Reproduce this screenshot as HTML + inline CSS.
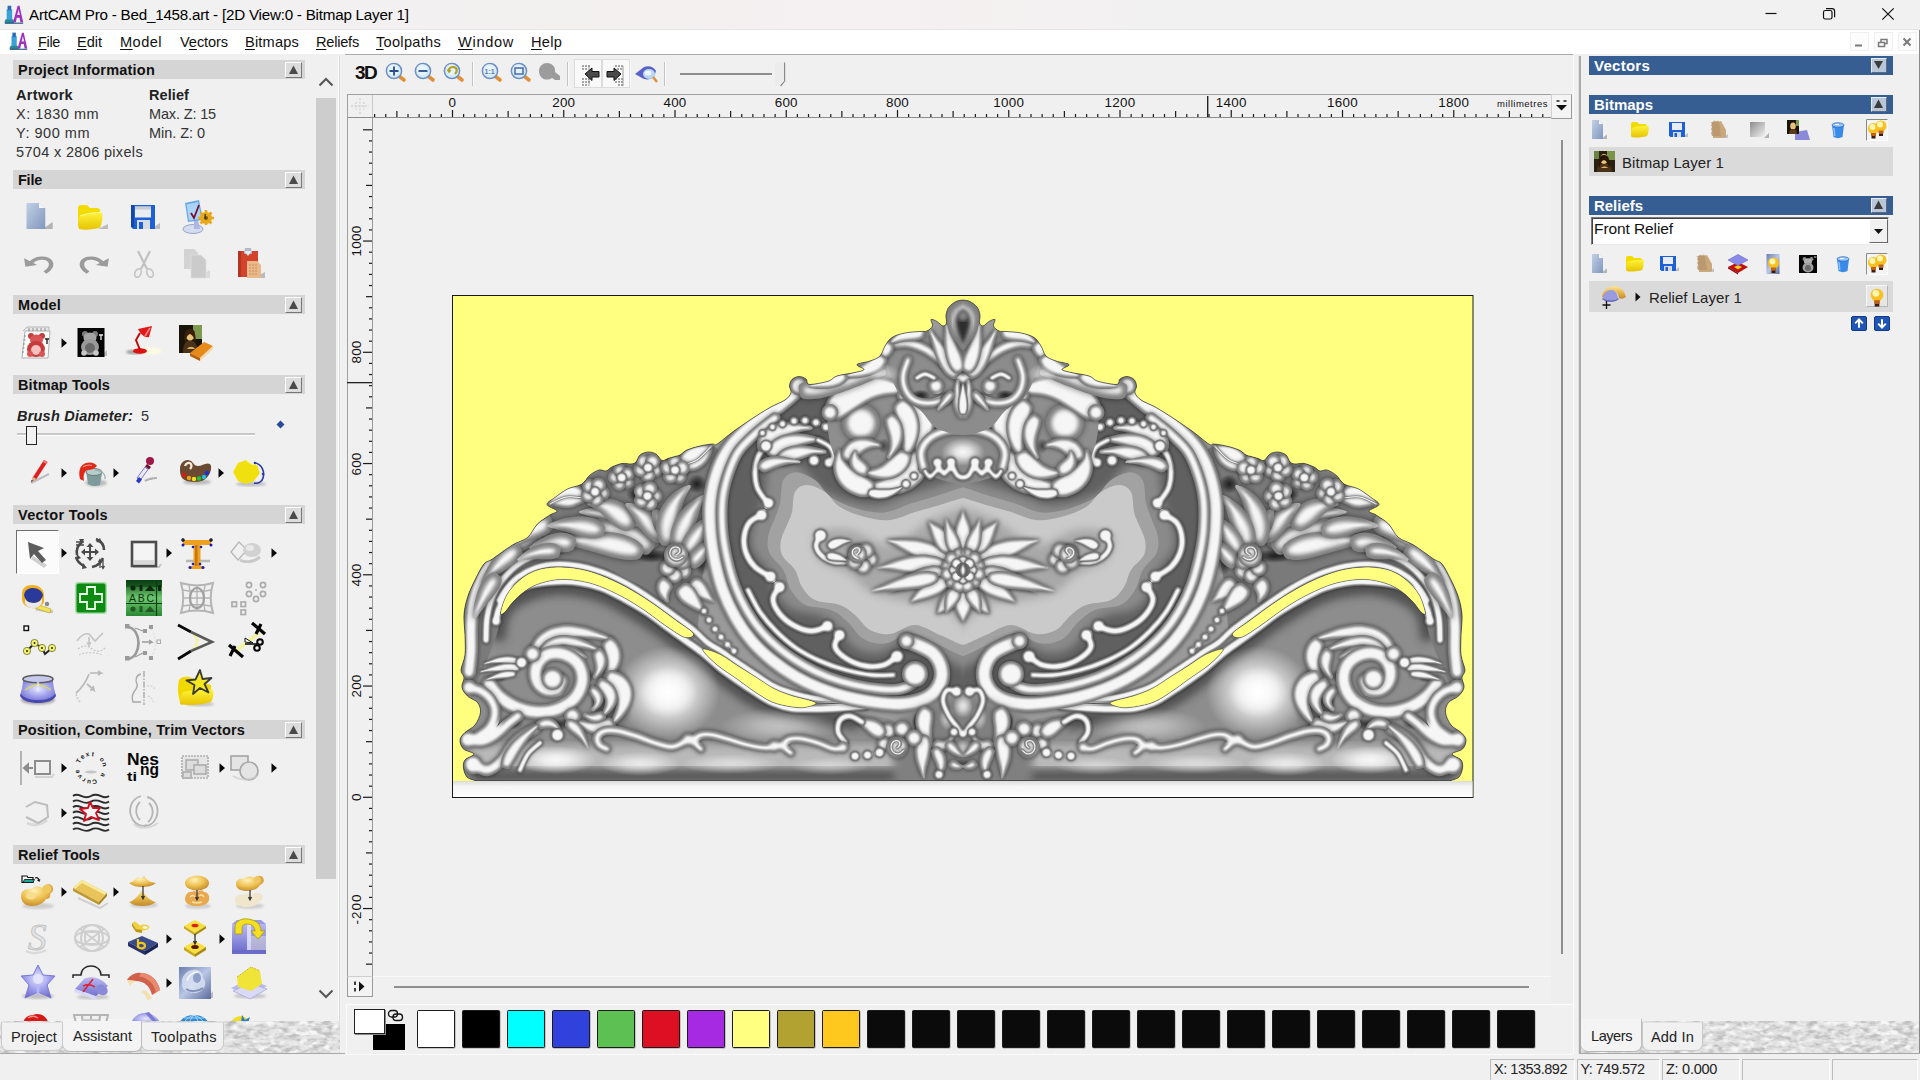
<!DOCTYPE html>
<html lang="en"><head><meta charset="utf-8"><title>ArtCAM Pro - Bed_1458.art</title>
<style>
html,body{margin:0;padding:0;}
body{width:1920px;height:1080px;overflow:hidden;background:#f0f0f0;position:relative;font-family:"Liberation Sans",sans-serif;}
div{position:absolute;box-sizing:border-box;}
svg{position:absolute;overflow:visible;}
.t{white-space:nowrap;line-height:1;}
u{text-decoration-thickness:1px;text-underline-offset:2px;}
</style></head>
<body>
<div style="left:0px;top:0px;width:1920px;height:30px;background:linear-gradient(90deg,#f1f1f1 0%,#f3f0f0 30%,#f5f0f1 45%,#f2f1f1 60%,#f1f1f1 100%);"></div>
<div style="left:0px;top:29px;width:1920px;height:1px;background:#e6e6e6;"></div>
<div class="t" style="left:29px;top:7.32px;font-size:15.2px;color:#000;letter-spacing:-0.224px;">ArtCAM Pro - Bed_1458.art - [2D View:0 - Bitmap Layer 1]</div>
<svg style="left:1760px;top:4px" width="140" height="22" viewBox="0 0 140 22"><path d="M5.5 9.5h11" stroke="#111" stroke-width="1.2" fill="none"/><rect x="63.5" y="6.5" width="8.5" height="8.5" rx="1.8" fill="none" stroke="#111" stroke-width="1.2"/><path d="M66 4.6h6a2.6 2.6 0 0 1 2.6 2.6v6" fill="none" stroke="#111" stroke-width="1.2"/><path d="M122.3 4.3l11.4 11.4M133.7 4.3l-11.4 11.4" stroke="#111" stroke-width="1.2" fill="none"/></svg>
<div style="left:0px;top:30px;width:1920px;height:24px;background:#ffffff;"></div>
<div style="left:345px;top:54px;width:1228px;height:1px;background:#a9a9a9;"></div>
<div class="t" style="left:38px;top:34.85px;font-size:14.6px;color:#111;letter-spacing:-0.382px;"><u>F</u>ile</div>
<div class="t" style="left:77px;top:34.85px;font-size:14.6px;color:#111;letter-spacing:-0.039px;"><u>E</u>dit</div>
<div class="t" style="left:120px;top:34.85px;font-size:14.6px;color:#111;letter-spacing:0.447px;"><u>M</u>odel</div>
<div class="t" style="left:180px;top:34.85px;font-size:14.6px;color:#111;letter-spacing:-0.099px;">V<u>e</u>ctors</div>
<div class="t" style="left:245px;top:34.85px;font-size:14.6px;color:#111;letter-spacing:0.180px;"><u>B</u>itmaps</div>
<div class="t" style="left:316px;top:34.85px;font-size:14.6px;color:#111;letter-spacing:-0.233px;"><u>R</u>eliefs</div>
<div class="t" style="left:376px;top:34.85px;font-size:14.6px;color:#111;letter-spacing:0.278px;"><u>T</u>oolpaths</div>
<div class="t" style="left:458px;top:34.85px;font-size:14.6px;color:#111;letter-spacing:0.679px;"><u>W</u>indow</div>
<div class="t" style="left:531px;top:34.85px;font-size:14.6px;color:#111;letter-spacing:0.243px;"><u>H</u>elp</div>
<div style="left:1850px;top:32px;width:19px;height:19px;background:#fcfcfc;border:1px solid #f0f0f0;"></div>
<div style="left:1874px;top:32px;width:19px;height:19px;background:#fcfcfc;border:1px solid #f0f0f0;"></div>
<div style="left:1898px;top:32px;width:19px;height:19px;background:#fcfcfc;border:1px solid #f0f0f0;"></div>
<svg style="left:1850px;top:32px" width="70" height="20" viewBox="0 0 70 20"><path d="M5 13.5h7" stroke="#7a7a7a" stroke-width="2"/><path d="M28.5 10.5h6v4h-6zM31 10V7.5h6v4h-2" fill="none" stroke="#7a7a7a" stroke-width="1.5"/><path d="M53.5 6.5l7 7M60.5 6.5l-7 7" stroke="#7a7a7a" stroke-width="2"/></svg>
<div style="left:1919px;top:30px;width:1px;height:1050px;background:#8a8a8a;"></div>
<div style="left:338px;top:56px;width:1px;height:998px;background:#fbfbfb;"></div>
<div style="left:339px;top:56px;width:1px;height:998px;background:#d9d9d9;"></div>
<div style="left:13px;top:60px;width:292px;height:19px;background:#d5d5d5;"></div>
<div class="t" style="left:18px;top:63.24px;font-size:14.5px;color:#111;letter-spacing:0.214px;font-weight:bold;">Project Information</div>
<div style="left:285px;top:62px;width:17px;height:16px;background:#dcdcdc;border-top:1px solid #fff;border-left:1px solid #fff;border-right:1px solid #777;border-bottom:1px solid #777;"></div>
<svg style="left:288px;top:65px" width="11" height="10" viewBox="0 0 11 10"><path d="M5.5 0.5L10 9H1z" fill="#4a4a4a"/></svg>
<div style="left:13px;top:170px;width:292px;height:19px;background:#d5d5d5;"></div>
<div class="t" style="left:18px;top:173.24px;font-size:14.5px;color:#111;letter-spacing:-0.245px;font-weight:bold;">File</div>
<div style="left:285px;top:172px;width:17px;height:16px;background:#dcdcdc;border-top:1px solid #fff;border-left:1px solid #fff;border-right:1px solid #777;border-bottom:1px solid #777;"></div>
<svg style="left:288px;top:175px" width="11" height="10" viewBox="0 0 11 10"><path d="M5.5 0.5L10 9H1z" fill="#4a4a4a"/></svg>
<div style="left:13px;top:295px;width:292px;height:19px;background:#d5d5d5;"></div>
<div class="t" style="left:18px;top:298.24px;font-size:14.5px;color:#111;letter-spacing:0.223px;font-weight:bold;">Model</div>
<div style="left:285px;top:297px;width:17px;height:16px;background:#dcdcdc;border-top:1px solid #fff;border-left:1px solid #fff;border-right:1px solid #777;border-bottom:1px solid #777;"></div>
<svg style="left:288px;top:300px" width="11" height="10" viewBox="0 0 11 10"><path d="M5.5 0.5L10 9H1z" fill="#4a4a4a"/></svg>
<div style="left:13px;top:375px;width:292px;height:19px;background:#d5d5d5;"></div>
<div class="t" style="left:18px;top:378.24px;font-size:14.5px;color:#111;letter-spacing:0.103px;font-weight:bold;">Bitmap Tools</div>
<div style="left:285px;top:377px;width:17px;height:16px;background:#dcdcdc;border-top:1px solid #fff;border-left:1px solid #fff;border-right:1px solid #777;border-bottom:1px solid #777;"></div>
<svg style="left:288px;top:380px" width="11" height="10" viewBox="0 0 11 10"><path d="M5.5 0.5L10 9H1z" fill="#4a4a4a"/></svg>
<div style="left:13px;top:505px;width:292px;height:19px;background:#d5d5d5;"></div>
<div class="t" style="left:18px;top:508.24px;font-size:14.5px;color:#111;letter-spacing:0.338px;font-weight:bold;">Vector Tools</div>
<div style="left:285px;top:507px;width:17px;height:16px;background:#dcdcdc;border-top:1px solid #fff;border-left:1px solid #fff;border-right:1px solid #777;border-bottom:1px solid #777;"></div>
<svg style="left:288px;top:510px" width="11" height="10" viewBox="0 0 11 10"><path d="M5.5 0.5L10 9H1z" fill="#4a4a4a"/></svg>
<div style="left:13px;top:720px;width:292px;height:19px;background:#d5d5d5;"></div>
<div class="t" style="left:18px;top:723.24px;font-size:14.5px;color:#111;letter-spacing:0.149px;font-weight:bold;">Position, Combine, Trim Vectors</div>
<div style="left:285px;top:722px;width:17px;height:16px;background:#dcdcdc;border-top:1px solid #fff;border-left:1px solid #fff;border-right:1px solid #777;border-bottom:1px solid #777;"></div>
<svg style="left:288px;top:725px" width="11" height="10" viewBox="0 0 11 10"><path d="M5.5 0.5L10 9H1z" fill="#4a4a4a"/></svg>
<div style="left:13px;top:845px;width:292px;height:19px;background:#d5d5d5;"></div>
<div class="t" style="left:18px;top:848.24px;font-size:14.5px;color:#111;letter-spacing:0.075px;font-weight:bold;">Relief Tools</div>
<div style="left:285px;top:847px;width:17px;height:16px;background:#dcdcdc;border-top:1px solid #fff;border-left:1px solid #fff;border-right:1px solid #777;border-bottom:1px solid #777;"></div>
<svg style="left:288px;top:850px" width="11" height="10" viewBox="0 0 11 10"><path d="M5.5 0.5L10 9H1z" fill="#4a4a4a"/></svg>
<div class="t" style="left:16px;top:88.14px;font-size:14.5px;color:#222;letter-spacing:0.317px;font-weight:bold;">Artwork</div>
<div class="t" style="left:149px;top:88.14px;font-size:14.5px;color:#222;letter-spacing:0.086px;font-weight:bold;">Relief</div>
<div class="t" style="left:16px;top:107.14px;font-size:14.5px;color:#333;letter-spacing:0.483px;">X: 1830 mm</div>
<div class="t" style="left:149px;top:107.14px;font-size:14.5px;color:#333;letter-spacing:-0.149px;">Max. Z: 15</div>
<div class="t" style="left:16px;top:126.14px;font-size:14.5px;color:#333;letter-spacing:0.522px;">Y: 900 mm</div>
<div class="t" style="left:149px;top:126.14px;font-size:14.5px;color:#333;letter-spacing:-0.044px;">Min. Z: 0</div>
<div class="t" style="left:16px;top:145.14px;font-size:14.5px;color:#333;letter-spacing:0.338px;">5704 x 2806 pixels</div>
<div class="t" style="left:17px;top:409.24px;font-size:14.5px;color:#222;letter-spacing:0.213px;font-weight:bold;font-style:italic;">Brush Diameter:</div>
<div class="t" style="left:141px;top:409.24px;font-size:14.5px;color:#333;">5</div>
<div style="left:17px;top:433px;width:238px;height:2px;background:#c8c8c8;"></div>
<div style="left:17px;top:435px;width:238px;height:1px;background:#fdfdfd;"></div>
<div style="left:26px;top:426px;width:11px;height:19px;background:#f2f2f2;border:1.5px solid #222;"></div>
<svg style="left:276px;top:420px" width="9" height="9" viewBox="0 0 9 9"><path d="M4.5 0.5L8.5 4.5L4.5 8.5L0.5 4.5z" fill="#2a4a9a"/></svg>
<div style="left:316px;top:98px;width:20px;height:781px;background:#cdcdcd;"></div>
<svg style="left:316px;top:74px" width="20" height="16" viewBox="0 0 20 16"><path d="M3.5 11.5L10 5l6.5 6.5" fill="none" stroke="#555" stroke-width="2"/></svg>
<svg style="left:316px;top:986px" width="20" height="16" viewBox="0 0 20 16"><path d="M3.5 4.5L10 11l6.5-6.5" fill="none" stroke="#555" stroke-width="2"/></svg>
<div style="left:0px;top:1021px;width:340px;height:33px;background:#dedede;"></div>
<svg style="left:0;top:1021px" width="340" height="33" viewBox="0 0 340 33"><defs><filter id="nz" x="0" y="0" width="100%" height="100%" color-interpolation-filters="sRGB"><feTurbulence type="fractalNoise" baseFrequency="0.09 0.22" numOctaves="3" seed="7"/><feColorMatrix type="matrix" values="0 0 0 0 0.74  0 0 0 0 0.74  0 0 0 0 0.74  0 3.2 0 0 -1.25"/></filter><filter id="nz2" x="0" y="0" width="100%" height="100%" color-interpolation-filters="sRGB"><feTurbulence type="fractalNoise" baseFrequency="0.12 0.2" numOctaves="2" seed="21"/><feColorMatrix type="matrix" values="0 0 0 0 0.97  0 0 0 0 0.97  0 0 0 0 0.97  3 0 0 0 -1.3"/></filter></defs><rect x="0" y="0" width="340" height="33" fill="#e2e2e2"/><rect x="0" y="0" width="340" height="33" filter="url(#nz)"/><rect x="0" y="0" width="340" height="33" filter="url(#nz2)"/></svg>
<div style="left:1px;top:1022px;width:62px;height:29px;background:#f1f1f1;border-radius:0 0 7px 7px;border:1px solid #c9c9c9;border-top-color:#e2e2e2;"></div>
<div class="t" style="left:11px;top:1030.35px;font-size:14.6px;color:#222;letter-spacing:0.080px;">Project</div>
<div style="left:141px;top:1022px;width:83px;height:29px;background:#f1f1f1;border-radius:0 0 7px 7px;border:1px solid #c9c9c9;border-top-color:#e2e2e2;"></div>
<div class="t" style="left:151px;top:1030.35px;font-size:14.6px;color:#222;letter-spacing:0.389px;">Toolpaths</div>
<div style="left:63px;top:1019px;width:79px;height:33px;background:#f4f4f4;border-radius:0 0 7px 7px;border-right:1px solid #bdbdbd;border-bottom:1px solid #b5b5b5;"></div>
<div class="t" style="left:73px;top:1029.35px;font-size:14.6px;color:#222;letter-spacing:-0.026px;">Assistant</div>
<div style="left:0px;top:1053px;width:345px;height:1px;background:#a8a8a8;"></div>
<div style="left:0px;top:1054px;width:1920px;height:26px;background:#f0f0f0;"></div>
<div class="t" style="left:355px;top:63.42px;font-size:19px;color:#111;letter-spacing:-1.645px;font-weight:bold;">3D</div>
<div style="left:472px;top:62px;width:1px;height:24px;background:#c4c4c4;"></div>
<div style="left:473px;top:62px;width:1px;height:24px;background:#fafafa;"></div>
<div style="left:567px;top:62px;width:1px;height:24px;background:#c4c4c4;"></div>
<div style="left:568px;top:62px;width:1px;height:24px;background:#fafafa;"></div>
<div style="left:574px;top:62px;width:1px;height:24px;background:#c4c4c4;"></div>
<div style="left:575px;top:62px;width:1px;height:24px;background:#fafafa;"></div>
<div style="left:664px;top:62px;width:1px;height:24px;background:#c4c4c4;"></div>
<div style="left:665px;top:62px;width:1px;height:24px;background:#fafafa;"></div>
<div style="left:575px;top:60px;width:27px;height:27px;background:#f8f8f8;"></div>
<div style="left:604px;top:60px;width:27px;height:27px;background:#f8f8f8;"></div>
<div style="left:680px;top:73px;width:92px;height:2px;background:#8d8d8d;"></div>
<svg style="left:773px;top:61px" width="14" height="28" viewBox="0 0 14 28"><path d="M11.5 1.5V20l-4 5" fill="none" stroke="#8a8a8a" stroke-width="1.4"/><path d="M2 1.5h9V20l-4 4.5H2z" fill="#ececec"/></svg>
<div style="left:347px;top:94px;width:1225px;height:1px;background:#a0a0a0;"></div>
<div style="left:347px;top:117px;width:1204px;height:1px;background:#8c8c8c;"></div>
<div style="left:347px;top:94px;width:1px;height:903px;background:#a0a0a0;"></div>
<div style="left:372px;top:118px;width:1px;height:858px;background:#9a9a9a;"></div>
<div style="left:372px;top:95px;width:1px;height:22px;background:#c8c8c8;"></div>
<div style="left:373px;top:118px;width:1178px;height:858px;background:#f0f0f0;"></div>
<div style="left:1551px;top:118px;width:22px;height:886px;background:#eeeeee;"></div>
<svg style="left:0;top:0" width="1920" height="120" viewBox="0 0 1920 120"><rect x="374.02" y="114" width="1.2" height="3" fill="#1a1a1a"/><rect x="385.15" y="114" width="1.2" height="3" fill="#1a1a1a"/><rect x="396.27" y="111" width="1.2" height="6" fill="#1a1a1a"/><rect x="407.40" y="114" width="1.2" height="3" fill="#1a1a1a"/><rect x="418.52" y="114" width="1.2" height="3" fill="#1a1a1a"/><rect x="429.65" y="114" width="1.2" height="3" fill="#1a1a1a"/><rect x="440.77" y="114" width="1.2" height="3" fill="#1a1a1a"/><rect x="451.90" y="110" width="1.2" height="7" fill="#1a1a1a"/><rect x="463.02" y="114" width="1.2" height="3" fill="#1a1a1a"/><rect x="474.15" y="114" width="1.2" height="3" fill="#1a1a1a"/><rect x="485.27" y="114" width="1.2" height="3" fill="#1a1a1a"/><rect x="496.40" y="114" width="1.2" height="3" fill="#1a1a1a"/><rect x="507.52" y="111" width="1.2" height="6" fill="#1a1a1a"/><rect x="518.65" y="114" width="1.2" height="3" fill="#1a1a1a"/><rect x="529.77" y="114" width="1.2" height="3" fill="#1a1a1a"/><rect x="540.90" y="114" width="1.2" height="3" fill="#1a1a1a"/><rect x="552.02" y="114" width="1.2" height="3" fill="#1a1a1a"/><rect x="563.15" y="110" width="1.2" height="7" fill="#1a1a1a"/><rect x="574.27" y="114" width="1.2" height="3" fill="#1a1a1a"/><rect x="585.40" y="114" width="1.2" height="3" fill="#1a1a1a"/><rect x="596.52" y="114" width="1.2" height="3" fill="#1a1a1a"/><rect x="607.65" y="114" width="1.2" height="3" fill="#1a1a1a"/><rect x="618.77" y="111" width="1.2" height="6" fill="#1a1a1a"/><rect x="629.90" y="114" width="1.2" height="3" fill="#1a1a1a"/><rect x="641.02" y="114" width="1.2" height="3" fill="#1a1a1a"/><rect x="652.15" y="114" width="1.2" height="3" fill="#1a1a1a"/><rect x="663.27" y="114" width="1.2" height="3" fill="#1a1a1a"/><rect x="674.40" y="110" width="1.2" height="7" fill="#1a1a1a"/><rect x="685.52" y="114" width="1.2" height="3" fill="#1a1a1a"/><rect x="696.65" y="114" width="1.2" height="3" fill="#1a1a1a"/><rect x="707.77" y="114" width="1.2" height="3" fill="#1a1a1a"/><rect x="718.90" y="114" width="1.2" height="3" fill="#1a1a1a"/><rect x="730.02" y="111" width="1.2" height="6" fill="#1a1a1a"/><rect x="741.15" y="114" width="1.2" height="3" fill="#1a1a1a"/><rect x="752.27" y="114" width="1.2" height="3" fill="#1a1a1a"/><rect x="763.40" y="114" width="1.2" height="3" fill="#1a1a1a"/><rect x="774.52" y="114" width="1.2" height="3" fill="#1a1a1a"/><rect x="785.65" y="110" width="1.2" height="7" fill="#1a1a1a"/><rect x="796.77" y="114" width="1.2" height="3" fill="#1a1a1a"/><rect x="807.90" y="114" width="1.2" height="3" fill="#1a1a1a"/><rect x="819.02" y="114" width="1.2" height="3" fill="#1a1a1a"/><rect x="830.15" y="114" width="1.2" height="3" fill="#1a1a1a"/><rect x="841.27" y="111" width="1.2" height="6" fill="#1a1a1a"/><rect x="852.40" y="114" width="1.2" height="3" fill="#1a1a1a"/><rect x="863.52" y="114" width="1.2" height="3" fill="#1a1a1a"/><rect x="874.65" y="114" width="1.2" height="3" fill="#1a1a1a"/><rect x="885.77" y="114" width="1.2" height="3" fill="#1a1a1a"/><rect x="896.90" y="110" width="1.2" height="7" fill="#1a1a1a"/><rect x="908.02" y="114" width="1.2" height="3" fill="#1a1a1a"/><rect x="919.15" y="114" width="1.2" height="3" fill="#1a1a1a"/><rect x="930.27" y="114" width="1.2" height="3" fill="#1a1a1a"/><rect x="941.40" y="114" width="1.2" height="3" fill="#1a1a1a"/><rect x="952.52" y="111" width="1.2" height="6" fill="#1a1a1a"/><rect x="963.65" y="114" width="1.2" height="3" fill="#1a1a1a"/><rect x="974.77" y="114" width="1.2" height="3" fill="#1a1a1a"/><rect x="985.90" y="114" width="1.2" height="3" fill="#1a1a1a"/><rect x="997.02" y="114" width="1.2" height="3" fill="#1a1a1a"/><rect x="1008.15" y="110" width="1.2" height="7" fill="#1a1a1a"/><rect x="1019.27" y="114" width="1.2" height="3" fill="#1a1a1a"/><rect x="1030.40" y="114" width="1.2" height="3" fill="#1a1a1a"/><rect x="1041.53" y="114" width="1.2" height="3" fill="#1a1a1a"/><rect x="1052.65" y="114" width="1.2" height="3" fill="#1a1a1a"/><rect x="1063.78" y="111" width="1.2" height="6" fill="#1a1a1a"/><rect x="1074.90" y="114" width="1.2" height="3" fill="#1a1a1a"/><rect x="1086.03" y="114" width="1.2" height="3" fill="#1a1a1a"/><rect x="1097.15" y="114" width="1.2" height="3" fill="#1a1a1a"/><rect x="1108.28" y="114" width="1.2" height="3" fill="#1a1a1a"/><rect x="1119.40" y="110" width="1.2" height="7" fill="#1a1a1a"/><rect x="1130.53" y="114" width="1.2" height="3" fill="#1a1a1a"/><rect x="1141.65" y="114" width="1.2" height="3" fill="#1a1a1a"/><rect x="1152.78" y="114" width="1.2" height="3" fill="#1a1a1a"/><rect x="1163.90" y="114" width="1.2" height="3" fill="#1a1a1a"/><rect x="1175.03" y="111" width="1.2" height="6" fill="#1a1a1a"/><rect x="1186.15" y="114" width="1.2" height="3" fill="#1a1a1a"/><rect x="1197.28" y="114" width="1.2" height="3" fill="#1a1a1a"/><rect x="1208.40" y="114" width="1.2" height="3" fill="#1a1a1a"/><rect x="1219.53" y="114" width="1.2" height="3" fill="#1a1a1a"/><rect x="1230.65" y="110" width="1.2" height="7" fill="#1a1a1a"/><rect x="1241.78" y="114" width="1.2" height="3" fill="#1a1a1a"/><rect x="1252.90" y="114" width="1.2" height="3" fill="#1a1a1a"/><rect x="1264.03" y="114" width="1.2" height="3" fill="#1a1a1a"/><rect x="1275.15" y="114" width="1.2" height="3" fill="#1a1a1a"/><rect x="1286.28" y="111" width="1.2" height="6" fill="#1a1a1a"/><rect x="1297.40" y="114" width="1.2" height="3" fill="#1a1a1a"/><rect x="1308.53" y="114" width="1.2" height="3" fill="#1a1a1a"/><rect x="1319.65" y="114" width="1.2" height="3" fill="#1a1a1a"/><rect x="1330.78" y="114" width="1.2" height="3" fill="#1a1a1a"/><rect x="1341.90" y="110" width="1.2" height="7" fill="#1a1a1a"/><rect x="1353.03" y="114" width="1.2" height="3" fill="#1a1a1a"/><rect x="1364.15" y="114" width="1.2" height="3" fill="#1a1a1a"/><rect x="1375.28" y="114" width="1.2" height="3" fill="#1a1a1a"/><rect x="1386.40" y="114" width="1.2" height="3" fill="#1a1a1a"/><rect x="1397.53" y="111" width="1.2" height="6" fill="#1a1a1a"/><rect x="1408.65" y="114" width="1.2" height="3" fill="#1a1a1a"/><rect x="1419.78" y="114" width="1.2" height="3" fill="#1a1a1a"/><rect x="1430.90" y="114" width="1.2" height="3" fill="#1a1a1a"/><rect x="1442.03" y="114" width="1.2" height="3" fill="#1a1a1a"/><rect x="1453.15" y="110" width="1.2" height="7" fill="#1a1a1a"/><rect x="1464.28" y="114" width="1.2" height="3" fill="#1a1a1a"/><rect x="1475.40" y="114" width="1.2" height="3" fill="#1a1a1a"/><rect x="1486.53" y="114" width="1.2" height="3" fill="#1a1a1a"/><rect x="1497.65" y="114" width="1.2" height="3" fill="#1a1a1a"/><rect x="1508.78" y="111" width="1.2" height="6" fill="#1a1a1a"/><rect x="1519.90" y="114" width="1.2" height="3" fill="#1a1a1a"/><rect x="1531.03" y="114" width="1.2" height="3" fill="#1a1a1a"/><rect x="1542.15" y="114" width="1.2" height="3" fill="#1a1a1a"/><rect x="1207" y="96" width="1.4" height="21" fill="#222"/></svg>
<div class="t" style="left:448.5px;top:96.43px;font-size:13.4px;color:#111;letter-spacing:0.547px;">0</div>
<div class="t" style="left:552.25px;top:96.43px;font-size:13.4px;color:#111;letter-spacing:0.214px;">200</div>
<div class="t" style="left:663.5px;top:96.43px;font-size:13.4px;color:#111;letter-spacing:0.214px;">400</div>
<div class="t" style="left:774.75px;top:96.43px;font-size:13.4px;color:#111;letter-spacing:0.214px;">600</div>
<div class="t" style="left:886.0px;top:96.43px;font-size:13.4px;color:#111;letter-spacing:0.214px;">800</div>
<div class="t" style="left:993.25px;top:96.43px;font-size:13.4px;color:#111;letter-spacing:0.297px;">1000</div>
<div class="t" style="left:1104.5px;top:96.43px;font-size:13.4px;color:#111;letter-spacing:0.297px;">1200</div>
<div class="t" style="left:1215.75px;top:96.43px;font-size:13.4px;color:#111;letter-spacing:0.297px;">1400</div>
<div class="t" style="left:1327.0px;top:96.43px;font-size:13.4px;color:#111;letter-spacing:0.297px;">1600</div>
<div class="t" style="left:1438.25px;top:96.43px;font-size:13.4px;color:#111;letter-spacing:0.297px;">1800</div>
<div class="t" style="left:1497px;top:99.41px;font-size:9.5px;color:#111;letter-spacing:0.510px;font-family:"DejaVu Sans",sans-serif;">millimetres</div>
<div style="left:1551px;top:94px;width:21px;height:25px;background:#f4f4f4;border:1px solid #9a9a9a;border-top-color:#d0d0d0;border-left-color:#d0d0d0;"></div>
<svg style="left:1554px;top:98px" width="15" height="16" viewBox="0 0 15 16"><path d="M2.5 3h3M9.5 3h3" stroke="#222" stroke-width="1.6"/><path d="M2 7h11L7.5 12.5z" fill="#111"/></svg>
<svg style="left:0;top:0" width="380" height="1000" viewBox="0 0 380 1000"><rect x="363" y="129.20" width="9" height="1.2" fill="#1a1a1a"/><rect x="369" y="140.32" width="3" height="1.2" fill="#1a1a1a"/><rect x="369" y="151.45" width="3" height="1.2" fill="#1a1a1a"/><rect x="369" y="162.57" width="3" height="1.2" fill="#1a1a1a"/><rect x="369" y="173.70" width="3" height="1.2" fill="#1a1a1a"/><rect x="366" y="184.82" width="6" height="1.2" fill="#1a1a1a"/><rect x="369" y="195.95" width="3" height="1.2" fill="#1a1a1a"/><rect x="369" y="207.07" width="3" height="1.2" fill="#1a1a1a"/><rect x="369" y="218.20" width="3" height="1.2" fill="#1a1a1a"/><rect x="369" y="229.32" width="3" height="1.2" fill="#1a1a1a"/><rect x="363" y="240.45" width="9" height="1.2" fill="#1a1a1a"/><rect x="369" y="251.57" width="3" height="1.2" fill="#1a1a1a"/><rect x="369" y="262.70" width="3" height="1.2" fill="#1a1a1a"/><rect x="369" y="273.82" width="3" height="1.2" fill="#1a1a1a"/><rect x="369" y="284.95" width="3" height="1.2" fill="#1a1a1a"/><rect x="366" y="296.07" width="6" height="1.2" fill="#1a1a1a"/><rect x="369" y="307.20" width="3" height="1.2" fill="#1a1a1a"/><rect x="369" y="318.32" width="3" height="1.2" fill="#1a1a1a"/><rect x="369" y="329.45" width="3" height="1.2" fill="#1a1a1a"/><rect x="369" y="340.57" width="3" height="1.2" fill="#1a1a1a"/><rect x="363" y="351.70" width="9" height="1.2" fill="#1a1a1a"/><rect x="369" y="362.82" width="3" height="1.2" fill="#1a1a1a"/><rect x="369" y="373.95" width="3" height="1.2" fill="#1a1a1a"/><rect x="369" y="385.07" width="3" height="1.2" fill="#1a1a1a"/><rect x="369" y="396.20" width="3" height="1.2" fill="#1a1a1a"/><rect x="366" y="407.32" width="6" height="1.2" fill="#1a1a1a"/><rect x="369" y="418.45" width="3" height="1.2" fill="#1a1a1a"/><rect x="369" y="429.57" width="3" height="1.2" fill="#1a1a1a"/><rect x="369" y="440.70" width="3" height="1.2" fill="#1a1a1a"/><rect x="369" y="451.82" width="3" height="1.2" fill="#1a1a1a"/><rect x="363" y="462.95" width="9" height="1.2" fill="#1a1a1a"/><rect x="369" y="474.07" width="3" height="1.2" fill="#1a1a1a"/><rect x="369" y="485.20" width="3" height="1.2" fill="#1a1a1a"/><rect x="369" y="496.32" width="3" height="1.2" fill="#1a1a1a"/><rect x="369" y="507.45" width="3" height="1.2" fill="#1a1a1a"/><rect x="366" y="518.57" width="6" height="1.2" fill="#1a1a1a"/><rect x="369" y="529.70" width="3" height="1.2" fill="#1a1a1a"/><rect x="369" y="540.82" width="3" height="1.2" fill="#1a1a1a"/><rect x="369" y="551.95" width="3" height="1.2" fill="#1a1a1a"/><rect x="369" y="563.07" width="3" height="1.2" fill="#1a1a1a"/><rect x="363" y="574.20" width="9" height="1.2" fill="#1a1a1a"/><rect x="369" y="585.32" width="3" height="1.2" fill="#1a1a1a"/><rect x="369" y="596.45" width="3" height="1.2" fill="#1a1a1a"/><rect x="369" y="607.57" width="3" height="1.2" fill="#1a1a1a"/><rect x="369" y="618.70" width="3" height="1.2" fill="#1a1a1a"/><rect x="366" y="629.82" width="6" height="1.2" fill="#1a1a1a"/><rect x="369" y="640.95" width="3" height="1.2" fill="#1a1a1a"/><rect x="369" y="652.07" width="3" height="1.2" fill="#1a1a1a"/><rect x="369" y="663.20" width="3" height="1.2" fill="#1a1a1a"/><rect x="369" y="674.32" width="3" height="1.2" fill="#1a1a1a"/><rect x="363" y="685.45" width="9" height="1.2" fill="#1a1a1a"/><rect x="369" y="696.57" width="3" height="1.2" fill="#1a1a1a"/><rect x="369" y="707.70" width="3" height="1.2" fill="#1a1a1a"/><rect x="369" y="718.82" width="3" height="1.2" fill="#1a1a1a"/><rect x="369" y="729.95" width="3" height="1.2" fill="#1a1a1a"/><rect x="366" y="741.07" width="6" height="1.2" fill="#1a1a1a"/><rect x="369" y="752.20" width="3" height="1.2" fill="#1a1a1a"/><rect x="369" y="763.32" width="3" height="1.2" fill="#1a1a1a"/><rect x="369" y="774.45" width="3" height="1.2" fill="#1a1a1a"/><rect x="369" y="785.57" width="3" height="1.2" fill="#1a1a1a"/><rect x="363" y="796.70" width="9" height="1.2" fill="#1a1a1a"/><rect x="369" y="807.82" width="3" height="1.2" fill="#1a1a1a"/><rect x="369" y="818.95" width="3" height="1.2" fill="#1a1a1a"/><rect x="369" y="830.07" width="3" height="1.2" fill="#1a1a1a"/><rect x="369" y="841.20" width="3" height="1.2" fill="#1a1a1a"/><rect x="366" y="852.32" width="6" height="1.2" fill="#1a1a1a"/><rect x="369" y="863.45" width="3" height="1.2" fill="#1a1a1a"/><rect x="369" y="874.57" width="3" height="1.2" fill="#1a1a1a"/><rect x="369" y="885.70" width="3" height="1.2" fill="#1a1a1a"/><rect x="369" y="896.82" width="3" height="1.2" fill="#1a1a1a"/><rect x="363" y="907.95" width="9" height="1.2" fill="#1a1a1a"/><rect x="369" y="919.07" width="3" height="1.2" fill="#1a1a1a"/><rect x="369" y="930.20" width="3" height="1.2" fill="#1a1a1a"/><rect x="369" y="941.32" width="3" height="1.2" fill="#1a1a1a"/><rect x="369" y="952.45" width="3" height="1.2" fill="#1a1a1a"/><rect x="366" y="963.57" width="6" height="1.2" fill="#1a1a1a"/><rect x="347" y="382" width="25" height="1.3" fill="#222"/></svg>
<div class="t" style="left:307px;top:231.05px;width:100px;height:20px;line-height:20px;text-align:center;font-size:13.4px;color:#111;transform:rotate(-90deg);letter-spacing:0.297px;">1000</div>
<div class="t" style="left:307px;top:342.30px;width:100px;height:20px;line-height:20px;text-align:center;font-size:13.4px;color:#111;transform:rotate(-90deg);letter-spacing:0.214px;">800</div>
<div class="t" style="left:307px;top:453.55px;width:100px;height:20px;line-height:20px;text-align:center;font-size:13.4px;color:#111;transform:rotate(-90deg);letter-spacing:0.214px;">600</div>
<div class="t" style="left:307px;top:564.80px;width:100px;height:20px;line-height:20px;text-align:center;font-size:13.4px;color:#111;transform:rotate(-90deg);letter-spacing:0.214px;">400</div>
<div class="t" style="left:307px;top:676.05px;width:100px;height:20px;line-height:20px;text-align:center;font-size:13.4px;color:#111;transform:rotate(-90deg);letter-spacing:0.214px;">200</div>
<div class="t" style="left:307px;top:787.30px;width:100px;height:20px;line-height:20px;text-align:center;font-size:13.4px;color:#111;transform:rotate(-90deg);letter-spacing:0.547px;">0</div>
<div class="t" style="left:307px;top:898.55px;width:100px;height:20px;line-height:20px;text-align:center;font-size:13.4px;color:#111;transform:rotate(-90deg);letter-spacing:1.045px;">-200</div>
<svg style="left:350px;top:97px" width="20" height="18" viewBox="0 0 20 18"><path d="M1 9h18M10 1v16M6 5v8M14 5v8" stroke="#c9c9c9" stroke-width="1" stroke-dasharray="2 1.5" fill="none"/></svg>
<div style="left:347px;top:976px;width:26px;height:21px;background:#f3f3f3;border:1px solid #9c9c9c;border-top-color:#cfcfcf;"></div>
<svg style="left:352px;top:980px" width="16" height="13" viewBox="0 0 16 13"><path d="M3 1.5v3.5M3 8v3.5" stroke="#111" stroke-width="1.6"/><path d="M7 1.5L12.5 6.5L7 11.5z" fill="#111"/></svg>
<div style="left:394px;top:986px;width:1135px;height:2px;background:#8f8f8f;"></div>
<div style="left:1561px;top:140px;width:2px;height:814px;background:#8f8f8f;"></div>
<div style="left:373px;top:976px;width:1178px;height:1px;background:#fafafa;"></div>
<div style="left:1573px;top:56px;width:1px;height:998px;background:#fbfbfb;"></div>
<div style="left:346px;top:1004px;width:1227px;height:1px;background:#fbfbfb;"></div>
<div style="left:346px;top:1004px;width:1px;height:50px;background:#fbfbfb;"></div>
<div style="left:346px;top:1054px;width:1227px;height:1px;background:#fbfbfb;"></div>
<div style="left:373px;top:1024px;width:32px;height:26px;background:#000;"></div>
<div style="left:354px;top:1009px;width:31px;height:25px;background:#fff;border:1px solid #222;box-shadow:1px 1px 0 #888;"></div>
<svg style="left:387px;top:1009px" width="18" height="14" viewBox="0 0 18 14"><rect x="1.5" y="1.5" width="9" height="6.5" rx="3" fill="none" stroke="#111" stroke-width="1.3"/><rect x="6" y="5" width="9.5" height="6.5" rx="3" fill="none" stroke="#111" stroke-width="1.3"/></svg>
<div style="left:417px;top:1010px;width:38px;height:38px;background:#ffffff;border:1px solid #1c1c1c;border-radius:1.5px;box-shadow:0.5px 0.5px 0 #999;"></div>
<div style="left:462px;top:1010px;width:38px;height:38px;background:#000000;border:1px solid #1c1c1c;border-radius:1.5px;box-shadow:0.5px 0.5px 0 #999;"></div>
<div style="left:507px;top:1010px;width:38px;height:38px;background:#00ffff;border:1px solid #1c1c1c;border-radius:1.5px;box-shadow:0.5px 0.5px 0 #999;"></div>
<div style="left:552px;top:1010px;width:38px;height:38px;background:#3142dc;border:1px solid #1c1c1c;border-radius:1.5px;box-shadow:0.5px 0.5px 0 #999;"></div>
<div style="left:597px;top:1010px;width:38px;height:38px;background:#5cc052;border:1px solid #1c1c1c;border-radius:1.5px;box-shadow:0.5px 0.5px 0 #999;"></div>
<div style="left:642px;top:1010px;width:38px;height:38px;background:#dc1022;border:1px solid #1c1c1c;border-radius:1.5px;box-shadow:0.5px 0.5px 0 #999;"></div>
<div style="left:687px;top:1010px;width:38px;height:38px;background:#a52ae2;border:1px solid #1c1c1c;border-radius:1.5px;box-shadow:0.5px 0.5px 0 #999;"></div>
<div style="left:732px;top:1010px;width:38px;height:38px;background:#ffff80;border:1px solid #1c1c1c;border-radius:1.5px;box-shadow:0.5px 0.5px 0 #999;"></div>
<div style="left:777px;top:1010px;width:38px;height:38px;background:#b2a232;border:1px solid #1c1c1c;border-radius:1.5px;box-shadow:0.5px 0.5px 0 #999;"></div>
<div style="left:822px;top:1010px;width:38px;height:38px;background:#ffc81e;border:1px solid #1c1c1c;border-radius:1.5px;box-shadow:0.5px 0.5px 0 #999;"></div>
<div style="left:867px;top:1010px;width:38px;height:38px;background:#0b0b0b;border:1px solid #1c1c1c;border-radius:1.5px;box-shadow:0.5px 0.5px 0 #999;"></div>
<div style="left:912px;top:1010px;width:38px;height:38px;background:#0b0b0b;border:1px solid #1c1c1c;border-radius:1.5px;box-shadow:0.5px 0.5px 0 #999;"></div>
<div style="left:957px;top:1010px;width:38px;height:38px;background:#0b0b0b;border:1px solid #1c1c1c;border-radius:1.5px;box-shadow:0.5px 0.5px 0 #999;"></div>
<div style="left:1002px;top:1010px;width:38px;height:38px;background:#0b0b0b;border:1px solid #1c1c1c;border-radius:1.5px;box-shadow:0.5px 0.5px 0 #999;"></div>
<div style="left:1047px;top:1010px;width:38px;height:38px;background:#0b0b0b;border:1px solid #1c1c1c;border-radius:1.5px;box-shadow:0.5px 0.5px 0 #999;"></div>
<div style="left:1092px;top:1010px;width:38px;height:38px;background:#0b0b0b;border:1px solid #1c1c1c;border-radius:1.5px;box-shadow:0.5px 0.5px 0 #999;"></div>
<div style="left:1137px;top:1010px;width:38px;height:38px;background:#0b0b0b;border:1px solid #1c1c1c;border-radius:1.5px;box-shadow:0.5px 0.5px 0 #999;"></div>
<div style="left:1182px;top:1010px;width:38px;height:38px;background:#0b0b0b;border:1px solid #1c1c1c;border-radius:1.5px;box-shadow:0.5px 0.5px 0 #999;"></div>
<div style="left:1227px;top:1010px;width:38px;height:38px;background:#0b0b0b;border:1px solid #1c1c1c;border-radius:1.5px;box-shadow:0.5px 0.5px 0 #999;"></div>
<div style="left:1272px;top:1010px;width:38px;height:38px;background:#0b0b0b;border:1px solid #1c1c1c;border-radius:1.5px;box-shadow:0.5px 0.5px 0 #999;"></div>
<div style="left:1317px;top:1010px;width:38px;height:38px;background:#0b0b0b;border:1px solid #1c1c1c;border-radius:1.5px;box-shadow:0.5px 0.5px 0 #999;"></div>
<div style="left:1362px;top:1010px;width:38px;height:38px;background:#0b0b0b;border:1px solid #1c1c1c;border-radius:1.5px;box-shadow:0.5px 0.5px 0 #999;"></div>
<div style="left:1407px;top:1010px;width:38px;height:38px;background:#0b0b0b;border:1px solid #1c1c1c;border-radius:1.5px;box-shadow:0.5px 0.5px 0 #999;"></div>
<div style="left:1452px;top:1010px;width:38px;height:38px;background:#0b0b0b;border:1px solid #1c1c1c;border-radius:1.5px;box-shadow:0.5px 0.5px 0 #999;"></div>
<div style="left:1497px;top:1010px;width:38px;height:38px;background:#0b0b0b;border:1px solid #1c1c1c;border-radius:1.5px;box-shadow:0.5px 0.5px 0 #999;"></div>
<div style="left:1490px;top:1059px;width:85px;height:22px;border-left:1px solid #bdbdbd;border-top:1px solid #bdbdbd;border-right:1px solid #fdfdfd;"></div>
<div style="left:1577px;top:1059px;width:83px;height:22px;border-left:1px solid #bdbdbd;border-top:1px solid #bdbdbd;border-right:1px solid #fdfdfd;"></div>
<div style="left:1662px;top:1059px;width:78px;height:22px;border-left:1px solid #bdbdbd;border-top:1px solid #bdbdbd;border-right:1px solid #fdfdfd;"></div>
<div style="left:1742px;top:1059px;width:88px;height:22px;border-left:1px solid #bdbdbd;border-top:1px solid #bdbdbd;border-right:1px solid #fdfdfd;"></div>
<div style="left:1832px;top:1059px;width:86px;height:22px;border-left:1px solid #bdbdbd;border-top:1px solid #bdbdbd;border-right:1px solid #fdfdfd;"></div>
<div class="t" style="left:1494px;top:1062.24px;font-size:14.5px;color:#222;letter-spacing:-0.473px;">X: 1353.892</div>
<div class="t" style="left:1580.5px;top:1062.24px;font-size:14.5px;color:#222;letter-spacing:-0.534px;">Y: 749.572</div>
<div class="t" style="left:1666px;top:1062.24px;font-size:14.5px;color:#222;letter-spacing:-0.275px;">Z: 0.000</div>
<div style="left:1578px;top:56px;width:1px;height:998px;background:#e2e2e2;"></div>
<div style="left:1579px;top:56px;width:1.6px;height:998px;background:#ababab;"></div>
<div style="left:1589px;top:56px;width:304px;height:19px;background:#365e92;"></div>
<div class="t" style="left:1594px;top:57.80px;font-size:15px;color:#fff;letter-spacing:0.257px;font-weight:bold;">Vectors</div>
<div style="left:1871px;top:58px;width:16px;height:15px;background:#b9c6d8;border-top:1px solid #e6ecf4;border-left:1px solid #e6ecf4;border-right:1px solid #5a6a80;border-bottom:1px solid #5a6a80;"></div>
<svg style="left:1873px;top:60px" width="11" height="10" viewBox="0 0 11 10"><path d="M1 1h9L5.5 9z" fill="#3c3c3c"/></svg>
<div style="left:1589px;top:95px;width:304px;height:19px;background:#365e92;"></div>
<div class="t" style="left:1594px;top:96.80px;font-size:15px;color:#fff;letter-spacing:-0.026px;font-weight:bold;">Bitmaps</div>
<div style="left:1871px;top:97px;width:16px;height:15px;background:#b9c6d8;border-top:1px solid #e6ecf4;border-left:1px solid #e6ecf4;border-right:1px solid #5a6a80;border-bottom:1px solid #5a6a80;"></div>
<svg style="left:1873px;top:99px" width="11" height="10" viewBox="0 0 11 10"><path d="M5.5 0.5L10 9H1z" fill="#3c3c3c"/></svg>
<div style="left:1589px;top:196px;width:304px;height:19px;background:#365e92;"></div>
<div class="t" style="left:1594px;top:197.80px;font-size:15px;color:#fff;letter-spacing:-0.027px;font-weight:bold;">Reliefs</div>
<div style="left:1871px;top:198px;width:16px;height:15px;background:#b9c6d8;border-top:1px solid #e6ecf4;border-left:1px solid #e6ecf4;border-right:1px solid #5a6a80;border-bottom:1px solid #5a6a80;"></div>
<svg style="left:1873px;top:200px" width="11" height="10" viewBox="0 0 11 10"><path d="M5.5 0.5L10 9H1z" fill="#3c3c3c"/></svg>
<div style="left:1589px;top:147px;width:304px;height:29px;background:#dadada;"></div>
<div class="t" style="left:1622px;top:155.00px;font-size:15px;color:#222;letter-spacing:0.080px;">Bitmap Layer 1</div>
<div style="left:1591px;top:217px;width:298px;height:28px;background:#fff;border:1px solid #7a7a7a;border-right-color:#e8e8e8;border-bottom-color:#e8e8e8;box-shadow:inset 1px 1px 0 #444;"></div>
<div class="t" style="left:1594px;top:220.55px;font-size:15.5px;color:#111;letter-spacing:-0.093px;">Front Relief</div>
<div style="left:1869px;top:219px;width:19px;height:24px;background:#f1f1f1;border:1px solid #fff;border-right-color:#666;border-bottom-color:#666;"></div>
<svg style="left:1873px;top:228px" width="11" height="7" viewBox="0 0 11 7"><path d="M1 1h9L5.5 6z" fill="#111"/></svg>
<div style="left:1589px;top:281px;width:304px;height:31px;background:#dadada;"></div>
<div class="t" style="left:1649px;top:290.00px;font-size:15px;color:#222;letter-spacing:0.032px;">Relief Layer 1</div>
<svg style="left:1634px;top:291px" width="8" height="12" viewBox="0 0 8 12"><path d="M1.5 1.5L6.5 6L1.5 10.5z" fill="#111"/></svg>
<div style="left:1866px;top:285px;width:22px;height:22px;background:#e6e6e6;border:1px solid #b5b5b5;border-top-color:#f6f6f6;border-left-color:#f6f6f6;"></div>
<div style="left:1851px;top:316px;width:16px;height:15px;background:#1f55b5;border-radius:2px;border:1px solid #0d3a8a;"></div>
<svg style="left:1851px;top:316px" width="16" height="15" viewBox="0 0 16 15"><path d="M8 11.8v-8M4.2 7.4L8 3.4l3.8 4" fill="none" stroke="#fff" stroke-width="2"/></svg>
<div style="left:1874px;top:316px;width:16px;height:15px;background:#1f55b5;border-radius:2px;border:1px solid #0d3a8a;"></div>
<svg style="left:1874px;top:316px" width="16" height="15" viewBox="0 0 16 15"><path d="M8 3.2v8M4.2 7.6L8 11.6l3.8-4" fill="none" stroke="#fff" stroke-width="2"/></svg>
<svg style="left:1581px;top:1021px" width="338" height="33" viewBox="0 0 338 33"><rect x="0" y="0" width="338" height="33" fill="#e2e2e2"/><rect x="0" y="0" width="338" height="33" filter="url(#nz)"/><rect x="0" y="0" width="338" height="33" filter="url(#nz2)"/></svg>
<div style="left:1642px;top:1022px;width:61px;height:29px;background:#f1f1f1;border-radius:0 0 7px 7px;border:1px solid #c9c9c9;border-top-color:#e2e2e2;"></div>
<div class="t" style="left:1651px;top:1030.35px;font-size:14.6px;color:#222;letter-spacing:0.132px;">Add In</div>
<div style="left:1581px;top:1019px;width:61px;height:33px;background:#f4f4f4;border-radius:0 0 7px 7px;border-right:1px solid #bdbdbd;border-bottom:1px solid #b5b5b5;"></div>
<div class="t" style="left:1591px;top:1029.35px;font-size:14.6px;color:#222;letter-spacing:-0.471px;">Layers</div>
<div style="left:1580px;top:1053px;width:340px;height:1px;background:#a8a8a8;"></div>
<svg width="0" height="0" style="left:0;top:0"><defs>
<linearGradient id="gDoc" x1="0" y1="0" x2="1" y2="1"><stop offset="0" stop-color="#c3d0e6"/><stop offset="1" stop-color="#7f97bd"/></linearGradient>
<linearGradient id="gGold" x1="0" y1="0" x2="0" y2="1"><stop offset="0" stop-color="#fbe7a0"/><stop offset="0.5" stop-color="#e8b84a"/><stop offset="1" stop-color="#c08a2a"/></linearGradient>
<radialGradient id="gGoldR" cx=".4" cy=".3" r=".8"><stop offset="0" stop-color="#fff2b8"/><stop offset="0.5" stop-color="#eec050"/><stop offset="1" stop-color="#b87e24"/></radialGradient>
<linearGradient id="gLil" x1="0" y1="0" x2="0" y2="1"><stop offset="0" stop-color="#b9b9f2"/><stop offset="1" stop-color="#7272cf"/></linearGradient>
<radialGradient id="gLilR" cx=".5" cy=".4" r=".7"><stop offset="0" stop-color="#e8e8ff"/><stop offset="0.5" stop-color="#a0a0ec"/><stop offset="1" stop-color="#6262c4"/></radialGradient>
<linearGradient id="gYel" x1="0" y1="0" x2="0" y2="1"><stop offset="0" stop-color="#fff23a"/><stop offset="1" stop-color="#e6c400"/></linearGradient>
<linearGradient id="gGrn" x1="0" y1="0" x2="0" y2="1"><stop offset="0" stop-color="#0b4a12"/><stop offset="0.5" stop-color="#6fc86f"/><stop offset="1" stop-color="#2a8a33"/></linearGradient>
<linearGradient id="gBlueSq" x1="0" y1="0" x2="1" y2="1"><stop offset="0" stop-color="#6c7fb0"/><stop offset="0.5" stop-color="#b9c6e4"/><stop offset="1" stop-color="#5a6a9c"/></linearGradient>
<filter id="ib"><feGaussianBlur stdDeviation="0.6"/></filter>
<filter id="ib1"><feGaussianBlur stdDeviation="1.1"/></filter>
</defs></svg>
<svg style="left:18.5px;top:196.0px" width="40" height="40" viewBox="-20.0 -20.0 40 40"><g transform="scale(1.25,1)"><path d="M3 13l8-7v7z" fill="#9a9a9a" opacity=".7" filter="url(#ib)"/><path d="M-10 -13h10l5 5v21h-15z" fill="url(#gDoc)"/><path d="M0 -13l5 5h-5z" fill="#f4f7fc"/></g></svg>
<svg style="left:72.0px;top:197.0px" width="40" height="40" viewBox="-20.0 -20.0 40 40"><path d="M6 12l10-5v5z" fill="#999" opacity=".6" filter="url(#ib)"/><path d="M-14 -9c0-2 1-3 3-3h6l3 3h7c2 0 3 1 3 3v6l-22 10z" fill="#f2dc00"/><path d="M-13 12c-1.5-6-1-10 1-13c6-2.5 16-4 22-3.5c1 5 0 11-2 15c-6 2-15 3-21 1.500z" fill="url(#gYel)"/><path d="M-12 -1c6-2.500 16-4 22-3.500" stroke="#fff9a0" stroke-width="1" fill="none"/></svg>
<svg style="left:123.0px;top:197.0px" width="40" height="40" viewBox="-20.0 -20.0 40 40"><path d="M8 12l9-6v6z" fill="#999" opacity=".6" filter="url(#ib)"/><path d="M-12 -12h24v24h-22l-2-2z" fill="#1d5fd6"/><path d="M-12 -12h3v22l-3 0z" fill="#1148a8"/><rect x="-8" y="-10.500" width="16" height="11" fill="#e9edf2"/><rect x="-8" y="-10.500" width="16" height="3" fill="#c5ccd6"/><rect x="-6" y="3" width="13" height="9" fill="#d7dbe2"/><rect x="-4" y="5" width="4" height="7" fill="#1d5fd6"/></svg>
<svg style="left:177.0px;top:197.0px" width="40" height="40" viewBox="-20.0 -20.0 40 40"><ellipse cx="-4" cy="12" rx="10" ry="4.500" fill="#d6dcf0" stroke="#8a94c0" stroke-width=".8"/><path d="M-3 3l4 0l2 9h-6z" fill="#aeb7e0"/><path d="M-12 -14l14-3l4 20l-15 2z" fill="#6aa7e8"/><path d="M-10.500 -12.500l11.500-2.500l3.500 17l-12.500 1.600z" fill="#a9d4f7"/><path d="M-6 -4l3 5l5-13" stroke="#7a1030" stroke-width="1.800" fill="none"/><circle cx="9" cy="1" r="6" fill="#e8a818"/><circle cx="9" cy="1" r="2" fill="#7a5a10"/><path d="M9 -7v3M9 5v3M1 1h3M14 1h3M3.500 -4.500l2 2M12.500 4.500l2 2M3.500 6.500l2-2M12.500 -2.500l2-2" stroke="#e8a818" stroke-width="2.600"/><path d="M8.200 -3v5" stroke="#333" stroke-width="1.300"/></svg>
<svg style="left:21.0px;top:244.0px" width="40" height="40" viewBox="-20.0 -20.0 40 40"><g transform="scale(1.3,0.95)"><path d="M-12 9h22" stroke="#bbb" stroke-width="3" opacity=".5" filter="url(#ib)"/><path d="M-13 -6l1 9l9-2z" fill="#9b9b9b"/><path d="M-8 -1c4-6 12-7 15-2c2 4 0 9-4 12" fill="none" stroke="#9b9b9b" stroke-width="3.400"/></g></svg>
<svg style="left:72.0px;top:244.0px" width="40" height="40" viewBox="-20.0 -20.0 40 40"><g transform="scale(-1.3,0.95)"><path d="M-12 9h22" stroke="#bbb" stroke-width="3" opacity=".5" filter="url(#ib)"/><path d="M-13 -6l1 9l9-2z" fill="#9b9b9b"/><path d="M-8 -1c4-6 12-7 15-2c2 4 0 9-4 12" fill="none" stroke="#9b9b9b" stroke-width="3.400"/></g></svg>
<svg style="left:124.0px;top:244.0px" width="40" height="40" viewBox="-20.0 -20.0 40 40"><path d="M-6 -13l9 18M6 -13l-9 18" stroke="#c2c2c2" stroke-width="2.200" fill="none"/><ellipse cx="-6" cy="9" rx="3" ry="4.500" transform="rotate(25 -6 9)" fill="none" stroke="#c2c2c2" stroke-width="1.600"/><ellipse cx="6" cy="9" rx="3" ry="4.500" transform="rotate(-25 6 9)" fill="none" stroke="#c2c2c2" stroke-width="1.600"/></svg>
<svg style="left:177.0px;top:243.0px" width="40" height="40" viewBox="-20.0 -20.0 40 40"><path d="M-1 15l14-8v8z" fill="#ccc" opacity=".6" filter="url(#ib)"/><path d="M-13 -14h10l4 4v16h-14z" fill="#d3d3d3"/><path d="M-6 -8h10l5 5v18h-15z" fill="#cbcbcb" stroke="#dedede" stroke-width=".8"/></svg>
<svg style="left:230.0px;top:242.0px" width="40" height="40" viewBox="-20.0 -20.0 40 40"><path d="M4 16l11-6v6z" fill="#999" opacity=".6" filter="url(#ib)"/><path d="M-12 -11h20v26h-20z" fill="#d2432a"/><path d="M-12 -11h3v26h-3z" fill="#b13520"/><path d="M-5 -14h6l1 6h-8z" fill="#aeb8c8"/><path d="M-6 -11l4 5l4-5" fill="#e9e9ee"/><path d="M-3 -1h10l4 4v13h-14z" fill="#e9b98a"/><path d="M-1 3h9M-1 6h9M-1 9h9M-1 12h9" stroke="#c89060" stroke-width="1" stroke-dasharray="2 1"/></svg>
<svg style="left:18.0px;top:322.0px" width="40" height="40" viewBox="-20.0 -20.0 40 40"><path d="M-15 -11l4-4h22l0 5" fill="#e8e8e8" stroke="#aaa" stroke-width=".8"/><path d="M-16 16l3-27h25l-2 27z" fill="#fdfdfd" stroke="#b0b0b0" stroke-width="1"/><path d="M-9 -14v3M-5 -14v3M-1 -14v3M3 -14v3M7 -14v3" stroke="#777" stroke-width=".8"/><path d="M-14 -6h2M-14.500 -2h2M-15 2h2M-15.500 6h2M-16 10h2" stroke="#777" stroke-width=".8"/><circle cx="-7" cy="-6" r="3" fill="#c43c3c"/><circle cx="4" cy="-6" r="3" fill="#c43c3c"/><ellipse cx="-1.500" cy="-2" rx="6.500" ry="5.500" fill="#d95555"/><ellipse cx="-2" cy="7" rx="9" ry="8" fill="#c43c3c"/><ellipse cx="-2" cy="8" rx="5" ry="5" fill="#f6c0c0"/><circle cx="-8" cy="12" r="3" fill="#d95555"/><circle cx="4" cy="12" r="3" fill="#d95555"/><path d="M7 -3h4M9 -3v5" stroke="#222" stroke-width="1.400"/></svg>
<svg style="left:61px;top:338px" width="7" height="10" viewBox="0 0 7 10"><path d="M0.5 0.3L6 5L0.5 9.7z" fill="#0a0a0a"/></svg>
<svg style="left:71.0px;top:322.0px" width="40" height="40" viewBox="-20.0 -20.0 40 40"><path d="M10 14l6-6v6z" fill="#999" opacity=".6"/><rect x="-13.500" y="-14" width="27" height="29" fill="#050505"/><circle cx="-6" cy="-8" r="3" fill="#7a7a7a"/><circle cx="4" cy="-8" r="3" fill="#7a7a7a"/><ellipse cx="-1" cy="-4" rx="6.500" ry="5.500" fill="#a5a5a5"/><ellipse cx="-1" cy="5" rx="9" ry="8" fill="#9a9a9a"/><ellipse cx="-1" cy="6" rx="5" ry="5" fill="#6a6a6a"/><circle cx="-7" cy="11" r="2.800" fill="#c8c8c8"/><circle cx="5" cy="11" r="2.800" fill="#c8c8c8"/><path d="M8 -7h4M10 -7v5" stroke="#eee" stroke-width="1.300"/></svg>
<svg style="left:123.0px;top:322.0px" width="40" height="40" viewBox="-20.0 -20.0 40 40"><ellipse cx="7" cy="9" rx="12" ry="3.500" fill="#fffbe0" filter="url(#ib1)"/><ellipse cx="-8" cy="10" rx="9" ry="2.500" fill="#555" opacity=".5" filter="url(#ib1)"/><ellipse cx="-3" cy="9" rx="7" ry="2.800" fill="#e01010"/><path d="M-3 8l-4-10l4-7" stroke="#c00d0d" stroke-width="2" fill="none"/><path d="M-5 -13l14-3l-3 11c-4 1-8-2-11-8z" fill="#e01818"/><path d="M2 -6l5-8" stroke="#ff8a8a" stroke-width="1.500"/></svg>
<svg style="left:176.0px;top:323.0px" width="40" height="40" viewBox="-20.0 -20.0 40 40"><rect x="-17" y="-18" width="23" height="28" fill="#1a1408"/><rect x="-3" y="-18" width="9" height="14" fill="#7d9a50"/><path d="M-13 10c0-8 2-12 7-13c5 1 8 5 8 13z" fill="#4a3216"/><ellipse cx="-6" cy="-8" rx="4.500" ry="5.500" fill="#e9c27a"/><path d="M-11 -9c0-6 10-7 10 0c1 4 1 7 0 9c-1-5-2-8-5-9c-3 1-4 4-4 9c-2-2-2-6-1-9z" fill="#3a2008"/><path d="M-9 6c2-3 6-3 8 0" fill="#d8b070"/><path d="M-6 10l14-11l9 4l-13 12z" fill="#e88a1a"/><path d="M-6 10l10 5l0 3l-10-5z" fill="#b45f0a"/><path d="M4 15l13-12v3l-13 12z" fill="#f0d8b0"/></svg>
<svg style="left:20.0px;top:452.0px" width="40" height="40" viewBox="-20.0 -20.0 40 40"><path d="M-9 11l18-9" stroke="#aaa" stroke-width="2.500" opacity=".7" filter="url(#ib)"/><path d="M-9 10l2-5l11-17l3.500 2l-11 17z" fill="#e02020"/><path d="M4 -12l3.500 2l-1.200 2l-3.500-2z" fill="#ff7070"/><path d="M-9 10l2-5l3.500 2z" fill="#d8b888"/><path d="M-9 10l.8-2l1.400.8z" fill="#333"/></svg>
<svg style="left:61px;top:468px" width="7" height="10" viewBox="0 0 7 10"><path d="M0.5 0.3L6 5L0.5 9.7z" fill="#0a0a0a"/></svg>
<svg style="left:72.0px;top:453.0px" width="40" height="40" viewBox="-20.0 -20.0 40 40"><ellipse cx="4" cy="10" rx="11" ry="3.500" fill="#888" opacity=".5" filter="url(#ib1)"/><path d="M-6 -2l16 2l-2 12c-4 2-9 1-12-1z" fill="#7f9a9a"/><ellipse cx="2" cy="-1" rx="8" ry="3.500" fill="#b8cccc" stroke="#5a7070" stroke-width=".8"/><path d="M3 -3c6 0 11 4 10 9" stroke="#9ab0b0" stroke-width="1.300" fill="none"/><path d="M-12 6c-2-8 0-14 6-16c5-1.500 9 0 11 3c-3 3-6 4-10 4c-3 2-4 6-3 11z" fill="#e02818"/><path d="M-9 -6c3-2 6-2.500 9-1.500" stroke="#ff9a8a" stroke-width="1.200" fill="none"/></svg>
<svg style="left:113px;top:468px" width="7" height="10" viewBox="0 0 7 10"><path d="M0.5 0.3L6 5L0.5 9.7z" fill="#0a0a0a"/></svg>
<svg style="left:125.0px;top:452.0px" width="40" height="40" viewBox="-20.0 -20.0 40 40"><path d="M0 9c3-2 8-3 12-3" stroke="#999" stroke-width="2.200" opacity=".7" filter="url(#ib)"/><circle cx="5" cy="-11" r="4" fill="#a01848"/><path d="M2 -8l4 3l-2 2.500l-4-3z" fill="#701030"/><path d="M0 -5l3 2.500l-8 11l-3-2.500z" fill="#e8eaf8" stroke="#5a5ab0" stroke-width=".8"/><path d="M-6 5l3 2.500l-3 4l-3-2.500z" fill="#2a38c0"/></svg>
<svg style="left:175.0px;top:452.0px" width="40" height="40" viewBox="-20.0 -20.0 40 40"><ellipse cx="2" cy="10" rx="14" ry="2.800" fill="#888" opacity=".5" filter="url(#ib1)"/><path d="M-15 -3c0-7 6-11 11-8c3 2 3 5 7 5c4 0 8-4 12-2c3 3 0 14-8 17c-8 2-19 1-21-5c-1-3-1-5-1-7z" fill="#6b4a32"/><path d="M-10 -6c1-3 4-4 6-2c1 2 0 4-1 5" stroke="#f4ead8" stroke-width="2.200" fill="none"/><circle cx="-11" cy="3" r="2.200" fill="#e01818"/><circle cx="-6" cy="6" r="2.200" fill="#f0a010"/><circle cx="-1" cy="7" r="2.200" fill="#f0e020"/><circle cx="4" cy="6.500" r="2.200" fill="#20c030"/><circle cx="9" cy="5" r="2.200" fill="#20c0e0"/><circle cx="12" cy="1" r="2.300" fill="#2030d0"/></svg>
<svg style="left:218px;top:468px" width="7" height="10" viewBox="0 0 7 10"><path d="M0.5 0.3L6 5L0.5 9.7z" fill="#0a0a0a"/></svg>
<svg style="left:229.0px;top:453.0px" width="40" height="40" viewBox="-20.0 -20.0 40 40"><ellipse cx="2" cy="11" rx="15" ry="2.500" fill="#888" opacity=".45" filter="url(#ib1)"/><path d="M6 -10c7 1 10 9 8 15c-1 4-5 6-9 5" fill="none" stroke="#2a3aa8" stroke-width="1.600"/><path d="M-16 -1l5-9l8-3l5 4l6 1l3 8l-6 8l-8 3l-8-3z" fill="#f0e010"/><path d="M-3 -13l5 4l6 1" stroke="#fff680" stroke-width="1" fill="none"/><circle cx="6" cy="-10" r="1.300" fill="#2a3aa8"/><circle cx="14" cy="1" r="1.300" fill="#2a3aa8"/></svg>
<div style="left:16px;top:530px;width:43px;height:44px;background:#fbfbfb;border-top:1px solid #6e6e6e;border-left:1px solid #6e6e6e;border-right:1px solid #fff;border-bottom:1px solid #fff;"></div>
<svg style="left:18.0px;top:533.0px" width="40" height="40" viewBox="-20.0 -20.0 40 40"><path d="M-5 3l14 9l-3 3l-13-9z" fill="#bbb" opacity=".7" filter="url(#ib)"/><path d="M-10 -11l16 6l-6 3l8 9l-4 3l-8-9l-4 5z" fill="#5c5c5c"/></svg>
<svg style="left:61px;top:548px" width="7" height="10" viewBox="0 0 7 10"><path d="M0.5 0.3L6 5L0.5 9.7z" fill="#0a0a0a"/></svg>
<svg style="left:70.0px;top:532.0px" width="40" height="40" viewBox="-20.0 -20.0 40 40"><g fill="none" stroke="#4a4a4a" stroke-width="2.600"><path d="M-13 3c-1-5 1-10 5-13"/><path d="M6 -13c5 2 8 6 8 11"/><path d="M13 6c-2 5-6 8-11 9"/><path d="M-6 14c-4-2-7-5-8-9"/></g><path d="M-11 -13l5 0l-2 5zM10 -14l2 5l-6-1zM-14 8l1-6l4 4zM-8 17l1-6l4 5z" fill="#4a4a4a"/><path d="M0 -9l3.500 4h-2.500v4h4v-2.500l4 3.500l-4 3.500v-2.500h-4v4h2.500l-3.500 4l-3.500-4h2.500v-4h-4v2.500l-4-3.500l4-3.500v2.500h4v-4h-2.500z" fill="#4a4a4a"/><path d="M-14 -10h8M-14 -7h8" stroke="#4a4a4a" stroke-width="1.300"/><path d="M10 8v8M13 8v8M8.500 10l1.500-2.500l1.500 2.500M11.500 14l1.500 2.500l1.500-2.500" stroke="#4a4a4a" stroke-width="1.300" fill="none"/></svg>
<svg style="left:124.0px;top:534.0px" width="40" height="40" viewBox="-20.0 -20.0 40 40"><path d="M-11 13h26l2-3" stroke="#bbb" stroke-width="2" fill="none" opacity=".8" filter="url(#ib)"/><rect x="-12" y="-12" width="24" height="24" fill="#f4f4f4" stroke="#4c4c4c" stroke-width="2.600"/><rect x="-10" y="6" width="20" height="4" fill="#d9d9d9"/></svg>
<svg style="left:166px;top:548px" width="7" height="10" viewBox="0 0 7 10"><path d="M0.5 0.3L6 5L0.5 9.7z" fill="#0a0a0a"/></svg>
<svg style="left:177.0px;top:534.0px" width="40" height="40" viewBox="-20.0 -20.0 40 40"><path d="M-11 7h24" stroke="#aaa" stroke-width="2.500" opacity=".8"/><path d="M-14 -14h28v5h-10.500v21h3v3h-13v-3h3v-21h-10.500z" fill="#f0a020"/><path d="M-2 -9h2.500v21h-2.500z" fill="#c87808"/><g fill="#1a1ab8"><circle cx="-14" cy="-14" r="1.500"/><circle cx="14" cy="-14" r="1.500"/><circle cx="-14" cy="-9" r="1.500"/><circle cx="14" cy="-9" r="1.500"/><circle cx="-4" cy="-7" r="1.300"/><circle cx="4" cy="-7" r="1.300"/><circle cx="-7" cy="13.500" r="1.500"/><circle cx="6" cy="13.500" r="1.500"/><circle cx="-4" cy="10" r="1.300"/><circle cx="3" cy="10" r="1.300"/></g><circle cx="-14" cy="-14" r="1.700" fill="#222"/><circle cx="14" cy="-14" r="1.700" fill="#222"/></svg>
<svg style="left:226.0px;top:532.0px" width="40" height="40" viewBox="-20.0 -20.0 40 40"><g opacity=".55"><path d="M-15 0l8-10l8 8l-9 10z" fill="none" stroke="#8a8a8a" stroke-width="1.300"/><ellipse cx="6" cy="-2" rx="9" ry="7" fill="#b8b8b8"/><ellipse cx="4" cy="-4" rx="4" ry="3" fill="#e6e6e6"/><path d="M-6 8c6 3 14 2 20-3" stroke="#aaa" stroke-width="3" fill="none" filter="url(#ib)"/></g></svg>
<svg style="left:271px;top:548px" width="7" height="10" viewBox="0 0 7 10"><path d="M0.5 0.3L6 5L0.5 9.7z" fill="#0a0a0a"/></svg>
<svg style="left:18.0px;top:578.0px" width="40" height="40" viewBox="-20.0 -20.0 40 40"><path d="M-2 11l17 3" stroke="#999" stroke-width="3" opacity=".5" filter="url(#ib)"/><path d="M-2 6l15 5l-1 4l-15-5z" fill="#f4e45a" stroke="#b8a020" stroke-width=".6"/><path d="M-16 -4c0-6 4-9 10-9c6 0 11 3 12 9l0 8c-2 5-8 7-13 6c-6-1-9-5-9-9z" fill="#f0b020"/><path d="M-14 -3c1-5 4-7 9-7c5 0 9 3 10 7c-1 5-5 8-10 8c-5 0-8-3-9-8z" fill="#2a3a9a"/><path d="M-13 1c2 3 5 4 9 4c4 0 7-2 8-5l0 5c-2 4-6 5-9 5c-4 0-7-2-8-5z" fill="#e8e8f0"/><circle cx="9" cy="6" r="2.200" fill="#888"/></svg>
<svg style="left:71.0px;top:578.0px" width="40" height="40" viewBox="-20.0 -20.0 40 40"><rect x="-16" y="-16" width="32" height="32" rx="3" fill="#7ad07a" opacity=".6"/><rect x="-14.500" y="-14.500" width="29" height="29" rx="2" fill="#0d8a12"/><path d="M-4 -11h8v7h7v8h-7v7h-8v-7h-7v-8h7z" fill="#0d8a12" stroke="#e8ffe8" stroke-width="1.800"/></svg>
<svg style="left:124.0px;top:578.0px" width="40" height="40" viewBox="-20.0 -20.0 40 40"><rect x="-18" y="-18" width="36" height="36" fill="url(#gGrn)"/><rect x="-18" y="-18" width="36" height="7" fill="#0a3a10" opacity=".55"/><g fill="#0c2a10"><circle cx="-11" cy="-10" r="2.600"/><rect x="-4.500" y="-13" width="3" height="6"/><path d="M1 -7l5-6l5 6z"/><rect x="14" y="-13" width="3" height="6"/><circle cx="-11" cy="11" r="2.600" opacity=".6"/><rect x="-4.500" y="8" width="3" height="6" opacity=".6"/><path d="M1 14l5-6l5 6z" opacity=".6"/></g><path d="M-18 5.500h36M12.500 -18v36" stroke="#0c3a12" stroke-width="1.200"/><text x="-15" y="3.500" font-family="Liberation Sans,sans-serif" font-size="10.500" fill="#0c3512" textLength="25">ABC</text></svg>
<svg style="left:177.0px;top:578.0px" width="40" height="40" viewBox="-20.0 -20.0 40 40"><g fill="none" stroke="#b4b4b4" stroke-width="1.400"><path d="M-16 -15c10 3 22 3 32 0c-3 10-3 20 0 30c-10-3-22-3-32 0c3-10 3-20 0-30z" stroke-width="2"/><path d="M-14 -8c9 2 19 2 28 0M-13 0h26M-14 8c9-2 19-2 28 0M-8 -13c2 9 2 17 0 26M0 -13v26M8 -13c-2 9-2 17 0 26"/><ellipse cx="0" cy="0" rx="7" ry="10" stroke="#a0a0a0" stroke-width="2.200"/></g></svg>
<svg style="left:229.0px;top:577.0px" width="40" height="40" viewBox="-20.0 -20.0 40 40"><g fill="none" stroke="#acacac" stroke-width="1.700"><rect x="-17" y="5" width="4.500" height="4.500"/><rect x="-8" y="5" width="4.500" height="4.500"/><rect x="-8" y="13" width="4.500" height="4.500"/><circle cx="0" cy="-12" r="2.600"/><circle cx="14" cy="-12" r="2.600"/><circle cx="0" cy="-3" r="2.600"/><circle cx="14" cy="-3" r="2.600"/><circle cx="7" cy="2" r="2.600"/></g><circle cx="7" cy="-7" r="1" fill="#acacac"/></svg>
<svg style="left:18.0px;top:622.0px" width="40" height="40" viewBox="-20.0 -20.0 40 40"><rect x="-14" y="-16" width="4.500" height="4.500" fill="#fff" stroke="#111" stroke-width="1.400"/><path d="M-11 9l7.500-8l7.500 5l3 6l7-6" fill="none" stroke="#222" stroke-width="2"/><g fill="#f4f470" stroke="#6a6a20" stroke-width=".8"><circle cx="-11" cy="9" r="3.600"/><circle cx="-3.500" cy="1" r="3.600"/><circle cx="4" cy="6" r="3.600"/><circle cx="14" cy="6" r="3.600"/></g><g fill="#222"><circle cx="-11" cy="9" r="1"/><circle cx="-3.500" cy="1" r="1"/><circle cx="4" cy="6" r="1"/><circle cx="14" cy="6" r="1"/></g></svg>
<svg style="left:71.0px;top:623.0px" width="40" height="40" viewBox="-20.0 -20.0 40 40"><g fill="none" stroke="#c4c4c4" stroke-width="1.600"><path d="M-14 -2c4-6 8-8 12-7l6 7l8-8"/><path d="M-13 6c5-4 10-4 14 0c4 3 9 3 13-1" stroke-dasharray="2 1.500" stroke-width="1.200"/><path d="M-12 12c6-3 16-3 24 0" stroke-dasharray="2 1.500" stroke-width="1"/><path d="M-2 -6v8l-2-2.500M-2 2l2-2.500"/></g></svg>
<svg style="left:122.0px;top:622.0px" width="40" height="40" viewBox="-20.0 -20.0 40 40"><g fill="none" stroke="#9a9a9a"><path d="M-14 -15c14 2 14 30 0 32" stroke-width="2.600"/><path d="M-7 -14l8 3M-7 15l8-4" stroke-width="1.200"/><path d="M0 0h10l-3-2M10 0l-3 2" stroke-width="1.300"/><path d="M6 -15c10 5 10 27 0 32" stroke="#dadada" stroke-width="1" stroke-dasharray="2 2"/></g><g fill="#9a9a9a"><rect x="-17" y="-18" width="4.500" height="4.500"/><rect x="-17" y="14" width="4.500" height="4.500"/><rect x="1" y="-13" width="4" height="4"/><rect x="1" y="9" width="4" height="4"/><rect x="7" y="-17" width="4" height="4"/><rect x="7" y="14" width="4" height="4"/></g><rect x="15" y="-2" width="3.500" height="3.500" fill="none" stroke="#aaa" stroke-width="1"/></svg>
<svg style="left:176.0px;top:622.0px" width="40" height="40" viewBox="-20.0 -20.0 40 40"><path d="M-5 -10c8 4 8 14 0 19" fill="none" stroke="#f4f480" stroke-width="3" stroke-dasharray="3 1.500"/><path d="M-18 -17l13 7M-18 17l13-8" stroke="#0a0a0a" stroke-width="2.800"/><path d="M-5 -10l21 10l-21 9" fill="none" stroke="#5a5a5a" stroke-width="2.600"/></svg>
<svg style="left:228.0px;top:622.0px" width="40" height="40" viewBox="-20.0 -20.0 40 40"><path d="M-11 8l22-17" stroke="#f2f2a0" stroke-width="4"/><path d="M4 -19l13 11M13 -18l-5 10" stroke="#050505" stroke-width="3.200"/><path d="M-19 3l14 12M-18 14l5-10" stroke="#050505" stroke-width="3.200"/><path d="M-3 -4l8 5l-8-1z" fill="#fff" stroke="#111" stroke-width="1"/><path d="M-3 2h12" stroke="#111" stroke-width="1.600"/><circle cx="12" cy="0" r="2.800" fill="none" stroke="#050505" stroke-width="2"/><circle cx="9" cy="6" r="2.800" fill="none" stroke="#050505" stroke-width="2"/></svg>
<svg style="left:18.0px;top:668.0px" width="40" height="40" viewBox="-20.0 -20.0 40 40"><ellipse cx="0" cy="12" rx="17" ry="4.500" fill="#8a8a8a" opacity=".7" filter="url(#ib1)"/><path d="M-15 -8c0 6-2 12-3 15c3 5 10 7 18 7c8 0 15-2 18-7c-1-3-3-9-3-15z" fill="url(#gLilR)"/><path d="M-17 6c3 4 9 6 17 6c8 0 14-2 17-6l1 2c-3 5-10 7-18 7c-8 0-15-2-18-7z" fill="#4848b0"/><ellipse cx="0" cy="-9" rx="15" ry="3.800" fill="#c8c8ee" stroke="#5a5a5a" stroke-width="1.600"/><path d="M-13 2c4-3 8-5 13-5c5 0 9 2 13 5" fill="none" stroke="#d8d860" stroke-width="1.400"/><path d="M0 -6v10" stroke="#e8e8ff" stroke-width="2.500" opacity=".7"/></svg>
<svg style="left:71.0px;top:668.0px" width="40" height="40" viewBox="-20.0 -20.0 40 40"><g fill="none" stroke="#b8b8b8" stroke-width="1.700"><path d="M-2 -14c-3 8-7 14-13 19"/><path d="M-1 -15h11l-3-2M10 -15l-3 2"/><path d="M-4 -4l7 6l-1-4M3 2l-4 0"/><path d="M-15 6c1 4 3 7 5 9" stroke-dasharray="2 1.500" stroke="#ccc"/></g></svg>
<svg style="left:123.0px;top:668.0px" width="40" height="40" viewBox="-20.0 -20.0 40 40"><g fill="none" stroke="#a8a8a8" stroke-width="1.400"><path d="M-2 -14c-5 1-6 6-4 10c1 3-1 5-3 8c-2 3-2 7-1 10h8"/><path d="M1 -17v34" stroke-dasharray="6 1.500 1.500 1.500"/><path d="M4 -2c4-1 7 0 8 4M5 8c3 1 5 3 5 6" stroke="#d6d6d6" stroke-dasharray="2 1.500"/></g></svg>
<svg style="left:176.0px;top:668.0px" width="40" height="40" viewBox="-20.0 -20.0 40 40"><ellipse cx="4" cy="16" rx="14" ry="2.500" fill="#888" opacity=".4" filter="url(#ib1)"/><path d="M-17 -8c2-3 6-4 10-3l22 8v8l-30 12c-3-8-4-17-2-25z" fill="#f0d800"/><path d="M-16 16c0-5 1-9 3-12c8-2 20-3 30-2c1 4 0 9-2 12c-9 3-22 4-31 2z" fill="url(#gYel)"/><path d="M4 -18l2.500 9l9-1l-7 6l4 8.500l-8.500-4.500l-7 6l1.500-9l-8-4.500l9-1z" fill="#f4e820" stroke="#3a3a3a" stroke-width="1.800" stroke-linejoin="round"/></svg>
<svg style="left:18.0px;top:748.0px" width="40" height="40" viewBox="-20.0 -20.0 40 40"><path d="M-17 -17v34" stroke="#9a9a9a" stroke-width="1.400"/><path d="M-3 9h17l2-3" stroke="#ccc" stroke-width="2" fill="none" opacity=".8"/><rect x="-3" y="-7" width="15" height="13" fill="#f0f0f0" stroke="#8c8c8c" stroke-width="2"/><path d="M-14 0h9M-14 0l4-3.500v7z" stroke="#8c8c8c" stroke-width="2" fill="#8c8c8c"/></svg>
<svg style="left:61px;top:763px" width="7" height="10" viewBox="0 0 7 10"><path d="M0.5 0.3L6 5L0.5 9.7z" fill="#0a0a0a"/></svg>
<svg style="left:71.0px;top:748.0px" width="40" height="40" viewBox="-20.0 -20.0 40 40"><ellipse cx="0" cy="4" rx="6" ry="1.500" fill="#999" opacity=".5"/><text x="0" y="0" transform="translate(-10.4,-6.0) rotate(-60)" font-family="Liberation Sans,sans-serif" font-size="6.500" font-weight="bold" fill="#1a1a1a" text-anchor="middle">T</text><text x="0" y="0" transform="translate(-7.3,-9.5) rotate(-38)" font-family="Liberation Sans,sans-serif" font-size="6.500" font-weight="bold" fill="#1a1a1a" text-anchor="middle">e</text><text x="0" y="0" transform="translate(-3.1,-11.6) rotate(-15)" font-family="Liberation Sans,sans-serif" font-size="6.500" font-weight="bold" fill="#1a1a1a" text-anchor="middle">x</text><text x="0" y="0" transform="translate(1.6,-11.9) rotate(8)" font-family="Liberation Sans,sans-serif" font-size="6.500" font-weight="bold" fill="#1a1a1a" text-anchor="middle">t</text><text x="0" y="0" transform="translate(6.0,-10.4) rotate(30)" font-family="Liberation Sans,sans-serif" font-size="6.500" font-weight="bold" fill="#1a1a1a" text-anchor="middle"> </text><text x="0" y="0" transform="translate(9.5,-7.3) rotate(52)" font-family="Liberation Sans,sans-serif" font-size="6.500" font-weight="bold" fill="#1a1a1a" text-anchor="middle">o</text><text x="0" y="0" transform="translate(11.6,-3.1) rotate(75)" font-family="Liberation Sans,sans-serif" font-size="6.500" font-weight="bold" fill="#1a1a1a" text-anchor="middle">n</text><text x="0" y="0" transform="translate(11.9,1.6) rotate(98)" font-family="Liberation Sans,sans-serif" font-size="6.500" font-weight="bold" fill="#1a1a1a" text-anchor="middle"> </text><text x="0" y="0" transform="translate(10.4,6.0) rotate(120)" font-family="Liberation Sans,sans-serif" font-size="6.500" font-weight="bold" fill="#1a1a1a" text-anchor="middle">a</text><text x="0" y="0" transform="translate(7.3,9.5) rotate(142)" font-family="Liberation Sans,sans-serif" font-size="6.500" font-weight="bold" fill="#1a1a1a" text-anchor="middle"> </text><text x="0" y="0" transform="translate(3.1,11.6) rotate(165)" font-family="Liberation Sans,sans-serif" font-size="6.500" font-weight="bold" fill="#1a1a1a" text-anchor="middle">C</text><text x="0" y="0" transform="translate(-1.6,11.9) rotate(188)" font-family="Liberation Sans,sans-serif" font-size="6.500" font-weight="bold" fill="#1a1a1a" text-anchor="middle">u</text><text x="0" y="0" transform="translate(-6.0,10.4) rotate(210)" font-family="Liberation Sans,sans-serif" font-size="6.500" font-weight="bold" fill="#1a1a1a" text-anchor="middle">r</text><text x="0" y="0" transform="translate(-9.5,7.3) rotate(232)" font-family="Liberation Sans,sans-serif" font-size="6.500" font-weight="bold" fill="#1a1a1a" text-anchor="middle">v</text><text x="0" y="0" transform="translate(-11.6,3.1) rotate(255)" font-family="Liberation Sans,sans-serif" font-size="6.500" font-weight="bold" fill="#1a1a1a" text-anchor="middle">e</text><text x="0" y="0" transform="translate(-11.9,-1.6) rotate(278)" font-family="Liberation Sans,sans-serif" font-size="6.500" font-weight="bold" fill="#1a1a1a" text-anchor="middle"> </text></svg>
<svg style="left:124.0px;top:748.0px" width="40" height="40" viewBox="-20.0 -20.0 40 40"><g font-family="Liberation Sans,sans-serif" font-weight="bold" fill="#050505"><text x="-17" y="-3.500" font-size="16" textLength="32" lengthAdjust="spacingAndGlyphs">Nes</text><text x="-4" y="7" font-size="16" textLength="19" lengthAdjust="spacingAndGlyphs">ng</text><text x="-17" y="13" font-size="13" textLength="10" lengthAdjust="spacingAndGlyphs">ti</text></g></svg>
<svg style="left:176.0px;top:748.0px" width="40" height="40" viewBox="-20.0 -20.0 40 40"><g fill="#dcdcdc" stroke="#b0b0b0" stroke-width="1.700"><rect x="-14" y="-12" width="26" height="22" fill="#e6e6e6" stroke-dasharray="2 1"/><rect x="-10" y="-8" width="12" height="10"/><rect x="-2" y="-3" width="12" height="9"/><rect x="-13" y="4" width="8" height="6"/></g></svg>
<svg style="left:219px;top:763px" width="7" height="10" viewBox="0 0 7 10"><path d="M0.5 0.3L6 5L0.5 9.7z" fill="#0a0a0a"/></svg>
<svg style="left:225.0px;top:748.0px" width="40" height="40" viewBox="-20.0 -20.0 40 40"><g fill="#e4e4e4" stroke="#a8a8a8" stroke-width="1.700"><rect x="-14" y="-12" width="17" height="14"/><circle cx="4" cy="3" r="9"/></g><path d="M-12 8c6 4 16 5 24 0" stroke="#ccc" stroke-width="2" fill="none" opacity=".7"/></svg>
<svg style="left:271px;top:763px" width="7" height="10" viewBox="0 0 7 10"><path d="M0.5 0.3L6 5L0.5 9.7z" fill="#0a0a0a"/></svg>
<svg style="left:17.0px;top:792.0px" width="40" height="40" viewBox="-20.0 -20.0 40 40"><path d="M-10 11c6 3 14 2 20-3" stroke="#d8d8d8" stroke-width="3" fill="none"/><path d="M-11 -5l9-5l12 3l1 12l-10 6l-12-6" fill="none" stroke="#bdbdbd" stroke-width="2"/></svg>
<svg style="left:61px;top:808px" width="7" height="10" viewBox="0 0 7 10"><path d="M0.5 0.3L6 5L0.5 9.7z" fill="#0a0a0a"/></svg>
<svg style="left:72.0px;top:793.0px" width="38" height="38" viewBox="-19.0 -19.0 38 38"><g fill="none" stroke="#2c2c2c" stroke-width="1.900"><path d="M-18 -16.0c6-5 10 5 18 0s12 5 18 0" /><path d="M-18 -10.4c6-5 10 5 18 0s12 5 18 0" /><path d="M-18 -4.8c6-5 10 5 18 0s12 5 18 0" /><path d="M-18 0.8c6-5 10 5 18 0s12 5 18 0" /><path d="M-18 6.4c6-5 10 5 18 0s12 5 18 0" /><path d="M-18 12.0c6-5 10 5 18 0s12 5 18 0" /><path d="M-18 17.6c6-5 10 5 18 0s12 5 18 0" /></g><path d="M-1 -10l3 6l7 0l-4 5l3 7l-8-3l-7 4l2-7l-6-5l8-1z" fill="#f4f4f4" stroke="#d01020" stroke-width="1.900" stroke-linejoin="round"/></svg>
<svg style="left:124.0px;top:792.0px" width="40" height="40" viewBox="-20.0 -20.0 40 40"><g fill="none" stroke="#b4b4b4" stroke-width="1.800"><path d="M-3 -16c-10 3-14 14-8 24c3 5 9 7 14 5"/><path d="M3 -15c9 2 13 12 9 21c-2 5-7 8-12 8"/><path d="M-4 -10c-5 5-5 13 0 18M5 -9c5 5 5 14-1 19"/><path d="M-10 12c5 5 16 5 24-1" stroke="#d6d6d6"/></g></svg>
<svg style="left:18.0px;top:873.0px" width="40" height="40" viewBox="-20.0 -20.0 40 40"><ellipse cx="0" cy="13" rx="16" ry="3" fill="#999" opacity=".4" filter="url(#ib1)"/><path d="M-17 3c0-5 5-8 10-7c4-3 8-3 11-1c3-4 8-5 10-2c2 3 1 6-2 8c1 3-1 5-4 5c-2 4-8 7-14 7c-7 0-11-4-11-10z" fill="url(#gGoldR)"/><circle cx="9" cy="-4" r="4.500" fill="#f0c860"/><ellipse cx="-7" cy="3" rx="5" ry="3.500" fill="#f8dc90"/><path d="M-16 -17h5l1 1.500h5v5h-11z" fill="none" stroke="#111" stroke-width="1.200"/><path d="M-15 -10.500l1.500-3h10l-1.500 3z" fill="#18a8a0" stroke="#111" stroke-width=".8"/><path d="M-3 -15c2-1 4 0 4 3l-1.500-1M1 -12l1-1.500" stroke="#111" stroke-width="1.200" fill="none"/></svg>
<svg style="left:61px;top:887px" width="7" height="10" viewBox="0 0 7 10"><path d="M0.5 0.3L6 5L0.5 9.7z" fill="#0a0a0a"/></svg>
<svg style="left:70.0px;top:872.0px" width="40" height="40" viewBox="-20.0 -20.0 40 40"><path d="M-12 6l22 10l8-5" stroke="#bbb" stroke-width="2" fill="none" opacity=".6" filter="url(#ib)"/><path d="M-17 -4l9-8l25 13l-8 9z" fill="#e8c45a"/><path d="M-17 -4l9-8l25 13l-2 2l-23-12l-7 6z" fill="#f8e89a"/><path d="M-17 -4l0 3l26 14l0-3z" fill="#c09830"/><path d="M9 10l8-9v3l-8 9z" fill="#a88020"/></svg>
<svg style="left:113px;top:887px" width="7" height="10" viewBox="0 0 7 10"><path d="M0.5 0.3L6 5L0.5 9.7z" fill="#0a0a0a"/></svg>
<svg style="left:123.0px;top:872.0px" width="40" height="40" viewBox="-20.0 -20.0 40 40"><ellipse cx="1" cy="13" rx="14" ry="2.800" fill="#999" opacity=".4" filter="url(#ib1)"/><path d="M-14 -9c4-1 6-4 9-6c2 2 4 2 6-1c2 3 5 6 12 7c-4 3-9 4-14 4c-5 0-9-1-13-4z" fill="url(#gGoldR)"/><path d="M-14 10c5-1 9-6 13-12c4 6 8 11 14 12c-4 3-9 4-14 4c-5 0-9-1-13-4z" fill="url(#gGold)"/><path d="M0 -6v12M-1.500 4l1.500 3l1.500-3" stroke="#333" stroke-width="1.200" fill="none"/></svg>
<svg style="left:177.0px;top:872.0px" width="40" height="40" viewBox="-20.0 -20.0 40 40"><ellipse cx="1" cy="14" rx="13" ry="2.800" fill="#999" opacity=".4" filter="url(#ib1)"/><ellipse cx="0" cy="-9" rx="12" ry="7.500" fill="url(#gGoldR)"/><path d="M-12 8c0-6 4-9 7-8c2-2 4-1 5 1c2-3 5-3 7-1c4 0 6 4 5 8c-1 4-6 6-12 6c-6 0-11-2-12-6z" fill="#e8a850"/><path d="M-7 5c2-2 4-2 5 0M2 4c2-2 4-1 5 1M-5 10c3 1 7 1 10 0" stroke="#fbe0a0" stroke-width="1.500" fill="none"/><path d="M0 -2v9M-1.500 5l1.500 3l1.500-3" stroke="#333" stroke-width="1.200" fill="none"/></svg>
<svg style="left:229.0px;top:872.0px" width="40" height="40" viewBox="-20.0 -20.0 40 40"><ellipse cx="1" cy="14" rx="14" ry="2.800" fill="#999" opacity=".4" filter="url(#ib1)"/><path d="M-14 8c0-4 4-6 8-5c3-2 6-2 9 0c3-3 8-3 10 0c2 3 0 6-3 7c-2 4-8 5-13 5c-6 0-11-2-11-7z" fill="#efe6cc"/><path d="M-13 -8c0-4 4-6 8-5c3-3 7-3 10-1c3-3 8-3 9 0c2 3 0 6-3 7c-2 4-8 6-13 6c-6 0-11-2-11-7z" fill="url(#gGoldR)"/><circle cx="8" cy="-12" r="3.500" fill="#f0c860"/><path d="M1 -2v9M-.500 5l1.500 3l1.500-3" stroke="#333" stroke-width="1.200" fill="none"/></svg>
<svg style="left:18.0px;top:918.0px" width="40" height="40" viewBox="-20.0 -20.0 40 40"><text x="-10" y="12" font-family="Liberation Serif,serif" font-style="italic" font-size="37" fill="#e4e4e4" stroke="#c4c4c4" stroke-width="1">S</text><path d="M-12 13c5 3 14 3 20-1" stroke="#d0d0d0" stroke-width="2.500" fill="none" opacity=".7"/></svg>
<svg style="left:72.0px;top:918.0px" width="40" height="40" viewBox="-20.0 -20.0 40 40"><g fill="none" stroke="#cfcfcf" stroke-width="2"><ellipse cx="0" cy="0" rx="17" ry="13"/><ellipse cx="0" cy="0" rx="11" ry="13"/><ellipse cx="0" cy="0" rx="17" ry="7"/><path d="M-12 -9l24 18M12 -9l-24 18"/><rect x="-7" y="-6" width="14" height="12" rx="3"/></g></svg>
<svg style="left:123.0px;top:918.0px" width="40" height="40" viewBox="-20.0 -20.0 40 40"><path d="M-15 4l14-6l16 7l-13 8z" fill="#3a4a8a"/><path d="M-15 4v4l17 9v-4z" fill="#27336a"/><path d="M2 13l13-8v4l-13 8z" fill="#1c2550"/><path d="M-5 1v8l2 1M-5 6c3-2 7-1 7 2c0 2-3 3-6 2" stroke="#f0c818" stroke-width="2.200" fill="none"/><path d="M-11 -15l3-1.500l5 4c3-2 8-1 9 1c1 2-2 4-7 4l-6-1z" fill="#f0d040"/><path d="M-11 -15l4 6l6 1v3l-6-1l-4-6z" fill="#c09818"/><ellipse cx="2" cy="-10.500" rx="2.500" ry="1.300" fill="#fdfdf0"/></svg>
<svg style="left:166px;top:934px" width="7" height="10" viewBox="0 0 7 10"><path d="M0.5 0.3L6 5L0.5 9.7z" fill="#0a0a0a"/></svg>
<svg style="left:175.0px;top:918.0px" width="40" height="40" viewBox="-20.0 -20.0 40 40"><path d="M-11 -12l11-6l11 6l-11 7z" fill="#f8e040"/><path d="M-11 -12l11 7v2.500l-11-7z" fill="#c8a818"/><path d="M0 -5l11-7v2.500l-11 7z" fill="#a88810"/><ellipse cx="0" cy="-12.500" rx="3.500" ry="1.800" fill="#e02010"/><path d="M-11 9l11-6l11 6l-11 7z" fill="#f8e040"/><path d="M-11 9l11 7v3l-11-7z" fill="#c8a818"/><path d="M0 16l11-7v3l-11 7z" fill="#a88810"/><ellipse cx="0" cy="9" rx="3.800" ry="2" fill="#5a1808"/><path d="M0 -4v9M-1.500 3l1.500 3l1.500-3" stroke="#333" stroke-width="1.300" fill="none"/></svg>
<svg style="left:219px;top:934px" width="7" height="10" viewBox="0 0 7 10"><path d="M0.5 0.3L6 5L0.5 9.7z" fill="#0a0a0a"/></svg>
<svg style="left:229.0px;top:918.0px" width="40" height="40" viewBox="-20.0 -20.0 40 40"><path d="M-17 -14l5-4h24l5 4v30h-34z" fill="#9a9ae8"/><path d="M-17 -14h34v26h-34z" fill="url(#gLil)"/><path d="M-2 -14h4v26h-4z" fill="#e8e8ff" opacity=".8"/><path d="M2 -2h15v14h-15z" fill="#c9c9d8" opacity=".7"/><path d="M-17 12h34v4h-34z" fill="#6a6ac8"/><path d="M-14 -4v-7c0-6 7-9 13-8c8 1 13 5 13 12h4l-7 8l-7-8h4c0-4-3-7-8-7c-3 0-5 1-5 4v6z" fill="#f4e020" stroke="#a89810" stroke-width=".8"/></svg>
<svg style="left:18.0px;top:963.0px" width="40" height="40" viewBox="-20.0 -20.0 40 40"><ellipse cx="0" cy="13" rx="16" ry="3" fill="#888" opacity=".45" filter="url(#ib1)"/><path d="M0 -18l5 10l12 1l-8 9l4 13l-13-6l-13 6l4-13l-8-9l12-1z" fill="url(#gLilR)" stroke="#7a7ad8" stroke-width="1" stroke-linejoin="round"/><circle cx="0" cy="-4" r="5" fill="#e4e4fc"/><path d="M0 1v12" stroke="#b8b8f4" stroke-width="2.500"/></svg>
<svg style="left:71.0px;top:963.0px" width="40" height="40" viewBox="-20.0 -20.0 40 40"><ellipse cx="2" cy="14" rx="16" ry="2.500" fill="#888" opacity=".4" filter="url(#ib1)"/><path d="M-18 -5v-3h8c0-12 20-12 20 0h8v3" fill="none" stroke="#2a2a2a" stroke-width="1.500"/><path d="M-16 6l9-10c6-3 14-2 20 3l4 4l-12 10z" fill="url(#gLil)"/><path d="M-16 6l22 8l-1 3l-22-8z" fill="#d8d8f8"/><ellipse cx="11" cy="7" rx="6" ry="5" transform="rotate(35 11 7)" fill="#8a8ad8"/><path d="M-8 9l10-13M-8 3c4-2 9-1 12 1" stroke="#e02030" stroke-width="1.500" fill="none"/></svg>
<svg style="left:123.0px;top:964.0px" width="40" height="40" viewBox="-20.0 -20.0 40 40"><path d="M-16 -4c3-5 9-8 14-7c9 0 17 7 19 17l-8 5c-2-9-8-14-16-14z" fill="#d0604a"/><path d="M-2 -11c9 0 17 7 19 17l-4 2.500c-2-9-8-15-17-16z" fill="#e88a70"/><path d="M-16 -4l9 1c-3 1-5 3-6 5z" fill="#f4e0b0"/><path d="M1 6c3 1 6 4 8 9l-5 1c-1-4-3-7-6-8z" fill="#f4e0b0"/></svg>
<svg style="left:166px;top:978px" width="7" height="10" viewBox="0 0 7 10"><path d="M0.5 0.3L6 5L0.5 9.7z" fill="#0a0a0a"/></svg>
<svg style="left:175.0px;top:963.0px" width="40" height="40" viewBox="-20.0 -20.0 40 40"><path d="M12 15l6-7v7z" fill="#999" opacity=".6"/><rect x="-16" y="-16" width="32" height="32" fill="url(#gBlueSq)"/><path d="M-3 -13c6-2 11 2 11 8c3 3 3 8 0 11c-3 4-9 5-14 3c-5-1-8-5-7-9c-1-6 4-12 10-13z" fill="#dfe6f6" opacity=".75"/><ellipse cx="2" cy="-5" rx="4" ry="5" fill="#8fa0c8"/><path d="M-9 6c4 3 12 3 17-1" stroke="#7f90b8" stroke-width="2" fill="none"/><path d="M-8 -2c2-6 6-9 11-9" stroke="#f6f8ff" stroke-width="1.500" fill="none"/></svg>
<svg style="left:229.0px;top:963.0px" width="40" height="40" viewBox="-20.0 -20.0 40 40"><ellipse cx="1" cy="13" rx="16" ry="2.500" fill="#888" opacity=".4" filter="url(#ib1)"/><path d="M-18 5l18-9l18 7l-17 11z" fill="#b9b9ee"/><path d="M-16 8l17-8l17 6l-17 10z" fill="#d9d9f8" stroke="#9a9ad8" stroke-width=".6"/><path d="M-12 -6l14-10l9 4l2 13l-11 7l-13-4z" fill="#f0e438"/><path d="M-12 -6l14-10l9 4" stroke="#c8b820" stroke-width="1" stroke-dasharray="2 1" fill="none"/></svg>
<div style="left:0;top:1005px;width:300px;height:16px;overflow:hidden;">
<svg style="left:16px;top:0px" width="40" height="40" viewBox="-20 -4 40 40"><path d="M-13 14c1-5 5-8 10-8c4-2 9-1 12 2c2 2 3 4 3 6z" fill="#d81818"/><path d="M-8 9c3-2 7-2 10 0" stroke="#ff8a80" stroke-width="1.500" fill="none"/></svg>
<svg style="left:71px;top:0px" width="40" height="40" viewBox="-20 -4 40 40"><g fill="none" stroke="#b4b4b4" stroke-width="2"><path d="M-17 6h34l-3 12h-28z"/><path d="M-9 6l1 12M0 6v12M9 6l-1 12"/></g><rect x="-10" y="10" width="18" height="6" fill="#c8c8c8"/></svg>
<svg style="left:126px;top:0px" width="40" height="40" viewBox="-20 -4 40 40"><path d="M-16 18c1-8 7-14 15-14c8 0 15 6 17 14z" fill="url(#gLilR)"/><path d="M-1 4l4-1l13 15h-4z" fill="#7a7ad8"/></svg>
<svg style="left:174px;top:0px" width="40" height="40" viewBox="-20 -4 40 40"><path d="M-16 18c1-7 7-12 16-12c9 0 15 5 16 12z" fill="#2a8ad8"/><g stroke="#bfe4ff" stroke-width=".8" fill="none"><path d="M-12 18c2-6 6-10 12-12M12 18c-2-6-6-10-12-12M-6 18c1-5 3-9 6-12M6 18c-1-5-3-9-6-12M-14 13h28M-10 9h20"/></g></svg>
<svg style="left:222px;top:0px" width="40" height="40" viewBox="-20 -4 40 40"><path d="M-13 18c1-6 5-10 11-11c6 0 10 4 12 11z" fill="#f0dc20"/><path d="M0 6l3 5l5-3l-2 6l-4 2l-3-3z" fill="#2a7ad0"/></svg>
</div>
<svg style="left:381.5px;top:59px" width="26" height="26" viewBox="-12 -12 26 26"><path d="M5 5l5 4" stroke="#e0903a" stroke-width="3.600" stroke-linecap="round"/><circle cx="0" cy="0" r="7.600" fill="#d4ecfa" stroke="#6f8fc0" stroke-width="1.500"/><circle cx="-1" cy="-1.500" r="5.500" fill="#eef8ff" opacity=".6"/><path d="M-4.500 0h9M0 -4.500v9" stroke="#2a4a8a" stroke-width="1.800"/></svg>
<svg style="left:410.5px;top:59px" width="26" height="26" viewBox="-12 -12 26 26"><path d="M5 5l5 4" stroke="#e0903a" stroke-width="3.600" stroke-linecap="round"/><circle cx="0" cy="0" r="7.600" fill="#d4ecfa" stroke="#6f8fc0" stroke-width="1.500"/><circle cx="-1" cy="-1.500" r="5.500" fill="#eef8ff" opacity=".6"/><path d="M-4.500 0h9" stroke="#2a4a8a" stroke-width="1.800"/></svg>
<svg style="left:440px;top:59px" width="26" height="26" viewBox="-12 -12 26 26"><path d="M5 5l5 4" stroke="#e0903a" stroke-width="3.600" stroke-linecap="round"/><circle cx="0" cy="0" r="7.600" fill="#d4ecfa" stroke="#6f8fc0" stroke-width="1.500"/><circle cx="-1" cy="-1.500" r="5.500" fill="#eef8ff" opacity=".6"/><path d="M3 3c3-3 2-7-2-7c-3 0-5 2-4 5" fill="none" stroke="#b0a020" stroke-width="2.200"/><path d="M-5.500 -1.500l2.500 4l2.500-3.500z" fill="#b0a020"/></svg>
<svg style="left:478px;top:59px" width="26" height="26" viewBox="-12 -12 26 26"><path d="M5 5l5 4" stroke="#e0903a" stroke-width="3.600" stroke-linecap="round"/><circle cx="0" cy="0" r="7.600" fill="#d4ecfa" stroke="#6f8fc0" stroke-width="1.500"/><circle cx="-1" cy="-1.500" r="5.500" fill="#eef8ff" opacity=".6"/><text x="-5.500" y="2.500" font-family="Liberation Sans,sans-serif" font-size="7" font-weight="bold" fill="#5a7ab0">1:1</text></svg>
<svg style="left:506.5px;top:59px" width="26" height="26" viewBox="-12 -12 26 26"><path d="M5 5l5 4" stroke="#e0903a" stroke-width="3.600" stroke-linecap="round"/><circle cx="0" cy="0" r="7.600" fill="#d4ecfa" stroke="#6f8fc0" stroke-width="1.500"/><circle cx="-1" cy="-1.500" r="5.500" fill="#eef8ff" opacity=".6"/><rect x="-4" y="-3" width="8" height="6" fill="none" stroke="#4a6aa0" stroke-width="1.500"/></svg>
<svg style="left:535px;top:60px" width="26" height="26" viewBox="-12 -12 26 26"><path d="M-8 -1c0-5 4-8 8-8c5 0 9 4 8 9l5 4v4h-5l-3-2c-3 2-7 2-10 0c-2-2-3-4-3-7z" fill="#9c9c9c"/></svg>
<svg style="left:574px;top:59px" width="58" height="30" viewBox="0 0 58 30"><rect x="0.500" y="0.500" width="27" height="28" fill="#f9f9f9" stroke="#dcdcdc"/><rect x="28.500" y="0.500" width="27" height="28" fill="#f9f9f9" stroke="#dcdcdc"/><g stroke="#555" stroke-width="1" stroke-dasharray="2 1"><path d="M8 7h8M8 10h6M8 20h8M8 23h8M8 26h5"/><path d="M41 7h8M43 10h6M41 20h8M41 23h8M44 26h5"/></g><path d="M15 7v20" stroke="#888" stroke-width=".8"/><path d="M49 7v20" stroke="#888" stroke-width=".8"/><path d="M11 15l7-6v3.500h7v5.500h-7v3.500z" fill="#4a4a4a" stroke="#111" stroke-width="1"/><path d="M47 15l-7-6v3.500h-7v5.500h7v3.500z" fill="#4a4a4a" stroke="#111" stroke-width="1"/></svg>
<svg style="left:633px;top:62px" width="26" height="24" viewBox="-13 -12 26 24"><path d="M-11 0l9-7c5-2 10 0 12 4l-2 6c-4 3-9 3-12 1z" fill="#5a62c8"/><ellipse cx="3" cy="0" rx="6" ry="5" fill="#b8d8f4"/><ellipse cx="2" cy="-1" rx="3.500" ry="2.500" fill="#eef6ff"/><path d="M7 3l4 5" stroke="#e0903a" stroke-width="2.500"/></svg>
<svg style="left:3px;top:3px" width="22" height="22" viewBox="0 0 24 24"><path d="M2 20c0-2 2-3 5-3s5 1 5 3v2h-10z" fill="#2a8a9a"/><rect x="4" y="7" width="6" height="11" fill="#3aa0d8"/><rect x="5" y="3" width="4" height="5" fill="#2a6ab8"/><path d="M11 21l5-18h2l4 18h-3l-1-5h-3l-1 5z" fill="#a030c0"/><path d="M15.500 13h3l-1.500-6z" fill="#f4e8ff"/><path d="M2 22h20" stroke="#1a4a7a" stroke-width="1.200"/></svg>
<svg style="left:8px;top:30px" width="21" height="21" viewBox="0 0 24 24"><path d="M2 20c0-2 2-3 5-3s5 1 5 3v2h-10z" fill="#2a8a9a"/><rect x="4" y="7" width="6" height="11" fill="#3aa0d8"/><rect x="5" y="3" width="4" height="5" fill="#2a6ab8"/><path d="M11 21l5-18h2l4 18h-3l-1-5h-3l-1 5z" fill="#a030c0"/><path d="M15.500 13h3l-1.500-6z" fill="#f4e8ff"/><path d="M2 22h20" stroke="#1a4a7a" stroke-width="1.200"/></svg>
<svg width="0" height="0" style="left:0;top:0"><defs><linearGradient id="gGreySq" x1="0" y1="0" x2="1" y2="1"><stop offset="0" stop-color="#8c8c8c"/><stop offset="1" stop-color="#f2f2f2"/></linearGradient></defs></svg>
<svg style="left:1587.0px;top:118.0px" width="24" height="24" viewBox="-12.0 -12.0 24 24"><path d="M2 9l6-4.500v4.500z" fill="#9a9a9a" opacity=".7"/><path d="M-7 -10h7l4 4v15h-11z" fill="url(#gDoc)"/><path d="M0 -10l4 4h-4z" fill="#f4f7fc"/></svg>
<svg style="left:1628.0px;top:118.0px" width="24" height="24" viewBox="-12.0 -12.0 24 24"><path d="M-9 -6c0-1.500 1-2 2-2h4l2 2h6c1 0 2 1 2 2v4l-16 6z" fill="#f2dc00"/><path d="M-8.500 7c-1-4-.500-7 1-9c4-1.500 11-2.500 16-2c.500 3.500 0 7-1.500 10c-5 1.500-11 2-15.500 1z" fill="url(#gYel)"/></svg>
<svg style="left:1665.0px;top:118.0px" width="24" height="24" viewBox="-12.0 -12.0 24 24"><path d="M6 7l5-4v4z" fill="#999" opacity=".6"/><path d="M-8 -8h16v15h-14.500l-1.500-1.500z" fill="#1d5fd6"/><rect x="-5" y="-7" width="10" height="7" fill="#e9edf2"/><rect x="-4" y="2" width="8" height="5" fill="#d7dbe2"/><rect x="-2.500" y="3" width="2.500" height="4" fill="#1d5fd6"/></svg>
<svg style="left:1706.0px;top:118.0px" width="24" height="24" viewBox="-12.0 -12.0 24 24"><path d="M-6 -8l3-1.500l1 1l2-1l1 1l2-.500l5 9v7l-3 1l-10 0z" fill="#c9a87c"/><path d="M-8 -8l2 1l-1 2l1 2l-1 2l1 2l-1 2l1 3h9l-2-14z" fill="#b8956a" opacity=".8"/><path d="M5 8l5-4v4z" fill="#999" opacity=".5"/></svg>
<svg style="left:1745.5px;top:118.0px" width="24" height="24" viewBox="-12.0 -12.0 24 24"><path d="M6 8l5-5v5z" fill="#888" opacity=".6"/><rect x="-8" y="-8" width="15" height="15" fill="url(#gGreySq)"/></svg>
<svg style="left:1786.0px;top:118.0px" width="24" height="24" viewBox="-12.0 -12.0 24 24"><path d="M-3 2l12-2l3 10h-15z" fill="#8a8ad8"/><rect x="-11" y="-10" width="12" height="14" fill="#1a1408"/><ellipse cx="-5" cy="-4" rx="2.800" ry="3.500" fill="#e9c27a"/><path d="M-9 4c0-4 2-5 4-5c2 0 4 1 4 5z" fill="#5a3a18"/><rect x="-2" y="-10" width="3" height="6" fill="#7d9a50"/></svg>
<svg style="left:1825.5px;top:118.0px" width="24" height="24" viewBox="-12.0 -12.0 24 24"><path d="M-6 -5h12l-1.500 12c-3 1.500-6 1.500-9 0z" fill="#3a8ae8"/><ellipse cx="0" cy="-5" rx="6" ry="2.200" fill="#9cc8f8" stroke="#2a6ac8" stroke-width=".8"/><path d="M-3 -5.500h4" stroke="#fff" stroke-width="1"/><path d="M-4 -2l.800 8" stroke="#8ac0ff" stroke-width="1.500"/></svg>
<svg style="left:1864.5px;top:118.0px" width="24" height="24" viewBox="-12.0 -12.0 24 24"><rect x="-10.500" y="-10.500" width="21" height="21" fill="#f4f4f4" stroke="#fdfdfd"/><path d="M-10.500 10.500v-21h21" stroke="#8a8a8a" fill="none"/><g transform="translate(-3.5,1.5) scale(1)"><circle cx="0" cy="-3" r="5.500" fill="#f8c020"/><circle cx="-1" cy="-4.500" r="3" fill="#fff6b0"/><path d="M-2.500 1.500h5v3h-5z" fill="#c06010"/><path d="M-2 4.500h4v2.500h-4z" fill="#3a1a08"/></g><g transform="translate(4,-1) scale(1)"><circle cx="0" cy="-3" r="5.500" fill="#f8c020"/><circle cx="-1" cy="-4.500" r="3" fill="#fff6b0"/><path d="M-2.500 1.500h5v3h-5z" fill="#c06010"/><path d="M-2 4.500h4v2.500h-4z" fill="#3a1a08"/></g></svg>
<svg style="left:1587.0px;top:251.5px" width="24" height="24" viewBox="-12.0 -12.0 24 24"><path d="M2 9l6-4.500v4.500z" fill="#9a9a9a" opacity=".7"/><path d="M-7 -10h7l4 4v15h-11z" fill="url(#gDoc)"/><path d="M0 -10l4 4h-4z" fill="#f4f7fc"/></svg>
<svg style="left:1622.5px;top:251.5px" width="24" height="24" viewBox="-12.0 -12.0 24 24"><path d="M-9 -6c0-1.500 1-2 2-2h4l2 2h6c1 0 2 1 2 2v4l-16 6z" fill="#f2dc00"/><path d="M-8.500 7c-1-4-.500-7 1-9c4-1.500 11-2.500 16-2c.500 3.500 0 7-1.500 10c-5 1.500-11 2-15.500 1z" fill="url(#gYel)"/></svg>
<svg style="left:1655.5px;top:251.5px" width="24" height="24" viewBox="-12.0 -12.0 24 24"><path d="M6 7l5-4v4z" fill="#999" opacity=".6"/><path d="M-8 -8h16v15h-14.500l-1.500-1.500z" fill="#1d5fd6"/><rect x="-5" y="-7" width="10" height="7" fill="#e9edf2"/><rect x="-4" y="2" width="8" height="5" fill="#d7dbe2"/><rect x="-2.500" y="3" width="2.500" height="4" fill="#1d5fd6"/></svg>
<svg style="left:1691.5px;top:251.5px" width="24" height="24" viewBox="-12.0 -12.0 24 24"><path d="M-6 -8l3-1.500l1 1l2-1l1 1l2-.500l5 9v7l-3 1l-10 0z" fill="#c9a87c"/><path d="M-8 -8l2 1l-1 2l1 2l-1 2l1 2l-1 2l1 3h9l-2-14z" fill="#b8956a" opacity=".8"/><path d="M5 8l5-4v4z" fill="#999" opacity=".5"/></svg>
<svg style="left:1726.0px;top:251.5px" width="24" height="24" viewBox="-12.0 -12.0 24 24"><path d="M-10 3l10-5l10 5l-10 6z" fill="#c01010"/><path d="M-10 3l10 6v1.500l-10-6z" fill="#800808"/><path d="M-4 3l4-2l4 2l-4 2.500z" fill="#f8d020"/><path d="M-10 -4l10-5.500l10 5.500l-10 5.500z" fill="#8a8ae8" stroke="#6a6ac8" stroke-width=".6"/></svg>
<svg style="left:1760.5px;top:251.5px" width="24" height="24" viewBox="-12.0 -12.0 24 24"><rect x="-6.500" y="-10" width="13" height="20" fill="url(#gBlueSq)"/><g transform="translate(0.5,2) scale(1)"><circle cx="0" cy="-3" r="5.500" fill="#f8c020"/><circle cx="-1" cy="-4.500" r="3" fill="#fff6b0"/><path d="M-2.500 1.500h5v3h-5z" fill="#c06010"/><path d="M-2 4.500h4v2.500h-4z" fill="#3a1a08"/></g></svg>
<svg style="left:1796.0px;top:251.5px" width="24" height="24" viewBox="-12.0 -12.0 24 24"><rect x="-9" y="-9" width="18" height="18" fill="#050505"/><circle cx="-3.500" cy="-5" r="2" fill="#8a8a8a"/><circle cx="3.500" cy="-5" r="2" fill="#8a8a8a"/><ellipse cx="0" cy="-2.500" rx="4" ry="3.300" fill="#b0b0b0"/><ellipse cx="0" cy="3.500" rx="5.500" ry="5" fill="#a0a0a0"/><ellipse cx="0" cy="4" rx="3" ry="3" fill="#6a6a6a"/><path d="M6 -7h2.500" stroke="#ddd" stroke-width="1"/></svg>
<svg style="left:1830.5px;top:251.5px" width="24" height="24" viewBox="-12.0 -12.0 24 24"><path d="M-6 -5h12l-1.500 12c-3 1.500-6 1.500-9 0z" fill="#3a8ae8"/><ellipse cx="0" cy="-5" rx="6" ry="2.200" fill="#9cc8f8" stroke="#2a6ac8" stroke-width=".8"/><path d="M-3 -5.500h4" stroke="#fff" stroke-width="1"/><path d="M-4 -2l.800 8" stroke="#8ac0ff" stroke-width="1.500"/></svg>
<svg style="left:1864.5px;top:251.5px" width="24" height="24" viewBox="-12.0 -12.0 24 24"><rect x="-10.500" y="-10.500" width="21" height="21" fill="#f4f4f4" stroke="#fdfdfd"/><path d="M-10.500 10.500v-21h21" stroke="#8a8a8a" fill="none"/><g transform="translate(-3.5,1.5) scale(1)"><circle cx="0" cy="-3" r="5.500" fill="#f8c020"/><circle cx="-1" cy="-4.500" r="3" fill="#fff6b0"/><path d="M-2.500 1.500h5v3h-5z" fill="#c06010"/><path d="M-2 4.500h4v2.500h-4z" fill="#3a1a08"/></g><g transform="translate(4,-1) scale(1)"><circle cx="0" cy="-3" r="5.500" fill="#f8c020"/><circle cx="-1" cy="-4.500" r="3" fill="#fff6b0"/><path d="M-2.500 1.500h5v3h-5z" fill="#c06010"/><path d="M-2 4.500h4v2.500h-4z" fill="#3a1a08"/></g></svg>
<svg style="left:1594px;top:151px" width="21" height="21" viewBox="0 0 21 21"><rect width="21" height="21" fill="#2a2010"/><rect x="13" y="0" width="8" height="9" fill="#7a9448"/><rect x="0" y="0" width="5" height="8" fill="#6a8440"/><path d="M3 21c0-7 3-9 7-9c5 0 8 3 8 9z" fill="#4a3216"/><ellipse cx="10" cy="8" rx="4" ry="5" fill="#e9c27a"/><path d="M5 9c-.500-6 10-7 10 0c1 3 1 6 0 8c-1-4-2-7-5-8c-3 1-4 4-4 8c-1.500-2-1.500-5-1-8z" fill="#2a1606"/><path d="M7 17c2-2 5-2 7 0" fill="#d8b070"/></svg>
<svg style="left:1599px;top:283px" width="30" height="28" viewBox="0 0 30 28"><path d="M3 14c1-7 6-11 12-11c6 0 10 4 12 11c-3 2-5 2-7 1c-1-5-3-7-6-7c-4 0-6 3-7 7z" fill="url(#gGold)"/><path d="M4 15c1-5 4-8 8-8c4 0 6 3 7 8c-3 3-11 3-15 0z" fill="#9a9ae0"/><path d="M4 15c4 3 12 3 15 0l1 1c-4 4-13 4-17 0z" fill="#6a6ac0"/><path d="M3.500 22h8M7.500 18v8" stroke="#111" stroke-width="1.300"/></svg>
<svg style="left:1866.0px;top:285.0px" width="22" height="22" viewBox="-11.0 -11.0 22 22"><g transform="translate(0,2.5) scale(1.15)"><circle cx="0" cy="-3" r="5.500" fill="#f8c020"/><circle cx="-1" cy="-4.500" r="3" fill="#fff6b0"/><path d="M-2.500 1.500h5v3h-5z" fill="#c06010"/><path d="M-2 4.500h4v2.500h-4z" fill="#3a1a08"/></g></svg>
<svg style="left:440px;top:290px" width="1046" height="520" viewBox="440 290 1046 520">
<defs>
<clipPath id="sil"><path clip-rule="evenodd" d="M963.0 300.0C961.8 300.2 958.3 300.3 956.0 301.5C953.7 302.7 950.7 304.8 949.0 307.0C947.3 309.2 946.4 312.3 946.0 315.0C945.6 317.7 947.0 321.2 946.5 323.0C946.0 324.8 944.6 326.2 943.0 326.0C941.4 325.8 939.0 322.6 937.0 321.5C935.0 320.4 931.8 318.8 931.0 319.5C930.2 320.2 933.2 324.1 932.5 326.0C931.8 327.9 929.1 330.1 927.0 331.0C924.9 331.9 923.7 331.2 920.0 331.5C916.3 331.8 909.7 332.0 905.0 333.0C900.3 334.0 895.3 335.3 892.0 337.5C888.7 339.7 887.0 342.9 885.0 346.0C883.0 349.1 882.5 353.5 880.0 356.0C877.5 358.5 873.8 359.6 870.0 361.0C866.2 362.4 858.0 363.1 857.0 364.5C856.0 365.9 864.3 368.2 864.0 369.5C863.7 370.8 859.5 371.4 855.0 372.5C850.5 373.6 841.3 374.6 837.0 376.0C832.7 377.4 832.7 379.7 829.0 381.0C825.3 382.3 818.5 383.5 815.0 384.0C811.5 384.5 809.5 384.8 808.0 384.0C806.5 383.2 807.5 380.2 806.0 379.0C804.5 377.8 801.3 376.4 799.0 376.5C796.7 376.6 793.6 377.9 792.0 379.5C790.4 381.1 789.7 383.8 789.5 386.0C789.3 388.2 791.8 390.7 791.0 393.0C790.2 395.3 788.5 397.6 785.0 400.0C781.5 402.4 775.8 404.2 770.0 407.5C764.2 410.8 756.3 415.8 750.0 420.0C743.7 424.2 737.0 428.8 732.0 432.5C727.0 436.2 722.8 439.9 720.0 442.0C717.2 444.1 716.2 444.7 715.0 445.0C713.8 445.3 715.0 443.8 712.5 444.0C710.0 444.2 704.2 445.0 700.0 446.0C695.8 447.0 690.3 448.5 687.0 450.0C683.7 451.5 682.0 453.9 680.0 455.0C678.0 456.1 677.0 455.9 675.0 456.5C673.0 457.1 670.2 457.8 668.0 458.5C665.8 459.2 664.0 461.2 662.0 460.5C660.0 459.8 658.3 455.4 656.0 454.0C653.7 452.6 650.7 451.8 648.0 452.0C645.3 452.2 642.0 453.3 640.0 455.0C638.0 456.7 637.5 460.5 636.0 462.0C634.5 463.5 633.3 463.8 631.0 464.0C628.7 464.2 625.2 463.0 622.0 463.5C618.8 464.0 614.7 465.8 612.0 467.0C609.3 468.2 608.2 470.5 606.0 471.0C603.8 471.5 601.7 469.3 599.0 470.0C596.3 470.7 592.3 473.2 590.0 475.0C587.7 476.8 586.7 479.3 585.0 481.0C583.3 482.7 582.9 483.7 580.0 485.0C577.1 486.3 571.7 486.9 567.5 489.0C563.3 491.1 558.4 494.9 555.0 497.5C551.6 500.1 546.7 502.2 547.0 504.5C547.3 506.8 556.5 509.2 557.0 511.0C557.5 512.8 553.2 512.8 550.0 515.0C546.8 517.2 541.2 520.2 537.5 524.0C533.8 527.8 531.7 534.0 527.5 537.5C523.3 541.0 518.3 541.4 512.5 545.0C506.7 548.6 497.2 555.8 492.5 559.0C487.8 562.2 486.9 560.5 484.0 564.0C481.1 567.5 477.8 574.4 475.0 580.0C472.2 585.6 469.3 591.7 467.5 597.5C465.7 603.3 464.4 608.8 464.0 615.0C463.6 621.2 464.8 628.3 465.0 635.0C465.2 641.7 465.7 649.2 465.0 655.0C464.3 660.8 461.2 666.2 461.0 670.0C460.8 673.8 463.8 674.6 464.0 677.5C464.2 680.4 461.4 684.4 462.0 687.5C462.6 690.6 464.9 693.5 467.5 696.0C470.1 698.5 475.3 699.8 477.5 702.5C479.7 705.2 480.9 708.8 480.5 712.5C480.1 716.2 477.6 721.7 475.0 725.0C472.4 728.3 467.5 730.0 465.0 732.5C462.5 735.0 460.2 737.2 460.0 740.0C459.8 742.8 461.2 746.7 463.5 749.0C465.8 751.3 473.8 752.2 474.0 754.0C474.2 755.8 466.8 757.7 465.0 760.0C463.2 762.3 463.2 765.2 463.5 768.0C463.8 770.8 465.1 774.9 467.0 777.0C468.9 779.1 473.7 779.9 475.0 780.5L1451.0 780.5C1452.3 779.9 1457.1 779.1 1459.0 777.0C1460.9 774.9 1462.2 770.8 1462.5 768.0C1462.8 765.2 1462.8 762.3 1461.0 760.0C1459.2 757.7 1451.8 755.8 1452.0 754.0C1452.2 752.2 1460.2 751.3 1462.5 749.0C1464.8 746.7 1466.2 742.8 1466.0 740.0C1465.8 737.2 1463.5 735.0 1461.0 732.5C1458.5 730.0 1453.6 728.3 1451.0 725.0C1448.4 721.7 1445.9 716.2 1445.5 712.5C1445.1 708.8 1446.3 705.2 1448.5 702.5C1450.7 699.8 1455.9 698.5 1458.5 696.0C1461.1 693.5 1463.4 690.6 1464.0 687.5C1464.6 684.4 1461.8 680.4 1462.0 677.5C1462.2 674.6 1465.2 673.8 1465.0 670.0C1464.8 666.2 1461.7 660.8 1461.0 655.0C1460.3 649.2 1460.8 641.7 1461.0 635.0C1461.2 628.3 1462.4 621.2 1462.0 615.0C1461.6 608.8 1460.3 603.3 1458.5 597.5C1456.7 591.7 1453.8 585.6 1451.0 580.0C1448.2 574.4 1444.9 567.5 1442.0 564.0C1439.1 560.5 1438.2 562.2 1433.5 559.0C1428.8 555.8 1419.3 548.6 1413.5 545.0C1407.7 541.4 1402.7 541.0 1398.5 537.5C1394.3 534.0 1392.2 527.8 1388.5 524.0C1384.8 520.2 1379.2 517.2 1376.0 515.0C1372.8 512.8 1368.5 512.8 1369.0 511.0C1369.5 509.2 1378.7 506.8 1379.0 504.5C1379.3 502.2 1374.4 500.1 1371.0 497.5C1367.6 494.9 1362.7 491.1 1358.5 489.0C1354.3 486.9 1348.9 486.3 1346.0 485.0C1343.1 483.7 1342.7 482.7 1341.0 481.0C1339.3 479.3 1338.3 476.8 1336.0 475.0C1333.7 473.2 1329.7 470.7 1327.0 470.0C1324.3 469.3 1322.2 471.5 1320.0 471.0C1317.8 470.5 1316.7 468.2 1314.0 467.0C1311.3 465.8 1307.2 464.0 1304.0 463.5C1300.8 463.0 1297.3 464.2 1295.0 464.0C1292.7 463.8 1291.5 463.5 1290.0 462.0C1288.5 460.5 1288.0 456.7 1286.0 455.0C1284.0 453.3 1280.7 452.2 1278.0 452.0C1275.3 451.8 1272.3 452.6 1270.0 454.0C1267.7 455.4 1266.0 459.8 1264.0 460.5C1262.0 461.2 1260.2 459.2 1258.0 458.5C1255.8 457.8 1253.0 457.1 1251.0 456.5C1249.0 455.9 1248.0 456.1 1246.0 455.0C1244.0 453.9 1242.3 451.5 1239.0 450.0C1235.7 448.5 1230.2 447.0 1226.0 446.0C1221.8 445.0 1216.0 444.2 1213.5 444.0C1211.0 443.8 1212.2 445.3 1211.0 445.0C1209.8 444.7 1208.8 444.1 1206.0 442.0C1203.2 439.9 1199.0 436.2 1194.0 432.5C1189.0 428.8 1182.3 424.2 1176.0 420.0C1169.7 415.8 1161.8 410.8 1156.0 407.5C1150.2 404.2 1144.5 402.4 1141.0 400.0C1137.5 397.6 1135.8 395.3 1135.0 393.0C1134.2 390.7 1136.7 388.2 1136.5 386.0C1136.3 383.8 1135.6 381.1 1134.0 379.5C1132.4 377.9 1129.3 376.6 1127.0 376.5C1124.7 376.4 1121.5 377.8 1120.0 379.0C1118.5 380.2 1119.5 383.2 1118.0 384.0C1116.5 384.8 1114.5 384.5 1111.0 384.0C1107.5 383.5 1100.7 382.3 1097.0 381.0C1093.3 379.7 1093.3 377.4 1089.0 376.0C1084.7 374.6 1075.5 373.6 1071.0 372.5C1066.5 371.4 1062.3 370.8 1062.0 369.5C1061.7 368.2 1070.0 365.9 1069.0 364.5C1068.0 363.1 1059.8 362.4 1056.0 361.0C1052.2 359.6 1048.5 358.5 1046.0 356.0C1043.5 353.5 1043.0 349.1 1041.0 346.0C1039.0 342.9 1037.3 339.7 1034.0 337.5C1030.7 335.3 1025.7 334.0 1021.0 333.0C1016.3 332.0 1009.7 331.8 1006.0 331.5C1002.3 331.2 1001.1 331.9 999.0 331.0C996.9 330.1 994.2 327.9 993.5 326.0C992.8 324.1 995.8 320.2 995.0 319.5C994.2 318.8 991.0 320.4 989.0 321.5C987.0 322.6 984.6 325.8 983.0 326.0C981.4 326.2 980.0 324.8 979.5 323.0C979.0 321.2 980.4 317.7 980.0 315.0C979.6 312.3 978.7 309.2 977.0 307.0C975.3 304.8 972.3 302.7 970.0 301.5C967.7 300.3 964.2 300.2 963.0 300.0Z M500.5 613.0C500.8 610.2 503.6 600.4 506.7 595.0C509.8 589.6 514.2 584.6 519.0 580.5C523.8 576.4 529.2 572.8 535.5 570.5C541.8 568.2 549.8 567.3 557.0 567.0C564.2 566.7 571.2 567.5 578.5 568.8C585.8 570.1 592.7 572.0 600.5 575.0C608.3 578.0 617.1 582.1 625.4 586.5C633.6 590.9 641.4 595.8 650.0 601.5C658.6 607.2 669.8 615.7 677.0 621.0C684.2 626.3 692.2 630.8 693.5 633.5C694.8 636.2 689.6 638.8 685.0 637.5C680.4 636.2 672.7 630.5 666.0 626.0C659.3 621.5 652.0 615.4 645.0 610.7C638.0 606.0 631.6 601.8 624.0 597.7C616.4 593.6 607.1 589.0 599.5 586.2C591.9 583.4 585.6 581.8 578.5 580.7C571.4 579.6 564.0 579.0 557.0 579.7C550.0 580.4 542.2 582.5 536.5 584.7C530.8 586.9 527.0 589.7 523.0 592.7C519.0 595.7 515.5 599.3 512.5 602.5C509.5 605.7 507.0 610.2 505.0 612.0C503.0 613.8 500.2 615.8 500.5 613.0ZM703.5 649.0C705.8 648.8 714.6 651.6 720.5 654.5C726.4 657.4 733.0 662.7 739.0 666.5C745.0 670.3 750.8 673.8 756.6 677.5C762.4 681.2 768.2 685.5 774.0 688.5C779.8 691.5 784.6 693.2 791.5 695.5C798.4 697.8 813.2 700.5 815.5 702.5C817.8 704.5 809.2 706.8 805.0 707.5C800.8 708.2 796.0 707.6 790.5 706.7C785.0 705.8 778.0 704.5 772.0 702.0C766.0 699.5 760.4 695.5 754.6 691.7C748.8 687.9 742.9 683.2 737.0 679.0C731.1 674.8 724.0 670.4 719.0 666.5C714.0 662.6 709.6 658.4 707.0 655.5C704.4 652.6 701.2 649.2 703.5 649.0ZM1425.5 613.0C1425.2 610.2 1422.4 600.4 1419.3 595.0C1416.2 589.6 1411.8 584.6 1407.0 580.5C1402.2 576.4 1396.8 572.8 1390.5 570.5C1384.2 568.2 1376.2 567.3 1369.0 567.0C1361.8 566.7 1354.8 567.5 1347.5 568.8C1340.2 570.1 1333.3 572.0 1325.5 575.0C1317.7 578.0 1308.8 582.1 1300.6 586.5C1292.3 590.9 1284.6 595.8 1276.0 601.5C1267.4 607.2 1256.2 615.7 1249.0 621.0C1241.8 626.3 1233.8 630.8 1232.5 633.5C1231.2 636.2 1236.4 638.8 1241.0 637.5C1245.6 636.2 1253.3 630.5 1260.0 626.0C1266.7 621.5 1274.0 615.4 1281.0 610.7C1288.0 606.0 1294.4 601.8 1302.0 597.7C1309.6 593.6 1318.9 589.0 1326.5 586.2C1334.1 583.4 1340.4 581.8 1347.5 580.7C1354.6 579.6 1362.0 579.0 1369.0 579.7C1376.0 580.4 1383.8 582.5 1389.5 584.7C1395.2 586.9 1399.0 589.7 1403.0 592.7C1407.0 595.7 1410.5 599.3 1413.5 602.5C1416.5 605.7 1419.0 610.2 1421.0 612.0C1423.0 613.8 1425.8 615.8 1425.5 613.0ZM1222.5 649.0C1220.2 648.8 1211.4 651.6 1205.5 654.5C1199.6 657.4 1193.0 662.7 1187.0 666.5C1181.0 670.3 1175.2 673.8 1169.4 677.5C1163.6 681.2 1157.8 685.5 1152.0 688.5C1146.2 691.5 1141.4 693.2 1134.5 695.5C1127.6 697.8 1112.8 700.5 1110.5 702.5C1108.2 704.5 1116.8 706.8 1121.0 707.5C1125.2 708.2 1130.0 707.6 1135.5 706.7C1141.0 705.8 1148.0 704.5 1154.0 702.0C1160.0 699.5 1165.6 695.5 1171.4 691.7C1177.2 687.9 1183.1 683.2 1189.0 679.0C1194.9 674.8 1202.0 670.4 1207.0 666.5C1212.0 662.6 1216.4 658.4 1219.0 655.5C1221.6 652.6 1224.8 649.2 1222.5 649.0Z"/></clipPath>
<clipPath id="lhalf"><rect x="440" y="290" width="523" height="520"/></clipPath>
<clipPath id="rhalf"><rect x="962.5" y="290" width="523.5" height="520"/></clipPath>
<filter id="e1" filterUnits="userSpaceOnUse" x="430" y="285" width="1066" height="530" color-interpolation-filters="sRGB">
  <feGaussianBlur in="SourceAlpha" stdDeviation="1.2" result="h"/>
  <feDiffuseLighting in="h" surfaceScale="3.2" diffuseConstant="1" lighting-color="#f6f6f6" result="lit"><feDistantLight azimuth="0" elevation="90"/></feDiffuseLighting>
  <feComposite in="lit" in2="SourceAlpha" operator="in" result="c"/>
  <feGaussianBlur in="SourceAlpha" stdDeviation="1.6" result="sh"/>
  <feComponentTransfer in="sh" result="sh2"><feFuncA type="linear" slope="0.55"/></feComponentTransfer>
  <feMerge><feMergeNode in="sh2"/><feMergeNode in="c"/></feMerge>
</filter>
<filter id="e2" filterUnits="userSpaceOnUse" x="430" y="285" width="1066" height="530" color-interpolation-filters="sRGB">
  <feGaussianBlur in="SourceAlpha" stdDeviation="2.2" result="h"/>
  <feDiffuseLighting in="h" surfaceScale="5" diffuseConstant="1" lighting-color="#f6f6f6" result="lit"><feDistantLight azimuth="0" elevation="90"/></feDiffuseLighting>
  <feComposite in="lit" in2="SourceAlpha" operator="in" result="c"/>
  <feGaussianBlur in="SourceAlpha" stdDeviation="2.2" result="sh"/>
  <feComponentTransfer in="sh" result="sh2"><feFuncA type="linear" slope="0.55"/></feComponentTransfer>
  <feMerge><feMergeNode in="sh2"/><feMergeNode in="c"/></feMerge>
</filter>
<filter id="e3" filterUnits="userSpaceOnUse" x="430" y="285" width="1066" height="530" color-interpolation-filters="sRGB">
  <feGaussianBlur in="SourceAlpha" stdDeviation="4.2" result="h"/>
  <feDiffuseLighting in="h" surfaceScale="9" diffuseConstant="1" lighting-color="#f6f6f6" result="lit"><feDistantLight azimuth="0" elevation="90"/></feDiffuseLighting>
  <feComposite in="lit" in2="SourceAlpha" operator="in" result="c"/>
  <feGaussianBlur in="SourceAlpha" stdDeviation="3" result="sh"/>
  <feComponentTransfer in="sh" result="sh2"><feFuncA type="linear" slope="0.5"/></feComponentTransfer>
  <feMerge><feMergeNode in="sh2"/><feMergeNode in="c"/></feMerge>
</filter>
<filter id="b2"><feGaussianBlur stdDeviation="2"/></filter>
<filter id="b4"><feGaussianBlur stdDeviation="4"/></filter>
<filter id="b8"><feGaussianBlur stdDeviation="8"/></filter>
<filter id="b14"><feGaussianBlur stdDeviation="14"/></filter>
<radialGradient id="hl"><stop offset="0" stop-color="#fff" stop-opacity="1"/><stop offset="0.35" stop-color="#fff" stop-opacity=".8"/><stop offset="1" stop-color="#fff" stop-opacity="0"/></radialGradient>
<radialGradient id="dk"><stop offset="0" stop-color="#000" stop-opacity=".75"/><stop offset="0.5" stop-color="#000" stop-opacity=".45"/><stop offset="1" stop-color="#000" stop-opacity="0"/></radialGradient>
<linearGradient id="strip" x1="0" y1="0" x2="0" y2="1"><stop offset="0" stop-color="#dcdcdc"/><stop offset="0.35" stop-color="#f6f6f6"/><stop offset="1" stop-color="#fdfdfd"/></linearGradient>
</defs>
<rect x="452.5" y="295.5" width="1020.5" height="502" fill="#ffff80" stroke="#1a1a1a" stroke-width="1"/>
<rect x="453" y="781" width="1019.5" height="16" fill="url(#strip)"/>
<g clip-path="url(#sil)">
<rect x="453" y="296" width="1020" height="490" fill="#9a9a9a"/>
<g clip-path="url(#rhalf)"><path d="M963.0 408.0C975.5 408.3 1007.2 411.3 1026.0 410.0C1044.8 408.7 1059.3 403.0 1076.0 400.0C1092.7 397.0 1111.0 389.5 1126.0 392.0C1141.0 394.5 1154.3 406.2 1166.0 415.0C1177.7 423.8 1188.3 432.5 1196.0 445.0C1203.7 457.5 1209.0 475.8 1212.0 490.0C1215.0 504.2 1215.0 515.8 1214.0 530.0C1213.0 544.2 1211.5 559.7 1206.0 575.0C1200.5 590.3 1191.8 607.8 1181.0 622.0C1170.2 636.2 1155.2 649.7 1141.0 660.0C1126.8 670.3 1111.8 677.3 1096.0 684.0C1080.2 690.7 1062.7 699.0 1046.0 700.0C1029.3 701.0 1009.8 691.7 996.0 690.0C982.2 688.3 970.5 690.0 963.0 690.0C955.5 690.0 953.0 737.0 951.0 690.0C949.0 643.0 949.0 455.0 951.0 408.0C953.0 361.0 950.5 407.7 963.0 408.0Z" fill="#606060" opacity="1"/><path d="M963.0 476.4C969.4 479.0 980.4 482.5 989.7 485.5C999.0 488.5 1009.0 491.4 1018.7 494.6C1028.3 497.9 1038.0 503.9 1047.7 505.0C1057.3 506.1 1067.0 503.9 1076.7 501.1C1086.3 498.3 1097.9 493.5 1105.7 488.1C1113.4 482.7 1116.7 473.4 1123.1 468.6C1129.5 463.8 1138.2 459.5 1144.0 459.5C1149.8 459.5 1155.0 462.8 1157.9 468.6C1160.8 474.5 1159.8 487.5 1161.4 494.6C1162.9 501.8 1165.0 505.4 1167.2 511.5C1169.3 517.6 1173.2 524.5 1174.1 531.0C1175.1 537.5 1175.7 544.0 1173.0 550.5C1170.3 557.0 1161.7 563.1 1157.9 570.0C1154.0 576.9 1153.6 585.6 1149.8 592.1C1145.9 598.6 1142.0 605.1 1134.7 609.0C1127.3 612.9 1113.4 612.2 1105.7 615.5C1097.9 618.8 1094.1 623.1 1088.3 628.5C1082.5 633.9 1077.6 643.9 1070.9 648.0C1064.1 652.1 1056.4 654.3 1047.7 653.2C1039.0 652.1 1028.3 641.3 1018.7 641.5C1009.0 641.7 999.0 650.2 989.7 654.5C980.4 658.8 969.4 665.2 963.0 667.5C956.6 669.8 953.0 700.9 951.0 668.0C949.0 635.1 949.0 501.9 951.0 470.0C953.0 438.1 956.6 473.8 963.0 476.4Z" fill="#8a8a8a" opacity="1" filter="url(#b4)"/><path d="M963.0 487.2C969.1 488.9 979.0 492.6 987.6 495.2C996.2 497.9 1005.4 500.4 1014.4 503.3C1023.3 506.2 1032.2 511.5 1041.1 512.5C1050.0 513.5 1058.9 511.5 1067.9 509.1C1076.8 506.6 1087.5 502.3 1094.6 497.6C1101.7 492.8 1104.8 484.5 1110.7 480.3C1116.5 476.1 1124.6 472.2 1129.9 472.2C1135.3 472.2 1140.1 475.1 1142.8 480.3C1145.4 485.5 1144.5 497.0 1146.0 503.3C1147.4 509.6 1149.4 512.9 1151.3 518.2C1153.3 523.6 1156.8 529.8 1157.7 535.5C1158.6 541.2 1159.2 547.0 1156.7 552.8C1154.2 558.5 1146.3 563.9 1142.8 570.0C1139.2 576.1 1138.8 583.8 1135.3 589.5C1131.7 595.3 1128.1 601.0 1121.4 604.5C1114.6 608.0 1101.7 607.4 1094.6 610.2C1087.5 613.1 1083.9 617.0 1078.6 621.8C1073.2 626.5 1068.8 635.4 1062.5 639.0C1056.3 642.6 1049.1 644.6 1041.1 643.6C1033.1 642.6 1023.3 633.1 1014.4 633.2C1005.4 633.4 996.2 640.9 987.6 644.8C979.0 648.6 969.1 654.2 963.0 656.2C956.9 658.3 953.0 685.5 951.0 657.0C949.0 628.5 949.0 513.3 951.0 485.0C953.0 456.7 956.9 485.5 963.0 487.2Z" fill="#a2a2a2" opacity="1"/><path d="M963.0 498.0C968.8 499.2 978.0 502.7 986.0 505.0C994.0 507.3 1002.7 509.5 1011.0 512.0C1019.3 514.5 1027.7 519.2 1036.0 520.0C1044.3 520.8 1052.7 519.2 1061.0 517.0C1069.3 514.8 1079.3 511.2 1086.0 507.0C1092.7 502.8 1095.5 495.7 1101.0 492.0C1106.5 488.3 1114.0 485.0 1119.0 485.0C1124.0 485.0 1128.5 487.5 1131.0 492.0C1133.5 496.5 1132.7 506.5 1134.0 512.0C1135.3 517.5 1137.2 520.3 1139.0 525.0C1140.8 529.7 1144.2 535.0 1145.0 540.0C1145.8 545.0 1146.3 550.0 1144.0 555.0C1141.7 560.0 1134.3 564.7 1131.0 570.0C1127.7 575.3 1127.3 582.0 1124.0 587.0C1120.7 592.0 1117.3 597.0 1111.0 600.0C1104.7 603.0 1092.7 602.5 1086.0 605.0C1079.3 607.5 1076.0 610.8 1071.0 615.0C1066.0 619.2 1061.8 626.8 1056.0 630.0C1050.2 633.2 1043.5 634.8 1036.0 634.0C1028.5 633.2 1019.3 624.8 1011.0 625.0C1002.7 625.2 994.0 631.7 986.0 635.0C978.0 638.3 968.8 643.3 963.0 645.0C957.2 646.7 953.0 669.5 951.0 645.0C949.0 620.5 949.0 522.5 951.0 498.0C953.0 473.5 957.2 496.8 963.0 498.0Z" fill="#cacaca" opacity="1"/><path d="M1434.0 640.0C1429.0 625.0 1430.7 618.0 1426.0 610.0C1421.3 602.0 1415.5 596.7 1406.0 592.0C1396.5 587.3 1382.3 582.7 1369.0 582.0C1355.7 581.3 1341.2 582.8 1326.0 588.0C1310.8 593.2 1294.7 602.7 1278.0 613.0C1261.3 623.3 1244.0 636.7 1226.0 650.0C1208.0 663.3 1189.2 683.0 1170.0 693.0C1150.8 703.0 1130.0 706.3 1111.0 710.0C1092.0 713.7 1071.0 711.7 1056.0 715.0C1041.0 718.3 1026.8 718.8 1021.0 730.0C1015.2 741.2 948.5 773.3 1021.0 782.0C1093.5 790.7 1383.5 795.7 1456.0 782.0C1528.5 768.3 1459.7 723.7 1456.0 700.0C1452.3 676.3 1439.0 655.0 1434.0 640.0Z" fill="#8d8d8d" opacity="1"/><path d="M1429.0 640.0C1428.0 635.3 1427.2 619.3 1423.0 612.0C1418.8 604.7 1413.0 600.2 1404.0 596.0C1395.0 591.8 1382.0 587.3 1369.0 587.0C1356.0 586.7 1340.8 588.7 1326.0 594.0C1311.2 599.3 1296.3 608.5 1280.0 619.0C1263.7 629.5 1246.0 643.7 1228.0 657.0C1210.0 670.3 1191.0 689.2 1172.0 699.0C1153.0 708.8 1131.7 712.2 1114.0 716.0C1096.3 719.8 1074.0 721.0 1066.0 722.0" fill="none" stroke="#3c3c3c" stroke-width="16" filter="url(#b4)" opacity=".75"/><ellipse cx="1258" cy="692" rx="52" ry="46" fill="url(#hl)" opacity="1"/><ellipse cx="1258" cy="692" rx="30" ry="26" fill="url(#hl)" opacity="0.8"/><ellipse cx="1146" cy="726" rx="60" ry="18" fill="url(#hl)" opacity="0.45"/><ellipse cx="1314" cy="700" rx="22" ry="40" fill="url(#dk)" opacity="0.5"/><rect x="956" y="745" width="500" height="40" fill="#b9b9b9" filter="url(#b4)"/><rect x="956" y="768" width="500" height="16" fill="#4a4a4a" filter="url(#b4)" opacity=".85"/><ellipse cx="1370" cy="760" rx="40" ry="14" fill="url(#hl)" opacity="0.9"/><ellipse cx="1286" cy="764" rx="40" ry="12" fill="url(#hl)" opacity="0.7"/><ellipse cx="1196" cy="764" rx="50" ry="10" fill="url(#hl)" opacity="0.5"/><ellipse cx="1096" cy="766" rx="40" ry="9" fill="url(#hl)" opacity="0.4"/><path d="M1439.0 560.0C1430.3 551.3 1418.2 544.7 1406.0 538.0C1393.8 531.3 1379.3 526.3 1366.0 520.0C1352.7 513.7 1349.3 511.7 1326.0 500.0C1302.7 488.3 1246.0 455.0 1226.0 450.0C1206.0 445.0 1206.8 458.3 1206.0 470.0C1205.2 481.7 1217.7 498.3 1221.0 520.0C1224.3 541.7 1223.5 580.0 1226.0 600.0C1228.5 620.0 1226.0 640.0 1236.0 640.0C1246.0 640.0 1267.7 611.3 1286.0 600.0C1304.3 588.7 1327.7 576.0 1346.0 572.0C1364.3 568.0 1383.5 571.3 1396.0 576.0C1408.5 580.7 1415.2 589.3 1421.0 600.0C1426.8 610.7 1425.2 625.0 1431.0 640.0C1436.8 655.0 1450.5 690.0 1456.0 690.0C1461.5 690.0 1463.7 656.7 1464.0 640.0C1464.3 623.3 1462.2 603.3 1458.0 590.0C1453.8 576.7 1447.7 568.7 1439.0 560.0Z" fill="#7b7b7b" opacity="1"/><g filter="url(#e1)"><path d="M1430.0 620.0C1429.3 617.8 1428.7 611.3 1426.0 607.0C1423.3 602.7 1419.0 597.7 1414.0 594.0C1409.0 590.3 1403.5 587.1 1396.0 585.0C1388.5 582.9 1377.3 581.9 1369.0 581.5C1360.7 581.1 1353.5 581.4 1346.0 582.5C1338.5 583.6 1331.7 585.1 1324.0 588.0C1316.3 590.9 1307.7 595.8 1300.0 600.0C1292.3 604.2 1285.0 608.3 1278.0 613.0C1271.0 617.7 1264.3 623.3 1258.0 628.0C1251.7 632.7 1245.7 636.9 1240.0 641.0C1234.3 645.1 1229.7 648.0 1224.0 652.5C1218.3 657.0 1212.0 663.2 1206.0 668.0C1200.0 672.8 1194.0 676.8 1188.0 681.0C1182.0 685.2 1175.8 689.3 1170.0 693.0C1164.2 696.7 1159.0 700.4 1153.0 703.0C1147.0 705.6 1141.0 707.5 1134.0 708.5C1127.0 709.5 1119.0 709.1 1111.0 709.0C1103.0 708.9 1094.3 708.5 1086.0 708.0C1077.7 707.5 1065.2 706.3 1061.0 706.0" fill="none" stroke="#000" stroke-width="8.9" stroke-linecap="round" stroke-linejoin="round"/><path d="M1427.0 600.0C1425.8 598.2 1423.2 592.8 1420.0 589.0C1416.8 585.2 1413.0 580.6 1408.0 577.0C1403.0 573.4 1396.5 569.7 1390.0 567.5C1383.5 565.3 1376.3 564.2 1369.0 564.0C1361.7 563.8 1353.5 564.7 1346.0 566.0C1338.5 567.3 1331.7 569.2 1324.0 572.0C1316.3 574.8 1308.0 578.7 1300.0 583.0C1292.0 587.3 1284.5 592.2 1276.0 598.0C1267.5 603.8 1256.5 612.0 1249.0 617.5C1241.5 623.0 1236.2 626.8 1231.0 631.0C1225.8 635.2 1222.5 639.6 1218.0 643.0C1213.5 646.4 1209.0 648.2 1204.0 651.5C1199.0 654.8 1193.7 658.7 1188.0 662.5C1182.3 666.3 1175.8 670.7 1170.0 674.5C1164.2 678.3 1158.8 682.5 1153.0 685.5C1147.2 688.5 1141.8 690.4 1135.0 692.5C1128.2 694.6 1120.2 696.9 1112.0 698.0C1103.8 699.1 1094.5 699.0 1086.0 699.0C1077.5 699.0 1065.2 698.2 1061.0 698.0" fill="none" stroke="#000" stroke-width="7.9" stroke-linecap="round" stroke-linejoin="round"/><circle cx="1430" cy="621" r="5.5"/></g><g filter="url(#e2)"><path d="M1457.0 672.0C1456.7 668.3 1455.3 657.8 1455.0 650.0C1454.7 642.2 1455.5 633.3 1455.0 625.0C1454.5 616.7 1453.8 607.8 1452.0 600.0C1450.2 592.2 1447.3 584.7 1444.0 578.0C1440.7 571.3 1437.0 565.5 1432.0 560.0C1427.0 554.5 1420.3 549.3 1414.0 545.0C1407.7 540.7 1400.7 537.5 1394.0 534.0C1387.3 530.5 1377.3 525.7 1374.0 524.0" fill="none" stroke="#000" stroke-width="14.4" stroke-linecap="round" stroke-linejoin="round"/></g><g filter="url(#e1)"><path d="M1440.0 640.0C1439.8 636.3 1440.0 625.0 1439.0 618.0C1438.0 611.0 1436.7 604.5 1434.0 598.0C1431.3 591.5 1427.7 584.8 1423.0 579.0C1418.3 573.2 1412.5 567.3 1406.0 563.0C1399.5 558.7 1391.7 555.5 1384.0 553.0C1376.3 550.5 1368.0 548.5 1360.0 548.0C1352.0 547.5 1340.0 549.7 1336.0 550.0" fill="none" stroke="#000" stroke-width="8.4" stroke-linecap="round" stroke-linejoin="round"/></g><path d="M1366.0 500.0C1352.7 488.3 1342.7 477.5 1326.0 470.0C1309.3 462.5 1284.7 459.0 1266.0 455.0C1247.3 451.0 1224.3 443.5 1214.0 446.0C1203.7 448.5 1203.3 457.7 1204.0 470.0C1204.7 482.3 1215.0 503.3 1218.0 520.0C1221.0 536.7 1219.0 556.7 1222.0 570.0C1225.0 583.3 1225.3 597.5 1236.0 600.0C1246.7 602.5 1269.3 591.7 1286.0 585.0C1302.7 578.3 1319.3 566.2 1336.0 560.0C1352.7 553.8 1374.3 551.3 1386.0 548.0C1397.7 544.7 1409.3 548.0 1406.0 540.0C1402.7 532.0 1379.3 511.7 1366.0 500.0Z" fill="#7a7a7a" opacity="1"/><ellipse cx="1288" cy="494" rx="12" ry="8" fill="url(#dk)" opacity="1"/><ellipse cx="1229" cy="484" rx="10" ry="10" fill="url(#dk)" opacity="1"/><ellipse cx="1274" cy="556" rx="20" ry="7" fill="url(#dk)" opacity="1"/><ellipse cx="1314" cy="505" rx="12" ry="5" fill="url(#dk)" opacity="0.7"/><ellipse cx="1224" cy="562" rx="7" ry="14" fill="url(#dk)" opacity="0.8"/><ellipse cx="1236" cy="520" rx="6" ry="10" fill="url(#dk)" opacity="0.6"/><g filter="url(#e2)"><path d="M1338.8 492.1C1338.9 489.9 1340.9 489.9 1342.0 488.9C1343.2 488.0 1344.4 487.2 1345.6 486.5C1346.9 485.8 1348.2 485.2 1349.6 484.8C1350.9 484.3 1352.3 484.0 1353.7 483.9C1355.0 483.7 1356.5 483.6 1357.8 483.8C1359.2 483.9 1360.6 484.1 1361.9 484.5C1363.3 484.9 1364.6 485.4 1365.8 486.0C1367.1 486.7 1368.3 487.4 1369.4 488.3C1370.6 489.2 1371.7 490.2 1372.6 491.3C1373.6 492.3 1374.5 493.5 1375.4 494.8C1376.2 496.1 1377.0 497.4 1377.5 499.0C1378.1 500.5 1378.7 503.1 1378.8 504.1C1378.9 505.1 1379.1 504.6 1378.2 504.9C1377.3 505.3 1374.8 505.8 1373.3 506.1C1371.8 506.4 1370.5 506.6 1369.2 506.8C1368.0 507.0 1366.8 507.2 1365.7 507.4C1364.6 507.6 1363.5 507.8 1362.6 507.9C1361.6 508.1 1360.7 508.2 1359.8 508.2C1358.9 508.3 1358.1 508.3 1357.3 508.3C1356.5 508.2 1355.7 508.1 1355.0 508.0C1354.2 507.8 1353.5 507.6 1352.7 507.4C1351.9 507.1 1351.1 506.8 1350.3 506.4C1349.4 506.0 1348.5 505.6 1347.6 505.2C1346.7 504.7 1345.7 504.2 1344.6 503.7C1343.6 503.1 1342.2 503.9 1341.2 501.9C1340.3 500.0 1338.6 494.2 1338.8 492.1Z"/><path d="M1246.0 470.7C1244.7 472.4 1243.2 471.3 1241.8 471.5C1240.4 471.6 1239.0 471.7 1237.7 471.7C1236.4 471.6 1235.1 471.5 1233.8 471.3C1232.5 471.1 1231.3 470.8 1230.1 470.5C1228.9 470.1 1227.8 469.6 1226.7 469.0C1225.6 468.5 1224.6 467.8 1223.6 467.1C1222.6 466.4 1221.7 465.5 1220.8 464.6C1219.9 463.7 1219.1 462.8 1218.4 461.7C1217.6 460.7 1216.9 459.5 1216.3 458.3C1215.7 457.2 1215.2 455.9 1214.7 454.6C1214.2 453.2 1213.8 451.9 1213.5 450.4C1213.3 448.9 1213.1 446.3 1213.2 445.4C1213.2 444.4 1212.9 444.9 1213.8 444.6C1214.7 444.4 1217.2 444.0 1218.7 443.9C1220.2 443.7 1221.5 443.8 1222.8 443.8C1224.1 443.8 1225.4 443.9 1226.6 444.0C1227.8 444.1 1229.0 444.3 1230.1 444.5C1231.2 444.7 1232.2 445.0 1233.3 445.3C1234.3 445.6 1235.2 446.0 1236.2 446.4C1237.1 446.8 1238.0 447.3 1238.9 447.9C1239.7 448.4 1240.5 449.1 1241.3 449.8C1242.1 450.5 1242.9 451.2 1243.6 452.0C1244.4 452.9 1245.1 453.8 1245.8 454.7C1246.5 455.7 1247.2 456.7 1247.9 457.8C1248.6 458.9 1250.3 459.2 1250.0 461.3C1249.7 463.5 1247.4 469.0 1246.0 470.7Z"/></g><g filter="url(#e1)"><path d="M1342.0 498.0C1345.0 497.8 1354.3 496.0 1360.0 497.0C1365.7 498.0 1373.3 502.8 1376.0 504.0" fill="none" stroke="#000" stroke-width="2.5999999999999996" stroke-linecap="round" stroke-linejoin="round"/><path d="M1246.0 466.0C1243.2 465.0 1234.2 463.2 1229.0 460.0C1223.8 456.8 1217.3 448.8 1215.0 446.5" fill="none" stroke="#000" stroke-width="2.5999999999999996" stroke-linecap="round" stroke-linejoin="round"/></g><g filter="url(#e3)"><path d="M1388.0 525.0C1389.7 523.0 1392.1 523.3 1394.0 523.1C1395.8 522.9 1397.5 523.3 1399.1 523.7C1400.8 524.1 1402.3 524.7 1403.8 525.4C1405.4 526.1 1406.8 527.0 1408.3 527.9C1409.7 528.8 1411.1 529.8 1412.4 530.9C1413.7 532.0 1415.0 533.1 1416.3 534.3C1417.5 535.5 1418.7 536.8 1419.9 538.1C1421.1 539.4 1422.3 540.8 1423.4 542.2C1424.5 543.6 1425.6 545.0 1426.6 546.5C1427.7 548.0 1428.7 549.5 1429.7 551.0C1430.7 552.6 1431.6 554.1 1432.5 555.8C1433.4 557.4 1435.0 559.7 1435.0 560.9C1435.1 562.1 1434.2 563.1 1433.0 563.1C1431.8 563.1 1429.4 561.7 1427.8 561.0C1426.1 560.4 1424.5 559.6 1422.9 559.0C1421.3 558.3 1419.7 557.6 1418.1 557.0C1416.6 556.4 1415.0 555.7 1413.5 555.1C1412.0 554.5 1410.5 554.0 1409.0 553.4C1407.6 552.8 1406.1 552.2 1404.7 551.7C1403.3 551.1 1401.9 550.5 1400.6 549.9C1399.2 549.3 1397.9 548.8 1396.6 548.1C1395.4 547.5 1394.1 546.8 1392.9 546.1C1391.7 545.3 1390.5 544.6 1389.4 543.6C1388.3 542.7 1387.2 541.8 1386.3 540.4C1385.4 538.9 1383.7 537.6 1384.0 535.0C1384.3 532.4 1386.3 527.0 1388.0 525.0Z"/></g><g filter="url(#e3)"><path d="M1375.3 517.3C1376.5 515.4 1378.7 515.5 1380.2 515.1C1381.8 514.8 1383.3 515.0 1384.7 515.2C1386.2 515.4 1387.5 515.9 1388.9 516.4C1390.3 516.9 1391.6 517.5 1392.8 518.2C1394.1 519.0 1395.3 519.8 1396.5 520.6C1397.7 521.5 1398.8 522.4 1399.9 523.4C1401.0 524.4 1402.0 525.5 1403.0 526.6C1404.0 527.7 1405.0 528.8 1405.9 530.0C1406.9 531.2 1407.7 532.4 1408.6 533.7C1409.5 534.9 1410.3 536.2 1411.0 537.5C1411.8 538.8 1412.6 540.2 1413.3 541.6C1413.9 543.0 1415.1 544.9 1415.1 546.0C1415.0 547.0 1414.0 548.0 1412.9 548.0C1411.8 548.1 1410.0 546.8 1408.7 546.3C1407.3 545.7 1406.0 545.1 1404.7 544.5C1403.4 544.0 1402.2 543.5 1400.9 543.0C1399.6 542.5 1398.4 542.0 1397.2 541.5C1396.0 541.1 1394.8 540.7 1393.6 540.3C1392.4 539.8 1391.3 539.5 1390.1 539.1C1389.0 538.7 1387.9 538.3 1386.8 537.9C1385.7 537.5 1384.7 537.1 1383.6 536.6C1382.6 536.2 1381.6 535.8 1380.6 535.2C1379.6 534.7 1378.7 534.2 1377.7 533.5C1376.8 532.8 1375.9 532.2 1375.0 531.0C1374.2 529.9 1372.7 529.0 1372.7 526.7C1372.8 524.4 1374.0 519.2 1375.3 517.3Z"/></g><g filter="url(#e3)"><path d="M1408.4 544.1C1410.0 542.7 1412.0 543.4 1413.6 543.5C1415.2 543.7 1416.5 544.3 1417.9 544.9C1419.3 545.5 1420.5 546.3 1421.7 547.1C1423.0 548.0 1424.1 548.9 1425.2 549.9C1426.4 550.9 1427.4 552.0 1428.4 553.2C1429.5 554.3 1430.5 555.5 1431.4 556.8C1432.4 558.0 1433.3 559.3 1434.2 560.6C1435.1 561.9 1435.9 563.3 1436.7 564.7C1437.6 566.1 1438.4 567.5 1439.1 569.0C1439.9 570.5 1440.7 572.0 1441.4 573.5C1442.1 575.0 1442.8 576.5 1443.4 578.1C1444.1 579.7 1445.3 582.0 1445.2 583.1C1445.1 584.2 1443.9 585.1 1442.8 584.9C1441.7 584.7 1439.9 583.0 1438.5 582.0C1437.1 581.1 1435.8 580.1 1434.5 579.2C1433.2 578.3 1431.9 577.4 1430.6 576.5C1429.3 575.6 1428.1 574.8 1426.8 574.0C1425.6 573.1 1424.3 572.3 1423.1 571.6C1421.9 570.8 1420.7 570.0 1419.6 569.2C1418.4 568.5 1417.3 567.7 1416.2 567.0C1415.1 566.2 1414.0 565.5 1413.0 564.7C1412.0 564.0 1411.0 563.2 1410.0 562.4C1409.1 561.5 1408.2 560.7 1407.3 559.8C1406.5 558.8 1405.6 557.9 1405.0 556.6C1404.4 555.3 1403.1 554.0 1403.6 551.9C1404.2 549.8 1406.7 545.5 1408.4 544.1Z"/></g><g filter="url(#e3)"><path d="M1431.3 572.2C1433.2 571.5 1434.7 572.8 1436.1 573.4C1437.4 574.1 1438.4 575.0 1439.4 576.0C1440.4 576.9 1441.3 578.0 1442.1 579.1C1443.0 580.2 1443.7 581.3 1444.4 582.6C1445.1 583.8 1445.8 585.0 1446.3 586.3C1446.9 587.6 1447.5 589.0 1448.0 590.3C1448.5 591.7 1449.0 593.1 1449.4 594.5C1449.8 596.0 1450.2 597.4 1450.6 598.9C1450.9 600.3 1451.3 601.8 1451.6 603.3C1451.9 604.8 1452.2 606.4 1452.4 607.9C1452.7 609.4 1452.9 611.0 1453.1 612.6C1453.2 614.2 1453.8 616.5 1453.4 617.5C1453.0 618.5 1451.6 619.0 1450.6 618.5C1449.6 618.1 1448.5 616.1 1447.5 614.9C1446.5 613.7 1445.6 612.4 1444.7 611.3C1443.8 610.1 1442.8 608.9 1441.9 607.8C1441.0 606.7 1440.1 605.6 1439.2 604.5C1438.3 603.4 1437.4 602.3 1436.6 601.3C1435.7 600.2 1434.8 599.2 1434.0 598.2C1433.2 597.1 1432.4 596.1 1431.6 595.1C1430.8 594.1 1430.1 593.1 1429.4 592.1C1428.6 591.1 1428.0 590.1 1427.4 589.1C1426.7 588.0 1426.2 587.0 1425.7 585.9C1425.2 584.8 1424.7 583.7 1424.5 582.3C1424.4 581.0 1423.5 579.4 1424.7 577.8C1425.8 576.1 1429.4 573.0 1431.3 572.2Z"/></g><g filter="url(#e3)"><path d="M1265.7 542.1C1264.6 539.2 1266.6 535.4 1267.7 532.7C1268.8 530.0 1270.6 527.8 1272.3 525.7C1274.1 523.6 1276.1 521.8 1278.2 520.1C1280.3 518.4 1282.6 516.9 1284.9 515.5C1287.2 514.2 1289.6 513.0 1292.0 512.0C1294.5 511.0 1297.0 510.1 1299.5 509.4C1302.1 508.7 1304.7 508.1 1307.2 507.7C1309.8 507.3 1312.4 507.0 1315.0 506.8C1317.6 506.7 1320.3 506.6 1322.9 506.7C1325.5 506.8 1328.1 507.0 1330.6 507.3C1333.2 507.7 1335.8 508.1 1338.4 508.7C1340.9 509.3 1344.7 510.3 1346.0 511.0C1347.3 511.7 1347.2 512.2 1346.0 513.0C1344.8 513.8 1341.1 514.9 1338.8 515.8C1336.5 516.7 1334.3 517.6 1332.1 518.5C1330.0 519.5 1327.9 520.5 1325.9 521.5C1323.9 522.6 1321.9 523.6 1320.1 524.7C1318.2 525.8 1316.4 527.0 1314.6 528.1C1312.9 529.2 1311.1 530.4 1309.5 531.6C1307.8 532.8 1306.1 534.0 1304.5 535.1C1302.8 536.3 1301.2 537.5 1299.6 538.7C1297.9 539.9 1296.3 541.0 1294.5 542.2C1292.8 543.3 1291.1 544.4 1289.1 545.5C1287.2 546.5 1285.3 547.7 1282.9 548.4C1280.4 549.2 1277.2 551.0 1274.3 549.9C1271.5 548.9 1266.8 544.9 1265.7 542.1Z"/></g><g filter="url(#e3)"><path d="M1271.0 544.3C1270.8 541.3 1273.8 538.3 1275.6 536.0C1277.5 533.7 1279.8 532.0 1282.0 530.4C1284.3 528.8 1286.7 527.4 1289.2 526.2C1291.7 525.0 1294.3 524.0 1296.8 523.1C1299.4 522.3 1302.1 521.6 1304.7 521.0C1307.4 520.4 1310.1 519.9 1312.8 519.6C1315.5 519.2 1318.2 519.0 1320.9 518.9C1323.6 518.8 1326.4 518.8 1329.1 518.9C1331.8 519.0 1334.5 519.2 1337.2 519.5C1339.9 519.8 1342.6 520.2 1345.2 520.7C1347.9 521.2 1350.6 521.7 1353.2 522.4C1355.8 523.1 1359.7 524.2 1361.0 525.0C1362.3 525.8 1362.3 526.3 1361.0 527.0C1359.7 527.7 1355.8 528.5 1353.2 529.3C1350.7 530.0 1348.2 530.7 1345.8 531.5C1343.4 532.2 1341.0 533.0 1338.7 533.9C1336.4 534.7 1334.1 535.5 1331.8 536.4C1329.6 537.3 1327.4 538.2 1325.2 539.1C1323.0 540.0 1320.8 541.0 1318.7 541.9C1316.6 542.9 1314.5 543.8 1312.4 544.7C1310.2 545.7 1308.2 546.6 1306.0 547.5C1303.9 548.4 1301.8 549.3 1299.7 550.1C1297.5 551.0 1295.3 551.8 1293.0 552.4C1290.7 553.1 1288.5 553.9 1285.8 554.1C1283.1 554.3 1279.4 555.4 1277.0 553.7C1274.5 552.1 1271.3 547.2 1271.0 544.3Z"/></g><g filter="url(#e3)"><path d="M1282.2 548.0C1282.6 545.2 1285.9 543.0 1288.0 541.2C1290.2 539.4 1292.6 538.4 1295.0 537.2C1297.4 536.1 1299.9 535.3 1302.4 534.6C1304.9 533.8 1307.5 533.3 1310.1 532.8C1312.7 532.4 1315.3 532.0 1318.0 531.8C1320.6 531.6 1323.3 531.5 1325.9 531.4C1328.6 531.4 1331.3 531.4 1334.0 531.6C1336.6 531.7 1339.3 531.9 1342.0 532.2C1344.7 532.5 1347.4 532.8 1350.0 533.2C1352.7 533.6 1355.4 534.1 1358.1 534.7C1360.7 535.2 1363.4 535.8 1366.1 536.5C1368.7 537.2 1372.7 538.3 1374.0 539.0C1375.4 539.8 1375.3 540.3 1374.0 541.0C1372.6 541.7 1368.6 542.4 1366.0 543.1C1363.4 543.7 1360.8 544.3 1358.3 545.0C1355.7 545.6 1353.2 546.2 1350.7 546.9C1348.2 547.6 1345.8 548.2 1343.3 548.9C1340.9 549.6 1338.5 550.3 1336.1 551.0C1333.7 551.7 1331.4 552.4 1329.1 553.1C1326.7 553.8 1324.4 554.4 1322.1 555.1C1319.8 555.7 1317.5 556.4 1315.2 557.0C1312.9 557.5 1310.7 558.1 1308.3 558.6C1306.0 559.0 1303.7 559.5 1301.3 559.7C1299.0 559.9 1296.6 560.3 1294.0 560.0C1291.4 559.7 1287.8 560.0 1285.8 558.0C1283.8 556.0 1281.8 550.8 1282.2 548.0Z"/></g><g filter="url(#e3)"><path d="M1320.5 527.7C1320.7 525.4 1323.0 523.9 1324.4 522.5C1325.8 521.2 1327.5 520.4 1329.1 519.7C1330.7 518.9 1332.4 518.3 1334.1 517.8C1335.8 517.4 1337.5 517.0 1339.2 516.8C1340.9 516.5 1342.7 516.4 1344.4 516.3C1346.1 516.3 1347.8 516.3 1349.5 516.4C1351.2 516.5 1352.9 516.7 1354.6 516.9C1356.3 517.2 1358.0 517.5 1359.6 517.8C1361.3 518.2 1362.9 518.6 1364.5 519.1C1366.1 519.6 1367.7 520.1 1369.2 520.7C1370.8 521.2 1372.3 521.8 1373.8 522.6C1375.3 523.3 1377.5 524.3 1378.1 525.0C1378.8 525.7 1378.7 526.4 1377.9 527.0C1377.0 527.5 1374.7 527.9 1373.2 528.3C1371.7 528.7 1370.2 529.0 1368.7 529.4C1367.2 529.8 1365.7 530.2 1364.3 530.7C1362.8 531.1 1361.4 531.5 1359.9 531.9C1358.5 532.4 1357.1 532.8 1355.7 533.3C1354.3 533.7 1352.9 534.2 1351.5 534.6C1350.1 535.0 1348.7 535.5 1347.3 535.9C1345.9 536.3 1344.4 536.7 1343.0 537.0C1341.6 537.3 1340.1 537.7 1338.7 537.9C1337.2 538.2 1335.7 538.4 1334.1 538.5C1332.6 538.5 1331.0 538.7 1329.2 538.3C1327.5 538.0 1324.9 538.1 1323.5 536.3C1322.0 534.5 1320.4 530.0 1320.5 527.7Z"/></g><g filter="url(#e3)"><path d="M1290.0 524.9C1288.7 522.7 1289.8 519.9 1290.3 517.8C1290.8 515.7 1291.8 514.1 1292.9 512.4C1293.9 510.8 1295.1 509.4 1296.4 508.1C1297.7 506.8 1299.1 505.6 1300.6 504.6C1302.1 503.6 1303.6 502.7 1305.2 501.9C1306.8 501.1 1308.4 500.4 1310.0 499.9C1311.7 499.4 1313.4 499.0 1315.0 498.7C1316.7 498.4 1318.4 498.3 1320.0 498.2C1321.6 498.2 1323.3 498.2 1324.9 498.4C1326.5 498.6 1328.0 498.9 1329.6 499.2C1331.1 499.6 1332.6 500.1 1334.0 500.7C1335.4 501.3 1337.4 502.3 1338.1 503.0C1338.7 503.7 1338.6 504.3 1337.9 505.0C1337.2 505.7 1335.3 506.3 1334.1 507.0C1332.9 507.7 1331.7 508.3 1330.7 509.0C1329.6 509.7 1328.6 510.4 1327.6 511.1C1326.7 511.8 1325.8 512.6 1324.9 513.3C1324.0 514.1 1323.2 514.9 1322.4 515.7C1321.5 516.5 1320.8 517.3 1320.0 518.1C1319.1 518.9 1318.4 519.7 1317.5 520.5C1316.7 521.3 1315.9 522.1 1315.0 523.0C1314.0 523.8 1313.1 524.6 1312.1 525.4C1311.0 526.2 1310.0 527.0 1308.7 527.8C1307.4 528.5 1306.2 529.4 1304.4 529.9C1302.6 530.5 1300.4 531.9 1298.0 531.1C1295.6 530.3 1291.3 527.1 1290.0 524.9Z"/></g><g filter="url(#e3)"><path d="M1349.6 541.0C1349.6 538.9 1351.3 537.6 1352.3 536.5C1353.4 535.4 1354.7 534.8 1356.0 534.2C1357.3 533.6 1358.7 533.3 1360.1 533.0C1361.5 532.8 1362.9 532.7 1364.3 532.6C1365.7 532.6 1367.1 532.7 1368.6 532.9C1370.0 533.1 1371.4 533.4 1372.8 533.7C1374.2 534.1 1375.6 534.5 1377.0 535.0C1378.4 535.5 1379.7 536.1 1381.1 536.7C1382.4 537.3 1383.8 538.0 1385.1 538.8C1386.4 539.5 1387.7 540.3 1389.0 541.2C1390.3 542.0 1391.5 542.9 1392.8 543.9C1394.0 544.9 1395.9 546.2 1396.4 547.1C1396.8 547.9 1396.5 548.6 1395.6 548.9C1394.7 549.3 1392.5 549.0 1391.0 549.0C1389.5 549.1 1388.0 549.1 1386.6 549.1C1385.2 549.2 1383.9 549.2 1382.5 549.3C1381.2 549.4 1379.9 549.6 1378.7 549.7C1377.4 549.9 1376.2 550.0 1375.1 550.2C1373.9 550.4 1372.8 550.6 1371.7 550.8C1370.6 551.0 1369.5 551.2 1368.5 551.3C1367.5 551.5 1366.5 551.7 1365.5 551.8C1364.5 551.9 1363.5 552.1 1362.5 552.1C1361.6 552.1 1360.6 552.2 1359.6 552.0C1358.6 551.9 1357.6 551.9 1356.4 551.4C1355.2 550.9 1353.6 550.8 1352.4 549.0C1351.3 547.3 1349.6 543.0 1349.6 541.0Z"/></g><g filter="url(#e3)"><path d="M1365.3 548.3C1365.6 546.5 1367.3 545.7 1368.5 544.9C1369.6 544.0 1370.9 543.7 1372.2 543.3C1373.5 543.0 1374.8 542.8 1376.1 542.8C1377.4 542.7 1378.8 542.8 1380.1 542.9C1381.4 543.0 1382.7 543.3 1384.0 543.6C1385.3 543.9 1386.6 544.3 1387.9 544.8C1389.1 545.3 1390.4 545.8 1391.6 546.4C1392.9 547.0 1394.1 547.6 1395.3 548.3C1396.5 549.0 1397.6 549.8 1398.8 550.6C1399.9 551.4 1401.1 552.2 1402.2 553.1C1403.3 554.0 1404.4 554.9 1405.4 555.9C1406.5 556.9 1408.1 558.3 1408.5 559.1C1408.8 560.0 1408.4 560.7 1407.5 560.9C1406.7 561.1 1404.6 560.5 1403.3 560.3C1401.9 560.1 1400.6 559.9 1399.3 559.8C1398.0 559.6 1396.7 559.5 1395.5 559.4C1394.2 559.3 1393.0 559.3 1391.8 559.2C1390.7 559.2 1389.5 559.2 1388.4 559.2C1387.3 559.2 1386.2 559.2 1385.1 559.2C1384.1 559.2 1383.0 559.3 1382.0 559.3C1381.0 559.3 1380.0 559.3 1379.0 559.3C1378.0 559.3 1377.1 559.3 1376.1 559.2C1375.2 559.2 1374.2 559.1 1373.2 558.9C1372.2 558.7 1371.3 558.6 1370.2 558.0C1369.1 557.5 1367.6 557.3 1366.7 555.7C1365.9 554.1 1365.0 550.1 1365.3 548.3Z"/></g><g filter="url(#e3)"><path d="M1260.3 537.4C1259.1 535.3 1260.3 532.6 1260.7 530.5C1261.1 528.5 1262.0 526.9 1262.9 525.2C1263.7 523.6 1264.8 522.1 1265.8 520.7C1266.9 519.3 1268.0 518.0 1269.1 516.8C1270.3 515.6 1271.5 514.5 1272.8 513.4C1274.0 512.4 1275.3 511.4 1276.5 510.5C1277.8 509.7 1279.1 508.9 1280.4 508.1C1281.7 507.4 1283.0 506.7 1284.3 506.2C1285.6 505.6 1286.9 505.1 1288.2 504.7C1289.5 504.2 1290.8 503.9 1292.1 503.6C1293.4 503.3 1294.6 503.1 1295.8 503.0C1297.1 502.9 1298.8 502.8 1299.6 503.1C1300.3 503.4 1300.6 504.1 1300.4 504.9C1300.3 505.7 1299.3 507.0 1298.8 507.9C1298.2 508.9 1297.6 509.9 1297.0 510.9C1296.4 511.8 1295.9 512.8 1295.3 513.8C1294.7 514.9 1294.1 515.9 1293.4 516.9C1292.8 518.0 1292.2 519.1 1291.5 520.2C1290.9 521.2 1290.2 522.3 1289.5 523.5C1288.7 524.6 1288.0 525.7 1287.2 526.9C1286.4 528.0 1285.5 529.2 1284.6 530.3C1283.7 531.5 1282.8 532.7 1281.7 533.8C1280.6 535.0 1279.5 536.1 1278.2 537.2C1276.9 538.3 1275.7 539.5 1273.9 540.4C1272.2 541.3 1270.0 543.1 1267.7 542.6C1265.4 542.1 1261.5 539.4 1260.3 537.4Z"/></g><g filter="url(#e3)"><path d="M1256.4 534.8C1255.0 533.6 1255.2 531.4 1255.1 529.9C1254.9 528.4 1255.1 527.1 1255.3 525.9C1255.5 524.6 1255.9 523.4 1256.3 522.3C1256.7 521.2 1257.1 520.2 1257.6 519.2C1258.1 518.3 1258.7 517.4 1259.3 516.6C1259.9 515.7 1260.5 515.0 1261.2 514.3C1261.8 513.6 1262.5 513.0 1263.2 512.4C1263.9 511.9 1264.6 511.4 1265.4 511.0C1266.1 510.6 1266.9 510.3 1267.7 510.0C1268.4 509.8 1269.2 509.6 1270.0 509.6C1270.8 509.6 1271.6 509.6 1272.2 509.8C1272.9 510.1 1273.7 510.5 1274.0 511.0C1274.3 511.5 1274.0 512.4 1274.0 513.0C1274.0 513.6 1273.8 514.0 1273.7 514.5C1273.7 515.0 1273.8 515.3 1273.9 515.7C1273.9 516.2 1274.0 516.5 1274.1 517.0C1274.1 517.4 1274.2 517.8 1274.2 518.3C1274.2 518.8 1274.2 519.3 1274.1 519.9C1274.0 520.5 1274.0 521.1 1273.8 521.7C1273.7 522.3 1273.6 523.0 1273.4 523.8C1273.1 524.5 1272.9 525.3 1272.6 526.1C1272.3 526.9 1271.9 527.8 1271.5 528.7C1271.0 529.6 1270.5 530.5 1269.9 531.5C1269.2 532.4 1268.6 533.4 1267.6 534.4C1266.5 535.3 1265.4 537.1 1263.6 537.2C1261.7 537.3 1257.9 536.0 1256.4 534.8Z"/></g><g filter="url(#e3)"><path d="M1252.8 544.5C1250.5 543.2 1250.0 540.1 1249.1 538.1C1248.2 536.1 1247.9 534.3 1247.5 532.6C1247.0 530.8 1246.8 529.1 1246.5 527.5C1246.2 525.8 1246.1 524.3 1245.9 522.8C1245.7 521.2 1245.5 519.7 1245.3 518.2C1245.1 516.8 1245.0 515.3 1244.8 513.9C1244.6 512.4 1244.4 511.0 1244.1 509.6C1243.8 508.1 1243.5 506.7 1243.2 505.2C1242.8 503.8 1242.4 502.3 1241.9 500.8C1241.4 499.4 1240.8 497.9 1240.1 496.4C1239.5 494.9 1238.7 493.4 1237.9 491.8C1237.1 490.3 1235.5 488.1 1235.3 487.0C1235.1 485.9 1235.6 485.0 1236.7 485.0C1237.9 485.0 1240.5 486.1 1242.3 486.8C1244.1 487.5 1245.9 488.5 1247.5 489.5C1249.2 490.5 1250.8 491.6 1252.4 492.8C1253.9 494.0 1255.4 495.4 1256.8 496.8C1258.3 498.2 1259.6 499.8 1260.8 501.4C1262.1 503.0 1263.2 504.8 1264.2 506.6C1265.2 508.5 1266.2 510.4 1266.9 512.4C1267.7 514.4 1268.3 516.5 1268.8 518.6C1269.3 520.7 1269.6 522.9 1269.7 525.1C1269.9 527.4 1269.9 529.7 1269.5 531.9C1269.2 534.2 1268.9 536.6 1267.8 538.8C1266.8 541.1 1265.7 544.6 1263.2 545.5C1260.7 546.5 1255.2 545.7 1252.8 544.5Z"/></g><g filter="url(#e3)"><path d="M1243.1 548.9C1240.7 548.5 1239.5 546.0 1238.3 544.5C1237.0 543.1 1236.4 541.6 1235.6 540.1C1234.8 538.6 1234.2 537.2 1233.7 535.7C1233.1 534.3 1232.6 532.9 1232.2 531.4C1231.7 530.0 1231.3 528.6 1230.9 527.1C1230.5 525.7 1230.1 524.3 1229.8 522.9C1229.4 521.5 1229.0 520.0 1228.6 518.6C1228.2 517.2 1227.8 515.8 1227.4 514.4C1227.0 512.9 1226.5 511.5 1226.1 510.1C1225.6 508.7 1225.1 507.2 1224.6 505.8C1224.0 504.4 1223.5 502.9 1222.9 501.5C1222.3 500.0 1221.1 498.0 1221.1 496.9C1221.1 495.8 1221.8 495.1 1222.9 495.1C1223.9 495.1 1226.1 496.3 1227.6 497.1C1229.1 497.8 1230.5 498.7 1232.0 499.7C1233.4 500.6 1234.8 501.6 1236.2 502.7C1237.5 503.7 1238.9 504.9 1240.2 506.1C1241.4 507.3 1242.7 508.6 1243.9 509.9C1245.0 511.3 1246.2 512.7 1247.2 514.1C1248.3 515.6 1249.3 517.1 1250.2 518.7C1251.1 520.3 1252.0 522.0 1252.7 523.7C1253.4 525.4 1254.1 527.2 1254.6 529.0C1255.1 530.8 1255.5 532.7 1255.6 534.7C1255.8 536.6 1256.0 538.6 1255.5 540.7C1255.1 542.7 1254.9 545.7 1252.9 547.1C1250.8 548.5 1245.6 549.3 1243.1 548.9Z"/></g><g filter="url(#e3)"><path d="M1235.9 556.8C1233.8 557.0 1232.4 555.2 1231.1 554.2C1229.8 553.3 1229.0 552.2 1228.1 551.1C1227.2 550.0 1226.5 548.9 1225.8 547.8C1225.1 546.7 1224.5 545.6 1223.9 544.5C1223.3 543.3 1222.7 542.2 1222.2 541.1C1221.7 539.9 1221.2 538.8 1220.7 537.6C1220.2 536.5 1219.8 535.3 1219.3 534.2C1218.8 533.1 1218.4 531.9 1217.9 530.8C1217.4 529.6 1217.0 528.5 1216.5 527.4C1216.0 526.2 1215.6 525.1 1215.1 524.0C1214.6 522.8 1214.1 521.7 1213.6 520.5C1213.1 519.4 1212.1 517.9 1212.2 516.9C1212.2 516.0 1212.9 515.2 1213.8 515.1C1214.7 515.0 1216.4 515.8 1217.7 516.3C1218.9 516.8 1220.1 517.4 1221.3 518.0C1222.5 518.6 1223.7 519.3 1224.9 520.0C1226.0 520.7 1227.2 521.5 1228.3 522.3C1229.4 523.2 1230.6 524.0 1231.6 525.0C1232.7 525.9 1233.8 526.8 1234.8 527.9C1235.8 528.9 1236.8 530.0 1237.7 531.1C1238.7 532.2 1239.6 533.4 1240.4 534.7C1241.2 535.9 1242.0 537.2 1242.6 538.6C1243.3 539.9 1243.9 541.3 1244.3 542.8C1244.7 544.3 1245.2 545.9 1245.2 547.6C1245.1 549.3 1245.6 551.7 1244.1 553.2C1242.5 554.7 1238.1 556.6 1235.9 556.8Z"/></g><g filter="url(#e3)"><path d="M1232.9 568.3C1231.1 569.0 1229.9 567.9 1228.7 567.5C1227.5 567.1 1226.7 566.4 1225.9 565.8C1225.1 565.1 1224.3 564.4 1223.6 563.7C1222.9 563.0 1222.3 562.2 1221.7 561.4C1221.1 560.7 1220.5 559.9 1220.0 559.1C1219.5 558.3 1218.9 557.4 1218.4 556.6C1217.9 555.8 1217.4 554.9 1217.0 554.1C1216.5 553.3 1216.0 552.4 1215.6 551.5C1215.1 550.7 1214.6 549.8 1214.2 549.0C1213.7 548.1 1213.3 547.3 1212.8 546.4C1212.4 545.5 1211.9 544.7 1211.5 543.8C1211.1 542.9 1210.2 541.8 1210.2 541.0C1210.3 540.2 1211.0 539.2 1211.8 539.0C1212.5 538.8 1213.8 539.4 1214.8 539.6C1215.8 539.9 1216.8 540.3 1217.8 540.6C1218.8 541.0 1219.7 541.4 1220.7 541.8C1221.6 542.2 1222.6 542.6 1223.5 543.1C1224.5 543.6 1225.4 544.1 1226.4 544.7C1227.3 545.2 1228.2 545.8 1229.1 546.4C1229.9 547.0 1230.8 547.7 1231.7 548.4C1232.5 549.0 1233.3 549.8 1234.1 550.6C1234.8 551.3 1235.6 552.2 1236.2 553.1C1236.9 553.9 1237.5 554.9 1238.0 555.9C1238.5 556.9 1239.1 558.0 1239.3 559.3C1239.5 560.5 1240.2 562.1 1239.1 563.7C1238.1 565.2 1234.6 567.7 1232.9 568.3Z"/></g><g filter="url(#e2)"><circle cx="1323.7" cy="493.0" r="7.6"/></g><g filter="url(#e2)"><circle cx="1330.0" cy="499.1" r="7.6"/></g><g filter="url(#e2)"><circle cx="1337.7" cy="495.0" r="7.6"/></g><g filter="url(#e2)"><circle cx="1336.2" cy="486.4" r="7.6"/></g><g filter="url(#e2)"><circle cx="1327.5" cy="485.1" r="7.6"/></g><g filter="url(#e2)"><circle cx="1299.0" cy="481.9" r="7.0"/></g><g filter="url(#e2)"><circle cx="1306.9" cy="483.9" r="7.0"/></g><g filter="url(#e2)"><circle cx="1311.2" cy="477.0" r="7.0"/></g><g filter="url(#e2)"><circle cx="1306.0" cy="470.8" r="7.0"/></g><g filter="url(#e2)"><circle cx="1298.5" cy="473.9" r="7.0"/></g><g filter="url(#e2)"><circle cx="1271.0" cy="470.0" r="7.6"/></g><g filter="url(#e2)"><circle cx="1278.3" cy="474.9" r="7.6"/></g><g filter="url(#e2)"><circle cx="1285.1" cy="469.5" r="7.6"/></g><g filter="url(#e2)"><circle cx="1282.2" cy="461.3" r="7.6"/></g><g filter="url(#e2)"><circle cx="1273.4" cy="461.6" r="7.6"/></g><g filter="url(#e2)"><circle cx="1246.7" cy="476.1" r="7.6"/></g><g filter="url(#e2)"><circle cx="1255.5" cy="475.9" r="7.6"/></g><g filter="url(#e2)"><circle cx="1258.0" cy="467.6" r="7.6"/></g><g filter="url(#e2)"><circle cx="1250.9" cy="462.6" r="7.6"/></g><g filter="url(#e2)"><circle cx="1243.9" cy="467.8" r="7.6"/></g><g filter="url(#e2)"><circle cx="1271.1" cy="496.0" r="7.6"/></g><g filter="url(#e2)"><circle cx="1276.2" cy="503.1" r="7.6"/></g><g filter="url(#e2)"><circle cx="1284.5" cy="500.4" r="7.6"/></g><g filter="url(#e2)"><circle cx="1284.5" cy="491.6" r="7.6"/></g><g filter="url(#e2)"><circle cx="1276.2" cy="488.9" r="7.6"/></g><g filter="url(#e1)"><circle cx="1331" cy="491.7" r="5.6"/><circle cx="1304.3" cy="477.5" r="5.6"/><circle cx="1278" cy="467.5" r="5.6"/><circle cx="1251" cy="470" r="5.6"/><circle cx="1278.5" cy="496" r="5.6"/></g><g filter="url(#e2)"><circle cx="1242.9" cy="571.1" r="8.4"/></g><g filter="url(#e2)"><circle cx="1251.7" cy="575.1" r="8.4"/></g><g filter="url(#e2)"><circle cx="1258.2" cy="567.9" r="8.4"/></g><g filter="url(#e2)"><circle cx="1253.4" cy="559.5" r="8.4"/></g><g filter="url(#e2)"><circle cx="1243.9" cy="561.5" r="8.4"/></g><g filter="url(#e2)"><path d="M1238.7 585.3C1239.6 587.1 1239.2 588.3 1239.1 589.4C1239.1 590.4 1238.7 591.1 1238.3 591.8C1237.9 592.6 1237.4 593.1 1236.8 593.7C1236.3 594.2 1235.7 594.7 1235.0 595.2C1234.3 595.6 1233.6 596.1 1232.8 596.5C1232.1 596.8 1231.3 597.2 1230.5 597.6C1229.6 597.9 1228.8 598.2 1227.9 598.6C1227.0 598.9 1226.1 599.2 1225.1 599.5C1224.2 599.8 1223.2 600.1 1222.3 600.4C1221.3 600.7 1220.3 601.0 1219.2 601.3C1218.2 601.6 1217.2 601.9 1216.1 602.1C1215.0 602.4 1213.4 602.9 1212.7 602.8C1211.9 602.6 1211.4 602.0 1211.3 601.2C1211.3 600.4 1212.1 599.0 1212.5 597.9C1212.9 596.9 1213.4 595.9 1213.9 595.0C1214.3 594.0 1214.8 593.0 1215.2 592.1C1215.7 591.2 1216.2 590.3 1216.6 589.4C1217.1 588.5 1217.6 587.6 1218.1 586.8C1218.5 586.0 1219.0 585.2 1219.5 584.4C1220.0 583.7 1220.6 582.9 1221.1 582.3C1221.6 581.6 1222.2 580.9 1222.8 580.4C1223.4 579.8 1224.0 579.3 1224.7 578.8C1225.3 578.4 1226.0 578.0 1226.8 577.7C1227.6 577.5 1228.4 577.2 1229.5 577.4C1230.5 577.5 1231.8 577.3 1233.3 578.7C1234.9 580.0 1237.7 583.6 1238.7 585.3Z"/></g><g filter="url(#e2)"><path d="M1249.3 588.7C1250.5 590.4 1250.2 591.8 1250.2 593.0C1250.2 594.2 1249.8 595.1 1249.4 596.1C1249.0 597.0 1248.4 597.8 1247.8 598.6C1247.2 599.4 1246.5 600.2 1245.8 600.9C1245.1 601.6 1244.3 602.3 1243.4 602.9C1242.6 603.6 1241.7 604.2 1240.8 604.8C1239.8 605.4 1238.9 606.0 1237.9 606.6C1236.9 607.2 1235.8 607.8 1234.8 608.3C1233.7 608.9 1232.6 609.5 1231.5 610.0C1230.4 610.6 1229.3 611.1 1228.1 611.7C1227.0 612.2 1225.8 612.8 1224.6 613.3C1223.3 613.8 1221.6 614.7 1220.7 614.7C1219.8 614.7 1219.3 614.2 1219.3 613.3C1219.3 612.4 1220.2 610.7 1220.7 609.4C1221.2 608.2 1221.7 607.0 1222.2 605.9C1222.7 604.7 1223.2 603.6 1223.7 602.5C1224.2 601.4 1224.7 600.3 1225.2 599.2C1225.7 598.2 1226.2 597.1 1226.7 596.1C1227.2 595.1 1227.7 594.1 1228.2 593.2C1228.8 592.2 1229.3 591.3 1229.8 590.5C1230.4 589.6 1230.9 588.8 1231.5 588.0C1232.1 587.3 1232.7 586.5 1233.4 585.9C1234.1 585.2 1234.8 584.6 1235.6 584.2C1236.5 583.7 1237.2 583.2 1238.4 583.0C1239.6 582.9 1240.9 582.3 1242.7 583.3C1244.5 584.2 1248.0 587.1 1249.3 588.7Z"/></g><g filter="url(#e2)"><path d="M1260.9 577.7C1262.6 576.9 1263.7 577.7 1264.8 578.0C1265.8 578.4 1266.5 579.1 1267.2 579.8C1267.8 580.5 1268.3 581.3 1268.7 582.2C1269.1 583.0 1269.4 584.0 1269.5 584.9C1269.7 585.8 1269.8 586.8 1269.7 587.7C1269.7 588.6 1269.6 589.6 1269.3 590.5C1269.1 591.4 1268.8 592.3 1268.4 593.1C1268.1 594.0 1267.6 594.8 1267.1 595.5C1266.6 596.3 1266.1 597.0 1265.5 597.7C1264.9 598.4 1264.2 599.0 1263.5 599.6C1262.9 600.2 1262.1 600.7 1261.4 601.2C1260.6 601.7 1259.5 602.5 1258.8 602.6C1258.1 602.6 1257.5 602.1 1257.2 601.4C1256.9 600.8 1257.1 599.6 1257.1 598.8C1257.0 598.0 1257.0 597.2 1256.9 596.5C1256.8 595.8 1256.7 595.2 1256.5 594.6C1256.4 594.0 1256.2 593.4 1256.0 592.9C1255.8 592.4 1255.6 592.0 1255.3 591.6C1255.1 591.2 1254.9 590.8 1254.7 590.5C1254.4 590.2 1254.2 589.9 1254.0 589.6C1253.9 589.4 1253.7 589.1 1253.6 588.9C1253.4 588.6 1253.3 588.4 1253.3 588.1C1253.3 587.7 1253.2 587.4 1253.3 587.0C1253.4 586.5 1253.4 586.1 1253.7 585.3C1254.0 584.6 1253.9 583.6 1255.1 582.3C1256.3 581.1 1259.3 578.4 1260.9 577.7Z"/></g><g filter="url(#e2)"><circle cx="1250" cy="555" r="12"/></g><g filter="url(#e1)"><path d="M1250.0 555.0C1249.3 554.5 1246.5 553.2 1246.0 552.0C1245.5 550.8 1246.0 548.8 1247.0 548.0C1248.0 547.2 1250.5 546.5 1252.0 547.0C1253.5 547.5 1255.5 549.3 1256.0 551.0C1256.5 552.7 1256.2 555.5 1255.0 557.0C1253.8 558.5 1251.0 560.0 1249.0 560.0C1247.0 560.0 1244.0 557.5 1243.0 557.0" fill="none" stroke="#000" stroke-width="3.6" stroke-linecap="round" stroke-linejoin="round"/></g><g filter="url(#e1)"><circle cx="1222" cy="611" r="4"/><circle cx="1217" cy="620" r="4.2"/><circle cx="1211" cy="629" r="4.3"/><circle cx="1205" cy="637" r="4.3"/><circle cx="1198.5" cy="644.5" r="4.3"/><circle cx="1192" cy="651" r="4.2"/></g><g filter="url(#e2)"><path d="M1131.0 392.0C1134.0 394.5 1141.8 401.5 1149.0 407.0C1156.2 412.5 1166.3 418.5 1174.0 425.0C1181.7 431.5 1189.3 438.5 1195.0 446.0C1200.7 453.5 1204.7 461.0 1208.0 470.0C1211.3 479.0 1213.8 490.0 1215.0 500.0C1216.2 510.0 1215.7 520.0 1215.0 530.0C1214.3 540.0 1213.0 550.0 1211.0 560.0C1209.0 570.0 1206.5 580.3 1203.0 590.0C1199.5 599.7 1194.8 609.5 1190.0 618.0C1185.2 626.5 1180.0 634.0 1174.0 641.0C1168.0 648.0 1161.2 654.2 1154.0 660.0C1146.8 665.8 1139.0 671.3 1131.0 676.0C1123.0 680.7 1114.8 684.5 1106.0 688.0C1097.2 691.5 1087.2 694.7 1078.0 697.0C1068.8 699.3 1059.7 700.8 1051.0 702.0C1042.3 703.2 1033.8 704.3 1026.0 704.0C1018.2 703.7 1010.2 702.5 1004.0 700.0C997.8 697.5 992.3 693.7 989.0 689.0C985.7 684.3 983.5 677.8 984.0 672.0C984.5 666.2 988.0 658.5 992.0 654.0C996.0 649.5 1003.5 647.2 1008.0 645.0C1012.5 642.8 1017.2 641.7 1019.0 641.0" fill="none" stroke="#000" stroke-width="16.4" stroke-linecap="round" stroke-linejoin="round"/></g><g filter="url(#e2)"><path d="M1151.0 418.0C1154.3 420.7 1164.8 428.3 1171.0 434.0C1177.2 439.7 1183.5 445.2 1188.0 452.0C1192.5 458.8 1195.4 467.0 1198.0 475.0C1200.6 483.0 1202.6 490.8 1203.5 500.0C1204.4 509.2 1204.2 520.3 1203.5 530.0C1202.8 539.7 1201.1 548.7 1199.0 558.0C1196.9 567.3 1194.3 577.2 1191.0 586.0C1187.7 594.8 1183.5 603.3 1179.0 611.0C1174.5 618.7 1169.7 625.5 1164.0 632.0C1158.3 638.5 1151.8 644.5 1145.0 650.0C1138.2 655.5 1130.8 660.5 1123.0 665.0C1115.2 669.5 1106.7 673.7 1098.0 677.0C1089.3 680.3 1079.7 683.0 1071.0 685.0C1062.3 687.0 1053.5 688.3 1046.0 689.0C1038.5 689.7 1031.3 689.8 1026.0 689.0C1020.7 688.2 1016.0 684.8 1014.0 684.0" fill="none" stroke="#000" stroke-width="11.4" stroke-linecap="round" stroke-linejoin="round"/></g><g filter="url(#e2)"><circle cx="1127" cy="386" r="9.5"/><circle cx="1011" cy="674" r="13"/><circle cx="1019.5" cy="641" r="8"/></g><g filter="url(#e1)"><path d="M1178.0 590.0C1176.0 593.7 1170.7 605.2 1166.0 612.0C1161.3 618.8 1156.0 625.0 1150.0 631.0C1144.0 637.0 1137.3 643.0 1130.0 648.0C1122.7 653.0 1114.3 657.3 1106.0 661.0C1097.7 664.7 1088.7 667.7 1080.0 670.0C1071.3 672.3 1061.8 674.2 1054.0 675.0C1046.2 675.8 1036.5 675.0 1033.0 675.0" fill="none" stroke="#000" stroke-width="6.9" stroke-linecap="round" stroke-linejoin="round"/></g><g filter="url(#e1)"><path d="M1160.0 445.0C1161.3 447.0 1166.2 452.5 1168.0 457.0C1169.8 461.5 1170.8 467.0 1171.0 472.0C1171.2 477.0 1170.3 482.8 1169.0 487.0C1167.7 491.2 1164.8 494.3 1163.0 497.0C1161.2 499.7 1158.8 502.0 1158.0 503.0" fill="none" stroke="#000" stroke-width="7.4" stroke-linecap="round" stroke-linejoin="round"/><circle cx="1159.5" cy="445" r="6.3"/><circle cx="1157.5" cy="503" r="6.3"/><path d="M1165.0 515.0C1167.0 516.3 1174.2 519.2 1177.0 523.0C1179.8 526.8 1181.5 533.0 1182.0 538.0C1182.5 543.0 1181.8 548.2 1180.0 553.0C1178.2 557.8 1174.8 563.2 1171.0 567.0C1167.2 570.8 1159.3 574.5 1157.0 576.0" fill="none" stroke="#000" stroke-width="7.9" stroke-linecap="round" stroke-linejoin="round"/><circle cx="1164.5" cy="515" r="6.6"/><circle cx="1155.5" cy="576.5" r="6.6"/><path d="M1147.0 587.0C1148.0 589.0 1153.0 594.7 1153.0 599.0C1153.0 603.3 1150.3 608.7 1147.0 613.0C1143.7 617.3 1138.3 622.0 1133.0 625.0C1127.7 628.0 1120.5 630.7 1115.0 631.0C1109.5 631.3 1102.5 627.7 1100.0 627.0" fill="none" stroke="#000" stroke-width="7.9" stroke-linecap="round" stroke-linejoin="round"/><circle cx="1146.5" cy="587" r="6.6"/><circle cx="1098.5" cy="626" r="6.6"/><path d="M1087.0 635.0C1087.7 637.0 1092.3 643.0 1091.0 647.0C1089.7 651.0 1084.2 655.8 1079.0 659.0C1073.8 662.2 1066.2 665.0 1060.0 666.0C1053.8 667.0 1047.0 666.5 1042.0 665.0C1037.0 663.5 1032.0 658.3 1030.0 657.0" fill="none" stroke="#000" stroke-width="7.9" stroke-linecap="round" stroke-linejoin="round"/><circle cx="1086.5" cy="635" r="6.6"/><circle cx="1029" cy="656.5" r="7"/></g><g filter="url(#e2)"><path d="M1157.0 453.1C1154.6 453.1 1153.6 451.5 1152.4 450.8C1151.2 450.1 1150.6 449.4 1149.9 448.8C1149.1 448.2 1148.6 447.7 1148.0 447.1C1147.5 446.5 1147.0 445.9 1146.5 445.3C1145.9 444.7 1145.4 444.1 1144.8 443.4C1144.1 442.7 1143.4 442.0 1142.6 441.3C1141.8 440.5 1140.9 439.8 1139.8 439.0C1138.8 438.3 1137.6 437.5 1136.3 436.8C1134.9 436.1 1133.5 435.4 1131.9 434.7C1130.3 434.0 1128.6 433.4 1126.7 432.8C1124.9 432.2 1122.9 431.7 1120.8 431.1C1118.7 430.6 1115.3 430.3 1114.1 429.5C1113.0 428.7 1112.8 427.4 1113.9 426.5C1115.0 425.6 1118.5 424.9 1120.7 424.3C1122.9 423.7 1125.1 423.3 1127.3 422.9C1129.4 422.5 1131.5 422.2 1133.6 422.0C1135.7 421.9 1137.7 421.8 1139.7 421.9C1141.8 421.9 1143.7 422.1 1145.7 422.4C1147.6 422.7 1149.5 423.1 1151.4 423.7C1153.2 424.3 1155.1 425.1 1156.7 426.0C1158.4 427.0 1160.1 428.1 1161.5 429.4C1163.0 430.6 1164.4 432.1 1165.5 433.7C1166.6 435.3 1167.5 437.0 1168.1 438.8C1168.7 440.7 1169.3 442.6 1169.1 444.6C1168.9 446.6 1169.0 449.5 1167.0 450.9C1165.0 452.3 1159.4 453.1 1157.0 453.1Z"/></g><g filter="url(#e2)"><path d="M1152.3 458.8C1150.3 459.6 1148.9 458.5 1147.6 458.2C1146.3 457.9 1145.4 457.4 1144.5 456.9C1143.5 456.5 1142.6 456.0 1141.7 455.4C1140.8 454.9 1139.9 454.4 1139.0 453.8C1138.1 453.2 1137.2 452.6 1136.1 452.0C1135.1 451.4 1134.1 450.8 1133.0 450.2C1131.8 449.6 1130.7 449.0 1129.4 448.4C1128.1 447.9 1126.8 447.3 1125.3 446.7C1123.9 446.2 1122.4 445.7 1120.8 445.2C1119.2 444.7 1117.5 444.2 1115.7 443.8C1114.0 443.4 1112.1 443.0 1110.2 442.6C1108.3 442.2 1105.2 442.2 1104.2 441.5C1103.1 440.8 1102.9 439.4 1103.8 438.5C1104.8 437.7 1107.9 437.0 1109.8 436.4C1111.8 435.8 1113.8 435.3 1115.7 434.9C1117.7 434.4 1119.6 434.1 1121.5 433.8C1123.4 433.6 1125.3 433.4 1127.1 433.3C1129.0 433.2 1130.8 433.1 1132.7 433.2C1134.5 433.3 1136.3 433.5 1138.0 433.8C1139.8 434.1 1141.5 434.4 1143.2 435.0C1144.9 435.5 1146.5 436.1 1148.1 436.9C1149.7 437.6 1151.2 438.5 1152.5 439.6C1153.9 440.6 1155.2 441.8 1156.3 443.1C1157.4 444.4 1158.5 445.8 1159.1 447.5C1159.6 449.2 1160.8 451.4 1159.7 453.2C1158.6 455.1 1154.3 457.9 1152.3 458.8Z"/></g><g filter="url(#e2)"><path d="M1145.4 465.1C1143.9 466.2 1142.5 465.4 1141.2 465.4C1140.0 465.3 1139.1 464.9 1138.1 464.6C1137.1 464.3 1136.1 464.0 1135.2 463.6C1134.2 463.2 1133.2 462.8 1132.3 462.4C1131.3 462.0 1130.3 461.5 1129.2 461.1C1128.2 460.6 1127.1 460.2 1126.0 459.7C1124.9 459.3 1123.7 458.9 1122.5 458.4C1121.3 458.0 1120.0 457.6 1118.7 457.2C1117.3 456.8 1116.0 456.4 1114.5 456.1C1113.1 455.7 1111.6 455.4 1110.1 455.1C1108.5 454.8 1107.0 454.6 1105.3 454.3C1103.7 454.0 1101.1 454.1 1100.2 453.5C1099.3 452.9 1099.0 451.3 1099.8 450.5C1100.6 449.7 1103.2 449.2 1104.8 448.6C1106.5 448.1 1108.2 447.6 1109.8 447.2C1111.5 446.8 1113.1 446.4 1114.7 446.2C1116.3 445.9 1118.0 445.6 1119.6 445.5C1121.2 445.3 1122.8 445.2 1124.3 445.1C1125.9 445.1 1127.5 445.1 1129.0 445.3C1130.6 445.4 1132.1 445.6 1133.6 445.8C1135.1 446.1 1136.5 446.5 1138.0 446.9C1139.4 447.4 1140.8 448.0 1142.1 448.6C1143.4 449.3 1144.7 450.1 1145.8 451.0C1147.0 452.0 1148.1 452.9 1148.9 454.2C1149.7 455.5 1151.2 457.0 1150.6 458.9C1150.0 460.7 1147.0 464.1 1145.4 465.1Z"/></g><g filter="url(#e2)"><path d="M1163.5 472.1C1162.2 472.8 1161.3 472.3 1160.4 472.2C1159.6 472.2 1159.0 472.0 1158.4 471.8C1157.7 471.6 1157.2 471.3 1156.5 471.1C1155.9 470.8 1155.3 470.5 1154.6 470.1C1153.9 469.8 1153.1 469.5 1152.4 469.1C1151.6 468.8 1150.7 468.4 1149.8 468.0C1148.9 467.7 1147.9 467.3 1146.9 466.9C1145.8 466.6 1144.7 466.2 1143.5 465.9C1142.3 465.6 1141.1 465.3 1139.8 465.0C1138.4 464.7 1137.0 464.5 1135.6 464.3C1134.2 464.0 1132.6 463.8 1131.1 463.6C1129.5 463.4 1127.0 463.4 1126.1 463.0C1125.3 462.6 1125.1 461.6 1125.9 461.0C1126.6 460.4 1129.1 459.8 1130.7 459.3C1132.2 458.8 1133.8 458.4 1135.3 458.0C1136.8 457.6 1138.3 457.3 1139.8 457.0C1141.2 456.7 1142.6 456.5 1144.1 456.3C1145.5 456.1 1146.8 456.0 1148.2 455.9C1149.6 455.9 1150.9 455.9 1152.2 456.0C1153.5 456.1 1154.8 456.2 1156.0 456.4C1157.3 456.7 1158.5 457.0 1159.7 457.4C1160.8 457.8 1162.0 458.3 1163.0 458.9C1164.0 459.6 1165.0 460.3 1165.8 461.1C1166.7 462.0 1167.5 462.9 1168.0 464.0C1168.4 465.1 1169.2 466.6 1168.5 467.9C1167.7 469.3 1164.9 471.4 1163.5 472.1Z"/></g><g filter="url(#e1)"><circle cx="1160" cy="446" r="6.5"/><circle cx="1112" cy="460.5" r="6"/><circle cx="1097" cy="462.5" r="5.5"/><path d="M1108.0 440.0C1106.0 441.2 1098.7 444.0 1096.0 447.0C1093.3 450.0 1091.8 455.3 1092.0 458.0C1092.2 460.7 1096.2 462.2 1097.0 463.0" fill="none" stroke="#000" stroke-width="6.4" stroke-linecap="round" stroke-linejoin="round"/></g><g filter="url(#e1)"><circle cx="1163.5" cy="433" r="4"/><circle cx="1153.5" cy="427" r="4.2"/><circle cx="1143.5" cy="424" r="4.4"/><circle cx="1132" cy="421" r="4.5"/><circle cx="1121" cy="420.5" r="4.6"/><circle cx="1110" cy="422.5" r="4.7"/><circle cx="1100" cy="427" r="4.8"/><circle cx="1091.5" cy="434" r="4.9"/><circle cx="1085" cy="442.5" r="5"/></g><path d="M1094.0 400.0C1088.7 392.7 1077.3 387.7 1066.0 386.0C1054.7 384.3 1036.3 385.2 1026.0 390.0C1015.7 394.8 1008.0 405.0 1004.0 415.0C1000.0 425.0 1000.0 440.0 1002.0 450.0C1004.0 460.0 1008.7 468.7 1016.0 475.0C1023.3 481.3 1036.0 486.8 1046.0 488.0C1056.0 489.2 1068.7 486.7 1076.0 482.0C1083.3 477.3 1086.3 468.7 1090.0 460.0C1093.7 451.3 1097.3 440.0 1098.0 430.0C1098.7 420.0 1099.3 407.3 1094.0 400.0Z" fill="#8e8e8e" opacity="1"/><g filter="url(#e3)"><circle cx="1065" cy="423" r="19"/></g><g filter="url(#e2)"><path d="M1090.3 420.1C1087.0 421.0 1084.1 418.0 1081.6 416.9C1079.2 415.7 1077.3 414.3 1075.4 413.1C1073.5 411.9 1071.9 410.8 1070.2 409.6C1068.5 408.5 1067.0 407.5 1065.4 406.5C1063.9 405.5 1062.4 404.5 1060.9 403.6C1059.3 402.7 1057.8 401.8 1056.1 401.0C1054.5 400.2 1052.8 399.4 1051.0 398.7C1049.2 398.1 1047.4 397.4 1045.3 396.9C1043.3 396.4 1041.2 396.0 1038.9 395.7C1036.6 395.4 1034.2 395.2 1031.7 395.2C1029.2 395.1 1026.6 395.2 1023.8 395.4C1021.0 395.6 1016.8 396.9 1015.0 396.3C1013.2 395.7 1012.1 393.4 1013.0 391.7C1013.9 390.0 1018.0 387.8 1020.6 386.2C1023.2 384.5 1025.9 383.1 1028.6 381.8C1031.3 380.6 1034.0 379.5 1036.8 378.5C1039.6 377.6 1042.5 376.9 1045.3 376.4C1048.2 375.9 1051.1 375.6 1054.0 375.5C1057.0 375.4 1059.9 375.6 1062.9 376.0C1065.8 376.4 1068.7 377.1 1071.6 378.0C1074.4 378.9 1077.2 380.1 1079.9 381.5C1082.6 383.0 1085.2 384.7 1087.6 386.6C1089.9 388.6 1092.2 390.7 1094.2 393.2C1096.2 395.7 1098.2 398.3 1099.4 401.4C1100.7 404.5 1103.2 408.7 1101.7 411.9C1100.2 415.0 1093.6 419.3 1090.3 420.1Z"/></g><g filter="url(#e2)"><path d="M1028.8 393.1C1030.2 396.2 1028.1 398.9 1027.6 401.2C1027.0 403.6 1026.1 405.3 1025.3 407.0C1024.6 408.8 1023.8 410.4 1023.1 412.0C1022.3 413.5 1021.6 415.0 1020.8 416.4C1020.1 417.9 1019.4 419.4 1018.7 420.9C1018.1 422.4 1017.4 423.9 1016.8 425.5C1016.2 427.1 1015.6 428.7 1015.1 430.5C1014.6 432.3 1014.1 434.1 1013.8 436.1C1013.4 438.0 1013.2 440.1 1013.0 442.3C1012.8 444.5 1012.8 446.7 1012.8 449.1C1012.9 451.5 1013.1 454.0 1013.3 456.7C1013.5 459.3 1014.8 463.2 1014.3 464.9C1013.7 466.7 1011.4 467.9 1009.7 467.1C1008.1 466.3 1005.8 462.6 1004.1 460.2C1002.5 457.8 1001.0 455.4 999.6 453.0C998.3 450.5 997.1 448.0 996.0 445.5C995.0 442.9 994.0 440.3 993.3 437.7C992.6 435.1 992.0 432.4 991.7 429.7C991.3 427.0 991.1 424.3 991.2 421.5C991.3 418.8 991.5 416.0 992.0 413.3C992.6 410.6 993.3 407.9 994.3 405.3C995.2 402.7 996.5 400.2 997.9 397.8C999.4 395.4 1001.1 393.1 1003.1 391.1C1005.1 389.0 1007.2 387.0 1009.9 385.6C1012.6 384.3 1016.0 381.6 1019.2 382.9C1022.3 384.1 1027.4 390.1 1028.8 393.1Z"/></g><g filter="url(#e2)"><path d="M1010.1 450.0C1013.3 450.0 1015.0 452.8 1016.8 454.1C1018.5 455.5 1019.6 456.8 1020.9 458.0C1022.1 459.3 1023.1 460.4 1024.0 461.5C1025.0 462.7 1025.9 463.7 1026.8 464.7C1027.7 465.8 1028.6 466.8 1029.5 467.8C1030.4 468.8 1031.3 469.8 1032.4 470.7C1033.5 471.7 1034.6 472.7 1035.8 473.6C1037.1 474.6 1038.5 475.5 1040.0 476.4C1041.5 477.3 1043.2 478.1 1045.0 478.9C1046.9 479.7 1048.9 480.4 1051.0 481.0C1053.1 481.6 1055.4 482.1 1057.9 482.6C1060.3 483.1 1064.3 483.1 1065.7 484.0C1067.1 484.9 1067.5 486.8 1066.3 488.0C1065.2 489.2 1061.2 490.4 1058.6 491.3C1056.0 492.3 1053.5 493.0 1050.9 493.6C1048.3 494.2 1045.8 494.6 1043.2 494.9C1040.7 495.1 1038.1 495.3 1035.6 495.2C1033.0 495.1 1030.5 494.8 1028.0 494.3C1025.5 493.9 1023.0 493.2 1020.6 492.3C1018.2 491.4 1015.8 490.2 1013.6 488.9C1011.4 487.5 1009.3 485.9 1007.4 484.1C1005.5 482.4 1003.7 480.4 1002.2 478.2C1000.7 476.0 999.3 473.7 998.4 471.2C997.4 468.7 996.5 466.0 996.4 463.2C996.3 460.3 995.6 456.3 997.9 454.0C1000.2 451.8 1007.0 449.9 1010.1 450.0Z"/></g><g filter="url(#e2)"><path d="M1050.6 484.5C1051.0 481.8 1053.9 480.6 1055.4 479.1C1057.0 477.7 1058.5 476.8 1059.8 475.9C1061.2 474.9 1062.5 474.2 1063.7 473.4C1064.9 472.7 1066.0 472.1 1067.0 471.4C1068.1 470.8 1069.0 470.3 1069.9 469.8C1070.8 469.2 1071.7 468.7 1072.5 468.2C1073.3 467.7 1074.1 467.2 1074.9 466.6C1075.7 466.0 1076.4 465.4 1077.2 464.7C1077.9 464.0 1078.6 463.2 1079.3 462.2C1080.0 461.3 1080.6 460.3 1081.2 459.1C1081.8 457.9 1082.3 456.6 1082.7 455.2C1083.2 453.7 1083.2 451.3 1084.0 450.4C1084.9 449.5 1086.9 448.9 1088.0 449.6C1089.1 450.3 1089.9 452.9 1090.6 454.6C1091.3 456.3 1091.9 458.0 1092.2 459.8C1092.6 461.6 1092.9 463.4 1092.9 465.3C1093.0 467.1 1092.9 469.0 1092.6 470.9C1092.3 472.7 1091.8 474.6 1091.1 476.5C1090.4 478.3 1089.5 480.1 1088.5 481.8C1087.4 483.5 1086.2 485.1 1084.8 486.6C1083.4 488.1 1081.8 489.5 1080.1 490.8C1078.4 492.0 1076.5 493.1 1074.6 494.1C1072.6 495.0 1070.5 495.8 1068.3 496.4C1066.1 496.9 1063.8 497.4 1061.3 497.3C1058.8 497.1 1055.2 497.6 1053.4 495.5C1051.6 493.4 1050.3 487.2 1050.6 484.5Z"/></g><g filter="url(#e2)"><path d="M1076.1 461.8C1074.1 462.1 1073.0 460.7 1071.9 460.2C1070.8 459.7 1070.2 459.1 1069.4 458.6C1068.7 458.0 1068.1 457.6 1067.6 457.1C1067.0 456.6 1066.5 456.1 1066.1 455.7C1065.6 455.2 1065.1 454.8 1064.6 454.3C1064.1 453.9 1063.7 453.4 1063.1 453.0C1062.5 452.5 1061.9 452.0 1061.2 451.6C1060.6 451.2 1059.8 450.7 1058.9 450.3C1058.1 449.9 1057.2 449.5 1056.1 449.2C1055.1 448.9 1054.0 448.6 1052.8 448.3C1051.6 448.1 1050.3 448.0 1048.9 447.8C1047.5 447.6 1045.3 448.0 1044.4 447.4C1043.6 446.9 1043.0 445.5 1043.6 444.6C1044.1 443.7 1046.2 442.7 1047.6 442.0C1048.9 441.2 1050.3 440.6 1051.7 440.0C1053.1 439.4 1054.5 438.9 1055.9 438.6C1057.3 438.2 1058.7 437.9 1060.2 437.7C1061.6 437.5 1063.1 437.4 1064.5 437.5C1066.0 437.5 1067.5 437.7 1068.9 438.0C1070.3 438.4 1071.8 438.8 1073.1 439.4C1074.5 440.0 1075.8 440.8 1077.1 441.6C1078.3 442.5 1079.4 443.5 1080.4 444.7C1081.4 445.8 1082.3 447.1 1083.0 448.4C1083.7 449.8 1084.4 451.3 1084.5 452.9C1084.7 454.5 1085.4 456.7 1083.9 458.2C1082.5 459.7 1078.1 461.5 1076.1 461.8Z"/></g><g filter="url(#e2)"><path d="M1032.3 405.4C1033.7 407.5 1032.3 409.8 1032.1 411.7C1031.9 413.5 1031.4 414.9 1031.0 416.4C1030.5 417.8 1030.1 419.1 1029.6 420.4C1029.2 421.7 1028.7 422.9 1028.3 424.1C1027.8 425.3 1027.4 426.4 1027.0 427.6C1026.6 428.8 1026.2 430.0 1025.8 431.2C1025.5 432.4 1025.2 433.6 1024.9 434.9C1024.6 436.2 1024.4 437.6 1024.2 439.0C1024.0 440.4 1023.9 441.9 1023.9 443.4C1023.9 444.9 1023.9 446.5 1024.0 448.2C1024.2 449.8 1024.4 451.5 1024.7 453.3C1025.0 455.1 1026.1 457.7 1025.7 459.0C1025.3 460.3 1023.6 461.4 1022.3 461.0C1021.0 460.6 1019.2 458.2 1017.9 456.7C1016.5 455.2 1015.3 453.6 1014.2 451.9C1013.0 450.3 1012.0 448.6 1011.1 446.9C1010.2 445.1 1009.4 443.3 1008.7 441.5C1008.0 439.6 1007.4 437.7 1007.0 435.8C1006.6 433.8 1006.3 431.8 1006.2 429.8C1006.0 427.8 1006.0 425.8 1006.2 423.8C1006.4 421.7 1006.7 419.7 1007.3 417.7C1007.8 415.7 1008.5 413.7 1009.4 411.9C1010.3 410.0 1011.3 408.1 1012.6 406.4C1013.9 404.7 1015.2 403.0 1017.1 401.7C1019.0 400.4 1021.2 398.0 1023.7 398.6C1026.3 399.3 1030.9 403.2 1032.3 405.4Z"/></g><g filter="url(#e2)"><path d="M1024.7 449.8C1027.0 449.5 1028.2 451.2 1029.5 451.9C1030.7 452.6 1031.6 453.3 1032.4 454.0C1033.3 454.7 1034.0 455.4 1034.7 456.0C1035.4 456.7 1036.0 457.3 1036.7 457.9C1037.3 458.6 1037.9 459.2 1038.5 459.8C1039.2 460.4 1039.8 461.0 1040.5 461.6C1041.2 462.2 1041.9 462.8 1042.7 463.4C1043.6 464.0 1044.4 464.6 1045.4 465.2C1046.4 465.7 1047.5 466.3 1048.6 466.7C1049.8 467.2 1051.0 467.7 1052.4 468.1C1053.7 468.5 1055.2 468.8 1056.7 469.1C1058.2 469.5 1060.7 469.2 1061.6 470.0C1062.6 470.8 1063.1 472.9 1062.4 474.0C1061.7 475.0 1059.2 475.7 1057.6 476.4C1055.9 477.1 1054.3 477.7 1052.6 478.1C1051.0 478.6 1049.3 479.0 1047.6 479.3C1046.0 479.5 1044.3 479.7 1042.6 479.7C1040.9 479.8 1039.2 479.7 1037.5 479.5C1035.8 479.2 1034.1 478.9 1032.5 478.4C1030.9 477.9 1029.3 477.2 1027.7 476.4C1026.2 475.6 1024.7 474.7 1023.3 473.6C1022.0 472.5 1020.7 471.3 1019.5 470.0C1018.4 468.6 1017.4 467.1 1016.6 465.5C1015.8 463.9 1015.0 462.2 1014.8 460.4C1014.6 458.5 1013.7 455.9 1015.3 454.2C1017.0 452.4 1022.3 450.2 1024.7 449.8Z"/></g><g filter="url(#e2)"><path d="M1041.2 418.5C1042.2 420.1 1041.3 421.8 1041.2 423.1C1041.1 424.4 1040.7 425.4 1040.5 426.4C1040.2 427.4 1039.9 428.2 1039.7 429.1C1039.4 430.0 1039.1 430.8 1038.9 431.6C1038.6 432.4 1038.3 433.2 1038.1 434.0C1037.8 434.8 1037.6 435.6 1037.4 436.5C1037.2 437.4 1037.0 438.2 1036.9 439.2C1036.8 440.1 1036.6 441.1 1036.6 442.1C1036.6 443.2 1036.6 444.2 1036.7 445.4C1036.7 446.5 1036.9 447.7 1037.1 449.0C1037.3 450.2 1037.6 451.5 1038.0 452.9C1038.3 454.2 1039.4 456.1 1039.2 457.1C1039.0 458.1 1037.8 459.1 1036.8 458.9C1035.8 458.7 1034.2 456.9 1033.1 455.8C1032.0 454.8 1031.0 453.6 1030.0 452.5C1029.0 451.3 1028.1 450.1 1027.3 448.9C1026.5 447.6 1025.8 446.3 1025.2 445.0C1024.5 443.7 1024.0 442.3 1023.6 440.9C1023.1 439.4 1022.8 438.0 1022.6 436.5C1022.4 435.0 1022.3 433.5 1022.4 432.0C1022.4 430.5 1022.6 429.0 1022.9 427.5C1023.2 426.0 1023.7 424.5 1024.3 423.1C1024.9 421.7 1025.7 420.3 1026.6 419.1C1027.6 417.8 1028.6 416.6 1029.9 415.6C1031.3 414.7 1032.9 413.0 1034.8 413.5C1036.7 413.9 1040.1 416.9 1041.2 418.5Z"/></g><g filter="url(#e2)"><path d="M1056.5 468.5C1056.2 466.8 1057.4 466.0 1057.9 465.1C1058.4 464.2 1059.0 463.7 1059.4 463.1C1059.9 462.5 1060.4 462.1 1060.8 461.7C1061.2 461.3 1061.6 461.0 1062.0 460.7C1062.4 460.4 1062.7 460.1 1063.0 459.9C1063.4 459.6 1063.7 459.5 1064.0 459.2C1064.4 459.0 1064.7 458.8 1065.0 458.6C1065.3 458.3 1065.6 458.1 1066.0 457.8C1066.3 457.4 1066.6 457.1 1066.9 456.6C1067.2 456.2 1067.4 455.7 1067.7 455.1C1067.9 454.5 1068.1 453.8 1068.2 453.1C1068.4 452.3 1068.1 451.2 1068.6 450.6C1069.1 450.0 1070.6 449.3 1071.4 449.4C1072.2 449.6 1072.8 450.8 1073.4 451.5C1074.0 452.3 1074.6 453.1 1075.0 453.9C1075.4 454.8 1075.8 455.7 1076.1 456.6C1076.4 457.6 1076.6 458.6 1076.7 459.6C1076.8 460.6 1076.8 461.6 1076.7 462.7C1076.6 463.7 1076.3 464.8 1076.0 465.8C1075.6 466.8 1075.2 467.8 1074.6 468.7C1074.1 469.6 1073.4 470.5 1072.7 471.3C1071.9 472.1 1071.1 472.9 1070.2 473.5C1069.3 474.2 1068.3 474.8 1067.2 475.2C1066.1 475.6 1065.0 476.1 1063.8 476.1C1062.5 476.2 1060.8 476.7 1059.5 475.5C1058.3 474.2 1056.7 470.2 1056.5 468.5Z"/></g><g filter="url(#e2)"><circle cx="1096" cy="412.5" r="8.5"/></g><ellipse cx="1042" cy="446" rx="6" ry="8" fill="url(#dk)" opacity="0.6"/><g filter="url(#e1)"><path d="M1058.9 494.6C1058.7 495.9 1057.1 496.6 1056.1 497.2C1055.1 497.9 1054.0 498.3 1052.9 498.6C1051.8 499.0 1050.6 499.2 1049.5 499.3C1048.3 499.5 1047.1 499.5 1046.0 499.5C1044.9 499.5 1043.7 499.3 1042.6 499.1C1041.4 499.0 1040.3 498.7 1039.2 498.4C1038.1 498.0 1037.0 497.7 1035.9 497.2C1034.8 496.8 1033.8 496.3 1032.8 495.7C1031.7 495.2 1030.7 494.6 1029.7 493.9C1028.7 493.3 1027.8 492.6 1026.8 491.9C1025.9 491.1 1024.9 490.4 1024.0 489.5C1023.1 488.7 1021.7 487.6 1021.4 486.8C1021.2 486.1 1021.8 485.3 1022.6 485.2C1023.3 485.1 1024.9 485.9 1026.0 486.2C1027.1 486.6 1028.1 486.9 1029.2 487.1C1030.2 487.4 1031.3 487.6 1032.3 487.8C1033.3 488.0 1034.3 488.2 1035.2 488.3C1036.2 488.4 1037.2 488.5 1038.1 488.5C1039.0 488.6 1039.9 488.6 1040.8 488.6C1041.7 488.6 1042.6 488.6 1043.4 488.6C1044.3 488.6 1045.1 488.5 1046.0 488.5C1046.9 488.5 1047.7 488.4 1048.5 488.4C1049.4 488.4 1050.2 488.3 1051.1 488.4C1052.0 488.4 1052.9 488.3 1053.9 488.5C1054.9 488.7 1056.3 488.4 1057.1 489.4C1058.0 490.4 1059.0 493.3 1058.9 494.6Z"/></g><g filter="url(#e1)"><circle cx="1020" cy="484" r="5"/><circle cx="1012" cy="476" r="4.6"/><circle cx="1002" cy="468" r="6"/></g><path d="M1002.0 470.0C1006.0 463.8 1002.7 451.3 1000.0 445.0C997.3 438.7 992.2 434.8 986.0 432.0C979.8 429.2 968.8 428.7 963.0 428.0C957.2 427.3 953.0 419.3 951.0 428.0C949.0 436.7 946.8 471.0 951.0 480.0C955.2 489.0 967.5 483.7 976.0 482.0C984.5 480.3 998.0 476.2 1002.0 470.0Z" fill="#8a8a8a" opacity="1"/><ellipse cx="963" cy="452" rx="22" ry="14" fill="url(#hl)" opacity="0.95"/><g filter="url(#e2)"><path d="M1002.0 469.0C1002.5 466.2 1006.0 457.2 1005.0 452.0C1004.0 446.8 1000.2 441.5 996.0 438.0C991.8 434.5 985.5 432.4 980.0 431.0C974.5 429.6 967.8 429.8 963.0 429.5C958.2 429.2 953.0 429.5 951.0 429.5" fill="none" stroke="#000" stroke-width="10.4" stroke-linecap="round" stroke-linejoin="round"/></g><g filter="url(#e1)"><circle cx="988.5" cy="462.5" r="5.6"/><circle cx="975" cy="462" r="5.6"/><path d="M1001.0 471.0C1000.2 472.0 998.0 477.2 996.0 477.0C994.0 476.8 990.2 471.2 989.0 470.0" fill="none" stroke="#000" stroke-width="5.9" stroke-linecap="round" stroke-linejoin="round"/><path d="M988.0 465.0C987.0 466.5 984.2 474.0 982.0 474.0C979.8 474.0 976.2 466.5 975.0 465.0" fill="none" stroke="#000" stroke-width="6.4" stroke-linecap="round" stroke-linejoin="round"/><path d="M974.0 465.0C973.2 466.7 970.8 472.9 969.0 475.0C967.2 477.1 965.2 477.5 963.0 477.5C960.8 477.5 957.2 475.4 956.0 475.0" fill="none" stroke="#000" stroke-width="6.9" stroke-linecap="round" stroke-linejoin="round"/></g><path d="M1036.0 340.0C1029.8 335.0 1011.0 333.3 1001.0 335.0C991.0 336.7 982.3 343.3 976.0 350.0C969.7 356.7 967.2 370.8 963.0 375.0C958.8 379.2 953.0 365.8 951.0 375.0C949.0 384.2 945.2 420.8 951.0 430.0C956.8 439.2 976.8 433.3 986.0 430.0C995.2 426.7 999.3 415.8 1006.0 410.0C1012.7 404.2 1020.7 402.5 1026.0 395.0C1031.3 387.5 1036.3 374.2 1038.0 365.0C1039.7 355.8 1042.2 345.0 1036.0 340.0Z" fill="#8c8c8c" opacity="1"/><ellipse cx="1005" cy="395" rx="10" ry="5.5" fill="url(#dk)" opacity="1.6"/><g filter="url(#e2)"><path d="M1018.0 360.0C1018.8 362.7 1022.7 370.8 1023.0 376.0C1023.3 381.2 1022.2 386.8 1020.0 391.0C1017.8 395.2 1014.3 399.0 1010.0 401.0C1005.7 403.0 998.8 403.3 994.0 403.0C989.2 402.7 983.2 399.7 981.0 399.0" fill="none" stroke="#000" stroke-width="9.4" stroke-linecap="round" stroke-linejoin="round"/><circle cx="990" cy="386" r="8"/></g><g filter="url(#e1)"><path d="M1009.0 378.0C1007.7 377.3 1003.8 374.0 1001.0 374.0C998.2 374.0 993.5 377.3 992.0 378.0" fill="none" stroke="#000" stroke-width="6.4" stroke-linecap="round" stroke-linejoin="round"/><circle cx="979.5" cy="399" r="5.6"/></g><g filter="url(#e2)"><path d="M1033.0 344.0C1030.5 343.8 1023.3 342.2 1018.0 343.0C1012.7 343.8 1006.7 346.0 1001.0 349.0C995.3 352.0 989.0 357.0 984.0 361.0C979.0 365.0 974.5 370.0 971.0 373.0C967.5 376.0 966.3 378.0 963.0 379.0C959.7 380.0 953.0 379.0 951.0 379.0" fill="none" stroke="#000" stroke-width="10.9" stroke-linecap="round" stroke-linejoin="round"/></g><g filter="url(#e2)"><path d="M960.2 417.0C959.1 416.0 959.5 414.0 959.5 412.7C959.4 411.4 959.6 410.1 959.7 409.0C959.9 407.8 960.1 406.6 960.3 405.5C960.5 404.4 960.8 403.3 961.1 402.3C961.3 401.2 961.6 400.2 961.9 399.2C962.2 398.2 962.5 397.2 962.8 396.3C963.0 395.3 963.3 394.4 963.6 393.5C963.9 392.5 964.1 391.6 964.4 390.7C964.7 389.8 964.9 388.9 965.1 388.1C965.4 387.2 965.6 386.3 965.8 385.4C966.0 384.6 966.2 383.7 966.4 382.8C966.6 382.0 966.6 380.7 967.0 380.2C967.4 379.7 968.4 379.5 969.0 379.8C969.6 380.2 970.0 381.4 970.4 382.3C970.9 383.2 971.2 384.1 971.6 385.0C971.9 386.0 972.2 386.9 972.5 387.9C972.7 389.0 973.0 390.0 973.2 391.1C973.3 392.1 973.5 393.2 973.6 394.3C973.7 395.4 973.7 396.6 973.7 397.7C973.7 398.9 973.7 400.1 973.6 401.2C973.5 402.4 973.4 403.6 973.1 404.8C972.9 406.1 972.7 407.3 972.3 408.5C972.0 409.7 971.5 411.0 971.0 412.2C970.5 413.4 969.9 414.6 969.1 415.7C968.2 416.9 967.3 418.8 965.8 419.0C964.3 419.2 961.3 418.1 960.2 417.0Z"/></g><g filter="url(#e2)"><path d="M964.7 373.1C963.6 371.4 964.5 370.0 964.7 368.6C964.9 367.3 965.4 366.3 965.9 365.1C966.4 364.0 967.1 363.0 967.7 361.9C968.4 360.9 969.2 359.8 970.0 358.8C970.7 357.7 971.6 356.7 972.4 355.6C973.3 354.5 974.2 353.4 975.2 352.3C976.1 351.2 977.1 350.1 978.1 348.9C979.1 347.8 980.1 346.6 981.1 345.4C982.2 344.2 983.2 342.9 984.3 341.6C985.4 340.4 986.5 339.0 987.6 337.7C988.7 336.4 989.8 335.0 991.0 333.6C992.1 332.2 993.6 329.9 994.6 329.4C995.7 328.9 997.1 329.5 997.4 330.6C997.6 331.8 996.7 334.4 996.4 336.2C996.0 338.0 995.5 339.8 995.1 341.5C994.7 343.2 994.2 344.9 993.7 346.6C993.2 348.3 992.7 349.9 992.2 351.5C991.7 353.1 991.2 354.7 990.6 356.2C990.0 357.7 989.5 359.2 988.8 360.7C988.2 362.1 987.6 363.5 986.9 364.9C986.2 366.2 985.5 367.5 984.7 368.8C983.9 370.0 983.1 371.2 982.3 372.3C981.4 373.4 980.4 374.5 979.4 375.4C978.4 376.3 977.3 377.3 976.0 377.8C974.6 378.4 973.1 379.6 971.3 378.9C969.4 378.1 965.8 374.9 964.7 373.1Z"/></g><g filter="url(#e2)"><path d="M962.3 370.3C960.9 369.0 961.5 367.1 961.4 365.7C961.3 364.2 961.6 363.0 961.9 361.6C962.1 360.3 962.5 359.1 962.9 357.8C963.3 356.6 963.7 355.3 964.2 354.1C964.7 352.8 965.2 351.6 965.7 350.3C966.2 349.0 966.8 347.8 967.4 346.5C967.9 345.2 968.5 343.9 969.1 342.6C969.7 341.3 970.3 340.0 970.9 338.7C971.5 337.3 972.1 336.0 972.8 334.6C973.4 333.2 974.0 331.9 974.6 330.4C975.2 329.0 975.8 327.6 976.5 326.2C977.1 324.7 977.7 322.4 978.5 321.8C979.4 321.1 980.9 321.3 981.5 322.2C982.1 323.1 982.0 325.5 982.1 327.1C982.3 328.7 982.3 330.3 982.4 331.9C982.5 333.5 982.5 335.1 982.5 336.6C982.5 338.2 982.5 339.8 982.4 341.3C982.3 342.9 982.3 344.4 982.1 346.0C982.0 347.5 981.8 349.0 981.6 350.5C981.4 352.0 981.2 353.5 980.9 354.9C980.6 356.4 980.2 357.9 979.8 359.3C979.4 360.7 978.9 362.1 978.4 363.4C977.8 364.8 977.2 366.1 976.5 367.4C975.7 368.6 975.0 369.9 973.8 370.9C972.7 372.0 971.6 373.8 969.7 373.7C967.8 373.6 963.7 371.7 962.3 370.3Z"/></g><g filter="url(#e2)"><path d="M974.8 390.4C975.9 389.9 976.7 390.7 977.4 391.0C978.2 391.3 978.8 391.8 979.4 392.3C979.9 392.7 980.4 393.2 980.9 393.7C981.4 394.2 981.9 394.8 982.3 395.3C982.7 395.9 983.1 396.4 983.5 397.0C983.9 397.6 984.2 398.1 984.6 398.7C984.9 399.3 985.2 399.9 985.5 400.5C985.8 401.1 986.1 401.7 986.4 402.3C986.6 402.8 986.9 403.4 987.1 404.0C987.4 404.6 987.6 405.2 987.8 405.8C988.0 406.4 988.2 407.0 988.4 407.6C988.5 408.2 989.0 408.9 988.8 409.4C988.6 409.9 987.7 410.5 987.2 410.6C986.7 410.7 986.1 410.0 985.6 409.7C985.0 409.4 984.5 409.1 984.0 408.7C983.5 408.4 983.0 408.1 982.5 407.7C982.0 407.4 981.5 407.0 981.0 406.6C980.4 406.3 979.9 405.9 979.4 405.5C978.9 405.1 978.4 404.7 977.9 404.3C977.4 403.9 976.9 403.4 976.4 403.0C976.0 402.5 975.5 402.1 975.0 401.6C974.6 401.1 974.1 400.6 973.7 400.0C973.3 399.5 972.8 398.9 972.5 398.3C972.1 397.7 971.7 397.1 971.5 396.3C971.3 395.5 970.6 394.6 971.2 393.6C971.7 392.7 973.8 390.8 974.8 390.4Z"/></g><g filter="url(#e1)"><path d="M960.6 414.8C959.5 414.4 959.5 413.1 959.2 412.3C958.9 411.4 958.8 410.6 958.7 409.8C958.6 408.9 958.6 408.1 958.6 407.3C958.6 406.4 958.6 405.6 958.6 404.8C958.7 404.0 958.8 403.1 958.9 402.3C958.9 401.4 959.1 400.6 959.2 399.8C959.3 398.9 959.4 398.1 959.5 397.2C959.7 396.3 959.8 395.5 960.0 394.6C960.1 393.8 960.3 392.9 960.4 392.0C960.6 391.2 960.7 390.3 960.9 389.4C961.1 388.5 961.2 387.6 961.4 386.8C961.6 385.9 961.6 384.5 962.0 384.1C962.4 383.6 963.5 383.5 964.0 383.9C964.5 384.4 964.6 385.7 964.9 386.6C965.2 387.4 965.4 388.3 965.7 389.2C965.9 390.1 966.1 391.0 966.3 391.8C966.5 392.7 966.7 393.6 966.9 394.5C967.1 395.4 967.3 396.2 967.4 397.1C967.6 398.0 967.7 398.9 967.8 399.8C967.9 400.6 968.0 401.5 968.1 402.4C968.2 403.3 968.2 404.1 968.2 405.0C968.3 405.9 968.2 406.7 968.2 407.6C968.1 408.5 968.0 409.3 967.8 410.2C967.7 411.0 967.5 411.9 967.1 412.7C966.7 413.5 966.5 414.8 965.4 415.2C964.4 415.5 961.6 415.3 960.6 414.8Z"/></g><g filter="url(#e3)"><path d="M963.0 300.5C966.8 301.4 971.3 303.1 974.0 306.0C976.7 308.9 978.7 313.7 979.0 318.0C979.3 322.3 977.7 327.8 976.0 332.0C974.3 336.2 971.2 340.0 969.0 343.0C966.8 346.0 966.0 348.8 963.0 350.0C960.0 351.2 953.0 358.2 951.0 350.0C949.0 341.8 949.0 308.8 951.0 300.5C953.0 292.2 959.2 299.6 963.0 300.5Z"/></g><path d="M963.0 309C969.0 311 972.0 318 970.5 326C969.0 334 966.0 340 963.0 344L951.0 344L951.0 309Z" fill="#2e2e2e" filter="url(#b2)"/><ellipse cx="963" cy="316" rx="5" ry="5" fill="#8a8a8a" filter="url(#b2)"/><g filter="url(#e3)"><path d="M1124.6 397.6C1122.9 399.7 1119.5 399.0 1117.1 399.2C1114.7 399.4 1112.4 399.1 1110.0 398.8C1107.7 398.6 1105.4 398.2 1103.1 397.7C1100.8 397.2 1098.5 396.6 1096.2 396.0C1093.9 395.4 1091.6 394.7 1089.3 394.0C1087.1 393.3 1084.8 392.5 1082.5 391.7C1080.2 390.9 1077.9 390.0 1075.6 389.2C1073.3 388.3 1071.0 387.4 1068.6 386.5C1066.3 385.6 1064.0 384.7 1061.7 383.7C1059.3 382.8 1057.0 381.8 1054.6 380.8C1052.3 379.8 1049.9 378.8 1047.5 377.8C1045.2 376.7 1041.5 375.8 1040.5 374.4C1039.5 373.1 1040.1 370.4 1041.5 369.6C1043.0 368.7 1046.8 369.5 1049.4 369.6C1052.0 369.6 1054.5 369.7 1057.1 369.9C1059.7 370.0 1062.2 370.1 1064.7 370.3C1067.2 370.5 1069.8 370.6 1072.3 370.8C1074.7 371.0 1077.2 371.3 1079.7 371.5C1082.2 371.8 1084.6 372.0 1087.0 372.3C1089.5 372.6 1091.9 373.0 1094.2 373.4C1096.6 373.7 1099.0 374.2 1101.3 374.7C1103.7 375.2 1106.0 375.7 1108.3 376.3C1110.6 377.0 1112.8 377.6 1115.0 378.5C1117.2 379.4 1119.4 380.2 1121.5 381.5C1123.6 382.8 1126.9 383.8 1127.4 386.4C1127.9 389.1 1126.3 395.4 1124.6 397.6Z"/></g><g filter="url(#e2)"><path d="M1000.4 329.0C1000.8 327.1 1002.6 326.6 1003.8 325.9C1005.0 325.2 1006.3 324.9 1007.6 324.7C1008.9 324.4 1010.2 324.4 1011.5 324.4C1012.7 324.4 1014.0 324.6 1015.3 324.9C1016.5 325.1 1017.8 325.5 1019.0 325.9C1020.2 326.3 1021.4 326.9 1022.5 327.5C1023.7 328.0 1024.8 328.7 1025.9 329.4C1026.9 330.1 1028.0 330.9 1029.0 331.7C1030.0 332.5 1030.9 333.4 1031.8 334.3C1032.8 335.3 1033.6 336.2 1034.5 337.2C1035.3 338.2 1036.2 339.3 1036.9 340.4C1037.7 341.5 1039.0 342.9 1039.0 343.9C1039.0 344.8 1037.9 346.0 1037.0 346.1C1036.1 346.3 1034.6 345.3 1033.4 344.9C1032.2 344.5 1031.1 344.1 1030.0 343.8C1028.9 343.4 1027.8 343.2 1026.8 342.9C1025.7 342.7 1024.7 342.5 1023.7 342.3C1022.7 342.1 1021.7 342.0 1020.8 341.8C1019.8 341.7 1018.9 341.6 1018.0 341.5C1017.1 341.5 1016.2 341.4 1015.3 341.3C1014.4 341.3 1013.6 341.2 1012.7 341.1C1011.9 341.0 1011.0 341.0 1010.2 340.8C1009.3 340.7 1008.5 340.6 1007.6 340.3C1006.7 340.1 1005.8 339.9 1004.8 339.4C1003.8 338.8 1002.3 338.8 1001.6 337.0C1000.9 335.3 1000.0 330.8 1000.4 329.0Z"/></g><g filter="url(#e2)"><path d="M1039.4 339.9C1041.2 339.2 1042.4 340.1 1043.6 340.4C1044.7 340.7 1045.4 341.2 1046.2 341.7C1046.9 342.1 1047.6 342.7 1048.2 343.2C1048.9 343.8 1049.5 344.4 1050.1 345.1C1050.7 345.7 1051.3 346.4 1051.9 347.1C1052.5 347.8 1053.1 348.5 1053.8 349.2C1054.4 350.0 1055.1 350.7 1055.8 351.5C1056.5 352.3 1057.2 353.1 1058.0 353.9C1058.8 354.7 1059.6 355.5 1060.5 356.3C1061.3 357.2 1062.2 358.0 1063.2 358.8C1064.1 359.6 1065.1 360.5 1066.1 361.3C1067.1 362.2 1068.9 363.3 1069.3 364.0C1069.7 364.8 1069.5 365.6 1068.7 366.0C1067.9 366.3 1065.8 366.2 1064.4 366.2C1063.0 366.2 1061.6 366.1 1060.2 366.0C1058.9 365.9 1057.5 365.7 1056.2 365.5C1054.8 365.3 1053.5 365.1 1052.2 364.8C1050.9 364.5 1049.6 364.1 1048.4 363.7C1047.1 363.3 1045.9 362.8 1044.7 362.3C1043.5 361.7 1042.4 361.1 1041.3 360.5C1040.2 359.8 1039.1 359.1 1038.1 358.3C1037.1 357.5 1036.2 356.6 1035.4 355.6C1034.6 354.7 1033.8 353.6 1033.2 352.5C1032.7 351.4 1032.1 350.2 1032.0 348.8C1031.8 347.4 1031.3 345.6 1032.6 344.1C1033.8 342.6 1037.6 340.5 1039.4 339.9Z"/></g><g filter="url(#e2)"><path d="M1045.0 353.7C1046.7 353.1 1047.9 353.9 1049.1 354.1C1050.2 354.4 1051.0 354.9 1051.8 355.3C1052.7 355.7 1053.5 356.3 1054.3 356.8C1055.1 357.4 1055.9 358.0 1056.8 358.6C1057.6 359.2 1058.4 359.9 1059.3 360.5C1060.2 361.2 1061.2 361.9 1062.2 362.6C1063.2 363.3 1064.2 364.1 1065.3 364.8C1066.4 365.5 1067.5 366.3 1068.7 367.0C1070.0 367.8 1071.2 368.5 1072.6 369.3C1073.9 370.0 1075.3 370.7 1076.7 371.5C1078.2 372.2 1079.7 372.9 1081.3 373.7C1082.8 374.4 1085.4 375.3 1086.2 376.0C1086.9 376.7 1086.8 377.6 1085.8 378.0C1084.9 378.4 1082.1 378.4 1080.3 378.5C1078.5 378.6 1076.8 378.6 1075.0 378.6C1073.3 378.5 1071.6 378.5 1069.9 378.4C1068.3 378.2 1066.6 378.1 1065.0 377.9C1063.4 377.6 1061.9 377.4 1060.3 377.0C1058.8 376.7 1057.3 376.3 1055.8 375.9C1054.4 375.4 1053.0 374.9 1051.6 374.3C1050.2 373.7 1048.9 373.1 1047.7 372.3C1046.4 371.6 1045.3 370.7 1044.2 369.8C1043.1 368.9 1042.1 367.9 1041.3 366.8C1040.4 365.6 1039.6 364.5 1039.2 363.0C1038.8 361.6 1038.0 359.8 1039.0 358.3C1040.0 356.7 1043.3 354.4 1045.0 353.7Z"/></g><g filter="url(#e2)"><path d="M1082.0 370.8C1083.3 369.6 1084.6 370.2 1085.8 370.2C1086.9 370.2 1087.8 370.5 1088.8 370.7C1089.7 370.9 1090.6 371.3 1091.5 371.6C1092.4 372.0 1093.3 372.4 1094.2 372.8C1095.1 373.2 1095.9 373.6 1096.8 374.1C1097.7 374.6 1098.6 375.0 1099.5 375.5C1100.5 376.0 1101.4 376.5 1102.3 377.0C1103.3 377.5 1104.3 378.0 1105.2 378.5C1106.2 379.0 1107.2 379.5 1108.3 380.0C1109.3 380.5 1110.3 381.0 1111.4 381.4C1112.5 381.9 1113.6 382.4 1114.7 382.9C1115.8 383.4 1117.6 383.7 1118.1 384.5C1118.7 385.3 1118.5 386.9 1117.9 387.5C1117.2 388.1 1115.3 388.1 1114.0 388.3C1112.8 388.5 1111.5 388.7 1110.3 388.8C1109.0 388.9 1107.7 389.0 1106.5 389.0C1105.2 389.1 1104.0 389.1 1102.8 389.1C1101.5 389.1 1100.3 389.0 1099.1 388.9C1097.9 388.8 1096.6 388.7 1095.5 388.5C1094.3 388.3 1093.1 388.1 1091.9 387.8C1090.7 387.5 1089.6 387.2 1088.5 386.8C1087.4 386.4 1086.3 385.9 1085.2 385.4C1084.2 384.8 1083.2 384.2 1082.2 383.5C1081.3 382.8 1080.4 382.1 1079.6 381.0C1078.9 380.0 1077.6 378.9 1078.0 377.2C1078.4 375.5 1080.7 371.9 1082.0 370.8Z"/></g><ellipse cx="1042" cy="374" rx="16" ry="10" fill="url(#hl)" opacity="0.5"/><path d="M1111.0 535.0C1106.0 530.0 1088.5 528.3 1076.0 530.0C1063.5 531.7 1049.3 546.7 1036.0 545.0C1022.7 543.3 1008.2 526.2 996.0 520.0C983.8 513.8 970.5 510.0 963.0 508.0C955.5 506.0 953.0 488.5 951.0 508.0C949.0 527.5 949.0 605.5 951.0 625.0C953.0 644.5 957.2 628.3 963.0 625.0C968.8 621.7 975.5 609.2 986.0 605.0C996.5 600.8 1014.3 602.2 1026.0 600.0C1037.7 597.8 1047.7 596.2 1056.0 592.0C1064.3 587.8 1067.7 580.3 1076.0 575.0C1084.3 569.7 1100.2 566.7 1106.0 560.0C1111.8 553.3 1116.0 540.0 1111.0 535.0Z" fill="#6a6a6a" opacity=".35" filter="url(#b4)"/><g filter="url(#e1)"><path d="M1106.0 536.0C1106.7 537.7 1110.3 542.7 1110.0 546.0C1109.7 549.3 1107.0 553.3 1104.0 556.0C1101.0 558.7 1096.0 561.0 1092.0 562.0C1088.0 563.0 1082.0 562.0 1080.0 562.0" fill="none" stroke="#000" stroke-width="7.4" stroke-linecap="round" stroke-linejoin="round"/><circle cx="1105.5" cy="535.5" r="7"/></g><g filter="url(#e1)"><path d="M1096.4 550.0C1095.4 550.7 1094.5 550.4 1093.8 550.4C1093.0 550.4 1092.4 550.2 1091.8 550.0C1091.3 549.9 1090.7 549.7 1090.2 549.4C1089.7 549.2 1089.2 548.9 1088.7 548.7C1088.2 548.4 1087.7 548.1 1087.2 547.8C1086.7 547.6 1086.2 547.3 1085.6 547.0C1085.1 546.7 1084.6 546.3 1084.0 546.0C1083.5 545.7 1082.9 545.4 1082.3 545.1C1081.7 544.8 1081.1 544.5 1080.4 544.2C1079.8 544.0 1079.1 543.7 1078.5 543.4C1077.8 543.1 1077.1 542.9 1076.3 542.6C1075.6 542.3 1074.5 542.1 1074.1 541.7C1073.7 541.4 1073.6 540.7 1073.9 540.3C1074.3 539.8 1075.5 539.5 1076.3 539.2C1077.1 538.9 1077.9 538.7 1078.6 538.4C1079.4 538.2 1080.2 538.0 1081.1 537.9C1081.9 537.7 1082.7 537.6 1083.5 537.5C1084.3 537.5 1085.1 537.4 1085.9 537.4C1086.7 537.4 1087.6 537.5 1088.4 537.5C1089.2 537.6 1090.0 537.8 1090.8 537.9C1091.6 538.1 1092.4 538.4 1093.1 538.6C1093.9 538.9 1094.6 539.3 1095.3 539.7C1096.0 540.1 1096.7 540.6 1097.3 541.1C1097.9 541.7 1098.5 542.3 1098.9 543.1C1099.2 543.9 1100.0 544.9 1099.6 546.0C1099.2 547.2 1097.4 549.3 1096.4 550.0Z"/></g><g filter="url(#e1)"><path d="M1100.0 558.3C1099.7 559.3 1098.8 559.5 1098.2 559.9C1097.6 560.4 1097.0 560.5 1096.4 560.7C1095.8 560.9 1095.2 561.0 1094.6 561.1C1094.0 561.3 1093.4 561.3 1092.8 561.4C1092.2 561.5 1091.6 561.5 1090.9 561.6C1090.3 561.6 1089.7 561.6 1089.0 561.7C1088.4 561.7 1087.8 561.7 1087.1 561.8C1086.4 561.8 1085.8 561.8 1085.1 561.9C1084.4 561.9 1083.7 562.0 1083.0 562.0C1082.3 562.1 1081.6 562.2 1080.9 562.2C1080.1 562.3 1079.4 562.4 1078.7 562.5C1077.9 562.5 1076.8 562.9 1076.3 562.7C1075.8 562.5 1075.5 561.8 1075.7 561.3C1075.8 560.8 1076.8 560.2 1077.3 559.6C1077.9 559.1 1078.5 558.6 1079.1 558.1C1079.8 557.6 1080.4 557.2 1081.0 556.7C1081.6 556.3 1082.3 555.8 1082.9 555.4C1083.6 555.0 1084.2 554.7 1084.9 554.3C1085.6 554.0 1086.3 553.6 1087.0 553.3C1087.6 553.0 1088.3 552.8 1089.1 552.5C1089.8 552.3 1090.5 552.1 1091.2 551.9C1091.9 551.8 1092.7 551.7 1093.4 551.6C1094.1 551.6 1094.9 551.5 1095.6 551.6C1096.4 551.7 1097.1 551.8 1097.8 552.1C1098.6 552.5 1099.6 552.7 1100.0 553.7C1100.4 554.7 1100.3 557.3 1100.0 558.3Z"/></g><g filter="url(#e2)"><circle cx="1055.9" cy="559.4" r="8.4"/></g><g filter="url(#e2)"><circle cx="1062.9" cy="566.2" r="8.4"/></g><g filter="url(#e2)"><circle cx="1071.4" cy="561.6" r="8.4"/></g><g filter="url(#e2)"><circle cx="1069.7" cy="552.1" r="8.4"/></g><g filter="url(#e2)"><circle cx="1060.1" cy="550.7" r="8.4"/></g><g filter="url(#e2)"><circle cx="1068.5" cy="554" r="9.5"/></g><g filter="url(#e1)"><path d="M1069.0 554.0C1068.5 553.5 1066.3 552.0 1066.0 551.0C1065.7 550.0 1066.2 548.5 1067.0 548.0C1067.8 547.5 1069.8 547.3 1071.0 548.0C1072.2 548.7 1073.8 550.5 1074.0 552.0C1074.2 553.5 1073.2 555.8 1072.0 557.0C1070.8 558.2 1067.8 558.7 1067.0 559.0" fill="none" stroke="#000" stroke-width="3.4" stroke-linecap="round" stroke-linejoin="round"/></g><g filter="url(#e2)"><path d="M976.3 556.0C976.4 553.6 978.9 551.7 980.4 550.1C981.9 548.6 983.6 547.6 985.3 546.5C987.1 545.5 988.8 544.6 990.6 543.9C992.4 543.1 994.3 542.5 996.1 541.9C997.9 541.3 999.8 540.8 1001.6 540.4C1003.5 540.0 1005.3 539.6 1007.2 539.3C1009.1 539.0 1010.9 538.8 1012.8 538.6C1014.6 538.4 1016.5 538.3 1018.3 538.2C1020.1 538.1 1022.0 538.0 1023.8 538.0C1025.6 538.0 1027.4 538.0 1029.2 538.1C1031.0 538.2 1032.8 538.3 1034.5 538.4C1036.3 538.6 1038.9 538.9 1039.8 539.3C1040.8 539.6 1040.8 540.0 1040.2 540.7C1039.5 541.5 1037.2 542.7 1035.7 543.7C1034.2 544.6 1032.7 545.5 1031.2 546.3C1029.7 547.2 1028.2 548.1 1026.7 549.0C1025.2 549.9 1023.7 550.7 1022.1 551.6C1020.6 552.5 1019.1 553.3 1017.5 554.2C1015.9 555.0 1014.4 555.9 1012.8 556.7C1011.2 557.5 1009.6 558.3 1008.0 559.0C1006.4 559.8 1004.7 560.6 1003.0 561.2C1001.3 561.9 999.6 562.6 997.9 563.1C996.1 563.7 994.3 564.2 992.4 564.6C990.5 565.0 988.7 565.4 986.6 565.3C984.4 565.2 981.4 565.6 979.7 564.0C978.0 562.5 976.2 558.3 976.3 556.0Z"/></g><g filter="url(#e2)"><path d="M979.4 562.7C980.1 560.4 983.1 559.2 985.0 558.1C987.0 557.0 989.0 556.5 991.0 556.0C993.0 555.4 995.1 555.1 997.1 554.9C999.1 554.7 1001.1 554.6 1003.2 554.6C1005.2 554.6 1007.2 554.7 1009.2 554.9C1011.2 555.1 1013.2 555.3 1015.1 555.6C1017.1 556.0 1019.1 556.3 1021.0 556.8C1022.9 557.2 1024.8 557.7 1026.7 558.3C1028.6 558.8 1030.5 559.4 1032.3 560.0C1034.1 560.7 1036.0 561.4 1037.8 562.1C1039.5 562.8 1041.3 563.6 1043.1 564.4C1044.8 565.3 1047.3 566.5 1048.1 567.3C1048.9 568.0 1048.8 568.3 1047.9 568.7C1046.9 569.1 1044.1 569.4 1042.2 569.7C1040.4 570.0 1038.5 570.2 1036.7 570.5C1034.8 570.8 1033.0 571.0 1031.2 571.3C1029.4 571.6 1027.6 571.9 1025.7 572.2C1023.9 572.5 1022.1 572.8 1020.3 573.0C1018.5 573.3 1016.7 573.6 1014.9 573.9C1013.1 574.1 1011.2 574.4 1009.4 574.6C1007.6 574.8 1005.8 575.0 1004.0 575.2C1002.1 575.3 1000.3 575.4 998.4 575.5C996.5 575.5 994.7 575.5 992.8 575.3C990.8 575.1 988.9 575.0 986.9 574.4C984.9 573.7 981.9 573.3 980.6 571.3C979.4 569.4 978.7 564.9 979.4 562.7Z"/></g><g filter="url(#e2)"><path d="M978.3 569.6C979.4 567.6 982.3 567.0 984.2 566.3C986.2 565.6 988.2 565.5 990.1 565.4C992.0 565.3 993.9 565.5 995.8 565.7C997.7 566.0 999.5 566.4 1001.3 566.8C1003.1 567.3 1004.9 567.9 1006.6 568.6C1008.4 569.2 1010.1 570.0 1011.7 570.8C1013.3 571.6 1015.0 572.5 1016.5 573.4C1018.1 574.4 1019.6 575.4 1021.1 576.4C1022.6 577.5 1024.0 578.6 1025.4 579.7C1026.8 580.9 1028.1 582.1 1029.4 583.3C1030.7 584.5 1031.9 585.8 1033.1 587.1C1034.3 588.5 1036.0 590.4 1036.4 591.4C1036.8 592.3 1036.6 592.6 1035.6 592.6C1034.6 592.7 1032.1 592.0 1030.4 591.7C1028.8 591.4 1027.1 591.1 1025.5 590.8C1023.9 590.5 1022.2 590.3 1020.6 590.0C1019.0 589.8 1017.4 589.6 1015.8 589.3C1014.2 589.1 1012.6 588.9 1011.0 588.8C1009.4 588.6 1007.9 588.4 1006.3 588.2C1004.7 588.0 1003.2 587.8 1001.6 587.6C1000.0 587.4 998.5 587.2 996.9 586.9C995.3 586.7 993.8 586.4 992.2 586.0C990.6 585.6 989.1 585.3 987.5 584.7C985.9 584.1 984.3 583.6 982.6 582.6C981.0 581.5 978.5 580.5 977.7 578.4C977.0 576.2 977.2 571.6 978.3 569.6Z"/></g><g filter="url(#e2)"><path d="M977.5 576.4C979.0 575.1 981.6 575.5 983.5 575.5C985.3 575.5 986.9 575.9 988.5 576.3C990.0 576.7 991.5 577.3 992.9 577.9C994.3 578.5 995.7 579.2 997.0 580.0C998.3 580.7 999.5 581.5 1000.6 582.3C1001.8 583.1 1002.9 584.0 1003.9 584.9C1005.0 585.8 1006.0 586.7 1006.9 587.6C1007.8 588.6 1008.7 589.5 1009.5 590.5C1010.4 591.4 1011.1 592.4 1011.9 593.4C1012.6 594.4 1013.2 595.3 1013.8 596.3C1014.4 597.3 1015.0 598.3 1015.4 599.3C1015.9 600.3 1016.5 601.7 1016.5 602.4C1016.5 603.2 1016.2 603.5 1015.5 603.6C1014.8 603.6 1013.4 603.2 1012.4 603.0C1011.3 602.8 1010.3 602.5 1009.3 602.3C1008.3 602.0 1007.2 601.8 1006.1 601.5C1005.1 601.2 1004.0 600.9 1002.9 600.6C1001.8 600.3 1000.7 600.0 999.5 599.7C998.4 599.4 997.2 599.0 996.1 598.6C994.9 598.2 993.7 597.8 992.5 597.3C991.3 596.9 990.0 596.4 988.8 595.8C987.6 595.2 986.3 594.7 985.1 594.0C983.8 593.2 982.6 592.5 981.3 591.6C980.1 590.7 978.8 589.8 977.7 588.5C976.5 587.2 974.5 585.6 974.5 583.6C974.5 581.5 976.0 577.8 977.5 576.4Z"/></g><g filter="url(#e2)"><path d="M988.5 573.4C989.7 571.9 992.6 571.7 994.6 571.4C996.5 571.0 998.4 571.1 1000.3 571.1C1002.2 571.2 1004.1 571.4 1006.0 571.6C1007.8 571.9 1009.7 572.3 1011.6 572.7C1013.4 573.1 1015.2 573.6 1017.1 574.1C1018.9 574.7 1020.7 575.2 1022.5 575.9C1024.3 576.5 1026.1 577.1 1027.9 577.8C1029.7 578.5 1031.5 579.2 1033.3 580.0C1035.1 580.7 1036.8 581.5 1038.6 582.3C1040.3 583.1 1042.1 583.9 1043.9 584.7C1045.6 585.6 1047.3 586.4 1049.1 587.3C1050.8 588.3 1053.4 589.5 1054.2 590.3C1055.0 591.0 1054.8 591.5 1053.8 591.7C1052.8 592.0 1049.9 591.8 1047.9 591.7C1046.0 591.7 1044.1 591.6 1042.1 591.5C1040.2 591.4 1038.3 591.3 1036.4 591.2C1034.5 591.1 1032.6 591.0 1030.7 590.9C1028.8 590.8 1027.0 590.7 1025.1 590.6C1023.2 590.4 1021.3 590.3 1019.5 590.1C1017.6 590.0 1015.8 589.8 1013.9 589.6C1012.1 589.4 1010.3 589.1 1008.4 588.9C1006.6 588.6 1004.8 588.3 1003.0 587.9C1001.2 587.5 999.4 587.0 997.7 586.4C995.9 585.9 994.2 585.3 992.4 584.4C990.7 583.4 988.1 582.4 987.5 580.6C986.8 578.7 987.4 575.0 988.5 573.4Z"/></g><g filter="url(#e2)"><path d="M970.6 549.6C969.4 548.0 969.8 546.2 969.8 544.7C969.8 543.3 970.2 542.2 970.7 541.1C971.1 540.0 971.7 539.0 972.3 538.0C972.9 537.0 973.6 536.1 974.3 535.2C975.1 534.4 975.9 533.6 976.7 532.8C977.5 532.0 978.4 531.3 979.3 530.5C980.2 529.8 981.1 529.1 982.0 528.5C983.0 527.8 983.9 527.2 984.9 526.6C985.9 526.0 986.9 525.4 987.9 524.8C988.9 524.3 989.9 523.7 990.9 523.2C992.0 522.7 993.0 522.2 994.1 521.7C995.1 521.3 996.7 520.6 997.4 520.5C998.2 520.5 998.5 520.7 998.6 521.5C998.7 522.2 998.2 523.9 997.9 525.0C997.7 526.1 997.4 527.2 997.1 528.3C996.8 529.4 996.5 530.5 996.1 531.5C995.8 532.6 995.5 533.7 995.1 534.7C994.7 535.8 994.4 536.9 994.0 537.9C993.6 538.9 993.2 540.0 992.7 541.0C992.3 542.0 991.8 543.0 991.3 543.9C990.8 544.9 990.3 545.8 989.7 546.8C989.1 547.7 988.5 548.6 987.7 549.4C987.0 550.2 986.3 551.0 985.3 551.8C984.4 552.5 983.5 553.2 982.2 553.6C980.9 554.1 979.3 555.0 977.4 554.4C975.4 553.7 971.9 551.2 970.6 549.6Z"/></g><g filter="url(#e2)"><path d="M972.1 587.7C973.9 587.0 975.4 587.9 976.6 588.3C977.9 588.7 978.7 589.3 979.5 589.9C980.4 590.5 981.1 591.2 981.8 591.9C982.4 592.6 983.0 593.4 983.5 594.1C984.1 594.9 984.5 595.6 985.0 596.4C985.4 597.2 985.8 598.0 986.2 598.8C986.6 599.6 986.9 600.4 987.2 601.2C987.5 602.0 987.8 602.8 988.1 603.6C988.4 604.4 988.6 605.2 988.9 606.0C989.1 606.8 989.3 607.6 989.5 608.4C989.7 609.3 990.0 610.0 990.1 610.9C990.3 611.7 990.6 612.8 990.5 613.4C990.4 614.1 990.1 614.4 989.5 614.6C988.9 614.7 987.7 614.5 986.8 614.4C986.0 614.2 985.1 614.0 984.3 613.8C983.5 613.5 982.6 613.3 981.8 613.0C980.9 612.7 980.1 612.3 979.2 611.9C978.4 611.6 977.6 611.1 976.7 610.7C975.9 610.2 975.1 609.7 974.3 609.2C973.5 608.7 972.7 608.1 972.0 607.5C971.2 606.8 970.5 606.2 969.8 605.4C969.1 604.7 968.4 603.9 967.9 603.1C967.3 602.2 966.7 601.3 966.3 600.3C965.9 599.3 965.4 598.3 965.3 596.9C965.3 595.6 964.8 593.9 965.9 592.3C967.0 590.8 970.3 588.4 972.1 587.7Z"/></g><g filter="url(#e2)"><path d="M958.6 552.0C956.5 551.4 955.7 549.6 954.8 548.3C953.9 547.1 953.6 545.9 953.3 544.7C952.9 543.5 952.8 542.3 952.7 541.1C952.6 539.9 952.6 538.7 952.7 537.6C952.8 536.4 953.0 535.2 953.1 534.0C953.3 532.8 953.6 531.7 953.9 530.5C954.2 529.3 954.5 528.2 954.9 527.0C955.2 525.9 955.6 524.7 956.0 523.6C956.4 522.4 956.9 521.3 957.3 520.1C957.8 519.0 958.3 517.9 958.8 516.7C959.3 515.6 959.7 514.5 960.3 513.3C960.9 512.2 961.7 510.6 962.2 510.0C962.8 509.4 963.2 509.4 963.8 510.0C964.3 510.6 965.1 512.2 965.7 513.3C966.3 514.5 966.7 515.6 967.2 516.7C967.7 517.9 968.2 519.0 968.7 520.1C969.1 521.3 969.6 522.4 970.0 523.6C970.4 524.7 970.8 525.9 971.1 527.0C971.5 528.2 971.8 529.3 972.1 530.5C972.4 531.7 972.7 532.8 972.9 534.0C973.0 535.2 973.2 536.4 973.3 537.6C973.4 538.7 973.4 539.9 973.3 541.1C973.2 542.3 973.1 543.5 972.7 544.7C972.4 545.9 972.1 547.1 971.2 548.3C970.3 549.6 969.5 551.4 967.4 552.0C965.3 552.6 960.7 552.6 958.6 552.0Z"/></g><g filter="url(#e2)"><path d="M965.9 552.8C964.6 551.7 964.7 550.1 964.5 548.9C964.3 547.7 964.4 546.6 964.5 545.6C964.7 544.5 964.9 543.5 965.2 542.6C965.5 541.6 965.8 540.6 966.2 539.7C966.6 538.7 967.0 537.8 967.4 536.9C967.9 536.0 968.4 535.1 968.9 534.2C969.3 533.4 969.9 532.5 970.4 531.6C970.9 530.7 971.5 529.9 972.0 529.0C972.6 528.1 973.1 527.3 973.7 526.4C974.3 525.6 974.9 524.7 975.5 523.9C976.0 523.0 976.6 522.2 977.3 521.3C977.9 520.5 978.7 519.2 979.3 518.8C979.8 518.5 980.4 518.6 980.7 519.2C981.1 519.8 981.2 521.3 981.4 522.4C981.5 523.4 981.6 524.5 981.7 525.5C981.8 526.6 981.9 527.6 981.9 528.7C982.0 529.8 982.0 530.8 982.0 531.9C982.0 532.9 982.0 534.0 981.9 535.1C981.8 536.1 981.8 537.2 981.6 538.3C981.5 539.3 981.4 540.4 981.2 541.4C981.0 542.5 980.8 543.5 980.5 544.5C980.2 545.6 979.9 546.6 979.4 547.6C979.0 548.6 978.6 549.5 978.0 550.5C977.4 551.4 976.8 552.4 975.8 553.1C974.8 553.9 973.8 555.3 972.1 555.2C970.5 555.2 967.2 553.8 965.9 552.8Z"/></g><g filter="url(#e2)"><path d="M967.4 590.0C969.5 590.5 970.3 592.0 971.2 593.0C972.1 594.0 972.4 594.9 972.7 595.9C973.1 596.9 973.2 597.9 973.3 598.8C973.4 599.8 973.4 600.7 973.3 601.7C973.2 602.6 973.0 603.5 972.9 604.5C972.7 605.4 972.4 606.3 972.1 607.2C971.8 608.2 971.5 609.1 971.1 610.0C970.8 610.9 970.4 611.8 970.0 612.7C969.6 613.6 969.1 614.4 968.7 615.3C968.2 616.2 967.7 617.1 967.2 617.9C966.7 618.8 966.3 619.6 965.7 620.5C965.1 621.3 964.3 622.6 963.8 623.0C963.2 623.4 962.8 623.4 962.2 623.0C961.7 622.6 960.9 621.3 960.3 620.5C959.7 619.6 959.3 618.8 958.8 617.9C958.3 617.1 957.8 616.2 957.3 615.3C956.9 614.4 956.4 613.6 956.0 612.7C955.6 611.8 955.2 610.9 954.9 610.0C954.5 609.1 954.2 608.2 953.9 607.2C953.6 606.3 953.3 605.4 953.1 604.5C953.0 603.5 952.8 602.6 952.7 601.7C952.6 600.7 952.6 599.8 952.7 598.8C952.8 597.9 952.9 596.9 953.3 595.9C953.6 594.9 953.9 594.0 954.8 593.0C955.7 592.0 956.5 590.5 958.6 590.0C960.7 589.5 965.3 589.5 967.4 590.0Z"/></g><g filter="url(#e2)"><path d="M972.0 586.5C973.6 586.2 974.6 587.1 975.6 587.6C976.5 588.1 977.1 588.8 977.7 589.5C978.3 590.1 978.7 590.9 979.1 591.6C979.6 592.3 979.9 593.1 980.2 593.8C980.5 594.6 980.7 595.4 980.9 596.2C981.1 597.0 981.3 597.8 981.4 598.5C981.5 599.3 981.6 600.1 981.7 600.9C981.7 601.7 981.8 602.5 981.8 603.3C981.8 604.1 981.8 604.9 981.8 605.7C981.7 606.5 981.7 607.3 981.6 608.1C981.5 608.9 981.4 609.6 981.3 610.4C981.1 611.2 981.0 612.3 980.7 612.7C980.4 613.2 979.9 613.4 979.3 613.3C978.7 613.1 977.9 612.4 977.3 611.9C976.7 611.4 976.1 610.9 975.6 610.4C975.0 609.9 974.4 609.4 973.9 608.9C973.3 608.4 972.8 607.9 972.2 607.3C971.7 606.8 971.1 606.2 970.6 605.7C970.1 605.1 969.6 604.5 969.1 604.0C968.6 603.4 968.2 602.8 967.7 602.1C967.3 601.5 966.9 600.8 966.5 600.2C966.1 599.5 965.8 598.8 965.5 598.0C965.2 597.3 964.9 596.5 964.8 595.7C964.7 594.8 964.5 594.0 964.7 593.0C964.9 591.9 964.8 590.6 966.0 589.5C967.2 588.4 970.4 586.8 972.0 586.5Z"/></g><g filter="url(#e2)"><circle cx="947.5" cy="574.1" r="7"/><circle cx="958.9" cy="585.5" r="7"/><circle cx="974.3" cy="581.3" r="7"/><circle cx="978.5" cy="565.9" r="7"/><circle cx="967.1" cy="554.5" r="7"/><circle cx="951.7" cy="558.7" r="7"/></g><g filter="url(#e2)"><circle cx="951.7" cy="581.3" r="7"/><circle cx="967.1" cy="585.5" r="7"/><circle cx="978.5" cy="574.1" r="7"/><circle cx="974.3" cy="558.7" r="7"/><circle cx="958.9" cy="554.5" r="7"/><circle cx="947.5" cy="565.9" r="7"/></g><g filter="url(#e1)"><circle cx="954.0" cy="570.0" r="5.5"/><circle cx="963.0" cy="579.0" r="5.5"/><circle cx="972.0" cy="570.0" r="5.5"/><circle cx="963.0" cy="561.0" r="5.5"/></g><g filter="url(#e1)"><circle cx="956.6" cy="576.4" r="5.5"/><circle cx="969.4" cy="576.4" r="5.5"/><circle cx="969.4" cy="563.6" r="5.5"/><circle cx="956.6" cy="563.6" r="5.5"/></g><circle cx="963" cy="570" r="7.5" fill="#6f6f6f"/><g filter="url(#e1)"><path d="M963.0 563C967.0 567 968.0 573 963.0 577L951.0 577L951.0 563Z"/></g><path d="M1026.0 725.0C1021.0 710.8 1006.5 710.0 996.0 705.0C985.5 700.0 970.5 696.7 963.0 695.0C955.5 693.3 953.0 679.2 951.0 695.0C949.0 710.8 938.5 774.2 951.0 790.0C963.5 805.8 1013.5 800.8 1026.0 790.0C1038.5 779.2 1031.0 739.2 1026.0 725.0Z" fill="#808080" opacity="1" filter="url(#b4)"/><ellipse cx="963" cy="706" rx="10" ry="12" fill="url(#hl)" opacity="0.8"/><ellipse cx="979" cy="718" rx="8" ry="12" fill="url(#hl)" opacity="0.6"/><ellipse cx="963" cy="748" rx="10" ry="8" fill="url(#hl)" opacity="0.6"/><ellipse cx="1009" cy="722" rx="5" ry="10" fill="url(#dk)" opacity="0.9"/><ellipse cx="963" cy="764" rx="8" ry="6" fill="url(#dk)" opacity="0.5"/><g filter="url(#e1)"><path d="M970.0 691.5C971.5 691.2 976.8 688.4 979.0 690.0C981.2 691.6 983.3 696.7 983.0 701.0C982.7 705.3 979.5 711.5 977.0 716.0C974.5 720.5 970.3 724.8 968.0 728.0C965.7 731.2 965.0 735.0 963.0 735.0C961.0 735.0 957.2 729.2 956.0 728.0" fill="none" stroke="#000" stroke-width="6.9" stroke-linecap="round" stroke-linejoin="round"/><circle cx="969.5" cy="691.5" r="6"/></g><g filter="url(#e2)"><path d="M1001.9 706.1C1003.9 705.9 1005.1 707.6 1006.3 708.7C1007.4 709.7 1008.1 711.1 1008.8 712.4C1009.4 713.7 1009.8 715.1 1010.2 716.5C1010.5 717.9 1010.6 719.3 1010.7 720.7C1010.7 722.2 1010.6 723.6 1010.4 725.0C1010.2 726.4 1009.8 727.8 1009.4 729.2C1009.0 730.5 1008.4 731.9 1007.8 733.1C1007.2 734.4 1006.5 735.7 1005.7 736.8C1005.0 738.0 1004.1 739.2 1003.2 740.3C1002.3 741.4 1001.3 742.4 1000.3 743.5C999.2 744.5 998.1 745.5 997.0 746.4C995.8 747.3 994.2 748.8 993.2 748.9C992.2 749.1 991.0 748.1 990.8 747.1C990.6 746.1 991.7 744.3 992.0 743.0C992.4 741.7 992.7 740.4 993.0 739.2C993.2 738.0 993.4 736.8 993.6 735.7C993.7 734.6 993.8 733.5 993.8 732.5C993.9 731.5 993.8 730.5 993.8 729.5C993.8 728.6 993.7 727.7 993.6 726.8C993.5 725.9 993.4 725.1 993.2 724.3C993.1 723.5 993.0 722.7 992.9 721.9C992.8 721.1 992.7 720.4 992.6 719.5C992.5 718.7 992.4 717.9 992.5 717.0C992.5 716.1 992.4 715.2 992.7 714.0C993.0 712.8 992.6 711.3 994.1 709.9C995.7 708.6 999.8 706.3 1001.9 706.1Z"/></g><g filter="url(#e2)"><path d="M994.3 744.3C995.0 745.6 994.0 746.6 993.5 747.5C993.1 748.4 992.4 749.1 991.6 749.7C990.9 750.3 990.0 750.8 989.2 751.2C988.3 751.6 987.3 751.8 986.3 751.9C985.3 752.0 984.3 751.9 983.3 751.8C982.4 751.6 981.4 751.3 980.6 750.8C979.7 750.4 978.9 749.9 978.2 749.3C977.5 748.7 976.9 748.1 976.3 747.4C975.7 746.7 975.2 745.9 974.8 745.1C974.3 744.3 973.9 743.5 973.5 742.6C973.1 741.7 972.8 740.8 972.5 739.8C972.2 738.9 971.4 737.5 971.7 736.7C972.0 736.0 973.5 735.2 974.3 735.3C975.1 735.3 975.8 736.6 976.5 737.1C977.3 737.7 977.9 738.2 978.6 738.6C979.2 739.0 979.8 739.4 980.4 739.6C980.9 739.9 981.5 740.1 981.9 740.2C982.4 740.3 982.8 740.3 983.1 740.3C983.5 740.3 983.7 740.2 983.9 740.2C984.1 740.1 984.2 740.0 984.4 739.9C984.5 739.8 984.5 739.7 984.6 739.7C984.7 739.6 984.8 739.6 985.0 739.6C985.2 739.5 985.4 739.5 985.7 739.5C986.1 739.5 986.5 739.4 987.1 739.4C987.8 739.5 988.5 738.9 989.7 739.7C990.9 740.5 993.7 743.0 994.3 744.3Z"/></g><g filter="url(#e2)"><path d="M1004.4 734.3C1006.1 734.6 1007.2 736.4 1008.2 737.6C1009.1 738.8 1009.6 740.1 1010.1 741.4C1010.6 742.7 1010.9 744.0 1011.1 745.3C1011.3 746.6 1011.5 747.9 1011.5 749.3C1011.6 750.6 1011.6 751.9 1011.5 753.2C1011.4 754.5 1011.2 755.8 1011.0 757.1C1010.8 758.4 1010.6 759.6 1010.3 760.9C1009.9 762.1 1009.6 763.4 1009.2 764.6C1008.8 765.8 1008.4 767.0 1007.9 768.2C1007.4 769.4 1006.9 770.5 1006.4 771.7C1005.8 772.8 1005.3 773.9 1004.6 775.0C1004.0 776.0 1003.0 777.6 1002.5 778.1C1002.0 778.6 1001.8 778.5 1001.5 777.9C1001.2 777.3 1000.9 775.5 1000.6 774.3C1000.3 773.1 1000.0 772.0 999.8 770.8C999.5 769.7 999.2 768.6 999.0 767.4C998.7 766.3 998.4 765.2 998.1 764.1C997.9 763.0 997.6 761.8 997.3 760.7C997.0 759.6 996.7 758.5 996.5 757.4C996.2 756.3 996.0 755.2 995.7 754.1C995.5 753.0 995.3 751.9 995.1 750.7C995.0 749.6 994.8 748.5 994.8 747.3C994.7 746.2 994.6 745.0 994.7 743.8C994.8 742.6 994.9 741.4 995.4 740.0C995.8 738.7 996.1 736.7 997.6 735.7C999.1 734.8 1002.6 734.0 1004.4 734.3Z"/></g><g filter="url(#e2)"><path d="M994.6 750.0C995.5 751.2 994.6 752.4 994.4 753.5C994.3 754.5 994.0 755.3 993.7 756.1C993.4 756.9 993.1 757.7 992.9 758.4C992.6 759.1 992.3 759.7 992.0 760.3C991.8 761.0 991.5 761.5 991.3 762.1C991.0 762.7 990.8 763.2 990.5 763.8C990.3 764.3 990.1 764.9 989.9 765.4C989.7 766.0 989.6 766.5 989.4 767.1C989.3 767.7 989.1 768.3 989.1 768.9C989.0 769.5 988.9 770.1 988.9 770.8C988.9 771.4 988.9 772.1 989.0 772.9C989.0 773.6 989.6 774.5 989.2 775.2C988.9 775.8 987.5 776.8 986.8 776.8C986.0 776.8 985.3 775.7 984.6 775.1C984.0 774.4 983.4 773.7 982.9 773.0C982.3 772.3 981.9 771.5 981.4 770.6C981.0 769.8 980.7 768.9 980.4 768.0C980.1 767.1 979.8 766.1 979.7 765.2C979.5 764.2 979.5 763.2 979.5 762.2C979.5 761.2 979.5 760.2 979.7 759.2C979.9 758.1 980.1 757.1 980.4 756.1C980.7 755.1 981.1 754.1 981.6 753.1C982.1 752.2 982.7 751.2 983.4 750.3C984.1 749.4 984.8 748.5 985.8 747.8C986.8 747.1 987.9 745.7 989.4 746.0C990.8 746.4 993.8 748.7 994.6 750.0Z"/></g><g filter="url(#e2)"><path d="M981.1 743.7C981.8 744.7 981.3 745.7 981.1 746.5C981.0 747.3 980.6 748.0 980.2 748.6C979.9 749.3 979.4 749.8 979.0 750.4C978.6 750.9 978.1 751.4 977.5 751.9C977.0 752.3 976.5 752.8 975.9 753.1C975.4 753.5 974.8 753.9 974.3 754.2C973.7 754.5 973.1 754.8 972.5 755.1C971.9 755.4 971.3 755.6 970.7 755.8C970.1 756.0 969.5 756.2 968.9 756.4C968.3 756.5 967.7 756.6 967.1 756.7C966.5 756.8 965.9 756.9 965.3 757.0C964.7 757.0 963.9 757.2 963.4 756.9C963.0 756.6 962.6 755.6 962.6 755.1C962.5 754.6 963.1 754.1 963.4 753.6C963.7 753.2 964.0 752.7 964.3 752.3C964.6 751.8 964.8 751.3 965.1 750.9C965.4 750.4 965.7 750.0 966.0 749.5C966.3 749.1 966.5 748.6 966.8 748.2C967.1 747.7 967.4 747.2 967.7 746.8C968.1 746.3 968.4 745.9 968.7 745.4C969.1 745.0 969.4 744.5 969.8 744.1C970.2 743.7 970.6 743.3 971.0 742.9C971.4 742.5 971.9 742.1 972.4 741.7C973.0 741.3 973.5 741.0 974.2 740.7C975.0 740.5 975.7 739.8 976.9 740.3C978.0 740.8 980.4 742.7 981.1 743.7Z"/></g><g filter="url(#e2)"><path d="M977.6 763.9C978.1 764.9 977.5 765.5 977.3 766.1C977.0 766.7 976.7 767.1 976.3 767.6C975.9 768.0 975.5 768.3 975.0 768.6C974.6 768.9 974.1 769.2 973.6 769.4C973.1 769.6 972.6 769.8 972.1 769.9C971.6 770.0 971.0 770.1 970.5 770.1C970.0 770.2 969.5 770.2 969.0 770.1C968.5 770.1 968.0 770.0 967.5 769.9C967.0 769.8 966.5 769.6 966.1 769.5C965.6 769.3 965.2 769.1 964.8 768.8C964.4 768.6 964.0 768.3 963.6 768.0C963.3 767.7 962.7 767.4 962.7 766.9C962.6 766.5 963.0 765.5 963.3 765.1C963.6 764.7 964.1 764.7 964.4 764.6C964.7 764.4 965.0 764.2 965.3 764.1C965.6 763.9 965.8 763.7 966.1 763.5C966.3 763.4 966.5 763.2 966.7 763.0C967.0 762.8 967.2 762.6 967.4 762.4C967.6 762.2 967.8 762.0 968.0 761.9C968.2 761.7 968.4 761.5 968.6 761.3C968.8 761.1 969.0 761.0 969.3 760.8C969.5 760.7 969.8 760.5 970.1 760.4C970.4 760.2 970.7 760.1 971.1 760.0C971.5 759.9 971.9 759.8 972.4 759.8C973.0 759.8 973.5 759.5 974.4 760.1C975.3 760.8 977.1 762.9 977.6 763.9Z"/></g><g filter="url(#e1)"><circle cx="972" cy="732" r="5"/><circle cx="987" cy="774.5" r="5.2"/></g><g filter="url(#e2)"><circle cx="1038" cy="731" r="8.5"/></g><g filter="url(#e2)"><circle cx="1024" cy="729" r="8.5"/></g><g filter="url(#e2)"><circle cx="1012" cy="738" r="8.5"/></g><g filter="url(#e2)"><circle cx="1042" cy="744" r="7.5"/></g><g filter="url(#e2)"><circle cx="1029" cy="747.5" r="11"/></g><g filter="url(#e1)"><path d="M1029.0 748.0C1028.5 747.5 1026.3 746.2 1026.0 745.0C1025.7 743.8 1026.0 741.7 1027.0 741.0C1028.0 740.3 1030.7 740.2 1032.0 741.0C1033.3 741.8 1034.8 744.2 1035.0 746.0C1035.2 747.8 1034.3 750.7 1033.0 752.0C1031.7 753.3 1028.8 754.3 1027.0 754.0C1025.2 753.7 1022.8 750.7 1022.0 750.0" fill="none" stroke="#000" stroke-width="3.4" stroke-linecap="round" stroke-linejoin="round"/></g><g filter="url(#e2)"><path d="M1039.6 733.6C1038.8 732.0 1039.6 730.2 1039.9 728.9C1040.3 727.6 1041.0 726.7 1041.7 725.7C1042.4 724.8 1043.2 724.0 1044.1 723.2C1045.0 722.5 1045.9 721.9 1046.8 721.3C1047.8 720.7 1048.8 720.2 1049.8 719.8C1050.8 719.4 1051.9 719.1 1052.9 718.8C1053.9 718.5 1055.0 718.3 1056.1 718.2C1057.1 718.0 1058.2 717.9 1059.2 717.9C1060.3 717.9 1061.3 717.9 1062.3 718.0C1063.3 718.1 1064.3 718.2 1065.3 718.4C1066.3 718.6 1067.3 718.9 1068.2 719.2C1069.2 719.6 1070.5 720.1 1071.0 720.5C1071.4 720.9 1071.4 721.0 1071.0 721.5C1070.7 722.0 1069.5 722.7 1068.8 723.3C1068.1 723.9 1067.4 724.4 1066.7 724.9C1066.1 725.5 1065.4 726.1 1064.8 726.6C1064.2 727.2 1063.6 727.8 1063.0 728.3C1062.4 728.9 1061.9 729.5 1061.3 730.0C1060.7 730.6 1060.2 731.2 1059.6 731.7C1059.0 732.3 1058.5 732.8 1057.9 733.4C1057.3 733.9 1056.7 734.4 1056.0 734.9C1055.4 735.4 1054.8 735.9 1054.0 736.4C1053.3 736.8 1052.6 737.3 1051.7 737.7C1050.8 738.0 1050.0 738.4 1048.8 738.6C1047.5 738.7 1046.0 739.3 1044.4 738.4C1042.9 737.6 1040.3 735.1 1039.6 733.6Z"/></g><g filter="url(#e1)"><path d="M1064.0 722.0C1066.0 721.0 1072.3 716.3 1076.0 716.0C1079.7 715.7 1084.0 717.3 1086.0 720.0C1088.0 722.7 1088.8 728.3 1088.0 732.0C1087.2 735.7 1082.2 740.3 1081.0 742.0" fill="none" stroke="#000" stroke-width="7.4" stroke-linecap="round" stroke-linejoin="round"/></g><ellipse cx="1341" cy="676" rx="10" ry="8" fill="url(#dk)" opacity="0.9"/><ellipse cx="1366" cy="724" rx="14" ry="6" fill="url(#dk)" opacity="0.8"/><ellipse cx="1414" cy="722" rx="12" ry="8" fill="url(#dk)" opacity="0.9"/><ellipse cx="1426" cy="678" rx="8" ry="5" fill="url(#dk)" opacity="0.6"/><ellipse cx="1328" cy="700" rx="8" ry="14" fill="url(#dk)" opacity="0.7"/><g filter="url(#e2)"><path d="M1387.3 658.2C1384.8 658.3 1383.5 655.7 1382.0 654.5C1380.4 653.3 1379.3 652.2 1378.0 651.1C1376.7 650.1 1375.6 649.1 1374.3 648.2C1373.1 647.3 1371.9 646.5 1370.6 645.7C1369.3 644.9 1368.0 644.2 1366.5 643.5C1365.0 642.8 1363.5 642.1 1361.7 641.6C1360.0 641.0 1358.2 640.5 1356.1 640.1C1354.1 639.7 1352.0 639.3 1349.6 639.1C1347.3 638.9 1344.9 638.8 1342.2 638.9C1339.6 638.9 1336.9 639.0 1334.0 639.3C1331.1 639.6 1328.0 640.0 1324.8 640.5C1321.7 641.0 1316.8 642.8 1314.9 642.3C1312.9 641.9 1311.9 639.2 1313.1 637.7C1314.4 636.1 1319.5 634.4 1322.6 633.0C1325.7 631.6 1328.7 630.4 1331.7 629.4C1334.7 628.3 1337.6 627.4 1340.5 626.6C1343.4 625.9 1346.2 625.3 1349.0 624.9C1351.8 624.4 1354.6 624.2 1357.3 624.1C1360.0 624.0 1362.7 624.1 1365.3 624.4C1367.9 624.8 1370.4 625.3 1372.9 626.0C1375.4 626.8 1377.8 627.8 1380.0 629.0C1382.3 630.2 1384.5 631.6 1386.4 633.3C1388.4 634.9 1390.2 636.8 1391.7 638.9C1393.2 641.0 1394.6 643.2 1395.5 645.7C1396.3 648.2 1398.1 651.7 1396.7 653.8C1395.4 655.9 1389.7 658.1 1387.3 658.2Z"/></g><g filter="url(#e2)"><path d="M1323.6 642.9C1324.9 644.6 1323.8 646.1 1323.8 647.4C1323.7 648.7 1323.4 649.6 1323.2 650.6C1323.0 651.5 1322.7 652.3 1322.5 653.1C1322.3 653.9 1322.0 654.6 1321.8 655.4C1321.6 656.1 1321.3 656.7 1321.1 657.5C1320.9 658.2 1320.7 658.8 1320.6 659.6C1320.4 660.3 1320.2 661.1 1320.1 661.9C1320.0 662.8 1320.0 663.7 1320.0 664.6C1320.0 665.5 1320.0 666.6 1320.2 667.6C1320.3 668.7 1320.5 669.8 1320.8 671.0C1321.1 672.1 1321.5 673.3 1321.9 674.6C1322.4 675.9 1323.7 677.5 1323.5 678.7C1323.2 679.8 1321.7 681.3 1320.5 681.3C1319.4 681.3 1317.8 679.7 1316.5 678.7C1315.3 677.8 1314.2 676.8 1313.1 675.7C1312.0 674.7 1311.0 673.6 1310.1 672.4C1309.2 671.2 1308.3 670.0 1307.6 668.7C1306.9 667.4 1306.2 666.1 1305.7 664.7C1305.1 663.3 1304.7 661.9 1304.4 660.4C1304.2 658.9 1304.0 657.4 1304.0 655.9C1304.0 654.4 1304.1 652.8 1304.4 651.3C1304.7 649.8 1305.2 648.3 1305.8 646.9C1306.4 645.4 1307.1 644.0 1308.1 642.8C1309.0 641.5 1310.0 640.2 1311.4 639.3C1312.8 638.3 1314.3 636.5 1316.4 637.1C1318.4 637.7 1322.4 641.2 1323.6 642.9Z"/></g><g filter="url(#e2)"><path d="M1381.6 658.7C1379.6 659.4 1378.2 657.7 1376.9 657.2C1375.5 656.6 1374.5 656.0 1373.4 655.4C1372.3 654.8 1371.3 654.3 1370.2 653.8C1369.2 653.3 1368.2 652.8 1367.2 652.3C1366.2 651.9 1365.1 651.4 1364.0 651.0C1362.9 650.6 1361.7 650.2 1360.5 649.9C1359.2 649.6 1357.9 649.3 1356.5 649.1C1355.1 648.9 1353.6 648.8 1352.0 648.7C1350.4 648.6 1348.7 648.6 1347.0 648.7C1345.2 648.8 1343.4 649.0 1341.4 649.2C1339.5 649.5 1337.5 649.9 1335.4 650.3C1333.3 650.7 1330.2 652.2 1328.9 651.8C1327.5 651.5 1326.5 649.4 1327.1 648.2C1327.8 646.9 1331.0 645.4 1333.0 644.3C1334.9 643.1 1336.9 642.0 1338.8 641.1C1340.8 640.1 1342.7 639.3 1344.7 638.5C1346.6 637.8 1348.5 637.2 1350.5 636.6C1352.4 636.1 1354.3 635.7 1356.3 635.5C1358.2 635.2 1360.1 635.1 1362.0 635.1C1363.9 635.1 1365.9 635.2 1367.7 635.6C1369.6 635.9 1371.5 636.4 1373.2 637.0C1375.0 637.7 1376.8 638.5 1378.4 639.5C1380.0 640.4 1381.6 641.6 1382.9 642.9C1384.3 644.3 1385.6 645.7 1386.5 647.4C1387.5 649.2 1389.3 651.4 1388.4 653.3C1387.6 655.2 1383.5 658.1 1381.6 658.7Z"/></g><g filter="url(#e2)"><path d="M1332.9 652.1C1333.9 653.3 1333.3 654.3 1333.4 655.2C1333.5 656.1 1333.3 656.7 1333.2 657.4C1333.2 658.0 1333.0 658.6 1332.9 659.1C1332.8 659.6 1332.7 660.1 1332.5 660.6C1332.4 661.1 1332.2 661.6 1332.1 662.1C1332.0 662.6 1331.8 663.0 1331.7 663.6C1331.6 664.1 1331.4 664.6 1331.4 665.2C1331.3 665.8 1331.2 666.4 1331.2 667.1C1331.2 667.8 1331.2 668.5 1331.2 669.2C1331.3 669.9 1331.4 670.7 1331.6 671.6C1331.8 672.4 1332.0 673.2 1332.2 674.1C1332.5 675.1 1333.4 676.2 1333.1 677.0C1332.9 677.8 1331.7 678.9 1330.9 679.0C1330.0 679.0 1328.9 677.8 1328.1 677.2C1327.2 676.5 1326.4 675.8 1325.6 675.1C1324.9 674.4 1324.2 673.6 1323.5 672.8C1322.8 672.0 1322.2 671.1 1321.7 670.2C1321.2 669.4 1320.7 668.4 1320.3 667.5C1319.9 666.5 1319.5 665.5 1319.3 664.4C1319.1 663.4 1318.9 662.3 1318.9 661.3C1318.8 660.2 1318.9 659.1 1319.0 658.0C1319.2 657.0 1319.5 655.9 1319.8 654.9C1320.2 653.9 1320.7 652.9 1321.3 652.0C1321.9 651.1 1322.6 650.1 1323.6 649.5C1324.5 648.8 1325.6 647.5 1327.1 647.9C1328.7 648.4 1331.8 650.9 1332.9 652.1Z"/></g><g filter="url(#e2)"><path d="M1374.2 658.7C1373.0 659.6 1371.6 658.8 1370.5 658.7C1369.4 658.6 1368.6 658.3 1367.7 658.1C1366.8 658.0 1366.0 657.7 1365.2 657.5C1364.4 657.3 1363.6 657.1 1362.9 657.0C1362.1 656.8 1361.4 656.6 1360.6 656.5C1359.9 656.3 1359.1 656.2 1358.3 656.1C1357.5 656.0 1356.7 655.9 1355.9 655.9C1355.1 655.9 1354.2 655.9 1353.3 655.9C1352.4 656.0 1351.5 656.1 1350.5 656.2C1349.5 656.4 1348.5 656.6 1347.5 656.9C1346.5 657.2 1345.4 657.5 1344.3 657.9C1343.2 658.3 1341.8 659.4 1340.9 659.2C1340.0 659.0 1339.0 657.7 1339.1 656.8C1339.2 655.9 1340.8 654.7 1341.7 653.8C1342.6 652.9 1343.5 652.0 1344.5 651.2C1345.5 650.4 1346.5 649.7 1347.5 649.0C1348.5 648.3 1349.6 647.7 1350.7 647.2C1351.8 646.7 1352.9 646.2 1354.1 645.8C1355.3 645.4 1356.5 645.1 1357.7 644.9C1358.9 644.7 1360.1 644.6 1361.4 644.6C1362.6 644.5 1363.9 644.6 1365.1 644.8C1366.4 645.0 1367.6 645.3 1368.8 645.7C1370.0 646.1 1371.2 646.6 1372.3 647.3C1373.4 648.0 1374.6 648.7 1375.5 649.7C1376.4 650.7 1378.0 651.8 1377.8 653.3C1377.6 654.8 1375.4 657.8 1374.2 658.7Z"/></g><g filter="url(#e2)"><path d="M1322.1 681.1C1322.2 683.6 1319.8 684.7 1318.9 686.0C1317.9 687.4 1317.0 688.2 1316.2 689.2C1315.4 690.1 1314.8 690.8 1314.3 691.4C1313.7 692.1 1313.3 692.6 1312.9 693.1C1312.5 693.7 1312.1 694.0 1311.8 694.6C1311.4 695.1 1311.1 695.5 1310.8 696.2C1310.5 696.8 1310.1 697.5 1309.9 698.4C1309.7 699.3 1309.6 700.4 1309.6 701.6C1309.5 702.8 1309.6 704.2 1309.9 705.7C1310.1 707.2 1310.5 708.8 1311.0 710.6C1311.6 712.3 1312.3 714.1 1313.1 716.1C1313.9 718.1 1316.1 720.8 1315.9 722.4C1315.8 724.0 1313.7 725.9 1312.1 725.6C1310.5 725.3 1308.2 722.4 1306.4 720.8C1304.7 719.2 1303.2 717.6 1301.8 715.9C1300.3 714.2 1299.0 712.6 1297.9 710.8C1296.7 709.1 1295.7 707.4 1294.9 705.5C1294.1 703.7 1293.4 701.8 1292.9 699.9C1292.5 697.9 1292.2 695.9 1292.2 693.8C1292.3 691.8 1292.5 689.7 1293.1 687.7C1293.6 685.7 1294.5 683.8 1295.6 682.0C1296.6 680.2 1298.0 678.5 1299.5 677.1C1301.0 675.6 1302.7 674.3 1304.6 673.3C1306.4 672.3 1308.4 671.3 1310.7 670.9C1312.9 670.5 1316.0 669.2 1317.9 670.9C1319.8 672.6 1321.9 678.5 1322.1 681.1Z"/></g><g filter="url(#e2)"><path d="M1314.4 718.4C1315.9 717.0 1317.2 717.8 1318.3 717.8C1319.4 717.7 1320.2 717.9 1321.1 718.0C1322.0 718.1 1322.7 718.3 1323.5 718.5C1324.2 718.6 1324.9 718.8 1325.7 719.0C1326.4 719.2 1327.1 719.4 1327.8 719.5C1328.6 719.7 1329.3 719.9 1330.1 720.0C1330.9 720.2 1331.7 720.3 1332.6 720.4C1333.4 720.5 1334.3 720.6 1335.3 720.6C1336.2 720.6 1337.2 720.6 1338.3 720.5C1339.3 720.4 1340.4 720.3 1341.5 720.1C1342.6 719.9 1343.8 719.6 1345.0 719.4C1346.2 719.1 1347.8 718.0 1348.9 718.4C1349.9 718.7 1351.2 720.5 1351.1 721.6C1351.1 722.7 1349.3 723.9 1348.4 725.0C1347.4 726.0 1346.3 726.9 1345.3 727.8C1344.2 728.7 1343.1 729.5 1342.0 730.2C1340.9 731.0 1339.7 731.7 1338.5 732.3C1337.3 732.9 1336.1 733.4 1334.8 733.9C1333.5 734.3 1332.2 734.7 1330.9 735.0C1329.6 735.2 1328.2 735.4 1326.9 735.4C1325.5 735.5 1324.1 735.4 1322.8 735.2C1321.4 735.0 1320.1 734.7 1318.8 734.3C1317.5 733.8 1316.2 733.3 1315.0 732.5C1313.8 731.8 1312.7 731.0 1311.7 729.9C1310.8 728.7 1309.1 727.6 1309.6 725.6C1310.0 723.7 1313.0 719.7 1314.4 718.4Z"/></g><g filter="url(#e2)"><path d="M1330.1 685.6C1330.4 687.4 1328.7 688.4 1328.0 689.5C1327.3 690.6 1326.6 691.4 1326.1 692.2C1325.5 693.0 1325.0 693.6 1324.5 694.2C1324.1 694.8 1323.7 695.3 1323.4 695.8C1323.1 696.3 1322.8 696.7 1322.5 697.1C1322.3 697.5 1322.0 697.9 1321.8 698.3C1321.6 698.8 1321.4 699.2 1321.2 699.8C1321.1 700.4 1321.0 701.0 1320.9 701.7C1320.9 702.5 1321.0 703.3 1321.1 704.2C1321.3 705.2 1321.5 706.2 1321.9 707.3C1322.3 708.3 1322.8 709.5 1323.4 710.7C1323.9 711.9 1325.5 713.5 1325.4 714.6C1325.3 715.7 1323.7 717.4 1322.6 717.4C1321.4 717.4 1319.8 715.7 1318.6 714.7C1317.3 713.8 1316.2 712.8 1315.2 711.7C1314.2 710.7 1313.2 709.6 1312.4 708.5C1311.5 707.4 1310.8 706.2 1310.2 704.9C1309.6 703.7 1309.0 702.3 1308.7 701.0C1308.4 699.6 1308.2 698.1 1308.2 696.7C1308.2 695.3 1308.4 693.8 1308.7 692.3C1309.1 690.9 1309.7 689.5 1310.4 688.2C1311.1 686.9 1312.0 685.6 1313.0 684.5C1314.0 683.4 1315.1 682.4 1316.4 681.5C1317.7 680.6 1319.0 679.7 1320.6 679.2C1322.2 678.7 1324.4 677.4 1325.9 678.4C1327.5 679.5 1329.7 683.7 1330.1 685.6Z"/></g><g filter="url(#e2)"><path d="M1323.9 711.6C1324.9 710.8 1325.6 711.4 1326.2 711.4C1326.9 711.4 1327.3 711.5 1327.8 711.6C1328.3 711.7 1328.7 711.8 1329.0 711.9C1329.4 712.0 1329.7 712.1 1330.1 712.2C1330.4 712.4 1330.7 712.5 1331.0 712.6C1331.4 712.7 1331.7 712.9 1332.0 713.0C1332.3 713.1 1332.7 713.2 1333.1 713.3C1333.4 713.4 1333.8 713.5 1334.3 713.6C1334.7 713.6 1335.2 713.7 1335.7 713.7C1336.2 713.7 1336.7 713.7 1337.3 713.6C1337.8 713.5 1338.4 713.4 1339.1 713.3C1339.7 713.2 1340.4 712.5 1341.1 712.8C1341.7 713.1 1342.8 714.5 1342.9 715.2C1343.0 715.9 1342.1 716.5 1341.6 717.1C1341.1 717.8 1340.6 718.3 1340.1 718.8C1339.5 719.4 1338.9 719.9 1338.3 720.3C1337.7 720.8 1337.1 721.2 1336.4 721.5C1335.7 721.9 1335.0 722.2 1334.3 722.4C1333.5 722.7 1332.8 722.9 1332.0 723.0C1331.2 723.1 1330.4 723.2 1329.6 723.2C1328.8 723.1 1328.0 723.0 1327.3 722.9C1326.5 722.7 1325.7 722.4 1325.0 722.1C1324.2 721.8 1323.5 721.4 1322.9 720.9C1322.2 720.4 1321.6 719.8 1321.1 719.1C1320.6 718.3 1319.6 717.6 1320.1 716.4C1320.6 715.1 1322.9 712.5 1323.9 711.6Z"/></g><g filter="url(#e2)"><path d="M1337.8 690.4C1338.2 691.7 1337.0 692.6 1336.6 693.5C1336.2 694.3 1335.7 694.9 1335.3 695.5C1334.9 696.2 1334.6 696.7 1334.3 697.1C1334.0 697.6 1333.7 698.0 1333.5 698.3C1333.3 698.7 1333.1 699.0 1332.9 699.2C1332.8 699.5 1332.6 699.7 1332.5 700.0C1332.3 700.2 1332.2 700.4 1332.1 700.7C1332.0 701.0 1331.9 701.3 1331.8 701.7C1331.8 702.1 1331.8 702.5 1331.9 703.0C1332.0 703.5 1332.1 704.1 1332.4 704.7C1332.6 705.3 1333.0 705.9 1333.4 706.6C1333.8 707.3 1334.9 708.0 1334.9 708.8C1334.8 709.6 1333.9 711.0 1333.1 711.2C1332.4 711.4 1331.2 710.5 1330.3 710.0C1329.5 709.6 1328.7 709.1 1327.9 708.6C1327.2 708.0 1326.5 707.4 1325.8 706.7C1325.2 706.1 1324.6 705.4 1324.2 704.6C1323.7 703.8 1323.3 702.9 1323.0 701.9C1322.7 701.0 1322.6 700.0 1322.5 699.0C1322.5 698.1 1322.6 697.0 1322.8 696.1C1323.0 695.1 1323.4 694.1 1323.8 693.2C1324.3 692.3 1324.8 691.4 1325.5 690.6C1326.1 689.8 1326.8 689.0 1327.7 688.3C1328.5 687.7 1329.4 687.0 1330.5 686.5C1331.6 686.1 1333.0 684.9 1334.2 685.6C1335.4 686.2 1337.4 689.1 1337.8 690.4Z"/></g><g filter="url(#e2)"><path d="M1437.0 684.0C1435.2 686.2 1430.5 693.2 1426.0 697.0C1421.5 700.8 1416.3 704.5 1410.0 707.0C1403.7 709.5 1395.0 711.7 1388.0 712.0C1381.0 712.3 1374.0 711.2 1368.0 709.0C1362.0 706.8 1356.0 703.3 1352.0 699.0C1348.0 694.7 1345.0 688.3 1344.0 683.0C1343.0 677.7 1344.0 671.3 1346.0 667.0C1348.0 662.7 1352.0 659.3 1356.0 657.0C1360.0 654.7 1365.5 653.0 1370.0 653.0C1374.5 653.0 1379.7 654.5 1383.0 657.0C1386.3 659.5 1389.0 664.0 1390.0 668.0C1391.0 672.0 1390.5 677.5 1389.0 681.0C1387.5 684.5 1384.2 687.7 1381.0 689.0C1377.8 690.3 1372.7 690.3 1370.0 689.0C1367.3 687.7 1365.8 682.3 1365.0 681.0" fill="none" stroke="#000" stroke-width="15.4" stroke-linecap="round" stroke-linejoin="round"/></g><g filter="url(#e2)"><circle cx="1373.5" cy="679" r="11"/></g><g filter="url(#e2)"><circle cx="1393.5" cy="654" r="8.5"/><circle cx="1353.5" cy="716" r="8.5"/></g><g filter="url(#e1)"><path d="M1403.0 661.8C1403.0 660.6 1404.5 659.8 1405.4 659.1C1406.4 658.3 1407.4 657.9 1408.5 657.4C1409.5 656.9 1410.6 656.6 1411.7 656.3C1412.8 656.0 1413.9 655.8 1415.1 655.7C1416.2 655.6 1417.4 655.5 1418.5 655.5C1419.7 655.5 1420.8 655.6 1422.0 655.7C1423.2 655.8 1424.3 656.0 1425.5 656.2C1426.6 656.4 1427.8 656.7 1428.9 657.0C1430.1 657.3 1431.2 657.7 1432.3 658.1C1433.5 658.5 1434.6 659.0 1435.7 659.5C1436.8 660.0 1438.0 660.5 1439.1 661.1C1440.2 661.7 1441.9 662.4 1442.4 663.1C1442.8 663.7 1442.4 664.7 1441.6 664.9C1440.9 665.2 1439.2 664.6 1438.0 664.5C1436.8 664.3 1435.6 664.2 1434.5 664.1C1433.4 664.0 1432.3 663.9 1431.2 663.9C1430.1 663.9 1429.0 663.9 1428.0 663.9C1426.9 663.9 1425.9 664.0 1424.9 664.0C1423.9 664.1 1423.0 664.2 1422.0 664.3C1421.0 664.4 1420.1 664.6 1419.2 664.7C1418.3 664.9 1417.4 665.0 1416.5 665.2C1415.6 665.4 1414.7 665.5 1413.8 665.7C1412.9 665.9 1412.0 666.0 1411.1 666.2C1410.2 666.3 1409.3 666.5 1408.3 666.5C1407.3 666.5 1405.9 667.0 1405.0 666.2C1404.2 665.4 1402.9 663.0 1403.0 661.8Z"/></g><g filter="url(#e1)"><path d="M1405.7 665.6C1406.1 664.5 1407.7 664.2 1408.7 663.8C1409.8 663.3 1410.9 663.2 1411.9 663.0C1413.0 662.8 1414.1 662.7 1415.2 662.7C1416.4 662.7 1417.5 662.7 1418.6 662.8C1419.7 662.8 1420.9 662.9 1422.0 663.1C1423.1 663.3 1424.3 663.5 1425.4 663.7C1426.6 663.9 1427.7 664.2 1428.9 664.5C1430.0 664.8 1431.2 665.1 1432.3 665.5C1433.5 665.8 1434.6 666.2 1435.8 666.6C1437.0 667.0 1438.1 667.4 1439.3 667.9C1440.5 668.3 1441.6 668.8 1442.8 669.3C1443.9 669.9 1445.8 670.4 1446.3 671.0C1446.8 671.6 1446.5 672.7 1445.7 673.0C1445.0 673.3 1443.2 672.8 1441.9 672.8C1440.7 672.7 1439.5 672.6 1438.3 672.6C1437.1 672.5 1435.9 672.4 1434.7 672.4C1433.5 672.4 1432.4 672.3 1431.2 672.3C1430.1 672.3 1429.0 672.3 1427.8 672.3C1426.7 672.3 1425.6 672.3 1424.6 672.3C1423.5 672.3 1422.4 672.3 1421.4 672.3C1420.3 672.3 1419.3 672.4 1418.3 672.4C1417.3 672.3 1416.3 672.3 1415.2 672.3C1414.2 672.3 1413.3 672.2 1412.3 672.1C1411.3 672.0 1410.3 672.0 1409.3 671.7C1408.3 671.4 1406.9 671.5 1406.3 670.4C1405.7 669.4 1405.3 666.7 1405.7 665.6Z"/></g><g filter="url(#e1)"><path d="M1410.0 671.8C1410.5 670.9 1411.8 670.9 1412.8 670.6C1413.7 670.3 1414.6 670.3 1415.5 670.2C1416.4 670.2 1417.4 670.2 1418.3 670.3C1419.2 670.3 1420.1 670.4 1421.0 670.6C1421.9 670.7 1422.8 670.9 1423.6 671.1C1424.5 671.3 1425.4 671.6 1426.2 671.8C1427.1 672.1 1427.9 672.4 1428.8 672.7C1429.6 673.0 1430.4 673.4 1431.2 673.7C1432.1 674.1 1432.9 674.5 1433.6 674.9C1434.4 675.3 1435.2 675.7 1436.0 676.1C1436.7 676.6 1437.5 677.0 1438.2 677.5C1439.0 678.0 1440.2 678.5 1440.4 679.1C1440.6 679.6 1440.2 680.7 1439.6 680.9C1439.1 681.2 1437.9 680.7 1437.1 680.6C1436.2 680.4 1435.4 680.3 1434.6 680.2C1433.7 680.1 1432.9 680.0 1432.1 679.9C1431.3 679.8 1430.5 679.7 1429.6 679.6C1428.8 679.5 1428.0 679.4 1427.2 679.4C1426.4 679.3 1425.6 679.2 1424.8 679.2C1424.0 679.1 1423.1 679.0 1422.3 679.0C1421.5 678.9 1420.7 678.8 1419.9 678.8C1419.1 678.7 1418.3 678.6 1417.5 678.5C1416.7 678.4 1415.8 678.3 1415.0 678.1C1414.2 677.9 1413.4 677.8 1412.5 677.5C1411.7 677.2 1410.4 677.1 1410.0 676.2C1409.6 675.2 1409.5 672.7 1410.0 671.8Z"/></g><g filter="url(#e1)"><circle cx="1404.5" cy="662.5" r="6.3"/></g><g filter="url(#e2)"><path d="M1456.0 688.0C1454.2 688.5 1448.5 689.0 1445.0 691.0C1441.5 693.0 1437.3 696.3 1435.0 700.0C1432.7 703.7 1430.8 708.5 1431.0 713.0C1431.2 717.5 1433.3 723.2 1436.0 727.0C1438.7 730.8 1445.2 734.5 1447.0 736.0" fill="none" stroke="#000" stroke-width="11.4" stroke-linecap="round" stroke-linejoin="round"/><circle cx="1457" cy="687.5" r="8"/><path d="M1458.0 740.0C1455.7 740.3 1448.7 742.8 1444.0 742.0C1439.3 741.2 1434.5 738.2 1430.0 735.0C1425.5 731.8 1420.7 726.2 1417.0 723.0C1413.3 719.8 1409.5 717.2 1408.0 716.0" fill="none" stroke="#000" stroke-width="11.4" stroke-linecap="round" stroke-linejoin="round"/><circle cx="1458" cy="739.5" r="9"/><path d="M1452.0 765.0C1449.8 765.8 1443.3 770.5 1439.0 770.0C1434.7 769.5 1429.8 765.7 1426.0 762.0C1422.2 758.3 1419.5 752.2 1416.0 748.0C1412.5 743.8 1409.2 740.2 1405.0 737.0C1400.8 733.8 1393.3 730.3 1391.0 729.0" fill="none" stroke="#000" stroke-width="12.4" stroke-linecap="round" stroke-linejoin="round"/><circle cx="1453" cy="764.5" r="10"/></g><g filter="url(#e2)"><path d="M1417.3 769.1C1415.6 768.9 1415.1 767.1 1414.3 766.0C1413.4 765.0 1412.8 763.9 1412.1 762.8C1411.4 761.7 1410.8 760.6 1410.1 759.5C1409.5 758.4 1408.8 757.2 1408.2 756.1C1407.5 754.9 1406.8 753.7 1406.1 752.5C1405.4 751.3 1404.6 750.1 1403.8 748.9C1403.1 747.7 1402.2 746.4 1401.4 745.2C1400.5 743.9 1399.6 742.7 1398.6 741.4C1397.7 740.1 1396.7 738.9 1395.6 737.6C1394.6 736.3 1393.5 735.0 1392.3 733.7C1391.2 732.4 1389.9 731.1 1388.7 729.7C1387.4 728.4 1385.1 726.9 1384.8 725.6C1384.6 724.4 1385.9 722.5 1387.2 722.4C1388.4 722.3 1390.7 724.1 1392.3 725.0C1394.0 725.9 1395.6 726.9 1397.2 727.9C1398.8 728.9 1400.3 729.9 1401.7 730.9C1403.2 732.0 1404.6 733.0 1406.0 734.1C1407.4 735.2 1408.7 736.4 1410.0 737.5C1411.3 738.7 1412.5 739.9 1413.7 741.1C1414.8 742.3 1415.9 743.6 1417.0 744.9C1418.0 746.2 1419.0 747.5 1419.8 748.8C1420.7 750.2 1421.5 751.6 1422.3 753.0C1423.0 754.4 1423.6 755.9 1424.1 757.4C1424.6 758.9 1425.0 760.4 1425.1 762.0C1425.2 763.6 1426.0 765.7 1424.7 766.9C1423.4 768.1 1419.0 769.2 1417.3 769.1Z"/></g><g filter="url(#e2)"><path d="M1386.3 728.9C1385.4 729.9 1384.5 729.1 1383.7 729.1C1383.0 729.1 1382.4 729.0 1381.8 729.0C1381.3 728.9 1380.8 728.8 1380.3 728.8C1379.8 728.7 1379.4 728.6 1379.0 728.6C1378.6 728.5 1378.3 728.5 1377.9 728.5C1377.5 728.4 1377.2 728.4 1376.8 728.4C1376.5 728.4 1376.1 728.4 1375.7 728.4C1375.3 728.5 1374.8 728.5 1374.4 728.7C1373.9 728.8 1373.4 729.0 1372.9 729.2C1372.4 729.4 1371.9 729.7 1371.3 730.1C1370.8 730.5 1370.2 730.9 1369.6 731.4C1369.0 731.9 1368.6 733.1 1367.7 733.0C1366.8 732.9 1364.7 731.8 1364.3 731.0C1363.8 730.2 1364.8 729.1 1365.2 728.3C1365.5 727.4 1365.9 726.6 1366.4 725.8C1366.8 725.0 1367.3 724.2 1367.8 723.5C1368.4 722.8 1369.0 722.2 1369.6 721.5C1370.3 720.9 1371.0 720.4 1371.7 719.9C1372.5 719.4 1373.3 719.0 1374.2 718.6C1375.0 718.3 1375.9 718.0 1376.8 717.8C1377.7 717.7 1378.7 717.6 1379.6 717.6C1380.6 717.6 1381.5 717.8 1382.5 718.0C1383.4 718.2 1384.3 718.5 1385.2 718.9C1386.0 719.4 1386.9 719.8 1387.7 720.5C1388.4 721.2 1389.9 721.7 1389.7 723.1C1389.4 724.5 1387.3 727.9 1386.3 728.9Z"/></g><g filter="url(#e1)"><circle cx="1368.5" cy="735" r="7"/><path d="M1406.0 770.0C1404.7 767.3 1401.3 758.5 1398.0 754.0C1394.7 749.5 1388.0 744.8 1386.0 743.0" fill="none" stroke="#000" stroke-width="6.9" stroke-linecap="round" stroke-linejoin="round"/></g><g filter="url(#e2)"><path d="M1361.0 724.4C1361.2 725.8 1360.4 726.6 1360.0 727.4C1359.6 728.3 1359.1 728.7 1358.6 729.3C1358.2 729.9 1357.6 730.3 1357.1 730.8C1356.6 731.3 1356.0 731.7 1355.4 732.2C1354.8 732.6 1354.2 733.1 1353.6 733.6C1353.0 734.0 1352.3 734.5 1351.7 735.0C1351.0 735.6 1350.3 736.1 1349.6 736.7C1348.9 737.3 1348.2 737.9 1347.5 738.5C1346.8 739.2 1346.1 739.9 1345.3 740.6C1344.6 741.3 1343.9 742.1 1343.1 742.9C1342.4 743.7 1341.7 744.6 1340.9 745.4C1340.1 746.3 1339.0 747.8 1338.5 748.2C1337.9 748.6 1337.6 748.5 1337.5 747.8C1337.4 747.1 1337.7 745.3 1337.9 744.1C1338.0 742.9 1338.3 741.7 1338.5 740.6C1338.8 739.4 1339.1 738.3 1339.4 737.2C1339.7 736.1 1340.1 735.0 1340.5 733.9C1340.9 732.9 1341.3 731.8 1341.8 730.9C1342.3 729.9 1342.8 728.9 1343.3 728.0C1343.9 727.0 1344.5 726.1 1345.1 725.3C1345.8 724.5 1346.5 723.7 1347.2 722.9C1348.0 722.2 1348.8 721.5 1349.6 721.0C1350.5 720.4 1351.4 719.8 1352.4 719.5C1353.3 719.1 1354.3 718.7 1355.4 718.7C1356.5 718.8 1358.0 718.6 1359.0 719.6C1359.9 720.5 1360.9 723.1 1361.0 724.4Z"/></g><g filter="url(#e2)"><path d="M1319.0 749.0C1320.3 748.3 1325.3 747.0 1327.0 745.0C1328.7 743.0 1329.8 739.3 1329.0 737.0C1328.2 734.7 1325.5 732.0 1322.0 731.0C1318.5 730.0 1313.3 730.2 1308.0 731.0C1302.7 731.8 1296.2 734.0 1290.0 736.0C1283.8 738.0 1277.0 741.2 1271.0 743.0C1265.0 744.8 1259.2 747.3 1254.0 747.0C1248.8 746.7 1242.3 742.0 1240.0 741.0" fill="none" stroke="#000" stroke-width="9.4" stroke-linecap="round" stroke-linejoin="round"/><circle cx="1238" cy="739.5" r="6.8"/><path d="M1225.0 749.0C1226.0 748.0 1230.5 745.2 1231.0 743.0C1231.5 740.8 1230.5 737.4 1228.0 736.0C1225.5 734.6 1221.0 734.0 1216.0 734.5C1211.0 735.0 1204.3 737.2 1198.0 739.0C1191.7 740.8 1184.3 743.5 1178.0 745.0C1171.7 746.5 1164.2 747.8 1160.0 748.0C1155.8 748.2 1154.2 746.3 1153.0 746.0" fill="none" stroke="#000" stroke-width="8.9" stroke-linecap="round" stroke-linejoin="round"/><circle cx="1151.5" cy="746" r="6.8"/><path d="M1135.0 753.0C1136.2 752.0 1141.3 749.2 1142.0 747.0C1142.7 744.8 1141.7 741.4 1139.0 740.0C1136.3 738.6 1131.2 738.0 1126.0 738.5C1120.8 739.0 1113.7 741.2 1108.0 743.0C1102.3 744.8 1096.0 748.2 1092.0 749.0C1088.0 749.8 1085.3 748.2 1084.0 748.0" fill="none" stroke="#000" stroke-width="8.9" stroke-linecap="round" stroke-linejoin="round"/><circle cx="1083" cy="747.5" r="6.2"/></g><g filter="url(#e1)"><circle cx="1071" cy="756" r="5.3"/><circle cx="1058.5" cy="755" r="5.3"/><circle cx="1046.5" cy="752.5" r="5.5"/></g></g>
<g clip-path="url(#lhalf)"><path d="M963.0 408.0C950.5 408.3 918.8 411.3 900.0 410.0C881.2 408.7 866.7 403.0 850.0 400.0C833.3 397.0 815.0 389.5 800.0 392.0C785.0 394.5 771.7 406.2 760.0 415.0C748.3 423.8 737.7 432.5 730.0 445.0C722.3 457.5 717.0 475.8 714.0 490.0C711.0 504.2 711.0 515.8 712.0 530.0C713.0 544.2 714.5 559.7 720.0 575.0C725.5 590.3 734.2 607.8 745.0 622.0C755.8 636.2 770.8 649.7 785.0 660.0C799.2 670.3 814.2 677.3 830.0 684.0C845.8 690.7 863.3 699.0 880.0 700.0C896.7 701.0 916.2 691.7 930.0 690.0C943.8 688.3 955.5 690.0 963.0 690.0C970.5 690.0 973.0 737.0 975.0 690.0C977.0 643.0 977.0 455.0 975.0 408.0C973.0 361.0 975.5 407.7 963.0 408.0Z" fill="#606060" opacity="1"/><path d="M963.0 476.4C956.6 479.0 945.6 482.5 936.3 485.5C927.0 488.5 917.0 491.4 907.3 494.6C897.7 497.9 888.0 503.9 878.3 505.0C868.7 506.1 859.0 503.9 849.3 501.1C839.7 498.3 828.1 493.5 820.3 488.1C812.6 482.7 809.3 473.4 802.9 468.6C796.5 463.8 787.8 459.5 782.0 459.5C776.2 459.5 771.0 462.8 768.1 468.6C765.2 474.5 766.2 487.5 764.6 494.6C763.1 501.8 761.0 505.4 758.8 511.5C756.7 517.6 752.8 524.5 751.9 531.0C750.9 537.5 750.3 544.0 753.0 550.5C755.7 557.0 764.3 563.1 768.1 570.0C772.0 576.9 772.4 585.6 776.2 592.1C780.1 598.6 784.0 605.1 791.3 609.0C798.7 612.9 812.6 612.2 820.3 615.5C828.1 618.8 831.9 623.1 837.7 628.5C843.5 633.9 848.4 643.9 855.1 648.0C861.9 652.1 869.6 654.3 878.3 653.2C887.0 652.1 897.7 641.3 907.3 641.5C917.0 641.7 927.0 650.2 936.3 654.5C945.6 658.8 956.6 665.2 963.0 667.5C969.4 669.8 973.0 700.9 975.0 668.0C977.0 635.1 977.0 501.9 975.0 470.0C973.0 438.1 969.4 473.8 963.0 476.4Z" fill="#8a8a8a" opacity="1" filter="url(#b4)"/><path d="M963.0 487.2C956.9 488.9 947.0 492.6 938.4 495.2C929.8 497.9 920.6 500.4 911.6 503.3C902.7 506.2 893.8 511.5 884.9 512.5C876.0 513.5 867.1 511.5 858.1 509.1C849.2 506.6 838.5 502.3 831.4 497.6C824.3 492.8 821.2 484.5 815.3 480.3C809.5 476.1 801.4 472.2 796.1 472.2C790.7 472.2 785.9 475.1 783.2 480.3C780.6 485.5 781.5 497.0 780.0 503.3C778.6 509.6 776.6 512.9 774.7 518.2C772.7 523.6 769.2 529.8 768.3 535.5C767.4 541.2 766.8 547.0 769.3 552.8C771.8 558.5 779.7 563.9 783.2 570.0C786.8 576.1 787.2 583.8 790.7 589.5C794.3 595.3 797.9 601.0 804.6 604.5C811.4 608.0 824.3 607.4 831.4 610.2C838.5 613.1 842.1 617.0 847.4 621.8C852.8 626.5 857.2 635.4 863.5 639.0C869.7 642.6 876.9 644.6 884.9 643.6C892.9 642.6 902.7 633.1 911.6 633.2C920.6 633.4 929.8 640.9 938.4 644.8C947.0 648.6 956.9 654.2 963.0 656.2C969.1 658.3 973.0 685.5 975.0 657.0C977.0 628.5 977.0 513.3 975.0 485.0C973.0 456.7 969.1 485.5 963.0 487.2Z" fill="#a2a2a2" opacity="1"/><path d="M963.0 498.0C957.2 499.2 948.0 502.7 940.0 505.0C932.0 507.3 923.3 509.5 915.0 512.0C906.7 514.5 898.3 519.2 890.0 520.0C881.7 520.8 873.3 519.2 865.0 517.0C856.7 514.8 846.7 511.2 840.0 507.0C833.3 502.8 830.5 495.7 825.0 492.0C819.5 488.3 812.0 485.0 807.0 485.0C802.0 485.0 797.5 487.5 795.0 492.0C792.5 496.5 793.3 506.5 792.0 512.0C790.7 517.5 788.8 520.3 787.0 525.0C785.2 529.7 781.8 535.0 781.0 540.0C780.2 545.0 779.7 550.0 782.0 555.0C784.3 560.0 791.7 564.7 795.0 570.0C798.3 575.3 798.7 582.0 802.0 587.0C805.3 592.0 808.7 597.0 815.0 600.0C821.3 603.0 833.3 602.5 840.0 605.0C846.7 607.5 850.0 610.8 855.0 615.0C860.0 619.2 864.2 626.8 870.0 630.0C875.8 633.2 882.5 634.8 890.0 634.0C897.5 633.2 906.7 624.8 915.0 625.0C923.3 625.2 932.0 631.7 940.0 635.0C948.0 638.3 957.2 643.3 963.0 645.0C968.8 646.7 973.0 669.5 975.0 645.0C977.0 620.5 977.0 522.5 975.0 498.0C973.0 473.5 968.8 496.8 963.0 498.0Z" fill="#cacaca" opacity="1"/><path d="M492.0 640.0C497.0 625.0 495.3 618.0 500.0 610.0C504.7 602.0 510.5 596.7 520.0 592.0C529.5 587.3 543.7 582.7 557.0 582.0C570.3 581.3 584.8 582.8 600.0 588.0C615.2 593.2 631.3 602.7 648.0 613.0C664.7 623.3 682.0 636.7 700.0 650.0C718.0 663.3 736.8 683.0 756.0 693.0C775.2 703.0 796.0 706.3 815.0 710.0C834.0 713.7 855.0 711.7 870.0 715.0C885.0 718.3 899.2 718.8 905.0 730.0C910.8 741.2 977.5 773.3 905.0 782.0C832.5 790.7 542.5 795.7 470.0 782.0C397.5 768.3 466.3 723.7 470.0 700.0C473.7 676.3 487.0 655.0 492.0 640.0Z" fill="#8d8d8d" opacity="1"/><path d="M497.0 640.0C498.0 635.3 498.8 619.3 503.0 612.0C507.2 604.7 513.0 600.2 522.0 596.0C531.0 591.8 544.0 587.3 557.0 587.0C570.0 586.7 585.2 588.7 600.0 594.0C614.8 599.3 629.7 608.5 646.0 619.0C662.3 629.5 680.0 643.7 698.0 657.0C716.0 670.3 735.0 689.2 754.0 699.0C773.0 708.8 794.3 712.2 812.0 716.0C829.7 719.8 852.0 721.0 860.0 722.0" fill="none" stroke="#3c3c3c" stroke-width="16" filter="url(#b4)" opacity=".75"/><ellipse cx="668" cy="692" rx="52" ry="46" fill="url(#hl)" opacity="1"/><ellipse cx="668" cy="692" rx="30" ry="26" fill="url(#hl)" opacity="0.8"/><ellipse cx="780" cy="726" rx="60" ry="18" fill="url(#hl)" opacity="0.45"/><ellipse cx="612" cy="700" rx="22" ry="40" fill="url(#dk)" opacity="0.5"/><rect x="470" y="745" width="500" height="40" fill="#b9b9b9" filter="url(#b4)"/><rect x="470" y="768" width="500" height="16" fill="#4a4a4a" filter="url(#b4)" opacity=".85"/><ellipse cx="556" cy="760" rx="40" ry="14" fill="url(#hl)" opacity="0.9"/><ellipse cx="640" cy="764" rx="40" ry="12" fill="url(#hl)" opacity="0.7"/><ellipse cx="730" cy="764" rx="50" ry="10" fill="url(#hl)" opacity="0.5"/><ellipse cx="830" cy="766" rx="40" ry="9" fill="url(#hl)" opacity="0.4"/><path d="M487.0 560.0C495.7 551.3 507.8 544.7 520.0 538.0C532.2 531.3 546.7 526.3 560.0 520.0C573.3 513.7 576.7 511.7 600.0 500.0C623.3 488.3 680.0 455.0 700.0 450.0C720.0 445.0 719.2 458.3 720.0 470.0C720.8 481.7 708.3 498.3 705.0 520.0C701.7 541.7 702.5 580.0 700.0 600.0C697.5 620.0 700.0 640.0 690.0 640.0C680.0 640.0 658.3 611.3 640.0 600.0C621.7 588.7 598.3 576.0 580.0 572.0C561.7 568.0 542.5 571.3 530.0 576.0C517.5 580.7 510.8 589.3 505.0 600.0C499.2 610.7 500.8 625.0 495.0 640.0C489.2 655.0 475.5 690.0 470.0 690.0C464.5 690.0 462.3 656.7 462.0 640.0C461.7 623.3 463.8 603.3 468.0 590.0C472.2 576.7 478.3 568.7 487.0 560.0Z" fill="#7b7b7b" opacity="1"/><g filter="url(#e1)"><path d="M496.0 620.0C496.7 617.8 497.3 611.3 500.0 607.0C502.7 602.7 507.0 597.7 512.0 594.0C517.0 590.3 522.5 587.1 530.0 585.0C537.5 582.9 548.7 581.9 557.0 581.5C565.3 581.1 572.5 581.4 580.0 582.5C587.5 583.6 594.3 585.1 602.0 588.0C609.7 590.9 618.3 595.8 626.0 600.0C633.7 604.2 641.0 608.3 648.0 613.0C655.0 617.7 661.7 623.3 668.0 628.0C674.3 632.7 680.3 636.9 686.0 641.0C691.7 645.1 696.3 648.0 702.0 652.5C707.7 657.0 714.0 663.2 720.0 668.0C726.0 672.8 732.0 676.8 738.0 681.0C744.0 685.2 750.2 689.3 756.0 693.0C761.8 696.7 767.0 700.4 773.0 703.0C779.0 705.6 785.0 707.5 792.0 708.5C799.0 709.5 807.0 709.1 815.0 709.0C823.0 708.9 831.7 708.5 840.0 708.0C848.3 707.5 860.8 706.3 865.0 706.0" fill="none" stroke="#000" stroke-width="8.9" stroke-linecap="round" stroke-linejoin="round"/><path d="M499.0 600.0C500.2 598.2 502.8 592.8 506.0 589.0C509.2 585.2 513.0 580.6 518.0 577.0C523.0 573.4 529.5 569.7 536.0 567.5C542.5 565.3 549.7 564.2 557.0 564.0C564.3 563.8 572.5 564.7 580.0 566.0C587.5 567.3 594.3 569.2 602.0 572.0C609.7 574.8 618.0 578.7 626.0 583.0C634.0 587.3 641.5 592.2 650.0 598.0C658.5 603.8 669.5 612.0 677.0 617.5C684.5 623.0 689.8 626.8 695.0 631.0C700.2 635.2 703.5 639.6 708.0 643.0C712.5 646.4 717.0 648.2 722.0 651.5C727.0 654.8 732.3 658.7 738.0 662.5C743.7 666.3 750.2 670.7 756.0 674.5C761.8 678.3 767.2 682.5 773.0 685.5C778.8 688.5 784.2 690.4 791.0 692.5C797.8 694.6 805.8 696.9 814.0 698.0C822.2 699.1 831.5 699.0 840.0 699.0C848.5 699.0 860.8 698.2 865.0 698.0" fill="none" stroke="#000" stroke-width="7.9" stroke-linecap="round" stroke-linejoin="round"/><circle cx="496" cy="621" r="5.5"/></g><g filter="url(#e2)"><path d="M469.0 672.0C469.3 668.3 470.7 657.8 471.0 650.0C471.3 642.2 470.5 633.3 471.0 625.0C471.5 616.7 472.2 607.8 474.0 600.0C475.8 592.2 478.7 584.7 482.0 578.0C485.3 571.3 489.0 565.5 494.0 560.0C499.0 554.5 505.7 549.3 512.0 545.0C518.3 540.7 525.3 537.5 532.0 534.0C538.7 530.5 548.7 525.7 552.0 524.0" fill="none" stroke="#000" stroke-width="14.4" stroke-linecap="round" stroke-linejoin="round"/></g><g filter="url(#e1)"><path d="M486.0 640.0C486.2 636.3 486.0 625.0 487.0 618.0C488.0 611.0 489.3 604.5 492.0 598.0C494.7 591.5 498.3 584.8 503.0 579.0C507.7 573.2 513.5 567.3 520.0 563.0C526.5 558.7 534.3 555.5 542.0 553.0C549.7 550.5 558.0 548.5 566.0 548.0C574.0 547.5 586.0 549.7 590.0 550.0" fill="none" stroke="#000" stroke-width="8.4" stroke-linecap="round" stroke-linejoin="round"/></g><path d="M560.0 500.0C573.3 488.3 583.3 477.5 600.0 470.0C616.7 462.5 641.3 459.0 660.0 455.0C678.7 451.0 701.7 443.5 712.0 446.0C722.3 448.5 722.7 457.7 722.0 470.0C721.3 482.3 711.0 503.3 708.0 520.0C705.0 536.7 707.0 556.7 704.0 570.0C701.0 583.3 700.7 597.5 690.0 600.0C679.3 602.5 656.7 591.7 640.0 585.0C623.3 578.3 606.7 566.2 590.0 560.0C573.3 553.8 551.7 551.3 540.0 548.0C528.3 544.7 516.7 548.0 520.0 540.0C523.3 532.0 546.7 511.7 560.0 500.0Z" fill="#7a7a7a" opacity="1"/><ellipse cx="638" cy="494" rx="12" ry="8" fill="url(#dk)" opacity="1"/><ellipse cx="697" cy="484" rx="10" ry="10" fill="url(#dk)" opacity="1"/><ellipse cx="652" cy="556" rx="20" ry="7" fill="url(#dk)" opacity="1"/><ellipse cx="612" cy="505" rx="12" ry="5" fill="url(#dk)" opacity="0.7"/><ellipse cx="702" cy="562" rx="7" ry="14" fill="url(#dk)" opacity="0.8"/><ellipse cx="690" cy="520" rx="6" ry="10" fill="url(#dk)" opacity="0.6"/><g filter="url(#e2)"><path d="M587.2 492.1C587.1 489.9 585.1 489.9 584.0 488.9C582.8 488.0 581.6 487.2 580.4 486.5C579.1 485.8 577.8 485.2 576.4 484.8C575.1 484.3 573.7 484.0 572.3 483.9C571.0 483.7 569.5 483.6 568.2 483.8C566.8 483.9 565.4 484.1 564.1 484.5C562.7 484.9 561.4 485.4 560.2 486.0C558.9 486.7 557.7 487.4 556.6 488.3C555.4 489.2 554.3 490.2 553.4 491.3C552.4 492.3 551.5 493.5 550.6 494.8C549.8 496.1 549.0 497.4 548.5 499.0C547.9 500.5 547.3 503.1 547.2 504.1C547.1 505.1 546.9 504.6 547.8 504.9C548.7 505.3 551.2 505.8 552.7 506.1C554.2 506.4 555.5 506.6 556.8 506.8C558.0 507.0 559.2 507.2 560.3 507.4C561.4 507.6 562.5 507.8 563.4 507.9C564.4 508.1 565.3 508.2 566.2 508.2C567.1 508.3 567.9 508.3 568.7 508.3C569.5 508.2 570.3 508.1 571.0 508.0C571.8 507.8 572.5 507.6 573.3 507.4C574.1 507.1 574.9 506.8 575.7 506.4C576.6 506.0 577.5 505.6 578.4 505.2C579.3 504.7 580.3 504.2 581.4 503.7C582.4 503.1 583.8 503.9 584.8 501.9C585.7 500.0 587.4 494.2 587.2 492.1Z"/><path d="M680.0 470.7C681.3 472.4 682.8 471.3 684.2 471.5C685.6 471.6 687.0 471.7 688.3 471.7C689.6 471.6 690.9 471.5 692.2 471.3C693.5 471.1 694.7 470.8 695.9 470.5C697.1 470.1 698.2 469.6 699.3 469.0C700.4 468.5 701.4 467.8 702.4 467.1C703.4 466.4 704.3 465.5 705.2 464.6C706.1 463.7 706.9 462.8 707.6 461.7C708.4 460.7 709.1 459.5 709.7 458.3C710.3 457.2 710.8 455.9 711.3 454.6C711.8 453.2 712.2 451.9 712.5 450.4C712.7 448.9 712.9 446.3 712.8 445.4C712.8 444.4 713.1 444.9 712.2 444.6C711.3 444.4 708.8 444.0 707.3 443.9C705.8 443.7 704.5 443.8 703.2 443.8C701.9 443.8 700.6 443.9 699.4 444.0C698.2 444.1 697.0 444.3 695.9 444.5C694.8 444.7 693.8 445.0 692.7 445.3C691.7 445.6 690.8 446.0 689.8 446.4C688.9 446.8 688.0 447.3 687.1 447.9C686.3 448.4 685.5 449.1 684.7 449.8C683.9 450.5 683.1 451.2 682.4 452.0C681.6 452.9 680.9 453.8 680.2 454.7C679.5 455.7 678.8 456.7 678.1 457.8C677.4 458.9 675.7 459.2 676.0 461.3C676.3 463.5 678.6 469.0 680.0 470.7Z"/></g><g filter="url(#e1)"><path d="M584.0 498.0C581.0 497.8 571.7 496.0 566.0 497.0C560.3 498.0 552.7 502.8 550.0 504.0" fill="none" stroke="#000" stroke-width="2.5999999999999996" stroke-linecap="round" stroke-linejoin="round"/><path d="M680.0 466.0C682.8 465.0 691.8 463.2 697.0 460.0C702.2 456.8 708.7 448.8 711.0 446.5" fill="none" stroke="#000" stroke-width="2.5999999999999996" stroke-linecap="round" stroke-linejoin="round"/></g><g filter="url(#e3)"><path d="M538.0 525.0C536.3 523.0 533.9 523.3 532.0 523.1C530.2 522.9 528.5 523.3 526.9 523.7C525.2 524.1 523.7 524.7 522.2 525.4C520.6 526.1 519.2 527.0 517.7 527.9C516.3 528.8 514.9 529.8 513.6 530.9C512.3 532.0 511.0 533.1 509.7 534.3C508.5 535.5 507.3 536.8 506.1 538.1C504.9 539.4 503.7 540.8 502.6 542.2C501.5 543.6 500.4 545.0 499.4 546.5C498.3 548.0 497.3 549.5 496.3 551.0C495.3 552.6 494.4 554.1 493.5 555.8C492.6 557.4 491.0 559.7 491.0 560.9C490.9 562.1 491.8 563.1 493.0 563.1C494.2 563.1 496.6 561.7 498.2 561.0C499.9 560.4 501.5 559.6 503.1 559.0C504.7 558.3 506.3 557.6 507.9 557.0C509.4 556.4 511.0 555.7 512.5 555.1C514.0 554.5 515.5 554.0 517.0 553.4C518.4 552.8 519.9 552.2 521.3 551.7C522.7 551.1 524.1 550.5 525.4 549.9C526.8 549.3 528.1 548.8 529.4 548.1C530.6 547.5 531.9 546.8 533.1 546.1C534.3 545.3 535.5 544.6 536.6 543.6C537.7 542.7 538.8 541.8 539.7 540.4C540.6 538.9 542.3 537.6 542.0 535.0C541.7 532.4 539.7 527.0 538.0 525.0Z"/></g><g filter="url(#e3)"><path d="M550.7 517.3C549.5 515.4 547.3 515.5 545.8 515.1C544.2 514.8 542.7 515.0 541.3 515.2C539.8 515.4 538.5 515.9 537.1 516.4C535.7 516.9 534.4 517.5 533.2 518.2C531.9 519.0 530.7 519.8 529.5 520.6C528.3 521.5 527.2 522.4 526.1 523.4C525.0 524.4 524.0 525.5 523.0 526.6C522.0 527.7 521.0 528.8 520.1 530.0C519.1 531.2 518.3 532.4 517.4 533.7C516.5 534.9 515.7 536.2 515.0 537.5C514.2 538.8 513.4 540.2 512.7 541.6C512.1 543.0 510.9 544.9 510.9 546.0C511.0 547.0 512.0 548.0 513.1 548.0C514.2 548.1 516.0 546.8 517.3 546.3C518.7 545.7 520.0 545.1 521.3 544.5C522.6 544.0 523.8 543.5 525.1 543.0C526.4 542.5 527.6 542.0 528.8 541.5C530.0 541.1 531.2 540.7 532.4 540.3C533.6 539.8 534.7 539.5 535.9 539.1C537.0 538.7 538.1 538.3 539.2 537.9C540.3 537.5 541.3 537.1 542.4 536.6C543.4 536.2 544.4 535.8 545.4 535.2C546.4 534.7 547.3 534.2 548.3 533.5C549.2 532.8 550.1 532.2 551.0 531.0C551.8 529.9 553.3 529.0 553.3 526.7C553.2 524.4 552.0 519.2 550.7 517.3Z"/></g><g filter="url(#e3)"><path d="M517.6 544.1C516.0 542.7 514.0 543.4 512.4 543.5C510.8 543.7 509.5 544.3 508.1 544.9C506.7 545.5 505.5 546.3 504.3 547.1C503.0 548.0 501.9 548.9 500.8 549.9C499.6 550.9 498.6 552.0 497.6 553.2C496.5 554.3 495.5 555.5 494.6 556.8C493.6 558.0 492.7 559.3 491.8 560.6C490.9 561.9 490.1 563.3 489.3 564.7C488.4 566.1 487.6 567.5 486.9 569.0C486.1 570.5 485.3 572.0 484.6 573.5C483.9 575.0 483.2 576.5 482.6 578.1C481.9 579.7 480.7 582.0 480.8 583.1C480.9 584.2 482.1 585.1 483.2 584.9C484.3 584.7 486.1 583.0 487.5 582.0C488.9 581.1 490.2 580.1 491.5 579.2C492.8 578.3 494.1 577.4 495.4 576.5C496.7 575.6 497.9 574.8 499.2 574.0C500.4 573.1 501.7 572.3 502.9 571.6C504.1 570.8 505.3 570.0 506.4 569.2C507.6 568.5 508.7 567.7 509.8 567.0C510.9 566.2 512.0 565.5 513.0 564.7C514.0 564.0 515.0 563.2 516.0 562.4C516.9 561.5 517.8 560.7 518.7 559.8C519.5 558.8 520.4 557.9 521.0 556.6C521.6 555.3 522.9 554.0 522.4 551.9C521.8 549.8 519.3 545.5 517.6 544.1Z"/></g><g filter="url(#e3)"><path d="M494.7 572.2C492.8 571.5 491.3 572.8 489.9 573.4C488.6 574.1 487.6 575.0 486.6 576.0C485.6 576.9 484.7 578.0 483.9 579.1C483.0 580.2 482.3 581.3 481.6 582.6C480.9 583.8 480.2 585.0 479.7 586.3C479.1 587.6 478.5 589.0 478.0 590.3C477.5 591.7 477.0 593.1 476.6 594.5C476.2 596.0 475.8 597.4 475.4 598.9C475.1 600.3 474.7 601.8 474.4 603.3C474.1 604.8 473.8 606.4 473.6 607.9C473.3 609.4 473.1 611.0 472.9 612.6C472.8 614.2 472.2 616.5 472.6 617.5C473.0 618.5 474.4 619.0 475.4 618.5C476.4 618.1 477.5 616.1 478.5 614.9C479.5 613.7 480.4 612.4 481.3 611.3C482.2 610.1 483.2 608.9 484.1 607.8C485.0 606.7 485.9 605.6 486.8 604.5C487.7 603.4 488.6 602.3 489.4 601.3C490.3 600.2 491.2 599.2 492.0 598.2C492.8 597.1 493.6 596.1 494.4 595.1C495.2 594.1 495.9 593.1 496.6 592.1C497.4 591.1 498.0 590.1 498.6 589.1C499.3 588.0 499.8 587.0 500.3 585.9C500.8 584.8 501.3 583.7 501.5 582.3C501.6 581.0 502.5 579.4 501.3 577.8C500.2 576.1 496.6 573.0 494.7 572.2Z"/></g><g filter="url(#e3)"><path d="M660.3 542.1C661.4 539.2 659.4 535.4 658.3 532.7C657.2 530.0 655.4 527.8 653.7 525.7C651.9 523.6 649.9 521.8 647.8 520.1C645.7 518.4 643.4 516.9 641.1 515.5C638.8 514.2 636.4 513.0 634.0 512.0C631.5 511.0 629.0 510.1 626.5 509.4C623.9 508.7 621.3 508.1 618.8 507.7C616.2 507.3 613.6 507.0 611.0 506.8C608.4 506.7 605.7 506.6 603.1 506.7C600.5 506.8 597.9 507.0 595.4 507.3C592.8 507.7 590.2 508.1 587.6 508.7C585.1 509.3 581.3 510.3 580.0 511.0C578.7 511.7 578.8 512.2 580.0 513.0C581.2 513.8 584.9 514.9 587.2 515.8C589.5 516.7 591.7 517.6 593.9 518.5C596.0 519.5 598.1 520.5 600.1 521.5C602.1 522.6 604.1 523.6 605.9 524.7C607.8 525.8 609.6 527.0 611.4 528.1C613.1 529.2 614.9 530.4 616.5 531.6C618.2 532.8 619.9 534.0 621.5 535.1C623.2 536.3 624.8 537.5 626.4 538.7C628.1 539.9 629.7 541.0 631.5 542.2C633.2 543.3 634.9 544.4 636.9 545.5C638.8 546.5 640.7 547.7 643.1 548.4C645.6 549.2 648.8 551.0 651.7 549.9C654.5 548.9 659.2 544.9 660.3 542.1Z"/></g><g filter="url(#e3)"><path d="M655.0 544.3C655.2 541.3 652.2 538.3 650.4 536.0C648.5 533.7 646.2 532.0 644.0 530.4C641.7 528.8 639.3 527.4 636.8 526.2C634.3 525.0 631.7 524.0 629.2 523.1C626.6 522.3 623.9 521.6 621.3 521.0C618.6 520.4 615.9 519.9 613.2 519.6C610.5 519.2 607.8 519.0 605.1 518.9C602.4 518.8 599.6 518.8 596.9 518.9C594.2 519.0 591.5 519.2 588.8 519.5C586.1 519.8 583.4 520.2 580.8 520.7C578.1 521.2 575.4 521.7 572.8 522.4C570.2 523.1 566.3 524.2 565.0 525.0C563.7 525.8 563.7 526.3 565.0 527.0C566.3 527.7 570.2 528.5 572.8 529.3C575.3 530.0 577.8 530.7 580.2 531.5C582.6 532.2 585.0 533.0 587.3 533.9C589.6 534.7 591.9 535.5 594.2 536.4C596.4 537.3 598.6 538.2 600.8 539.1C603.0 540.0 605.2 541.0 607.3 541.9C609.4 542.9 611.5 543.8 613.6 544.7C615.8 545.7 617.8 546.6 620.0 547.5C622.1 548.4 624.2 549.3 626.3 550.1C628.5 551.0 630.7 551.8 633.0 552.4C635.3 553.1 637.5 553.9 640.2 554.1C642.9 554.3 646.6 555.4 649.0 553.7C651.5 552.1 654.7 547.2 655.0 544.3Z"/></g><g filter="url(#e3)"><path d="M643.8 548.0C643.4 545.2 640.1 543.0 638.0 541.2C635.8 539.4 633.4 538.4 631.0 537.2C628.6 536.1 626.1 535.3 623.6 534.6C621.1 533.8 618.5 533.3 615.9 532.8C613.3 532.4 610.7 532.0 608.0 531.8C605.4 531.6 602.7 531.5 600.1 531.4C597.4 531.4 594.7 531.4 592.0 531.6C589.4 531.7 586.7 531.9 584.0 532.2C581.3 532.5 578.6 532.8 576.0 533.2C573.3 533.6 570.6 534.1 567.9 534.7C565.3 535.2 562.6 535.8 559.9 536.5C557.3 537.2 553.3 538.3 552.0 539.0C550.6 539.8 550.7 540.3 552.0 541.0C553.4 541.7 557.4 542.4 560.0 543.1C562.6 543.7 565.2 544.3 567.7 545.0C570.3 545.6 572.8 546.2 575.3 546.9C577.8 547.6 580.2 548.2 582.7 548.9C585.1 549.6 587.5 550.3 589.9 551.0C592.3 551.7 594.6 552.4 596.9 553.1C599.3 553.8 601.6 554.4 603.9 555.1C606.2 555.7 608.5 556.4 610.8 557.0C613.1 557.5 615.3 558.1 617.7 558.6C620.0 559.0 622.3 559.5 624.7 559.7C627.0 559.9 629.4 560.3 632.0 560.0C634.6 559.7 638.2 560.0 640.2 558.0C642.2 556.0 644.2 550.8 643.8 548.0Z"/></g><g filter="url(#e3)"><path d="M605.5 527.7C605.3 525.4 603.0 523.9 601.6 522.5C600.2 521.2 598.5 520.4 596.9 519.7C595.3 518.9 593.6 518.3 591.9 517.8C590.2 517.4 588.5 517.0 586.8 516.8C585.1 516.5 583.3 516.4 581.6 516.3C579.9 516.3 578.2 516.3 576.5 516.4C574.8 516.5 573.1 516.7 571.4 516.9C569.7 517.2 568.0 517.5 566.4 517.8C564.7 518.2 563.1 518.6 561.5 519.1C559.9 519.6 558.3 520.1 556.8 520.7C555.2 521.2 553.7 521.8 552.2 522.6C550.7 523.3 548.5 524.3 547.9 525.0C547.2 525.7 547.3 526.4 548.1 527.0C549.0 527.5 551.3 527.9 552.8 528.3C554.3 528.7 555.8 529.0 557.3 529.4C558.8 529.8 560.3 530.2 561.7 530.7C563.2 531.1 564.6 531.5 566.1 531.9C567.5 532.4 568.9 532.8 570.3 533.3C571.7 533.7 573.1 534.2 574.5 534.6C575.9 535.0 577.3 535.5 578.7 535.9C580.1 536.3 581.6 536.7 583.0 537.0C584.4 537.3 585.9 537.7 587.3 537.9C588.8 538.2 590.3 538.4 591.9 538.5C593.4 538.5 595.0 538.7 596.8 538.3C598.5 538.0 601.1 538.1 602.5 536.3C604.0 534.5 605.6 530.0 605.5 527.7Z"/></g><g filter="url(#e3)"><path d="M636.0 524.9C637.3 522.7 636.2 519.9 635.7 517.8C635.2 515.7 634.2 514.1 633.1 512.4C632.1 510.8 630.9 509.4 629.6 508.1C628.3 506.8 626.9 505.6 625.4 504.6C623.9 503.6 622.4 502.7 620.8 501.9C619.2 501.1 617.6 500.4 616.0 499.9C614.3 499.4 612.6 499.0 611.0 498.7C609.3 498.4 607.6 498.3 606.0 498.2C604.4 498.2 602.7 498.2 601.1 498.4C599.5 498.6 598.0 498.9 596.4 499.2C594.9 499.6 593.4 500.1 592.0 500.7C590.6 501.3 588.6 502.3 587.9 503.0C587.3 503.7 587.4 504.3 588.1 505.0C588.8 505.7 590.7 506.3 591.9 507.0C593.1 507.7 594.3 508.3 595.3 509.0C596.4 509.7 597.4 510.4 598.4 511.1C599.3 511.8 600.2 512.6 601.1 513.3C602.0 514.1 602.8 514.9 603.6 515.7C604.5 516.5 605.2 517.3 606.0 518.1C606.9 518.9 607.6 519.7 608.5 520.5C609.3 521.3 610.1 522.1 611.0 523.0C612.0 523.8 612.9 524.6 613.9 525.4C615.0 526.2 616.0 527.0 617.3 527.8C618.6 528.5 619.8 529.4 621.6 529.9C623.4 530.5 625.6 531.9 628.0 531.1C630.4 530.3 634.7 527.1 636.0 524.9Z"/></g><g filter="url(#e3)"><path d="M576.4 541.0C576.4 538.9 574.7 537.6 573.7 536.5C572.6 535.4 571.3 534.8 570.0 534.2C568.7 533.6 567.3 533.3 565.9 533.0C564.5 532.8 563.1 532.7 561.7 532.6C560.3 532.6 558.9 532.7 557.4 532.9C556.0 533.1 554.6 533.4 553.2 533.7C551.8 534.1 550.4 534.5 549.0 535.0C547.6 535.5 546.3 536.1 544.9 536.7C543.6 537.3 542.2 538.0 540.9 538.8C539.6 539.5 538.3 540.3 537.0 541.2C535.7 542.0 534.5 542.9 533.2 543.9C532.0 544.9 530.1 546.2 529.6 547.1C529.2 547.9 529.5 548.6 530.4 548.9C531.3 549.3 533.5 549.0 535.0 549.0C536.5 549.1 538.0 549.1 539.4 549.1C540.8 549.2 542.1 549.2 543.5 549.3C544.8 549.4 546.1 549.6 547.3 549.7C548.6 549.9 549.8 550.0 550.9 550.2C552.1 550.4 553.2 550.6 554.3 550.8C555.4 551.0 556.5 551.2 557.5 551.3C558.5 551.5 559.5 551.7 560.5 551.8C561.5 551.9 562.5 552.1 563.5 552.1C564.4 552.1 565.4 552.2 566.4 552.0C567.4 551.9 568.4 551.9 569.6 551.4C570.8 550.9 572.4 550.8 573.6 549.0C574.7 547.3 576.4 543.0 576.4 541.0Z"/></g><g filter="url(#e3)"><path d="M560.7 548.3C560.4 546.5 558.7 545.7 557.5 544.9C556.4 544.0 555.1 543.7 553.8 543.3C552.5 543.0 551.2 542.8 549.9 542.8C548.6 542.7 547.2 542.8 545.9 542.9C544.6 543.0 543.3 543.3 542.0 543.6C540.7 543.9 539.4 544.3 538.1 544.8C536.9 545.3 535.6 545.8 534.4 546.4C533.1 547.0 531.9 547.6 530.7 548.3C529.5 549.0 528.4 549.8 527.2 550.6C526.1 551.4 524.9 552.2 523.8 553.1C522.7 554.0 521.6 554.9 520.6 555.9C519.5 556.9 517.9 558.3 517.5 559.1C517.2 560.0 517.6 560.7 518.5 560.9C519.3 561.1 521.4 560.5 522.7 560.3C524.1 560.1 525.4 559.9 526.7 559.8C528.0 559.6 529.3 559.5 530.5 559.4C531.8 559.3 533.0 559.3 534.2 559.2C535.3 559.2 536.5 559.2 537.6 559.2C538.7 559.2 539.8 559.2 540.9 559.2C541.9 559.2 543.0 559.3 544.0 559.3C545.0 559.3 546.0 559.3 547.0 559.3C548.0 559.3 548.9 559.3 549.9 559.2C550.8 559.2 551.8 559.1 552.8 558.9C553.8 558.7 554.7 558.6 555.8 558.0C556.9 557.5 558.4 557.3 559.3 555.7C560.1 554.1 561.0 550.1 560.7 548.3Z"/></g><g filter="url(#e3)"><path d="M665.7 537.4C666.9 535.3 665.7 532.6 665.3 530.5C664.9 528.5 664.0 526.9 663.1 525.2C662.3 523.6 661.2 522.1 660.2 520.7C659.1 519.3 658.0 518.0 656.9 516.8C655.7 515.6 654.5 514.5 653.2 513.4C652.0 512.4 650.7 511.4 649.5 510.5C648.2 509.7 646.9 508.9 645.6 508.1C644.3 507.4 643.0 506.7 641.7 506.2C640.4 505.6 639.1 505.1 637.8 504.7C636.5 504.2 635.2 503.9 633.9 503.6C632.6 503.3 631.4 503.1 630.2 503.0C628.9 502.9 627.2 502.8 626.4 503.1C625.7 503.4 625.4 504.1 625.6 504.9C625.7 505.7 626.7 507.0 627.2 507.9C627.8 508.9 628.4 509.9 629.0 510.9C629.6 511.8 630.1 512.8 630.7 513.8C631.3 514.9 631.9 515.9 632.6 516.9C633.2 518.0 633.8 519.1 634.5 520.2C635.1 521.2 635.8 522.3 636.5 523.5C637.3 524.6 638.0 525.7 638.8 526.9C639.6 528.0 640.5 529.2 641.4 530.3C642.3 531.5 643.2 532.7 644.3 533.8C645.4 535.0 646.5 536.1 647.8 537.2C649.1 538.3 650.3 539.5 652.1 540.4C653.8 541.3 656.0 543.1 658.3 542.6C660.6 542.1 664.5 539.4 665.7 537.4Z"/></g><g filter="url(#e3)"><path d="M669.6 534.8C671.0 533.6 670.8 531.4 670.9 529.9C671.1 528.4 670.9 527.1 670.7 525.9C670.5 524.6 670.1 523.4 669.7 522.3C669.3 521.2 668.9 520.2 668.4 519.2C667.9 518.3 667.3 517.4 666.7 516.6C666.1 515.7 665.5 515.0 664.8 514.3C664.2 513.6 663.5 513.0 662.8 512.4C662.1 511.9 661.4 511.4 660.6 511.0C659.9 510.6 659.1 510.3 658.3 510.0C657.6 509.8 656.8 509.6 656.0 509.6C655.2 509.6 654.4 509.6 653.8 509.8C653.1 510.1 652.3 510.5 652.0 511.0C651.7 511.5 652.0 512.4 652.0 513.0C652.0 513.6 652.2 514.0 652.3 514.5C652.3 515.0 652.2 515.3 652.1 515.7C652.1 516.2 652.0 516.5 651.9 517.0C651.9 517.4 651.8 517.8 651.8 518.3C651.8 518.8 651.8 519.3 651.9 519.9C652.0 520.5 652.0 521.1 652.2 521.7C652.3 522.3 652.4 523.0 652.6 523.8C652.9 524.5 653.1 525.3 653.4 526.1C653.7 526.9 654.1 527.8 654.5 528.7C655.0 529.6 655.5 530.5 656.1 531.5C656.8 532.4 657.4 533.4 658.4 534.4C659.5 535.3 660.6 537.1 662.4 537.2C664.3 537.3 668.1 536.0 669.6 534.8Z"/></g><g filter="url(#e3)"><path d="M673.2 544.5C675.5 543.2 676.0 540.1 676.9 538.1C677.8 536.1 678.1 534.3 678.5 532.6C679.0 530.8 679.2 529.1 679.5 527.5C679.8 525.8 679.9 524.3 680.1 522.8C680.3 521.2 680.5 519.7 680.7 518.2C680.9 516.8 681.0 515.3 681.2 513.9C681.4 512.4 681.6 511.0 681.9 509.6C682.2 508.1 682.5 506.7 682.8 505.2C683.2 503.8 683.6 502.3 684.1 500.8C684.6 499.4 685.2 497.9 685.9 496.4C686.5 494.9 687.3 493.4 688.1 491.8C688.9 490.3 690.5 488.1 690.7 487.0C690.9 485.9 690.4 485.0 689.3 485.0C688.1 485.0 685.5 486.1 683.7 486.8C681.9 487.5 680.1 488.5 678.5 489.5C676.8 490.5 675.2 491.6 673.6 492.8C672.1 494.0 670.6 495.4 669.2 496.8C667.7 498.2 666.4 499.8 665.2 501.4C663.9 503.0 662.8 504.8 661.8 506.6C660.8 508.5 659.8 510.4 659.1 512.4C658.3 514.4 657.7 516.5 657.2 518.6C656.7 520.7 656.4 522.9 656.3 525.1C656.1 527.4 656.1 529.7 656.5 531.9C656.8 534.2 657.1 536.6 658.2 538.8C659.2 541.1 660.3 544.6 662.8 545.5C665.3 546.5 670.8 545.7 673.2 544.5Z"/></g><g filter="url(#e3)"><path d="M682.9 548.9C685.3 548.5 686.5 546.0 687.7 544.5C689.0 543.1 689.6 541.6 690.4 540.1C691.2 538.6 691.8 537.2 692.3 535.7C692.9 534.3 693.4 532.9 693.8 531.4C694.3 530.0 694.7 528.6 695.1 527.1C695.5 525.7 695.9 524.3 696.2 522.9C696.6 521.5 697.0 520.0 697.4 518.6C697.8 517.2 698.2 515.8 698.6 514.4C699.0 512.9 699.5 511.5 699.9 510.1C700.4 508.7 700.9 507.2 701.4 505.8C702.0 504.4 702.5 502.9 703.1 501.5C703.7 500.0 704.9 498.0 704.9 496.9C704.9 495.8 704.2 495.1 703.1 495.1C702.1 495.1 699.9 496.3 698.4 497.1C696.9 497.8 695.5 498.7 694.0 499.7C692.6 500.6 691.2 501.6 689.8 502.7C688.5 503.7 687.1 504.9 685.8 506.1C684.6 507.3 683.3 508.6 682.1 509.9C681.0 511.3 679.8 512.7 678.8 514.1C677.7 515.6 676.7 517.1 675.8 518.7C674.9 520.3 674.0 522.0 673.3 523.7C672.6 525.4 671.9 527.2 671.4 529.0C670.9 530.8 670.5 532.7 670.4 534.7C670.2 536.6 670.0 538.6 670.5 540.7C670.9 542.7 671.1 545.7 673.1 547.1C675.2 548.5 680.4 549.3 682.9 548.9Z"/></g><g filter="url(#e3)"><path d="M690.1 556.8C692.2 557.0 693.6 555.2 694.9 554.2C696.2 553.3 697.0 552.2 697.9 551.1C698.8 550.0 699.5 548.9 700.2 547.8C700.9 546.7 701.5 545.6 702.1 544.5C702.7 543.3 703.3 542.2 703.8 541.1C704.3 539.9 704.8 538.8 705.3 537.6C705.8 536.5 706.2 535.3 706.7 534.2C707.2 533.1 707.6 531.9 708.1 530.8C708.6 529.6 709.0 528.5 709.5 527.4C710.0 526.2 710.4 525.1 710.9 524.0C711.4 522.8 711.9 521.7 712.4 520.5C712.9 519.4 713.9 517.9 713.8 516.9C713.8 516.0 713.1 515.2 712.2 515.1C711.3 515.0 709.6 515.8 708.3 516.3C707.1 516.8 705.9 517.4 704.7 518.0C703.5 518.6 702.3 519.3 701.1 520.0C700.0 520.7 698.8 521.5 697.7 522.3C696.6 523.2 695.4 524.0 694.4 525.0C693.3 525.9 692.2 526.8 691.2 527.9C690.2 528.9 689.2 530.0 688.3 531.1C687.3 532.2 686.4 533.4 685.6 534.7C684.8 535.9 684.0 537.2 683.4 538.6C682.7 539.9 682.1 541.3 681.7 542.8C681.3 544.3 680.8 545.9 680.8 547.6C680.9 549.3 680.4 551.7 681.9 553.2C683.5 554.7 687.9 556.6 690.1 556.8Z"/></g><g filter="url(#e3)"><path d="M693.1 568.3C694.9 569.0 696.1 567.9 697.3 567.5C698.5 567.1 699.3 566.4 700.1 565.8C700.9 565.1 701.7 564.4 702.4 563.7C703.1 563.0 703.7 562.2 704.3 561.4C704.9 560.7 705.5 559.9 706.0 559.1C706.5 558.3 707.1 557.4 707.6 556.6C708.1 555.8 708.6 554.9 709.0 554.1C709.5 553.3 710.0 552.4 710.4 551.5C710.9 550.7 711.4 549.8 711.8 549.0C712.3 548.1 712.7 547.3 713.2 546.4C713.6 545.5 714.1 544.7 714.5 543.8C714.9 542.9 715.8 541.8 715.8 541.0C715.7 540.2 715.0 539.2 714.2 539.0C713.5 538.8 712.2 539.4 711.2 539.6C710.2 539.9 709.2 540.3 708.2 540.6C707.2 541.0 706.3 541.4 705.3 541.8C704.4 542.2 703.4 542.6 702.5 543.1C701.5 543.6 700.6 544.1 699.6 544.7C698.7 545.2 697.8 545.8 696.9 546.4C696.1 547.0 695.2 547.7 694.3 548.4C693.5 549.0 692.7 549.8 691.9 550.6C691.2 551.3 690.4 552.2 689.8 553.1C689.1 553.9 688.5 554.9 688.0 555.9C687.5 556.9 686.9 558.0 686.7 559.3C686.5 560.5 685.8 562.1 686.9 563.7C687.9 565.2 691.4 567.7 693.1 568.3Z"/></g><g filter="url(#e2)"><circle cx="602.3" cy="493.0" r="7.6"/></g><g filter="url(#e2)"><circle cx="596.0" cy="499.1" r="7.6"/></g><g filter="url(#e2)"><circle cx="588.3" cy="495.0" r="7.6"/></g><g filter="url(#e2)"><circle cx="589.8" cy="486.4" r="7.6"/></g><g filter="url(#e2)"><circle cx="598.5" cy="485.1" r="7.6"/></g><g filter="url(#e2)"><circle cx="627.0" cy="481.9" r="7.0"/></g><g filter="url(#e2)"><circle cx="619.1" cy="483.9" r="7.0"/></g><g filter="url(#e2)"><circle cx="614.8" cy="477.0" r="7.0"/></g><g filter="url(#e2)"><circle cx="620.0" cy="470.8" r="7.0"/></g><g filter="url(#e2)"><circle cx="627.5" cy="473.9" r="7.0"/></g><g filter="url(#e2)"><circle cx="655.0" cy="470.0" r="7.6"/></g><g filter="url(#e2)"><circle cx="647.7" cy="474.9" r="7.6"/></g><g filter="url(#e2)"><circle cx="640.9" cy="469.5" r="7.6"/></g><g filter="url(#e2)"><circle cx="643.8" cy="461.3" r="7.6"/></g><g filter="url(#e2)"><circle cx="652.6" cy="461.6" r="7.6"/></g><g filter="url(#e2)"><circle cx="679.3" cy="476.1" r="7.6"/></g><g filter="url(#e2)"><circle cx="670.5" cy="475.9" r="7.6"/></g><g filter="url(#e2)"><circle cx="668.0" cy="467.6" r="7.6"/></g><g filter="url(#e2)"><circle cx="675.1" cy="462.6" r="7.6"/></g><g filter="url(#e2)"><circle cx="682.1" cy="467.8" r="7.6"/></g><g filter="url(#e2)"><circle cx="654.9" cy="496.0" r="7.6"/></g><g filter="url(#e2)"><circle cx="649.8" cy="503.1" r="7.6"/></g><g filter="url(#e2)"><circle cx="641.5" cy="500.4" r="7.6"/></g><g filter="url(#e2)"><circle cx="641.5" cy="491.6" r="7.6"/></g><g filter="url(#e2)"><circle cx="649.8" cy="488.9" r="7.6"/></g><g filter="url(#e1)"><circle cx="595" cy="491.7" r="5.6"/><circle cx="621.7" cy="477.5" r="5.6"/><circle cx="648" cy="467.5" r="5.6"/><circle cx="675" cy="470" r="5.6"/><circle cx="647.5" cy="496" r="5.6"/></g><g filter="url(#e2)"><circle cx="683.1" cy="571.1" r="8.4"/></g><g filter="url(#e2)"><circle cx="674.3" cy="575.1" r="8.4"/></g><g filter="url(#e2)"><circle cx="667.8" cy="567.9" r="8.4"/></g><g filter="url(#e2)"><circle cx="672.6" cy="559.5" r="8.4"/></g><g filter="url(#e2)"><circle cx="682.1" cy="561.5" r="8.4"/></g><g filter="url(#e2)"><path d="M687.3 585.3C686.4 587.1 686.8 588.3 686.9 589.4C686.9 590.4 687.3 591.1 687.7 591.8C688.1 592.6 688.6 593.1 689.2 593.7C689.7 594.2 690.3 594.7 691.0 595.2C691.7 595.6 692.4 596.1 693.2 596.5C693.9 596.8 694.7 597.2 695.5 597.6C696.4 597.9 697.2 598.2 698.1 598.6C699.0 598.9 699.9 599.2 700.9 599.5C701.8 599.8 702.8 600.1 703.7 600.4C704.7 600.7 705.7 601.0 706.8 601.3C707.8 601.6 708.8 601.9 709.9 602.1C711.0 602.4 712.6 602.9 713.3 602.8C714.1 602.6 714.6 602.0 714.7 601.2C714.7 600.4 713.9 599.0 713.5 597.9C713.1 596.9 712.6 595.9 712.1 595.0C711.7 594.0 711.2 593.0 710.8 592.1C710.3 591.2 709.8 590.3 709.4 589.4C708.9 588.5 708.4 587.6 707.9 586.8C707.5 586.0 707.0 585.2 706.5 584.4C706.0 583.7 705.4 582.9 704.9 582.3C704.4 581.6 703.8 580.9 703.2 580.4C702.6 579.8 702.0 579.3 701.3 578.8C700.7 578.4 700.0 578.0 699.2 577.7C698.4 577.5 697.6 577.2 696.5 577.4C695.5 577.5 694.2 577.3 692.7 578.7C691.1 580.0 688.3 583.6 687.3 585.3Z"/></g><g filter="url(#e2)"><path d="M676.7 588.7C675.5 590.4 675.8 591.8 675.8 593.0C675.8 594.2 676.2 595.1 676.6 596.1C677.0 597.0 677.6 597.8 678.2 598.6C678.8 599.4 679.5 600.2 680.2 600.9C680.9 601.6 681.7 602.3 682.6 602.9C683.4 603.6 684.3 604.2 685.2 604.8C686.2 605.4 687.1 606.0 688.1 606.6C689.1 607.2 690.2 607.8 691.2 608.3C692.3 608.9 693.4 609.5 694.5 610.0C695.6 610.6 696.7 611.1 697.9 611.7C699.0 612.2 700.2 612.8 701.4 613.3C702.7 613.8 704.4 614.7 705.3 614.7C706.2 614.7 706.7 614.2 706.7 613.3C706.7 612.4 705.8 610.7 705.3 609.4C704.8 608.2 704.3 607.0 703.8 605.9C703.3 604.7 702.8 603.6 702.3 602.5C701.8 601.4 701.3 600.3 700.8 599.2C700.3 598.2 699.8 597.1 699.3 596.1C698.8 595.1 698.3 594.1 697.8 593.2C697.2 592.2 696.7 591.3 696.2 590.5C695.6 589.6 695.1 588.8 694.5 588.0C693.9 587.3 693.3 586.5 692.6 585.9C691.9 585.2 691.2 584.6 690.4 584.2C689.5 583.7 688.8 583.2 687.6 583.0C686.4 582.9 685.1 582.3 683.3 583.3C681.5 584.2 678.0 587.1 676.7 588.7Z"/></g><g filter="url(#e2)"><path d="M665.1 577.7C663.4 576.9 662.3 577.7 661.2 578.0C660.2 578.4 659.5 579.1 658.8 579.8C658.2 580.5 657.7 581.3 657.3 582.2C656.9 583.0 656.6 584.0 656.5 584.9C656.3 585.8 656.2 586.8 656.3 587.7C656.3 588.6 656.4 589.6 656.7 590.5C656.9 591.4 657.2 592.3 657.6 593.1C657.9 594.0 658.4 594.8 658.9 595.5C659.4 596.3 659.9 597.0 660.5 597.7C661.1 598.4 661.8 599.0 662.5 599.6C663.1 600.2 663.9 600.7 664.6 601.2C665.4 601.7 666.5 602.5 667.2 602.6C667.9 602.6 668.5 602.1 668.8 601.4C669.1 600.8 668.9 599.6 668.9 598.8C669.0 598.0 669.0 597.2 669.1 596.5C669.2 595.8 669.3 595.2 669.5 594.6C669.6 594.0 669.8 593.4 670.0 592.9C670.2 592.4 670.4 592.0 670.7 591.6C670.9 591.2 671.1 590.8 671.3 590.5C671.6 590.2 671.8 589.9 672.0 589.6C672.1 589.4 672.3 589.1 672.4 588.9C672.6 588.6 672.7 588.4 672.7 588.1C672.7 587.7 672.8 587.4 672.7 587.0C672.6 586.5 672.6 586.1 672.3 585.3C672.0 584.6 672.1 583.6 670.9 582.3C669.7 581.1 666.7 578.4 665.1 577.7Z"/></g><g filter="url(#e2)"><circle cx="676" cy="555" r="12"/></g><g filter="url(#e1)"><path d="M676.0 555.0C676.7 554.5 679.5 553.2 680.0 552.0C680.5 550.8 680.0 548.8 679.0 548.0C678.0 547.2 675.5 546.5 674.0 547.0C672.5 547.5 670.5 549.3 670.0 551.0C669.5 552.7 669.8 555.5 671.0 557.0C672.2 558.5 675.0 560.0 677.0 560.0C679.0 560.0 682.0 557.5 683.0 557.0" fill="none" stroke="#000" stroke-width="3.6" stroke-linecap="round" stroke-linejoin="round"/></g><g filter="url(#e1)"><circle cx="704" cy="611" r="4"/><circle cx="709" cy="620" r="4.2"/><circle cx="715" cy="629" r="4.3"/><circle cx="721" cy="637" r="4.3"/><circle cx="727.5" cy="644.5" r="4.3"/><circle cx="734" cy="651" r="4.2"/></g><g filter="url(#e2)"><path d="M795.0 392.0C792.0 394.5 784.2 401.5 777.0 407.0C769.8 412.5 759.7 418.5 752.0 425.0C744.3 431.5 736.7 438.5 731.0 446.0C725.3 453.5 721.3 461.0 718.0 470.0C714.7 479.0 712.2 490.0 711.0 500.0C709.8 510.0 710.3 520.0 711.0 530.0C711.7 540.0 713.0 550.0 715.0 560.0C717.0 570.0 719.5 580.3 723.0 590.0C726.5 599.7 731.2 609.5 736.0 618.0C740.8 626.5 746.0 634.0 752.0 641.0C758.0 648.0 764.8 654.2 772.0 660.0C779.2 665.8 787.0 671.3 795.0 676.0C803.0 680.7 811.2 684.5 820.0 688.0C828.8 691.5 838.8 694.7 848.0 697.0C857.2 699.3 866.3 700.8 875.0 702.0C883.7 703.2 892.2 704.3 900.0 704.0C907.8 703.7 915.8 702.5 922.0 700.0C928.2 697.5 933.7 693.7 937.0 689.0C940.3 684.3 942.5 677.8 942.0 672.0C941.5 666.2 938.0 658.5 934.0 654.0C930.0 649.5 922.5 647.2 918.0 645.0C913.5 642.8 908.8 641.7 907.0 641.0" fill="none" stroke="#000" stroke-width="16.4" stroke-linecap="round" stroke-linejoin="round"/></g><g filter="url(#e2)"><path d="M775.0 418.0C771.7 420.7 761.2 428.3 755.0 434.0C748.8 439.7 742.5 445.2 738.0 452.0C733.5 458.8 730.6 467.0 728.0 475.0C725.4 483.0 723.4 490.8 722.5 500.0C721.6 509.2 721.8 520.3 722.5 530.0C723.2 539.7 724.9 548.7 727.0 558.0C729.1 567.3 731.7 577.2 735.0 586.0C738.3 594.8 742.5 603.3 747.0 611.0C751.5 618.7 756.3 625.5 762.0 632.0C767.7 638.5 774.2 644.5 781.0 650.0C787.8 655.5 795.2 660.5 803.0 665.0C810.8 669.5 819.3 673.7 828.0 677.0C836.7 680.3 846.3 683.0 855.0 685.0C863.7 687.0 872.5 688.3 880.0 689.0C887.5 689.7 894.7 689.8 900.0 689.0C905.3 688.2 910.0 684.8 912.0 684.0" fill="none" stroke="#000" stroke-width="11.4" stroke-linecap="round" stroke-linejoin="round"/></g><g filter="url(#e2)"><circle cx="799" cy="386" r="9.5"/><circle cx="915" cy="674" r="13"/><circle cx="906.5" cy="641" r="8"/></g><g filter="url(#e1)"><path d="M748.0 590.0C750.0 593.7 755.3 605.2 760.0 612.0C764.7 618.8 770.0 625.0 776.0 631.0C782.0 637.0 788.7 643.0 796.0 648.0C803.3 653.0 811.7 657.3 820.0 661.0C828.3 664.7 837.3 667.7 846.0 670.0C854.7 672.3 864.2 674.2 872.0 675.0C879.8 675.8 889.5 675.0 893.0 675.0" fill="none" stroke="#000" stroke-width="6.9" stroke-linecap="round" stroke-linejoin="round"/></g><g filter="url(#e1)"><path d="M766.0 445.0C764.7 447.0 759.8 452.5 758.0 457.0C756.2 461.5 755.2 467.0 755.0 472.0C754.8 477.0 755.7 482.8 757.0 487.0C758.3 491.2 761.2 494.3 763.0 497.0C764.8 499.7 767.2 502.0 768.0 503.0" fill="none" stroke="#000" stroke-width="7.4" stroke-linecap="round" stroke-linejoin="round"/><circle cx="766.5" cy="445" r="6.3"/><circle cx="768.5" cy="503" r="6.3"/><path d="M761.0 515.0C759.0 516.3 751.8 519.2 749.0 523.0C746.2 526.8 744.5 533.0 744.0 538.0C743.5 543.0 744.2 548.2 746.0 553.0C747.8 557.8 751.2 563.2 755.0 567.0C758.8 570.8 766.7 574.5 769.0 576.0" fill="none" stroke="#000" stroke-width="7.9" stroke-linecap="round" stroke-linejoin="round"/><circle cx="761.5" cy="515" r="6.6"/><circle cx="770.5" cy="576.5" r="6.6"/><path d="M779.0 587.0C778.0 589.0 773.0 594.7 773.0 599.0C773.0 603.3 775.7 608.7 779.0 613.0C782.3 617.3 787.7 622.0 793.0 625.0C798.3 628.0 805.5 630.7 811.0 631.0C816.5 631.3 823.5 627.7 826.0 627.0" fill="none" stroke="#000" stroke-width="7.9" stroke-linecap="round" stroke-linejoin="round"/><circle cx="779.5" cy="587" r="6.6"/><circle cx="827.5" cy="626" r="6.6"/><path d="M839.0 635.0C838.3 637.0 833.7 643.0 835.0 647.0C836.3 651.0 841.8 655.8 847.0 659.0C852.2 662.2 859.8 665.0 866.0 666.0C872.2 667.0 879.0 666.5 884.0 665.0C889.0 663.5 894.0 658.3 896.0 657.0" fill="none" stroke="#000" stroke-width="7.9" stroke-linecap="round" stroke-linejoin="round"/><circle cx="839.5" cy="635" r="6.6"/><circle cx="897" cy="656.5" r="7"/></g><g filter="url(#e2)"><path d="M769.0 453.1C771.4 453.1 772.4 451.5 773.6 450.8C774.8 450.1 775.4 449.4 776.1 448.8C776.9 448.2 777.4 447.7 778.0 447.1C778.5 446.5 779.0 445.9 779.5 445.3C780.1 444.7 780.6 444.1 781.2 443.4C781.9 442.7 782.6 442.0 783.4 441.3C784.2 440.5 785.1 439.8 786.2 439.0C787.2 438.3 788.4 437.5 789.7 436.8C791.1 436.1 792.5 435.4 794.1 434.7C795.7 434.0 797.4 433.4 799.3 432.8C801.1 432.2 803.1 431.7 805.2 431.1C807.3 430.6 810.7 430.3 811.9 429.5C813.0 428.7 813.2 427.4 812.1 426.5C811.0 425.6 807.5 424.9 805.3 424.3C803.1 423.7 800.9 423.3 798.7 422.9C796.6 422.5 794.5 422.2 792.4 422.0C790.3 421.9 788.3 421.8 786.3 421.9C784.2 421.9 782.3 422.1 780.3 422.4C778.4 422.7 776.5 423.1 774.6 423.7C772.8 424.3 770.9 425.1 769.3 426.0C767.6 427.0 765.9 428.1 764.5 429.4C763.0 430.6 761.6 432.1 760.5 433.7C759.4 435.3 758.5 437.0 757.9 438.8C757.3 440.7 756.7 442.6 756.9 444.6C757.1 446.6 757.0 449.5 759.0 450.9C761.0 452.3 766.6 453.1 769.0 453.1Z"/></g><g filter="url(#e2)"><path d="M773.7 458.8C775.7 459.6 777.1 458.5 778.4 458.2C779.7 457.9 780.6 457.4 781.5 456.9C782.5 456.5 783.4 456.0 784.3 455.4C785.2 454.9 786.1 454.4 787.0 453.8C787.9 453.2 788.8 452.6 789.9 452.0C790.9 451.4 791.9 450.8 793.0 450.2C794.2 449.6 795.3 449.0 796.6 448.4C797.9 447.9 799.2 447.3 800.7 446.7C802.1 446.2 803.6 445.7 805.2 445.2C806.8 444.7 808.5 444.2 810.3 443.8C812.0 443.4 813.9 443.0 815.8 442.6C817.7 442.2 820.8 442.2 821.8 441.5C822.9 440.8 823.1 439.4 822.2 438.5C821.2 437.7 818.1 437.0 816.2 436.4C814.2 435.8 812.2 435.3 810.3 434.9C808.3 434.4 806.4 434.1 804.5 433.8C802.6 433.6 800.7 433.4 798.9 433.3C797.0 433.2 795.2 433.1 793.3 433.2C791.5 433.3 789.7 433.5 788.0 433.8C786.2 434.1 784.5 434.4 782.8 435.0C781.1 435.5 779.5 436.1 777.9 436.9C776.3 437.6 774.8 438.5 773.5 439.6C772.1 440.6 770.8 441.8 769.7 443.1C768.6 444.4 767.5 445.8 766.9 447.5C766.4 449.2 765.2 451.4 766.3 453.2C767.4 455.1 771.7 457.9 773.7 458.8Z"/></g><g filter="url(#e2)"><path d="M780.6 465.1C782.1 466.2 783.5 465.4 784.8 465.4C786.0 465.3 786.9 464.9 787.9 464.6C788.9 464.3 789.9 464.0 790.8 463.6C791.8 463.2 792.8 462.8 793.7 462.4C794.7 462.0 795.7 461.5 796.8 461.1C797.8 460.6 798.9 460.2 800.0 459.7C801.1 459.3 802.3 458.9 803.5 458.4C804.7 458.0 806.0 457.6 807.3 457.2C808.7 456.8 810.0 456.4 811.5 456.1C812.9 455.7 814.4 455.4 815.9 455.1C817.5 454.8 819.0 454.6 820.7 454.3C822.3 454.0 824.9 454.1 825.8 453.5C826.7 452.9 827.0 451.3 826.2 450.5C825.4 449.7 822.8 449.2 821.2 448.6C819.5 448.1 817.8 447.6 816.2 447.2C814.5 446.8 812.9 446.4 811.3 446.2C809.7 445.9 808.0 445.6 806.4 445.5C804.8 445.3 803.2 445.2 801.7 445.1C800.1 445.1 798.5 445.1 797.0 445.3C795.4 445.4 793.9 445.6 792.4 445.8C790.9 446.1 789.5 446.5 788.0 446.9C786.6 447.4 785.2 448.0 783.9 448.6C782.6 449.3 781.3 450.1 780.2 451.0C779.0 452.0 777.9 452.9 777.1 454.2C776.3 455.5 774.8 457.0 775.4 458.9C776.0 460.7 779.0 464.1 780.6 465.1Z"/></g><g filter="url(#e2)"><path d="M762.5 472.1C763.8 472.8 764.7 472.3 765.6 472.2C766.4 472.2 767.0 472.0 767.6 471.8C768.3 471.6 768.8 471.3 769.5 471.1C770.1 470.8 770.7 470.5 771.4 470.1C772.1 469.8 772.9 469.5 773.6 469.1C774.4 468.8 775.3 468.4 776.2 468.0C777.1 467.7 778.1 467.3 779.1 466.9C780.2 466.6 781.3 466.2 782.5 465.9C783.7 465.6 784.9 465.3 786.2 465.0C787.6 464.7 789.0 464.5 790.4 464.3C791.8 464.0 793.4 463.8 794.9 463.6C796.5 463.4 799.0 463.4 799.9 463.0C800.7 462.6 800.9 461.6 800.1 461.0C799.4 460.4 796.9 459.8 795.3 459.3C793.8 458.8 792.2 458.4 790.7 458.0C789.2 457.6 787.7 457.3 786.2 457.0C784.8 456.7 783.4 456.5 781.9 456.3C780.5 456.1 779.2 456.0 777.8 455.9C776.4 455.9 775.1 455.9 773.8 456.0C772.5 456.1 771.2 456.2 770.0 456.4C768.7 456.7 767.5 457.0 766.3 457.4C765.2 457.8 764.0 458.3 763.0 458.9C762.0 459.6 761.0 460.3 760.2 461.1C759.3 462.0 758.5 462.9 758.0 464.0C757.6 465.1 756.8 466.6 757.5 467.9C758.3 469.3 761.1 471.4 762.5 472.1Z"/></g><g filter="url(#e1)"><circle cx="766" cy="446" r="6.5"/><circle cx="814" cy="460.5" r="6"/><circle cx="829" cy="462.5" r="5.5"/><path d="M818.0 440.0C820.0 441.2 827.3 444.0 830.0 447.0C832.7 450.0 834.2 455.3 834.0 458.0C833.8 460.7 829.8 462.2 829.0 463.0" fill="none" stroke="#000" stroke-width="6.4" stroke-linecap="round" stroke-linejoin="round"/></g><g filter="url(#e1)"><circle cx="762.5" cy="433" r="4"/><circle cx="772.5" cy="427" r="4.2"/><circle cx="782.5" cy="424" r="4.4"/><circle cx="794" cy="421" r="4.5"/><circle cx="805" cy="420.5" r="4.6"/><circle cx="816" cy="422.5" r="4.7"/><circle cx="826" cy="427" r="4.8"/><circle cx="834.5" cy="434" r="4.9"/><circle cx="841" cy="442.5" r="5"/></g><path d="M832.0 400.0C837.3 392.7 848.7 387.7 860.0 386.0C871.3 384.3 889.7 385.2 900.0 390.0C910.3 394.8 918.0 405.0 922.0 415.0C926.0 425.0 926.0 440.0 924.0 450.0C922.0 460.0 917.3 468.7 910.0 475.0C902.7 481.3 890.0 486.8 880.0 488.0C870.0 489.2 857.3 486.7 850.0 482.0C842.7 477.3 839.7 468.7 836.0 460.0C832.3 451.3 828.7 440.0 828.0 430.0C827.3 420.0 826.7 407.3 832.0 400.0Z" fill="#8e8e8e" opacity="1"/><g filter="url(#e3)"><circle cx="861" cy="423" r="19"/></g><g filter="url(#e2)"><path d="M835.7 420.1C839.0 421.0 841.9 418.0 844.4 416.9C846.8 415.7 848.7 414.3 850.6 413.1C852.5 411.9 854.1 410.8 855.8 409.6C857.5 408.5 859.0 407.5 860.6 406.5C862.1 405.5 863.6 404.5 865.1 403.6C866.7 402.7 868.2 401.8 869.9 401.0C871.5 400.2 873.2 399.4 875.0 398.7C876.8 398.1 878.6 397.4 880.7 396.9C882.7 396.4 884.8 396.0 887.1 395.7C889.4 395.4 891.8 395.2 894.3 395.2C896.8 395.1 899.4 395.2 902.2 395.4C905.0 395.6 909.2 396.9 911.0 396.3C912.8 395.7 913.9 393.4 913.0 391.7C912.1 390.0 908.0 387.8 905.4 386.2C902.8 384.5 900.1 383.1 897.4 381.8C894.7 380.6 892.0 379.5 889.2 378.5C886.4 377.6 883.5 376.9 880.7 376.4C877.8 375.9 874.9 375.6 872.0 375.5C869.0 375.4 866.1 375.6 863.1 376.0C860.2 376.4 857.3 377.1 854.4 378.0C851.6 378.9 848.8 380.1 846.1 381.5C843.4 383.0 840.8 384.7 838.4 386.6C836.1 388.6 833.8 390.7 831.8 393.2C829.8 395.7 827.8 398.3 826.6 401.4C825.3 404.5 822.8 408.7 824.3 411.9C825.8 415.0 832.4 419.3 835.7 420.1Z"/></g><g filter="url(#e2)"><path d="M897.2 393.1C895.8 396.2 897.9 398.9 898.4 401.2C899.0 403.6 899.9 405.3 900.7 407.0C901.4 408.8 902.2 410.4 902.9 412.0C903.7 413.5 904.4 415.0 905.2 416.4C905.9 417.9 906.6 419.4 907.3 420.9C907.9 422.4 908.6 423.9 909.2 425.5C909.8 427.1 910.4 428.7 910.9 430.5C911.4 432.3 911.9 434.1 912.2 436.1C912.6 438.0 912.8 440.1 913.0 442.3C913.2 444.5 913.2 446.7 913.2 449.1C913.1 451.5 912.9 454.0 912.7 456.7C912.5 459.3 911.2 463.2 911.7 464.9C912.3 466.7 914.6 467.9 916.3 467.1C917.9 466.3 920.2 462.6 921.9 460.2C923.5 457.8 925.0 455.4 926.4 453.0C927.7 450.5 928.9 448.0 930.0 445.5C931.0 442.9 932.0 440.3 932.7 437.7C933.4 435.1 934.0 432.4 934.3 429.7C934.7 427.0 934.9 424.3 934.8 421.5C934.7 418.8 934.5 416.0 934.0 413.3C933.4 410.6 932.7 407.9 931.7 405.3C930.8 402.7 929.5 400.2 928.1 397.8C926.6 395.4 924.9 393.1 922.9 391.1C920.9 389.0 918.8 387.0 916.1 385.6C913.4 384.3 910.0 381.6 906.8 382.9C903.7 384.1 898.6 390.1 897.2 393.1Z"/></g><g filter="url(#e2)"><path d="M915.9 450.0C912.7 450.0 911.0 452.8 909.2 454.1C907.5 455.5 906.4 456.8 905.1 458.0C903.9 459.3 902.9 460.4 902.0 461.5C901.0 462.7 900.1 463.7 899.2 464.7C898.3 465.8 897.4 466.8 896.5 467.8C895.6 468.8 894.7 469.8 893.6 470.7C892.5 471.7 891.4 472.7 890.2 473.6C888.9 474.6 887.5 475.5 886.0 476.4C884.5 477.3 882.8 478.1 881.0 478.9C879.1 479.7 877.1 480.4 875.0 481.0C872.9 481.6 870.6 482.1 868.1 482.6C865.7 483.1 861.7 483.1 860.3 484.0C858.9 484.9 858.5 486.8 859.7 488.0C860.8 489.2 864.8 490.4 867.4 491.3C870.0 492.3 872.5 493.0 875.1 493.6C877.7 494.2 880.2 494.6 882.8 494.9C885.3 495.1 887.9 495.3 890.4 495.2C893.0 495.1 895.5 494.8 898.0 494.3C900.5 493.9 903.0 493.2 905.4 492.3C907.8 491.4 910.2 490.2 912.4 488.9C914.6 487.5 916.7 485.9 918.6 484.1C920.5 482.4 922.3 480.4 923.8 478.2C925.3 476.0 926.7 473.7 927.6 471.2C928.6 468.7 929.5 466.0 929.6 463.2C929.7 460.3 930.4 456.3 928.1 454.0C925.8 451.8 919.0 449.9 915.9 450.0Z"/></g><g filter="url(#e2)"><path d="M875.4 484.5C875.0 481.8 872.1 480.6 870.6 479.1C869.0 477.7 867.5 476.8 866.2 475.9C864.8 474.9 863.5 474.2 862.3 473.4C861.1 472.7 860.0 472.1 859.0 471.4C857.9 470.8 857.0 470.3 856.1 469.8C855.2 469.2 854.3 468.7 853.5 468.2C852.7 467.7 851.9 467.2 851.1 466.6C850.3 466.0 849.6 465.4 848.8 464.7C848.1 464.0 847.4 463.2 846.7 462.2C846.0 461.3 845.4 460.3 844.8 459.1C844.2 457.9 843.7 456.6 843.3 455.2C842.8 453.7 842.8 451.3 842.0 450.4C841.1 449.5 839.1 448.9 838.0 449.6C836.9 450.3 836.1 452.9 835.4 454.6C834.7 456.3 834.1 458.0 833.8 459.8C833.4 461.6 833.1 463.4 833.1 465.3C833.0 467.1 833.1 469.0 833.4 470.9C833.7 472.7 834.2 474.6 834.9 476.5C835.6 478.3 836.5 480.1 837.5 481.8C838.6 483.5 839.8 485.1 841.2 486.6C842.6 488.1 844.2 489.5 845.9 490.8C847.6 492.0 849.5 493.1 851.4 494.1C853.4 495.0 855.5 495.8 857.7 496.4C859.9 496.9 862.2 497.4 864.7 497.3C867.2 497.1 870.8 497.6 872.6 495.5C874.4 493.4 875.7 487.2 875.4 484.5Z"/></g><g filter="url(#e2)"><path d="M849.9 461.8C851.9 462.1 853.0 460.7 854.1 460.2C855.2 459.7 855.8 459.1 856.6 458.6C857.3 458.0 857.9 457.6 858.4 457.1C859.0 456.6 859.5 456.1 859.9 455.7C860.4 455.2 860.9 454.8 861.4 454.3C861.9 453.9 862.3 453.4 862.9 453.0C863.5 452.5 864.1 452.0 864.8 451.6C865.4 451.2 866.2 450.7 867.1 450.3C867.9 449.9 868.8 449.5 869.9 449.2C870.9 448.9 872.0 448.6 873.2 448.3C874.4 448.1 875.7 448.0 877.1 447.8C878.5 447.6 880.7 448.0 881.6 447.4C882.4 446.9 883.0 445.5 882.4 444.6C881.9 443.7 879.8 442.7 878.4 442.0C877.1 441.2 875.7 440.6 874.3 440.0C872.9 439.4 871.5 438.9 870.1 438.6C868.7 438.2 867.3 437.9 865.8 437.7C864.4 437.5 862.9 437.4 861.5 437.5C860.0 437.5 858.5 437.7 857.1 438.0C855.7 438.4 854.2 438.8 852.9 439.4C851.5 440.0 850.2 440.8 848.9 441.6C847.7 442.5 846.6 443.5 845.6 444.7C844.6 445.8 843.7 447.1 843.0 448.4C842.3 449.8 841.6 451.3 841.5 452.9C841.3 454.5 840.6 456.7 842.1 458.2C843.5 459.7 847.9 461.5 849.9 461.8Z"/></g><g filter="url(#e2)"><path d="M893.7 405.4C892.3 407.5 893.7 409.8 893.9 411.7C894.1 413.5 894.6 414.9 895.0 416.4C895.5 417.8 895.9 419.1 896.4 420.4C896.8 421.7 897.3 422.9 897.7 424.1C898.2 425.3 898.6 426.4 899.0 427.6C899.4 428.8 899.8 430.0 900.2 431.2C900.5 432.4 900.8 433.6 901.1 434.9C901.4 436.2 901.6 437.6 901.8 439.0C902.0 440.4 902.1 441.9 902.1 443.4C902.1 444.9 902.1 446.5 902.0 448.2C901.8 449.8 901.6 451.5 901.3 453.3C901.0 455.1 899.9 457.7 900.3 459.0C900.7 460.3 902.4 461.4 903.7 461.0C905.0 460.6 906.8 458.2 908.1 456.7C909.5 455.2 910.7 453.6 911.8 451.9C913.0 450.3 914.0 448.6 914.9 446.9C915.8 445.1 916.6 443.3 917.3 441.5C918.0 439.6 918.6 437.7 919.0 435.8C919.4 433.8 919.7 431.8 919.8 429.8C920.0 427.8 920.0 425.8 919.8 423.8C919.6 421.7 919.3 419.7 918.7 417.7C918.2 415.7 917.5 413.7 916.6 411.9C915.7 410.0 914.7 408.1 913.4 406.4C912.1 404.7 910.8 403.0 908.9 401.7C907.0 400.4 904.8 398.0 902.3 398.6C899.7 399.3 895.1 403.2 893.7 405.4Z"/></g><g filter="url(#e2)"><path d="M901.3 449.8C899.0 449.5 897.8 451.2 896.5 451.9C895.3 452.6 894.4 453.3 893.6 454.0C892.7 454.7 892.0 455.4 891.3 456.0C890.6 456.7 890.0 457.3 889.3 457.9C888.7 458.6 888.1 459.2 887.5 459.8C886.8 460.4 886.2 461.0 885.5 461.6C884.8 462.2 884.1 462.8 883.3 463.4C882.4 464.0 881.6 464.6 880.6 465.2C879.6 465.7 878.5 466.3 877.4 466.7C876.2 467.2 875.0 467.7 873.6 468.1C872.3 468.5 870.8 468.8 869.3 469.1C867.8 469.5 865.3 469.2 864.4 470.0C863.4 470.8 862.9 472.9 863.6 474.0C864.3 475.0 866.8 475.7 868.4 476.4C870.1 477.1 871.7 477.7 873.4 478.1C875.0 478.6 876.7 479.0 878.4 479.3C880.0 479.5 881.7 479.7 883.4 479.7C885.1 479.8 886.8 479.7 888.5 479.5C890.2 479.2 891.9 478.9 893.5 478.4C895.1 477.9 896.7 477.2 898.3 476.4C899.8 475.6 901.3 474.7 902.7 473.6C904.0 472.5 905.3 471.3 906.5 470.0C907.6 468.6 908.6 467.1 909.4 465.5C910.2 463.9 911.0 462.2 911.2 460.4C911.4 458.5 912.3 455.9 910.7 454.2C909.0 452.4 903.7 450.2 901.3 449.8Z"/></g><g filter="url(#e2)"><path d="M884.8 418.5C883.8 420.1 884.7 421.8 884.8 423.1C884.9 424.4 885.3 425.4 885.5 426.4C885.8 427.4 886.1 428.2 886.3 429.1C886.6 430.0 886.9 430.8 887.1 431.6C887.4 432.4 887.7 433.2 887.9 434.0C888.2 434.8 888.4 435.6 888.6 436.5C888.8 437.4 889.0 438.2 889.1 439.2C889.2 440.1 889.4 441.1 889.4 442.1C889.4 443.2 889.4 444.2 889.3 445.4C889.3 446.5 889.1 447.7 888.9 449.0C888.7 450.2 888.4 451.5 888.0 452.9C887.7 454.2 886.6 456.1 886.8 457.1C887.0 458.1 888.2 459.1 889.2 458.9C890.2 458.7 891.8 456.9 892.9 455.8C894.0 454.8 895.0 453.6 896.0 452.5C897.0 451.3 897.9 450.1 898.7 448.9C899.5 447.6 900.2 446.3 900.8 445.0C901.5 443.7 902.0 442.3 902.4 440.9C902.9 439.4 903.2 438.0 903.4 436.5C903.6 435.0 903.7 433.5 903.6 432.0C903.6 430.5 903.4 429.0 903.1 427.5C902.8 426.0 902.3 424.5 901.7 423.1C901.1 421.7 900.3 420.3 899.4 419.1C898.4 417.8 897.4 416.6 896.1 415.6C894.7 414.7 893.1 413.0 891.2 413.5C889.3 413.9 885.9 416.9 884.8 418.5Z"/></g><g filter="url(#e2)"><path d="M869.5 468.5C869.8 466.8 868.6 466.0 868.1 465.1C867.6 464.2 867.0 463.7 866.6 463.1C866.1 462.5 865.6 462.1 865.2 461.7C864.8 461.3 864.4 461.0 864.0 460.7C863.6 460.4 863.3 460.1 863.0 459.9C862.6 459.6 862.3 459.5 862.0 459.2C861.6 459.0 861.3 458.8 861.0 458.6C860.7 458.3 860.4 458.1 860.0 457.8C859.7 457.4 859.4 457.1 859.1 456.6C858.8 456.2 858.6 455.7 858.3 455.1C858.1 454.5 857.9 453.8 857.8 453.1C857.6 452.3 857.9 451.2 857.4 450.6C856.9 450.0 855.4 449.3 854.6 449.4C853.8 449.6 853.2 450.8 852.6 451.5C852.0 452.3 851.4 453.1 851.0 453.9C850.6 454.8 850.2 455.7 849.9 456.6C849.6 457.6 849.4 458.6 849.3 459.6C849.2 460.6 849.2 461.6 849.3 462.7C849.4 463.7 849.7 464.8 850.0 465.8C850.4 466.8 850.8 467.8 851.4 468.7C851.9 469.6 852.6 470.5 853.3 471.3C854.1 472.1 854.9 472.9 855.8 473.5C856.7 474.2 857.7 474.8 858.8 475.2C859.9 475.6 861.0 476.1 862.2 476.1C863.5 476.2 865.2 476.7 866.5 475.5C867.7 474.2 869.3 470.2 869.5 468.5Z"/></g><g filter="url(#e2)"><circle cx="830" cy="412.5" r="8.5"/></g><ellipse cx="884" cy="446" rx="6" ry="8" fill="url(#dk)" opacity="0.6"/><g filter="url(#e1)"><path d="M867.1 494.6C867.3 495.9 868.9 496.6 869.9 497.2C870.9 497.9 872.0 498.3 873.1 498.6C874.2 499.0 875.4 499.2 876.5 499.3C877.7 499.5 878.9 499.5 880.0 499.5C881.1 499.5 882.3 499.3 883.4 499.1C884.6 499.0 885.7 498.7 886.8 498.4C887.9 498.0 889.0 497.7 890.1 497.2C891.2 496.8 892.2 496.3 893.2 495.7C894.3 495.2 895.3 494.6 896.3 493.9C897.3 493.3 898.2 492.6 899.2 491.9C900.1 491.1 901.1 490.4 902.0 489.5C902.9 488.7 904.3 487.6 904.6 486.8C904.8 486.1 904.2 485.3 903.4 485.2C902.7 485.1 901.1 485.9 900.0 486.2C898.9 486.6 897.9 486.9 896.8 487.1C895.8 487.4 894.7 487.6 893.7 487.8C892.7 488.0 891.7 488.2 890.8 488.3C889.8 488.4 888.8 488.5 887.9 488.5C887.0 488.6 886.1 488.6 885.2 488.6C884.3 488.6 883.4 488.6 882.6 488.6C881.7 488.6 880.9 488.5 880.0 488.5C879.1 488.5 878.3 488.4 877.5 488.4C876.6 488.4 875.8 488.3 874.9 488.4C874.0 488.4 873.1 488.3 872.1 488.5C871.1 488.7 869.7 488.4 868.9 489.4C868.0 490.4 867.0 493.3 867.1 494.6Z"/></g><g filter="url(#e1)"><circle cx="906" cy="484" r="5"/><circle cx="914" cy="476" r="4.6"/><circle cx="924" cy="468" r="6"/></g><path d="M924.0 470.0C920.0 463.8 923.3 451.3 926.0 445.0C928.7 438.7 933.8 434.8 940.0 432.0C946.2 429.2 957.2 428.7 963.0 428.0C968.8 427.3 973.0 419.3 975.0 428.0C977.0 436.7 979.2 471.0 975.0 480.0C970.8 489.0 958.5 483.7 950.0 482.0C941.5 480.3 928.0 476.2 924.0 470.0Z" fill="#8a8a8a" opacity="1"/><ellipse cx="963" cy="452" rx="22" ry="14" fill="url(#hl)" opacity="0.95"/><g filter="url(#e2)"><path d="M924.0 469.0C923.5 466.2 920.0 457.2 921.0 452.0C922.0 446.8 925.8 441.5 930.0 438.0C934.2 434.5 940.5 432.4 946.0 431.0C951.5 429.6 958.2 429.8 963.0 429.5C967.8 429.2 973.0 429.5 975.0 429.5" fill="none" stroke="#000" stroke-width="10.4" stroke-linecap="round" stroke-linejoin="round"/></g><g filter="url(#e1)"><circle cx="937.5" cy="462.5" r="5.6"/><circle cx="951" cy="462" r="5.6"/><path d="M925.0 471.0C925.8 472.0 928.0 477.2 930.0 477.0C932.0 476.8 935.8 471.2 937.0 470.0" fill="none" stroke="#000" stroke-width="5.9" stroke-linecap="round" stroke-linejoin="round"/><path d="M938.0 465.0C939.0 466.5 941.8 474.0 944.0 474.0C946.2 474.0 949.8 466.5 951.0 465.0" fill="none" stroke="#000" stroke-width="6.4" stroke-linecap="round" stroke-linejoin="round"/><path d="M952.0 465.0C952.8 466.7 955.2 472.9 957.0 475.0C958.8 477.1 960.8 477.5 963.0 477.5C965.2 477.5 968.8 475.4 970.0 475.0" fill="none" stroke="#000" stroke-width="6.9" stroke-linecap="round" stroke-linejoin="round"/></g><path d="M890.0 340.0C896.2 335.0 915.0 333.3 925.0 335.0C935.0 336.7 943.7 343.3 950.0 350.0C956.3 356.7 958.8 370.8 963.0 375.0C967.2 379.2 973.0 365.8 975.0 375.0C977.0 384.2 980.8 420.8 975.0 430.0C969.2 439.2 949.2 433.3 940.0 430.0C930.8 426.7 926.7 415.8 920.0 410.0C913.3 404.2 905.3 402.5 900.0 395.0C894.7 387.5 889.7 374.2 888.0 365.0C886.3 355.8 883.8 345.0 890.0 340.0Z" fill="#8c8c8c" opacity="1"/><ellipse cx="921" cy="395" rx="10" ry="5.5" fill="url(#dk)" opacity="1.6"/><g filter="url(#e2)"><path d="M908.0 360.0C907.2 362.7 903.3 370.8 903.0 376.0C902.7 381.2 903.8 386.8 906.0 391.0C908.2 395.2 911.7 399.0 916.0 401.0C920.3 403.0 927.2 403.3 932.0 403.0C936.8 402.7 942.8 399.7 945.0 399.0" fill="none" stroke="#000" stroke-width="9.4" stroke-linecap="round" stroke-linejoin="round"/><circle cx="936" cy="386" r="8"/></g><g filter="url(#e1)"><path d="M917.0 378.0C918.3 377.3 922.2 374.0 925.0 374.0C927.8 374.0 932.5 377.3 934.0 378.0" fill="none" stroke="#000" stroke-width="6.4" stroke-linecap="round" stroke-linejoin="round"/><circle cx="946.5" cy="399" r="5.6"/></g><g filter="url(#e2)"><path d="M893.0 344.0C895.5 343.8 902.7 342.2 908.0 343.0C913.3 343.8 919.3 346.0 925.0 349.0C930.7 352.0 937.0 357.0 942.0 361.0C947.0 365.0 951.5 370.0 955.0 373.0C958.5 376.0 959.7 378.0 963.0 379.0C966.3 380.0 973.0 379.0 975.0 379.0" fill="none" stroke="#000" stroke-width="10.9" stroke-linecap="round" stroke-linejoin="round"/></g><g filter="url(#e2)"><path d="M965.8 417.0C966.9 416.0 966.5 414.0 966.5 412.7C966.6 411.4 966.4 410.1 966.3 409.0C966.1 407.8 965.9 406.6 965.7 405.5C965.5 404.4 965.2 403.3 964.9 402.3C964.7 401.2 964.4 400.2 964.1 399.2C963.8 398.2 963.5 397.2 963.2 396.3C963.0 395.3 962.7 394.4 962.4 393.5C962.1 392.5 961.9 391.6 961.6 390.7C961.3 389.8 961.1 388.9 960.9 388.1C960.6 387.2 960.4 386.3 960.2 385.4C960.0 384.6 959.8 383.7 959.6 382.8C959.4 382.0 959.4 380.7 959.0 380.2C958.6 379.7 957.6 379.5 957.0 379.8C956.4 380.2 956.0 381.4 955.6 382.3C955.1 383.2 954.8 384.1 954.4 385.0C954.1 386.0 953.8 386.9 953.5 387.9C953.3 389.0 953.0 390.0 952.8 391.1C952.7 392.1 952.5 393.2 952.4 394.3C952.3 395.4 952.3 396.6 952.3 397.7C952.3 398.9 952.3 400.1 952.4 401.2C952.5 402.4 952.6 403.6 952.9 404.8C953.1 406.1 953.3 407.3 953.7 408.5C954.0 409.7 954.5 411.0 955.0 412.2C955.5 413.4 956.1 414.6 956.9 415.7C957.8 416.9 958.7 418.8 960.2 419.0C961.7 419.2 964.7 418.1 965.8 417.0Z"/></g><g filter="url(#e2)"><path d="M961.3 373.1C962.4 371.4 961.5 370.0 961.3 368.6C961.1 367.3 960.6 366.3 960.1 365.1C959.6 364.0 958.9 363.0 958.3 361.9C957.6 360.9 956.8 359.8 956.0 358.8C955.3 357.7 954.4 356.7 953.6 355.6C952.7 354.5 951.8 353.4 950.8 352.3C949.9 351.2 948.9 350.1 947.9 348.9C946.9 347.8 945.9 346.6 944.9 345.4C943.8 344.2 942.8 342.9 941.7 341.6C940.6 340.4 939.5 339.0 938.4 337.7C937.3 336.4 936.2 335.0 935.0 333.6C933.9 332.2 932.4 329.9 931.4 329.4C930.3 328.9 928.9 329.5 928.6 330.6C928.4 331.8 929.3 334.4 929.6 336.2C930.0 338.0 930.5 339.8 930.9 341.5C931.3 343.2 931.8 344.9 932.3 346.6C932.8 348.3 933.3 349.9 933.8 351.5C934.3 353.1 934.8 354.7 935.4 356.2C936.0 357.7 936.5 359.2 937.2 360.7C937.8 362.1 938.4 363.5 939.1 364.9C939.8 366.2 940.5 367.5 941.3 368.8C942.1 370.0 942.9 371.2 943.7 372.3C944.6 373.4 945.6 374.5 946.6 375.4C947.6 376.3 948.7 377.3 950.0 377.8C951.4 378.4 952.9 379.6 954.7 378.9C956.6 378.1 960.2 374.9 961.3 373.1Z"/></g><g filter="url(#e2)"><path d="M963.7 370.3C965.1 369.0 964.5 367.1 964.6 365.7C964.7 364.2 964.4 363.0 964.1 361.6C963.9 360.3 963.5 359.1 963.1 357.8C962.7 356.6 962.3 355.3 961.8 354.1C961.3 352.8 960.8 351.6 960.3 350.3C959.8 349.0 959.2 347.8 958.6 346.5C958.1 345.2 957.5 343.9 956.9 342.6C956.3 341.3 955.7 340.0 955.1 338.7C954.5 337.3 953.9 336.0 953.2 334.6C952.6 333.2 952.0 331.9 951.4 330.4C950.8 329.0 950.2 327.6 949.5 326.2C948.9 324.7 948.3 322.4 947.5 321.8C946.6 321.1 945.1 321.3 944.5 322.2C943.9 323.1 944.0 325.5 943.9 327.1C943.7 328.7 943.7 330.3 943.6 331.9C943.5 333.5 943.5 335.1 943.5 336.6C943.5 338.2 943.5 339.8 943.6 341.3C943.7 342.9 943.7 344.4 943.9 346.0C944.0 347.5 944.2 349.0 944.4 350.5C944.6 352.0 944.8 353.5 945.1 354.9C945.4 356.4 945.8 357.9 946.2 359.3C946.6 360.7 947.1 362.1 947.6 363.4C948.2 364.8 948.8 366.1 949.5 367.4C950.3 368.6 951.0 369.9 952.2 370.9C953.3 372.0 954.4 373.8 956.3 373.7C958.2 373.6 962.3 371.7 963.7 370.3Z"/></g><g filter="url(#e2)"><path d="M951.2 390.4C950.1 389.9 949.3 390.7 948.6 391.0C947.8 391.3 947.2 391.8 946.6 392.3C946.1 392.7 945.6 393.2 945.1 393.7C944.6 394.2 944.1 394.8 943.7 395.3C943.3 395.9 942.9 396.4 942.5 397.0C942.1 397.6 941.8 398.1 941.4 398.7C941.1 399.3 940.8 399.9 940.5 400.5C940.2 401.1 939.9 401.7 939.6 402.3C939.4 402.8 939.1 403.4 938.9 404.0C938.6 404.6 938.4 405.2 938.2 405.8C938.0 406.4 937.8 407.0 937.6 407.6C937.5 408.2 937.0 408.9 937.2 409.4C937.4 409.9 938.3 410.5 938.8 410.6C939.3 410.7 939.9 410.0 940.4 409.7C941.0 409.4 941.5 409.1 942.0 408.7C942.5 408.4 943.0 408.1 943.5 407.7C944.0 407.4 944.5 407.0 945.0 406.6C945.6 406.3 946.1 405.9 946.6 405.5C947.1 405.1 947.6 404.7 948.1 404.3C948.6 403.9 949.1 403.4 949.6 403.0C950.0 402.5 950.5 402.1 951.0 401.6C951.4 401.1 951.9 400.6 952.3 400.0C952.7 399.5 953.2 398.9 953.5 398.3C953.9 397.7 954.3 397.1 954.5 396.3C954.7 395.5 955.4 394.6 954.8 393.6C954.3 392.7 952.2 390.8 951.2 390.4Z"/></g><g filter="url(#e1)"><path d="M965.4 414.8C966.5 414.4 966.5 413.1 966.8 412.3C967.1 411.4 967.2 410.6 967.3 409.8C967.4 408.9 967.4 408.1 967.4 407.3C967.4 406.4 967.4 405.6 967.4 404.8C967.3 404.0 967.2 403.1 967.1 402.3C967.1 401.4 966.9 400.6 966.8 399.8C966.7 398.9 966.6 398.1 966.5 397.2C966.3 396.3 966.2 395.5 966.0 394.6C965.9 393.8 965.7 392.9 965.6 392.0C965.4 391.2 965.3 390.3 965.1 389.4C964.9 388.5 964.8 387.6 964.6 386.8C964.4 385.9 964.4 384.5 964.0 384.1C963.6 383.6 962.5 383.5 962.0 383.9C961.5 384.4 961.4 385.7 961.1 386.6C960.8 387.4 960.6 388.3 960.3 389.2C960.1 390.1 959.9 391.0 959.7 391.8C959.5 392.7 959.3 393.6 959.1 394.5C958.9 395.4 958.7 396.2 958.6 397.1C958.4 398.0 958.3 398.9 958.2 399.8C958.1 400.6 958.0 401.5 957.9 402.4C957.8 403.3 957.8 404.1 957.8 405.0C957.7 405.9 957.8 406.7 957.8 407.6C957.9 408.5 958.0 409.3 958.2 410.2C958.3 411.0 958.5 411.9 958.9 412.7C959.3 413.5 959.5 414.8 960.6 415.2C961.6 415.5 964.4 415.3 965.4 414.8Z"/></g><g filter="url(#e3)"><path d="M963.0 300.5C959.2 301.4 954.7 303.1 952.0 306.0C949.3 308.9 947.3 313.7 947.0 318.0C946.7 322.3 948.3 327.8 950.0 332.0C951.7 336.2 954.8 340.0 957.0 343.0C959.2 346.0 960.0 348.8 963.0 350.0C966.0 351.2 973.0 358.2 975.0 350.0C977.0 341.8 977.0 308.8 975.0 300.5C973.0 292.2 966.8 299.6 963.0 300.5Z"/></g><path d="M963 309C957 311 954 318 955.5 326C957 334 960 340 963 344L975 344L975 309Z" fill="#2e2e2e" filter="url(#b2)"/><ellipse cx="963" cy="316" rx="5" ry="5" fill="#8a8a8a" filter="url(#b2)"/><g filter="url(#e3)"><path d="M801.4 397.6C803.1 399.7 806.5 399.0 808.9 399.2C811.3 399.4 813.6 399.1 816.0 398.8C818.3 398.6 820.6 398.2 822.9 397.7C825.2 397.2 827.5 396.6 829.8 396.0C832.1 395.4 834.4 394.7 836.7 394.0C838.9 393.3 841.2 392.5 843.5 391.7C845.8 390.9 848.1 390.0 850.4 389.2C852.7 388.3 855.0 387.4 857.4 386.5C859.7 385.6 862.0 384.7 864.3 383.7C866.7 382.8 869.0 381.8 871.4 380.8C873.7 379.8 876.1 378.8 878.5 377.8C880.8 376.7 884.5 375.8 885.5 374.4C886.5 373.1 885.9 370.4 884.5 369.6C883.0 368.7 879.2 369.5 876.6 369.6C874.0 369.6 871.5 369.7 868.9 369.9C866.3 370.0 863.8 370.1 861.3 370.3C858.8 370.5 856.2 370.6 853.7 370.8C851.3 371.0 848.8 371.3 846.3 371.5C843.8 371.8 841.4 372.0 839.0 372.3C836.5 372.6 834.1 373.0 831.8 373.4C829.4 373.7 827.0 374.2 824.7 374.7C822.3 375.2 820.0 375.7 817.7 376.3C815.4 377.0 813.2 377.6 811.0 378.5C808.8 379.4 806.6 380.2 804.5 381.5C802.4 382.8 799.1 383.8 798.6 386.4C798.1 389.1 799.7 395.4 801.4 397.6Z"/></g><g filter="url(#e2)"><path d="M925.6 329.0C925.2 327.1 923.4 326.6 922.2 325.9C921.0 325.2 919.7 324.9 918.4 324.7C917.1 324.4 915.8 324.4 914.5 324.4C913.3 324.4 912.0 324.6 910.7 324.9C909.5 325.1 908.2 325.5 907.0 325.9C905.8 326.3 904.6 326.9 903.5 327.5C902.3 328.0 901.2 328.7 900.1 329.4C899.1 330.1 898.0 330.9 897.0 331.7C896.0 332.5 895.1 333.4 894.2 334.3C893.2 335.3 892.4 336.2 891.5 337.2C890.7 338.2 889.8 339.3 889.1 340.4C888.3 341.5 887.0 342.9 887.0 343.9C887.0 344.8 888.1 346.0 889.0 346.1C889.9 346.3 891.4 345.3 892.6 344.9C893.8 344.5 894.9 344.1 896.0 343.8C897.1 343.4 898.2 343.2 899.2 342.9C900.3 342.7 901.3 342.5 902.3 342.3C903.3 342.1 904.3 342.0 905.2 341.8C906.2 341.7 907.1 341.6 908.0 341.5C908.9 341.5 909.8 341.4 910.7 341.3C911.6 341.3 912.4 341.2 913.3 341.1C914.1 341.0 915.0 341.0 915.8 340.8C916.7 340.7 917.5 340.6 918.4 340.3C919.3 340.1 920.2 339.9 921.2 339.4C922.2 338.8 923.7 338.8 924.4 337.0C925.1 335.3 926.0 330.8 925.6 329.0Z"/></g><g filter="url(#e2)"><path d="M886.6 339.9C884.8 339.2 883.6 340.1 882.4 340.4C881.3 340.7 880.6 341.2 879.8 341.7C879.1 342.1 878.4 342.7 877.8 343.2C877.1 343.8 876.5 344.4 875.9 345.1C875.3 345.7 874.7 346.4 874.1 347.1C873.5 347.8 872.9 348.5 872.2 349.2C871.6 350.0 870.9 350.7 870.2 351.5C869.5 352.3 868.8 353.1 868.0 353.9C867.2 354.7 866.4 355.5 865.5 356.3C864.7 357.2 863.8 358.0 862.8 358.8C861.9 359.6 860.9 360.5 859.9 361.3C858.9 362.2 857.1 363.3 856.7 364.0C856.3 364.8 856.5 365.6 857.3 366.0C858.1 366.3 860.2 366.2 861.6 366.2C863.0 366.2 864.4 366.1 865.8 366.0C867.1 365.9 868.5 365.7 869.8 365.5C871.2 365.3 872.5 365.1 873.8 364.8C875.1 364.5 876.4 364.1 877.6 363.7C878.9 363.3 880.1 362.8 881.3 362.3C882.5 361.7 883.6 361.1 884.7 360.5C885.8 359.8 886.9 359.1 887.9 358.3C888.9 357.5 889.8 356.6 890.6 355.6C891.4 354.7 892.2 353.6 892.8 352.5C893.3 351.4 893.9 350.2 894.0 348.8C894.2 347.4 894.7 345.6 893.4 344.1C892.2 342.6 888.4 340.5 886.6 339.9Z"/></g><g filter="url(#e2)"><path d="M881.0 353.7C879.3 353.1 878.1 353.9 876.9 354.1C875.8 354.4 875.0 354.9 874.2 355.3C873.3 355.7 872.5 356.3 871.7 356.8C870.9 357.4 870.1 358.0 869.2 358.6C868.4 359.2 867.6 359.9 866.7 360.5C865.8 361.2 864.8 361.9 863.8 362.6C862.8 363.3 861.8 364.1 860.7 364.8C859.6 365.5 858.5 366.3 857.3 367.0C856.0 367.8 854.8 368.5 853.4 369.3C852.1 370.0 850.7 370.7 849.3 371.5C847.8 372.2 846.3 372.9 844.7 373.7C843.2 374.4 840.6 375.3 839.8 376.0C839.1 376.7 839.2 377.6 840.2 378.0C841.1 378.4 843.9 378.4 845.7 378.5C847.5 378.6 849.2 378.6 851.0 378.6C852.7 378.5 854.4 378.5 856.1 378.4C857.7 378.2 859.4 378.1 861.0 377.9C862.6 377.6 864.1 377.4 865.7 377.0C867.2 376.7 868.7 376.3 870.2 375.9C871.6 375.4 873.0 374.9 874.4 374.3C875.8 373.7 877.1 373.1 878.3 372.3C879.6 371.6 880.7 370.7 881.8 369.8C882.9 368.9 883.9 367.9 884.7 366.8C885.6 365.6 886.4 364.5 886.8 363.0C887.2 361.6 888.0 359.8 887.0 358.3C886.0 356.7 882.7 354.4 881.0 353.7Z"/></g><g filter="url(#e2)"><path d="M844.0 370.8C842.7 369.6 841.4 370.2 840.2 370.2C839.1 370.2 838.2 370.5 837.2 370.7C836.3 370.9 835.4 371.3 834.5 371.6C833.6 372.0 832.7 372.4 831.8 372.8C830.9 373.2 830.1 373.6 829.2 374.1C828.3 374.6 827.4 375.0 826.5 375.5C825.5 376.0 824.6 376.5 823.7 377.0C822.7 377.5 821.7 378.0 820.8 378.5C819.8 379.0 818.8 379.5 817.7 380.0C816.7 380.5 815.7 381.0 814.6 381.4C813.5 381.9 812.4 382.4 811.3 382.9C810.2 383.4 808.4 383.7 807.9 384.5C807.3 385.3 807.5 386.9 808.1 387.5C808.8 388.1 810.7 388.1 812.0 388.3C813.2 388.5 814.5 388.7 815.7 388.8C817.0 388.9 818.3 389.0 819.5 389.0C820.8 389.1 822.0 389.1 823.2 389.1C824.5 389.1 825.7 389.0 826.9 388.9C828.1 388.8 829.4 388.7 830.5 388.5C831.7 388.3 832.9 388.1 834.1 387.8C835.3 387.5 836.4 387.2 837.5 386.8C838.6 386.4 839.7 385.9 840.8 385.4C841.8 384.8 842.8 384.2 843.8 383.5C844.7 382.8 845.6 382.1 846.4 381.0C847.1 380.0 848.4 378.9 848.0 377.2C847.6 375.5 845.3 371.9 844.0 370.8Z"/></g><ellipse cx="884" cy="374" rx="16" ry="10" fill="url(#hl)" opacity="0.5"/><path d="M815.0 535.0C820.0 530.0 837.5 528.3 850.0 530.0C862.5 531.7 876.7 546.7 890.0 545.0C903.3 543.3 917.8 526.2 930.0 520.0C942.2 513.8 955.5 510.0 963.0 508.0C970.5 506.0 973.0 488.5 975.0 508.0C977.0 527.5 977.0 605.5 975.0 625.0C973.0 644.5 968.8 628.3 963.0 625.0C957.2 621.7 950.5 609.2 940.0 605.0C929.5 600.8 911.7 602.2 900.0 600.0C888.3 597.8 878.3 596.2 870.0 592.0C861.7 587.8 858.3 580.3 850.0 575.0C841.7 569.7 825.8 566.7 820.0 560.0C814.2 553.3 810.0 540.0 815.0 535.0Z" fill="#6a6a6a" opacity=".35" filter="url(#b4)"/><g filter="url(#e1)"><path d="M820.0 536.0C819.3 537.7 815.7 542.7 816.0 546.0C816.3 549.3 819.0 553.3 822.0 556.0C825.0 558.7 830.0 561.0 834.0 562.0C838.0 563.0 844.0 562.0 846.0 562.0" fill="none" stroke="#000" stroke-width="7.4" stroke-linecap="round" stroke-linejoin="round"/><circle cx="820.5" cy="535.5" r="7"/></g><g filter="url(#e1)"><path d="M829.6 550.0C830.6 550.7 831.5 550.4 832.2 550.4C833.0 550.4 833.6 550.2 834.2 550.0C834.7 549.9 835.3 549.7 835.8 549.4C836.3 549.2 836.8 548.9 837.3 548.7C837.8 548.4 838.3 548.1 838.8 547.8C839.3 547.6 839.8 547.3 840.4 547.0C840.9 546.7 841.4 546.3 842.0 546.0C842.5 545.7 843.1 545.4 843.7 545.1C844.3 544.8 844.9 544.5 845.6 544.2C846.2 544.0 846.9 543.7 847.5 543.4C848.2 543.1 848.9 542.9 849.7 542.6C850.4 542.3 851.5 542.1 851.9 541.7C852.3 541.4 852.4 540.7 852.1 540.3C851.7 539.8 850.5 539.5 849.7 539.2C848.9 538.9 848.1 538.7 847.4 538.4C846.6 538.2 845.8 538.0 844.9 537.9C844.1 537.7 843.3 537.6 842.5 537.5C841.7 537.5 840.9 537.4 840.1 537.4C839.3 537.4 838.4 537.5 837.6 537.5C836.8 537.6 836.0 537.8 835.2 537.9C834.4 538.1 833.6 538.4 832.9 538.6C832.1 538.9 831.4 539.3 830.7 539.7C830.0 540.1 829.3 540.6 828.7 541.1C828.1 541.7 827.5 542.3 827.1 543.1C826.8 543.9 826.0 544.9 826.4 546.0C826.8 547.2 828.6 549.3 829.6 550.0Z"/></g><g filter="url(#e1)"><path d="M826.0 558.3C826.3 559.3 827.2 559.5 827.8 559.9C828.4 560.4 829.0 560.5 829.6 560.7C830.2 560.9 830.8 561.0 831.4 561.1C832.0 561.3 832.6 561.3 833.2 561.4C833.8 561.5 834.4 561.5 835.1 561.6C835.7 561.6 836.3 561.6 837.0 561.7C837.6 561.7 838.2 561.7 838.9 561.8C839.6 561.8 840.2 561.8 840.9 561.9C841.6 561.9 842.3 562.0 843.0 562.0C843.7 562.1 844.4 562.2 845.1 562.2C845.9 562.3 846.6 562.4 847.3 562.5C848.1 562.5 849.2 562.9 849.7 562.7C850.2 562.5 850.5 561.8 850.3 561.3C850.2 560.8 849.2 560.2 848.7 559.6C848.1 559.1 847.5 558.6 846.9 558.1C846.2 557.6 845.6 557.2 845.0 556.7C844.4 556.3 843.7 555.8 843.1 555.4C842.4 555.0 841.8 554.7 841.1 554.3C840.4 554.0 839.7 553.6 839.0 553.3C838.4 553.0 837.7 552.8 836.9 552.5C836.2 552.3 835.5 552.1 834.8 551.9C834.1 551.8 833.3 551.7 832.6 551.6C831.9 551.6 831.1 551.5 830.4 551.6C829.6 551.7 828.9 551.8 828.2 552.1C827.4 552.5 826.4 552.7 826.0 553.7C825.6 554.7 825.7 557.3 826.0 558.3Z"/></g><g filter="url(#e2)"><circle cx="870.1" cy="559.4" r="8.4"/></g><g filter="url(#e2)"><circle cx="863.1" cy="566.2" r="8.4"/></g><g filter="url(#e2)"><circle cx="854.6" cy="561.6" r="8.4"/></g><g filter="url(#e2)"><circle cx="856.3" cy="552.1" r="8.4"/></g><g filter="url(#e2)"><circle cx="865.9" cy="550.7" r="8.4"/></g><g filter="url(#e2)"><circle cx="857.5" cy="554" r="9.5"/></g><g filter="url(#e1)"><path d="M857.0 554.0C857.5 553.5 859.7 552.0 860.0 551.0C860.3 550.0 859.8 548.5 859.0 548.0C858.2 547.5 856.2 547.3 855.0 548.0C853.8 548.7 852.2 550.5 852.0 552.0C851.8 553.5 852.8 555.8 854.0 557.0C855.2 558.2 858.2 558.7 859.0 559.0" fill="none" stroke="#000" stroke-width="3.4" stroke-linecap="round" stroke-linejoin="round"/></g><g filter="url(#e2)"><path d="M949.7 556.0C949.6 553.6 947.1 551.7 945.6 550.1C944.1 548.6 942.4 547.6 940.7 546.5C938.9 545.5 937.2 544.6 935.4 543.9C933.6 543.1 931.7 542.5 929.9 541.9C928.1 541.3 926.2 540.8 924.4 540.4C922.5 540.0 920.7 539.6 918.8 539.3C916.9 539.0 915.1 538.8 913.2 538.6C911.4 538.4 909.5 538.3 907.7 538.2C905.9 538.1 904.0 538.0 902.2 538.0C900.4 538.0 898.6 538.0 896.8 538.1C895.0 538.2 893.2 538.3 891.5 538.4C889.7 538.6 887.1 538.9 886.2 539.3C885.2 539.6 885.2 540.0 885.8 540.7C886.5 541.5 888.8 542.7 890.3 543.7C891.8 544.6 893.3 545.5 894.8 546.3C896.3 547.2 897.8 548.1 899.3 549.0C900.8 549.9 902.3 550.7 903.9 551.6C905.4 552.5 906.9 553.3 908.5 554.2C910.1 555.0 911.6 555.9 913.2 556.7C914.8 557.5 916.4 558.3 918.0 559.0C919.6 559.8 921.3 560.6 923.0 561.2C924.7 561.9 926.4 562.6 928.1 563.1C929.9 563.7 931.7 564.2 933.6 564.6C935.5 565.0 937.3 565.4 939.4 565.3C941.6 565.2 944.6 565.6 946.3 564.0C948.0 562.5 949.8 558.3 949.7 556.0Z"/></g><g filter="url(#e2)"><path d="M946.6 562.7C945.9 560.4 942.9 559.2 941.0 558.1C939.0 557.0 937.0 556.5 935.0 556.0C933.0 555.4 930.9 555.1 928.9 554.9C926.9 554.7 924.9 554.6 922.8 554.6C920.8 554.6 918.8 554.7 916.8 554.9C914.8 555.1 912.8 555.3 910.9 555.6C908.9 556.0 906.9 556.3 905.0 556.8C903.1 557.2 901.2 557.7 899.3 558.3C897.4 558.8 895.5 559.4 893.7 560.0C891.9 560.7 890.0 561.4 888.2 562.1C886.5 562.8 884.7 563.6 882.9 564.4C881.2 565.3 878.7 566.5 877.9 567.3C877.1 568.0 877.2 568.3 878.1 568.7C879.1 569.1 881.9 569.4 883.8 569.7C885.6 570.0 887.5 570.2 889.3 570.5C891.2 570.8 893.0 571.0 894.8 571.3C896.6 571.6 898.4 571.9 900.3 572.2C902.1 572.5 903.9 572.8 905.7 573.0C907.5 573.3 909.3 573.6 911.1 573.9C912.9 574.1 914.8 574.4 916.6 574.6C918.4 574.8 920.2 575.0 922.0 575.2C923.9 575.3 925.7 575.4 927.6 575.5C929.5 575.5 931.3 575.5 933.2 575.3C935.2 575.1 937.1 575.0 939.1 574.4C941.1 573.7 944.1 573.3 945.4 571.3C946.6 569.4 947.3 564.9 946.6 562.7Z"/></g><g filter="url(#e2)"><path d="M947.7 569.6C946.6 567.6 943.7 567.0 941.8 566.3C939.8 565.6 937.8 565.5 935.9 565.4C934.0 565.3 932.1 565.5 930.2 565.7C928.3 566.0 926.5 566.4 924.7 566.8C922.9 567.3 921.1 567.9 919.4 568.6C917.6 569.2 915.9 570.0 914.3 570.8C912.7 571.6 911.0 572.5 909.5 573.4C907.9 574.4 906.4 575.4 904.9 576.4C903.4 577.5 902.0 578.6 900.6 579.7C899.2 580.9 897.9 582.1 896.6 583.3C895.3 584.5 894.1 585.8 892.9 587.1C891.7 588.5 890.0 590.4 889.6 591.4C889.2 592.3 889.4 592.6 890.4 592.6C891.4 592.7 893.9 592.0 895.6 591.7C897.2 591.4 898.9 591.1 900.5 590.8C902.1 590.5 903.8 590.3 905.4 590.0C907.0 589.8 908.6 589.6 910.2 589.3C911.8 589.1 913.4 588.9 915.0 588.8C916.6 588.6 918.1 588.4 919.7 588.2C921.3 588.0 922.8 587.8 924.4 587.6C926.0 587.4 927.5 587.2 929.1 586.9C930.7 586.7 932.2 586.4 933.8 586.0C935.4 585.6 936.9 585.3 938.5 584.7C940.1 584.1 941.7 583.6 943.4 582.6C945.0 581.5 947.5 580.5 948.3 578.4C949.0 576.2 948.8 571.6 947.7 569.6Z"/></g><g filter="url(#e2)"><path d="M948.5 576.4C947.0 575.1 944.4 575.5 942.5 575.5C940.7 575.5 939.1 575.9 937.5 576.3C936.0 576.7 934.5 577.3 933.1 577.9C931.7 578.5 930.3 579.2 929.0 580.0C927.7 580.7 926.5 581.5 925.4 582.3C924.2 583.1 923.1 584.0 922.1 584.9C921.0 585.8 920.0 586.7 919.1 587.6C918.2 588.6 917.3 589.5 916.5 590.5C915.6 591.4 914.9 592.4 914.1 593.4C913.4 594.4 912.8 595.3 912.2 596.3C911.6 597.3 911.0 598.3 910.6 599.3C910.1 600.3 909.5 601.7 909.5 602.4C909.5 603.2 909.8 603.5 910.5 603.6C911.2 603.6 912.6 603.2 913.6 603.0C914.7 602.8 915.7 602.5 916.7 602.3C917.7 602.0 918.8 601.8 919.9 601.5C920.9 601.2 922.0 600.9 923.1 600.6C924.2 600.3 925.3 600.0 926.5 599.7C927.6 599.4 928.8 599.0 929.9 598.6C931.1 598.2 932.3 597.8 933.5 597.3C934.7 596.9 936.0 596.4 937.2 595.8C938.4 595.2 939.7 594.7 940.9 594.0C942.2 593.2 943.4 592.5 944.7 591.6C945.9 590.7 947.2 589.8 948.3 588.5C949.5 587.2 951.5 585.6 951.5 583.6C951.5 581.5 950.0 577.8 948.5 576.4Z"/></g><g filter="url(#e2)"><path d="M937.5 573.4C936.3 571.9 933.4 571.7 931.4 571.4C929.5 571.0 927.6 571.1 925.7 571.1C923.8 571.2 921.9 571.4 920.0 571.6C918.2 571.9 916.3 572.3 914.4 572.7C912.6 573.1 910.8 573.6 908.9 574.1C907.1 574.7 905.3 575.2 903.5 575.9C901.7 576.5 899.9 577.1 898.1 577.8C896.3 578.5 894.5 579.2 892.7 580.0C890.9 580.7 889.2 581.5 887.4 582.3C885.7 583.1 883.9 583.9 882.1 584.7C880.4 585.6 878.7 586.4 876.9 587.3C875.2 588.3 872.6 589.5 871.8 590.3C871.0 591.0 871.2 591.5 872.2 591.7C873.2 592.0 876.1 591.8 878.1 591.7C880.0 591.7 881.9 591.6 883.9 591.5C885.8 591.4 887.7 591.3 889.6 591.2C891.5 591.1 893.4 591.0 895.3 590.9C897.2 590.8 899.0 590.7 900.9 590.6C902.8 590.4 904.7 590.3 906.5 590.1C908.4 590.0 910.2 589.8 912.1 589.6C913.9 589.4 915.7 589.1 917.6 588.9C919.4 588.6 921.2 588.3 923.0 587.9C924.8 587.5 926.6 587.0 928.3 586.4C930.1 585.9 931.8 585.3 933.6 584.4C935.3 583.4 937.9 582.4 938.5 580.6C939.2 578.7 938.6 575.0 937.5 573.4Z"/></g><g filter="url(#e2)"><path d="M955.4 549.6C956.6 548.0 956.2 546.2 956.2 544.7C956.2 543.3 955.8 542.2 955.3 541.1C954.9 540.0 954.3 539.0 953.7 538.0C953.1 537.0 952.4 536.1 951.7 535.2C950.9 534.4 950.1 533.6 949.3 532.8C948.5 532.0 947.6 531.3 946.7 530.5C945.8 529.8 944.9 529.1 944.0 528.5C943.0 527.8 942.1 527.2 941.1 526.6C940.1 526.0 939.1 525.4 938.1 524.8C937.1 524.3 936.1 523.7 935.1 523.2C934.0 522.7 933.0 522.2 931.9 521.7C930.9 521.3 929.3 520.6 928.6 520.5C927.8 520.5 927.5 520.7 927.4 521.5C927.3 522.2 927.8 523.9 928.1 525.0C928.3 526.1 928.6 527.2 928.9 528.3C929.2 529.4 929.5 530.5 929.9 531.5C930.2 532.6 930.5 533.7 930.9 534.7C931.3 535.8 931.6 536.9 932.0 537.9C932.4 538.9 932.8 540.0 933.3 541.0C933.7 542.0 934.2 543.0 934.7 543.9C935.2 544.9 935.7 545.8 936.3 546.8C936.9 547.7 937.5 548.6 938.3 549.4C939.0 550.2 939.7 551.0 940.7 551.8C941.6 552.5 942.5 553.2 943.8 553.6C945.1 554.1 946.7 555.0 948.6 554.4C950.6 553.7 954.1 551.2 955.4 549.6Z"/></g><g filter="url(#e2)"><path d="M953.9 587.7C952.1 587.0 950.6 587.9 949.4 588.3C948.1 588.7 947.3 589.3 946.5 589.9C945.6 590.5 944.9 591.2 944.2 591.9C943.6 592.6 943.0 593.4 942.5 594.1C941.9 594.9 941.5 595.6 941.0 596.4C940.6 597.2 940.2 598.0 939.8 598.8C939.4 599.6 939.1 600.4 938.8 601.2C938.5 602.0 938.2 602.8 937.9 603.6C937.6 604.4 937.4 605.2 937.1 606.0C936.9 606.8 936.7 607.6 936.5 608.4C936.3 609.3 936.0 610.0 935.9 610.9C935.7 611.7 935.4 612.8 935.5 613.4C935.6 614.1 935.9 614.4 936.5 614.6C937.1 614.7 938.3 614.5 939.2 614.4C940.0 614.2 940.9 614.0 941.7 613.8C942.5 613.5 943.4 613.3 944.2 613.0C945.1 612.7 945.9 612.3 946.8 611.9C947.6 611.6 948.4 611.1 949.3 610.7C950.1 610.2 950.9 609.7 951.7 609.2C952.5 608.7 953.3 608.1 954.0 607.5C954.8 606.8 955.5 606.2 956.2 605.4C956.9 604.7 957.6 603.9 958.1 603.1C958.7 602.2 959.3 601.3 959.7 600.3C960.1 599.3 960.6 598.3 960.7 596.9C960.7 595.6 961.2 593.9 960.1 592.3C959.0 590.8 955.7 588.4 953.9 587.7Z"/></g><g filter="url(#e2)"><path d="M967.4 552.0C969.5 551.4 970.3 549.6 971.2 548.3C972.1 547.1 972.4 545.9 972.7 544.7C973.1 543.5 973.2 542.3 973.3 541.1C973.4 539.9 973.4 538.7 973.3 537.6C973.2 536.4 973.0 535.2 972.9 534.0C972.7 532.8 972.4 531.7 972.1 530.5C971.8 529.3 971.5 528.2 971.1 527.0C970.8 525.9 970.4 524.7 970.0 523.6C969.6 522.4 969.1 521.3 968.7 520.1C968.2 519.0 967.7 517.9 967.2 516.7C966.7 515.6 966.3 514.5 965.7 513.3C965.1 512.2 964.3 510.6 963.8 510.0C963.2 509.4 962.8 509.4 962.2 510.0C961.7 510.6 960.9 512.2 960.3 513.3C959.7 514.5 959.3 515.6 958.8 516.7C958.3 517.9 957.8 519.0 957.3 520.1C956.9 521.3 956.4 522.4 956.0 523.6C955.6 524.7 955.2 525.9 954.9 527.0C954.5 528.2 954.2 529.3 953.9 530.5C953.6 531.7 953.3 532.8 953.1 534.0C953.0 535.2 952.8 536.4 952.7 537.6C952.6 538.7 952.6 539.9 952.7 541.1C952.8 542.3 952.9 543.5 953.3 544.7C953.6 545.9 953.9 547.1 954.8 548.3C955.7 549.6 956.5 551.4 958.6 552.0C960.7 552.6 965.3 552.6 967.4 552.0Z"/></g><g filter="url(#e2)"><path d="M960.1 552.8C961.4 551.7 961.3 550.1 961.5 548.9C961.7 547.7 961.6 546.6 961.5 545.6C961.3 544.5 961.1 543.5 960.8 542.6C960.5 541.6 960.2 540.6 959.8 539.7C959.4 538.7 959.0 537.8 958.6 536.9C958.1 536.0 957.6 535.1 957.1 534.2C956.7 533.4 956.1 532.5 955.6 531.6C955.1 530.7 954.5 529.9 954.0 529.0C953.4 528.1 952.9 527.3 952.3 526.4C951.7 525.6 951.1 524.7 950.5 523.9C950.0 523.0 949.4 522.2 948.7 521.3C948.1 520.5 947.3 519.2 946.7 518.8C946.2 518.5 945.6 518.6 945.3 519.2C944.9 519.8 944.8 521.3 944.6 522.4C944.5 523.4 944.4 524.5 944.3 525.5C944.2 526.6 944.1 527.6 944.1 528.7C944.0 529.8 944.0 530.8 944.0 531.9C944.0 532.9 944.0 534.0 944.1 535.1C944.2 536.1 944.2 537.2 944.4 538.3C944.5 539.3 944.6 540.4 944.8 541.4C945.0 542.5 945.2 543.5 945.5 544.5C945.8 545.6 946.1 546.6 946.6 547.6C947.0 548.6 947.4 549.5 948.0 550.5C948.6 551.4 949.2 552.4 950.2 553.1C951.2 553.9 952.2 555.3 953.9 555.2C955.5 555.2 958.8 553.8 960.1 552.8Z"/></g><g filter="url(#e2)"><path d="M958.6 590.0C956.5 590.5 955.7 592.0 954.8 593.0C953.9 594.0 953.6 594.9 953.3 595.9C952.9 596.9 952.8 597.9 952.7 598.8C952.6 599.8 952.6 600.7 952.7 601.7C952.8 602.6 953.0 603.5 953.1 604.5C953.3 605.4 953.6 606.3 953.9 607.2C954.2 608.2 954.5 609.1 954.9 610.0C955.2 610.9 955.6 611.8 956.0 612.7C956.4 613.6 956.9 614.4 957.3 615.3C957.8 616.2 958.3 617.1 958.8 617.9C959.3 618.8 959.7 619.6 960.3 620.5C960.9 621.3 961.7 622.6 962.2 623.0C962.8 623.4 963.2 623.4 963.8 623.0C964.3 622.6 965.1 621.3 965.7 620.5C966.3 619.6 966.7 618.8 967.2 617.9C967.7 617.1 968.2 616.2 968.7 615.3C969.1 614.4 969.6 613.6 970.0 612.7C970.4 611.8 970.8 610.9 971.1 610.0C971.5 609.1 971.8 608.2 972.1 607.2C972.4 606.3 972.7 605.4 972.9 604.5C973.0 603.5 973.2 602.6 973.3 601.7C973.4 600.7 973.4 599.8 973.3 598.8C973.2 597.9 973.1 596.9 972.7 595.9C972.4 594.9 972.1 594.0 971.2 593.0C970.3 592.0 969.5 590.5 967.4 590.0C965.3 589.5 960.7 589.5 958.6 590.0Z"/></g><g filter="url(#e2)"><path d="M954.0 586.5C952.4 586.2 951.4 587.1 950.4 587.6C949.5 588.1 948.9 588.8 948.3 589.5C947.7 590.1 947.3 590.9 946.9 591.6C946.4 592.3 946.1 593.1 945.8 593.8C945.5 594.6 945.3 595.4 945.1 596.2C944.9 597.0 944.7 597.8 944.6 598.5C944.5 599.3 944.4 600.1 944.3 600.9C944.3 601.7 944.2 602.5 944.2 603.3C944.2 604.1 944.2 604.9 944.2 605.7C944.3 606.5 944.3 607.3 944.4 608.1C944.5 608.9 944.6 609.6 944.7 610.4C944.9 611.2 945.0 612.3 945.3 612.7C945.6 613.2 946.1 613.4 946.7 613.3C947.3 613.1 948.1 612.4 948.7 611.9C949.3 611.4 949.9 610.9 950.4 610.4C951.0 609.9 951.6 609.4 952.1 608.9C952.7 608.4 953.2 607.9 953.8 607.3C954.3 606.8 954.9 606.2 955.4 605.7C955.9 605.1 956.4 604.5 956.9 604.0C957.4 603.4 957.8 602.8 958.3 602.1C958.7 601.5 959.1 600.8 959.5 600.2C959.9 599.5 960.2 598.8 960.5 598.0C960.8 597.3 961.1 596.5 961.2 595.7C961.3 594.8 961.5 594.0 961.3 593.0C961.1 591.9 961.2 590.6 960.0 589.5C958.8 588.4 955.6 586.8 954.0 586.5Z"/></g><g filter="url(#e2)"><circle cx="978.5" cy="574.1" r="7"/><circle cx="967.1" cy="585.5" r="7"/><circle cx="951.7" cy="581.3" r="7"/><circle cx="947.5" cy="565.9" r="7"/><circle cx="958.9" cy="554.5" r="7"/><circle cx="974.3" cy="558.7" r="7"/></g><g filter="url(#e2)"><circle cx="974.3" cy="581.3" r="7"/><circle cx="958.9" cy="585.5" r="7"/><circle cx="947.5" cy="574.1" r="7"/><circle cx="951.7" cy="558.7" r="7"/><circle cx="967.1" cy="554.5" r="7"/><circle cx="978.5" cy="565.9" r="7"/></g><g filter="url(#e1)"><circle cx="972.0" cy="570.0" r="5.5"/><circle cx="963.0" cy="579.0" r="5.5"/><circle cx="954.0" cy="570.0" r="5.5"/><circle cx="963.0" cy="561.0" r="5.5"/></g><g filter="url(#e1)"><circle cx="969.4" cy="576.4" r="5.5"/><circle cx="956.6" cy="576.4" r="5.5"/><circle cx="956.6" cy="563.6" r="5.5"/><circle cx="969.4" cy="563.6" r="5.5"/></g><circle cx="963" cy="570" r="7.5" fill="#6f6f6f"/><g filter="url(#e1)"><path d="M963 563C959 567 958 573 963 577L975 577L975 563Z"/></g><path d="M900.0 725.0C905.0 710.8 919.5 710.0 930.0 705.0C940.5 700.0 955.5 696.7 963.0 695.0C970.5 693.3 973.0 679.2 975.0 695.0C977.0 710.8 987.5 774.2 975.0 790.0C962.5 805.8 912.5 800.8 900.0 790.0C887.5 779.2 895.0 739.2 900.0 725.0Z" fill="#808080" opacity="1" filter="url(#b4)"/><ellipse cx="963" cy="706" rx="10" ry="12" fill="url(#hl)" opacity="0.8"/><ellipse cx="947" cy="718" rx="8" ry="12" fill="url(#hl)" opacity="0.6"/><ellipse cx="963" cy="748" rx="10" ry="8" fill="url(#hl)" opacity="0.6"/><ellipse cx="917" cy="722" rx="5" ry="10" fill="url(#dk)" opacity="0.9"/><ellipse cx="963" cy="764" rx="8" ry="6" fill="url(#dk)" opacity="0.5"/><g filter="url(#e1)"><path d="M956.0 691.5C954.5 691.2 949.2 688.4 947.0 690.0C944.8 691.6 942.7 696.7 943.0 701.0C943.3 705.3 946.5 711.5 949.0 716.0C951.5 720.5 955.7 724.8 958.0 728.0C960.3 731.2 961.0 735.0 963.0 735.0C965.0 735.0 968.8 729.2 970.0 728.0" fill="none" stroke="#000" stroke-width="6.9" stroke-linecap="round" stroke-linejoin="round"/><circle cx="956.5" cy="691.5" r="6"/></g><g filter="url(#e2)"><path d="M924.1 706.1C922.1 705.9 920.9 707.6 919.7 708.7C918.6 709.7 917.9 711.1 917.2 712.4C916.6 713.7 916.2 715.1 915.8 716.5C915.5 717.9 915.4 719.3 915.3 720.7C915.3 722.2 915.4 723.6 915.6 725.0C915.8 726.4 916.2 727.8 916.6 729.2C917.0 730.5 917.6 731.9 918.2 733.1C918.8 734.4 919.5 735.7 920.3 736.8C921.0 738.0 921.9 739.2 922.8 740.3C923.7 741.4 924.7 742.4 925.7 743.5C926.8 744.5 927.9 745.5 929.0 746.4C930.2 747.3 931.8 748.8 932.8 748.9C933.8 749.1 935.0 748.1 935.2 747.1C935.4 746.1 934.3 744.3 934.0 743.0C933.6 741.7 933.3 740.4 933.0 739.2C932.8 738.0 932.6 736.8 932.4 735.7C932.3 734.6 932.2 733.5 932.2 732.5C932.1 731.5 932.2 730.5 932.2 729.5C932.2 728.6 932.3 727.7 932.4 726.8C932.5 725.9 932.6 725.1 932.8 724.3C932.9 723.5 933.0 722.7 933.1 721.9C933.2 721.1 933.3 720.4 933.4 719.5C933.5 718.7 933.6 717.9 933.5 717.0C933.5 716.1 933.6 715.2 933.3 714.0C933.0 712.8 933.4 711.3 931.9 709.9C930.3 708.6 926.2 706.3 924.1 706.1Z"/></g><g filter="url(#e2)"><path d="M931.7 744.3C931.0 745.6 932.0 746.6 932.5 747.5C932.9 748.4 933.6 749.1 934.4 749.7C935.1 750.3 936.0 750.8 936.8 751.2C937.7 751.6 938.7 751.8 939.7 751.9C940.7 752.0 941.7 751.9 942.7 751.8C943.6 751.6 944.6 751.3 945.4 750.8C946.3 750.4 947.1 749.9 947.8 749.3C948.5 748.7 949.1 748.1 949.7 747.4C950.3 746.7 950.8 745.9 951.2 745.1C951.7 744.3 952.1 743.5 952.5 742.6C952.9 741.7 953.2 740.8 953.5 739.8C953.8 738.9 954.6 737.5 954.3 736.7C954.0 736.0 952.5 735.2 951.7 735.3C950.9 735.3 950.2 736.6 949.5 737.1C948.7 737.7 948.1 738.2 947.4 738.6C946.8 739.0 946.2 739.4 945.6 739.6C945.1 739.9 944.5 740.1 944.1 740.2C943.6 740.3 943.2 740.3 942.9 740.3C942.5 740.3 942.3 740.2 942.1 740.2C941.9 740.1 941.8 740.0 941.6 739.9C941.5 739.8 941.5 739.7 941.4 739.7C941.3 739.6 941.2 739.6 941.0 739.6C940.8 739.5 940.6 739.5 940.3 739.5C939.9 739.5 939.5 739.4 938.9 739.4C938.2 739.5 937.5 738.9 936.3 739.7C935.1 740.5 932.3 743.0 931.7 744.3Z"/></g><g filter="url(#e2)"><path d="M921.6 734.3C919.9 734.6 918.8 736.4 917.8 737.6C916.9 738.8 916.4 740.1 915.9 741.4C915.4 742.7 915.1 744.0 914.9 745.3C914.7 746.6 914.5 747.9 914.5 749.3C914.4 750.6 914.4 751.9 914.5 753.2C914.6 754.5 914.8 755.8 915.0 757.1C915.2 758.4 915.4 759.6 915.7 760.9C916.1 762.1 916.4 763.4 916.8 764.6C917.2 765.8 917.6 767.0 918.1 768.2C918.6 769.4 919.1 770.5 919.6 771.7C920.2 772.8 920.7 773.9 921.4 775.0C922.0 776.0 923.0 777.6 923.5 778.1C924.0 778.6 924.2 778.5 924.5 777.9C924.8 777.3 925.1 775.5 925.4 774.3C925.7 773.1 926.0 772.0 926.2 770.8C926.5 769.7 926.8 768.6 927.0 767.4C927.3 766.3 927.6 765.2 927.9 764.1C928.1 763.0 928.4 761.8 928.7 760.7C929.0 759.6 929.3 758.5 929.5 757.4C929.8 756.3 930.0 755.2 930.3 754.1C930.5 753.0 930.7 751.9 930.9 750.7C931.0 749.6 931.2 748.5 931.2 747.3C931.3 746.2 931.4 745.0 931.3 743.8C931.2 742.6 931.1 741.4 930.6 740.0C930.2 738.7 929.9 736.7 928.4 735.7C926.9 734.8 923.4 734.0 921.6 734.3Z"/></g><g filter="url(#e2)"><path d="M931.4 750.0C930.5 751.2 931.4 752.4 931.6 753.5C931.7 754.5 932.0 755.3 932.3 756.1C932.6 756.9 932.9 757.7 933.1 758.4C933.4 759.1 933.7 759.7 934.0 760.3C934.2 761.0 934.5 761.5 934.7 762.1C935.0 762.7 935.2 763.2 935.5 763.8C935.7 764.3 935.9 764.9 936.1 765.4C936.3 766.0 936.4 766.5 936.6 767.1C936.7 767.7 936.9 768.3 936.9 768.9C937.0 769.5 937.1 770.1 937.1 770.8C937.1 771.4 937.1 772.1 937.0 772.9C937.0 773.6 936.4 774.5 936.8 775.2C937.1 775.8 938.5 776.8 939.2 776.8C940.0 776.8 940.7 775.7 941.4 775.1C942.0 774.4 942.6 773.7 943.1 773.0C943.7 772.3 944.1 771.5 944.6 770.6C945.0 769.8 945.3 768.9 945.6 768.0C945.9 767.1 946.2 766.1 946.3 765.2C946.5 764.2 946.5 763.2 946.5 762.2C946.5 761.2 946.5 760.2 946.3 759.2C946.1 758.1 945.9 757.1 945.6 756.1C945.3 755.1 944.9 754.1 944.4 753.1C943.9 752.2 943.3 751.2 942.6 750.3C941.9 749.4 941.2 748.5 940.2 747.8C939.2 747.1 938.1 745.7 936.6 746.0C935.2 746.4 932.2 748.7 931.4 750.0Z"/></g><g filter="url(#e2)"><path d="M944.9 743.7C944.2 744.7 944.7 745.7 944.9 746.5C945.0 747.3 945.4 748.0 945.8 748.6C946.1 749.3 946.6 749.8 947.0 750.4C947.4 750.9 947.9 751.4 948.5 751.9C949.0 752.3 949.5 752.8 950.1 753.1C950.6 753.5 951.2 753.9 951.7 754.2C952.3 754.5 952.9 754.8 953.5 755.1C954.1 755.4 954.7 755.6 955.3 755.8C955.9 756.0 956.5 756.2 957.1 756.4C957.7 756.5 958.3 756.6 958.9 756.7C959.5 756.8 960.1 756.9 960.7 757.0C961.3 757.0 962.1 757.2 962.6 756.9C963.0 756.6 963.4 755.6 963.4 755.1C963.5 754.6 962.9 754.1 962.6 753.6C962.3 753.2 962.0 752.7 961.7 752.3C961.4 751.8 961.2 751.3 960.9 750.9C960.6 750.4 960.3 750.0 960.0 749.5C959.7 749.1 959.5 748.6 959.2 748.2C958.9 747.7 958.6 747.2 958.3 746.8C957.9 746.3 957.6 745.9 957.3 745.4C956.9 745.0 956.6 744.5 956.2 744.1C955.8 743.7 955.4 743.3 955.0 742.9C954.6 742.5 954.1 742.1 953.6 741.7C953.0 741.3 952.5 741.0 951.8 740.7C951.0 740.5 950.3 739.8 949.1 740.3C948.0 740.8 945.6 742.7 944.9 743.7Z"/></g><g filter="url(#e2)"><path d="M948.4 763.9C947.9 764.9 948.5 765.5 948.7 766.1C949.0 766.7 949.3 767.1 949.7 767.6C950.1 768.0 950.5 768.3 951.0 768.6C951.4 768.9 951.9 769.2 952.4 769.4C952.9 769.6 953.4 769.8 953.9 769.9C954.4 770.0 955.0 770.1 955.5 770.1C956.0 770.2 956.5 770.2 957.0 770.1C957.5 770.1 958.0 770.0 958.5 769.9C959.0 769.8 959.5 769.6 959.9 769.5C960.4 769.3 960.8 769.1 961.2 768.8C961.6 768.6 962.0 768.3 962.4 768.0C962.7 767.7 963.3 767.4 963.3 766.9C963.4 766.5 963.0 765.5 962.7 765.1C962.4 764.7 961.9 764.7 961.6 764.6C961.3 764.4 961.0 764.2 960.7 764.1C960.4 763.9 960.2 763.7 959.9 763.5C959.7 763.4 959.5 763.2 959.3 763.0C959.0 762.8 958.8 762.6 958.6 762.4C958.4 762.2 958.2 762.0 958.0 761.9C957.8 761.7 957.6 761.5 957.4 761.3C957.2 761.1 957.0 761.0 956.7 760.8C956.5 760.7 956.2 760.5 955.9 760.4C955.6 760.2 955.3 760.1 954.9 760.0C954.5 759.9 954.1 759.8 953.6 759.8C953.0 759.8 952.5 759.5 951.6 760.1C950.7 760.8 948.9 762.9 948.4 763.9Z"/></g><g filter="url(#e1)"><circle cx="954" cy="732" r="5"/><circle cx="939" cy="774.5" r="5.2"/></g><g filter="url(#e2)"><circle cx="888" cy="731" r="8.5"/></g><g filter="url(#e2)"><circle cx="902" cy="729" r="8.5"/></g><g filter="url(#e2)"><circle cx="914" cy="738" r="8.5"/></g><g filter="url(#e2)"><circle cx="884" cy="744" r="7.5"/></g><g filter="url(#e2)"><circle cx="897" cy="747.5" r="11"/></g><g filter="url(#e1)"><path d="M897.0 748.0C897.5 747.5 899.7 746.2 900.0 745.0C900.3 743.8 900.0 741.7 899.0 741.0C898.0 740.3 895.3 740.2 894.0 741.0C892.7 741.8 891.2 744.2 891.0 746.0C890.8 747.8 891.7 750.7 893.0 752.0C894.3 753.3 897.2 754.3 899.0 754.0C900.8 753.7 903.2 750.7 904.0 750.0" fill="none" stroke="#000" stroke-width="3.4" stroke-linecap="round" stroke-linejoin="round"/></g><g filter="url(#e2)"><path d="M886.4 733.6C887.2 732.0 886.4 730.2 886.1 728.9C885.7 727.6 885.0 726.7 884.3 725.7C883.6 724.8 882.8 724.0 881.9 723.2C881.0 722.5 880.1 721.9 879.2 721.3C878.2 720.7 877.2 720.2 876.2 719.8C875.2 719.4 874.1 719.1 873.1 718.8C872.1 718.5 871.0 718.3 869.9 718.2C868.9 718.0 867.8 717.9 866.8 717.9C865.7 717.9 864.7 717.9 863.7 718.0C862.7 718.1 861.7 718.2 860.7 718.4C859.7 718.6 858.7 718.9 857.8 719.2C856.8 719.6 855.5 720.1 855.0 720.5C854.6 720.9 854.6 721.0 855.0 721.5C855.3 722.0 856.5 722.7 857.2 723.3C857.9 723.9 858.6 724.4 859.3 724.9C859.9 725.5 860.6 726.1 861.2 726.6C861.8 727.2 862.4 727.8 863.0 728.3C863.6 728.9 864.1 729.5 864.7 730.0C865.3 730.6 865.8 731.2 866.4 731.7C867.0 732.3 867.5 732.8 868.1 733.4C868.7 733.9 869.3 734.4 870.0 734.9C870.6 735.4 871.2 735.9 872.0 736.4C872.7 736.8 873.4 737.3 874.3 737.7C875.2 738.0 876.0 738.4 877.2 738.6C878.5 738.7 880.0 739.3 881.6 738.4C883.1 737.6 885.7 735.1 886.4 733.6Z"/></g><g filter="url(#e1)"><path d="M862.0 722.0C860.0 721.0 853.7 716.3 850.0 716.0C846.3 715.7 842.0 717.3 840.0 720.0C838.0 722.7 837.2 728.3 838.0 732.0C838.8 735.7 843.8 740.3 845.0 742.0" fill="none" stroke="#000" stroke-width="7.4" stroke-linecap="round" stroke-linejoin="round"/></g><ellipse cx="585" cy="676" rx="10" ry="8" fill="url(#dk)" opacity="0.9"/><ellipse cx="560" cy="724" rx="14" ry="6" fill="url(#dk)" opacity="0.8"/><ellipse cx="512" cy="722" rx="12" ry="8" fill="url(#dk)" opacity="0.9"/><ellipse cx="500" cy="678" rx="8" ry="5" fill="url(#dk)" opacity="0.6"/><ellipse cx="598" cy="700" rx="8" ry="14" fill="url(#dk)" opacity="0.7"/><g filter="url(#e2)"><path d="M538.7 658.2C541.2 658.3 542.5 655.7 544.0 654.5C545.6 653.3 546.7 652.2 548.0 651.1C549.3 650.1 550.4 649.1 551.7 648.2C552.9 647.3 554.1 646.5 555.4 645.7C556.7 644.9 558.0 644.2 559.5 643.5C561.0 642.8 562.5 642.1 564.3 641.6C566.0 641.0 567.8 640.5 569.9 640.1C571.9 639.7 574.0 639.3 576.4 639.1C578.7 638.9 581.1 638.8 583.8 638.9C586.4 638.9 589.1 639.0 592.0 639.3C594.9 639.6 598.0 640.0 601.2 640.5C604.3 641.0 609.2 642.8 611.1 642.3C613.1 641.9 614.1 639.2 612.9 637.7C611.6 636.1 606.5 634.4 603.4 633.0C600.3 631.6 597.3 630.4 594.3 629.4C591.3 628.3 588.4 627.4 585.5 626.6C582.6 625.9 579.8 625.3 577.0 624.9C574.2 624.4 571.4 624.2 568.7 624.1C566.0 624.0 563.3 624.1 560.7 624.4C558.1 624.8 555.6 625.3 553.1 626.0C550.6 626.8 548.2 627.8 546.0 629.0C543.7 630.2 541.5 631.6 539.6 633.3C537.6 634.9 535.8 636.8 534.3 638.9C532.8 641.0 531.4 643.2 530.5 645.7C529.7 648.2 527.9 651.7 529.3 653.8C530.6 655.9 536.3 658.1 538.7 658.2Z"/></g><g filter="url(#e2)"><path d="M602.4 642.9C601.1 644.6 602.2 646.1 602.2 647.4C602.3 648.7 602.6 649.6 602.8 650.6C603.0 651.5 603.3 652.3 603.5 653.1C603.7 653.9 604.0 654.6 604.2 655.4C604.4 656.1 604.7 656.7 604.9 657.5C605.1 658.2 605.3 658.8 605.4 659.6C605.6 660.3 605.8 661.1 605.9 661.9C606.0 662.8 606.0 663.7 606.0 664.6C606.0 665.5 606.0 666.6 605.8 667.6C605.7 668.7 605.5 669.8 605.2 671.0C604.9 672.1 604.5 673.3 604.1 674.6C603.6 675.9 602.3 677.5 602.5 678.7C602.8 679.8 604.3 681.3 605.5 681.3C606.6 681.3 608.2 679.7 609.5 678.7C610.7 677.8 611.8 676.8 612.9 675.7C614.0 674.7 615.0 673.6 615.9 672.4C616.8 671.2 617.7 670.0 618.4 668.7C619.1 667.4 619.8 666.1 620.3 664.7C620.9 663.3 621.3 661.9 621.6 660.4C621.8 658.9 622.0 657.4 622.0 655.9C622.0 654.4 621.9 652.8 621.6 651.3C621.3 649.8 620.8 648.3 620.2 646.9C619.6 645.4 618.9 644.0 617.9 642.8C617.0 641.5 616.0 640.2 614.6 639.3C613.2 638.3 611.7 636.5 609.6 637.1C607.6 637.7 603.6 641.2 602.4 642.9Z"/></g><g filter="url(#e2)"><path d="M544.4 658.7C546.4 659.4 547.8 657.7 549.1 657.2C550.5 656.6 551.5 656.0 552.6 655.4C553.7 654.8 554.7 654.3 555.8 653.8C556.8 653.3 557.8 652.8 558.8 652.3C559.8 651.9 560.9 651.4 562.0 651.0C563.1 650.6 564.3 650.2 565.5 649.9C566.8 649.6 568.1 649.3 569.5 649.1C570.9 648.9 572.4 648.8 574.0 648.7C575.6 648.6 577.3 648.6 579.0 648.7C580.8 648.8 582.6 649.0 584.6 649.2C586.5 649.5 588.5 649.9 590.6 650.3C592.7 650.7 595.8 652.2 597.1 651.8C598.5 651.5 599.5 649.4 598.9 648.2C598.2 646.9 595.0 645.4 593.0 644.3C591.1 643.1 589.1 642.0 587.2 641.1C585.2 640.1 583.3 639.3 581.3 638.5C579.4 637.8 577.5 637.2 575.5 636.6C573.6 636.1 571.7 635.7 569.7 635.5C567.8 635.2 565.9 635.1 564.0 635.1C562.1 635.1 560.1 635.2 558.3 635.6C556.4 635.9 554.5 636.4 552.8 637.0C551.0 637.7 549.2 638.5 547.6 639.5C546.0 640.4 544.4 641.6 543.1 642.9C541.7 644.3 540.4 645.7 539.5 647.4C538.5 649.2 536.7 651.4 537.6 653.3C538.4 655.2 542.5 658.1 544.4 658.7Z"/></g><g filter="url(#e2)"><path d="M593.1 652.1C592.1 653.3 592.7 654.3 592.6 655.2C592.5 656.1 592.7 656.7 592.8 657.4C592.8 658.0 593.0 658.6 593.1 659.1C593.2 659.6 593.3 660.1 593.5 660.6C593.6 661.1 593.8 661.6 593.9 662.1C594.0 662.6 594.2 663.0 594.3 663.6C594.4 664.1 594.6 664.6 594.6 665.2C594.7 665.8 594.8 666.4 594.8 667.1C594.8 667.8 594.8 668.5 594.8 669.2C594.7 669.9 594.6 670.7 594.4 671.6C594.2 672.4 594.0 673.2 593.8 674.1C593.5 675.1 592.6 676.2 592.9 677.0C593.1 677.8 594.3 678.9 595.1 679.0C596.0 679.0 597.1 677.8 597.9 677.2C598.8 676.5 599.6 675.8 600.4 675.1C601.1 674.4 601.8 673.6 602.5 672.8C603.2 672.0 603.8 671.1 604.3 670.2C604.8 669.4 605.3 668.4 605.7 667.5C606.1 666.5 606.5 665.5 606.7 664.4C606.9 663.4 607.1 662.3 607.1 661.3C607.2 660.2 607.1 659.1 607.0 658.0C606.8 657.0 606.5 655.9 606.2 654.9C605.8 653.9 605.3 652.9 604.7 652.0C604.1 651.1 603.4 650.1 602.4 649.5C601.5 648.8 600.4 647.5 598.9 647.9C597.3 648.4 594.2 650.9 593.1 652.1Z"/></g><g filter="url(#e2)"><path d="M551.8 658.7C553.0 659.6 554.4 658.8 555.5 658.7C556.6 658.6 557.4 658.3 558.3 658.1C559.2 658.0 560.0 657.7 560.8 657.5C561.6 657.3 562.4 657.1 563.1 657.0C563.9 656.8 564.6 656.6 565.4 656.5C566.1 656.3 566.9 656.2 567.7 656.1C568.5 656.0 569.3 655.9 570.1 655.9C570.9 655.9 571.8 655.9 572.7 655.9C573.6 656.0 574.5 656.1 575.5 656.2C576.5 656.4 577.5 656.6 578.5 656.9C579.5 657.2 580.6 657.5 581.7 657.9C582.8 658.3 584.2 659.4 585.1 659.2C586.0 659.0 587.0 657.7 586.9 656.8C586.8 655.9 585.2 654.7 584.3 653.8C583.4 652.9 582.5 652.0 581.5 651.2C580.5 650.4 579.5 649.7 578.5 649.0C577.5 648.3 576.4 647.7 575.3 647.2C574.2 646.7 573.1 646.2 571.9 645.8C570.7 645.4 569.5 645.1 568.3 644.9C567.1 644.7 565.9 644.6 564.6 644.6C563.4 644.5 562.1 644.6 560.9 644.8C559.6 645.0 558.4 645.3 557.2 645.7C556.0 646.1 554.8 646.6 553.7 647.3C552.6 648.0 551.4 648.7 550.5 649.7C549.6 650.7 548.0 651.8 548.2 653.3C548.4 654.8 550.6 657.8 551.8 658.7Z"/></g><g filter="url(#e2)"><path d="M603.9 681.1C603.8 683.6 606.2 684.7 607.1 686.0C608.1 687.4 609.0 688.2 609.8 689.2C610.6 690.1 611.2 690.8 611.7 691.4C612.3 692.1 612.7 692.6 613.1 693.1C613.5 693.7 613.9 694.0 614.2 694.6C614.6 695.1 614.9 695.5 615.2 696.2C615.5 696.8 615.9 697.5 616.1 698.4C616.3 699.3 616.4 700.4 616.4 701.6C616.5 702.8 616.4 704.2 616.1 705.7C615.9 707.2 615.5 708.8 615.0 710.6C614.4 712.3 613.7 714.1 612.9 716.1C612.1 718.1 609.9 720.8 610.1 722.4C610.2 724.0 612.3 725.9 613.9 725.6C615.5 725.3 617.8 722.4 619.6 720.8C621.3 719.2 622.8 717.6 624.2 715.9C625.7 714.2 627.0 712.6 628.1 710.8C629.3 709.1 630.3 707.4 631.1 705.5C631.9 703.7 632.6 701.8 633.1 699.9C633.5 697.9 633.8 695.9 633.8 693.8C633.7 691.8 633.5 689.7 632.9 687.7C632.4 685.7 631.5 683.8 630.4 682.0C629.4 680.2 628.0 678.5 626.5 677.1C625.0 675.6 623.3 674.3 621.4 673.3C619.6 672.3 617.6 671.3 615.3 670.9C613.1 670.5 610.0 669.2 608.1 670.9C606.2 672.6 604.1 678.5 603.9 681.1Z"/></g><g filter="url(#e2)"><path d="M611.6 718.4C610.1 717.0 608.8 717.8 607.7 717.8C606.6 717.7 605.8 717.9 604.9 718.0C604.0 718.1 603.3 718.3 602.5 718.5C601.8 718.6 601.1 718.8 600.3 719.0C599.6 719.2 598.9 719.4 598.2 719.5C597.4 719.7 596.7 719.9 595.9 720.0C595.1 720.2 594.3 720.3 593.4 720.4C592.6 720.5 591.7 720.6 590.7 720.6C589.8 720.6 588.8 720.6 587.7 720.5C586.7 720.4 585.6 720.3 584.5 720.1C583.4 719.9 582.2 719.6 581.0 719.4C579.8 719.1 578.2 718.0 577.1 718.4C576.1 718.7 574.8 720.5 574.9 721.6C574.9 722.7 576.7 723.9 577.6 725.0C578.6 726.0 579.7 726.9 580.7 727.8C581.8 728.7 582.9 729.5 584.0 730.2C585.1 731.0 586.3 731.7 587.5 732.3C588.7 732.9 589.9 733.4 591.2 733.9C592.5 734.3 593.8 734.7 595.1 735.0C596.4 735.2 597.8 735.4 599.1 735.4C600.5 735.5 601.9 735.4 603.2 735.2C604.6 735.0 605.9 734.7 607.2 734.3C608.5 733.8 609.8 733.3 611.0 732.5C612.2 731.8 613.3 731.0 614.3 729.9C615.2 728.7 616.9 727.6 616.4 725.6C616.0 723.7 613.0 719.7 611.6 718.4Z"/></g><g filter="url(#e2)"><path d="M595.9 685.6C595.6 687.4 597.3 688.4 598.0 689.5C598.7 690.6 599.4 691.4 599.9 692.2C600.5 693.0 601.0 693.6 601.5 694.2C601.9 694.8 602.3 695.3 602.6 695.8C602.9 696.3 603.2 696.7 603.5 697.1C603.7 697.5 604.0 697.9 604.2 698.3C604.4 698.8 604.6 699.2 604.8 699.8C604.9 700.4 605.0 701.0 605.1 701.7C605.1 702.5 605.0 703.3 604.9 704.2C604.7 705.2 604.5 706.2 604.1 707.3C603.7 708.3 603.2 709.5 602.6 710.7C602.1 711.9 600.5 713.5 600.6 714.6C600.7 715.7 602.3 717.4 603.4 717.4C604.6 717.4 606.2 715.7 607.4 714.7C608.7 713.8 609.8 712.8 610.8 711.7C611.8 710.7 612.8 709.6 613.6 708.5C614.5 707.4 615.2 706.2 615.8 704.9C616.4 703.7 617.0 702.3 617.3 701.0C617.6 699.6 617.8 698.1 617.8 696.7C617.8 695.3 617.6 693.8 617.3 692.3C616.9 690.9 616.3 689.5 615.6 688.2C614.9 686.9 614.0 685.6 613.0 684.5C612.0 683.4 610.9 682.4 609.6 681.5C608.3 680.6 607.0 679.7 605.4 679.2C603.8 678.7 601.6 677.4 600.1 678.4C598.5 679.5 596.3 683.7 595.9 685.6Z"/></g><g filter="url(#e2)"><path d="M602.1 711.6C601.1 710.8 600.4 711.4 599.8 711.4C599.1 711.4 598.7 711.5 598.2 711.6C597.7 711.7 597.3 711.8 597.0 711.9C596.6 712.0 596.3 712.1 595.9 712.2C595.6 712.4 595.3 712.5 595.0 712.6C594.6 712.7 594.3 712.9 594.0 713.0C593.7 713.1 593.3 713.2 592.9 713.3C592.6 713.4 592.2 713.5 591.7 713.6C591.3 713.6 590.8 713.7 590.3 713.7C589.8 713.7 589.3 713.7 588.7 713.6C588.2 713.5 587.6 713.4 586.9 713.3C586.3 713.2 585.6 712.5 584.9 712.8C584.3 713.1 583.2 714.5 583.1 715.2C583.0 715.9 583.9 716.5 584.4 717.1C584.9 717.8 585.4 718.3 585.9 718.8C586.5 719.4 587.1 719.9 587.7 720.3C588.3 720.8 588.9 721.2 589.6 721.5C590.3 721.9 591.0 722.2 591.7 722.4C592.5 722.7 593.2 722.9 594.0 723.0C594.8 723.1 595.6 723.2 596.4 723.2C597.2 723.1 598.0 723.0 598.7 722.9C599.5 722.7 600.3 722.4 601.0 722.1C601.8 721.8 602.5 721.4 603.1 720.9C603.8 720.4 604.4 719.8 604.9 719.1C605.4 718.3 606.4 717.6 605.9 716.4C605.4 715.1 603.1 712.5 602.1 711.6Z"/></g><g filter="url(#e2)"><path d="M588.2 690.4C587.8 691.7 589.0 692.6 589.4 693.5C589.8 694.3 590.3 694.9 590.7 695.5C591.1 696.2 591.4 696.7 591.7 697.1C592.0 697.6 592.3 698.0 592.5 698.3C592.7 698.7 592.9 699.0 593.1 699.2C593.2 699.5 593.4 699.7 593.5 700.0C593.7 700.2 593.8 700.4 593.9 700.7C594.0 701.0 594.1 701.3 594.2 701.7C594.2 702.1 594.2 702.5 594.1 703.0C594.0 703.5 593.9 704.1 593.6 704.7C593.4 705.3 593.0 705.9 592.6 706.6C592.2 707.3 591.1 708.0 591.1 708.8C591.2 709.6 592.1 711.0 592.9 711.2C593.6 711.4 594.8 710.5 595.7 710.0C596.5 709.6 597.3 709.1 598.1 708.6C598.8 708.0 599.5 707.4 600.2 706.7C600.8 706.1 601.4 705.4 601.8 704.6C602.3 703.8 602.7 702.9 603.0 701.9C603.3 701.0 603.4 700.0 603.5 699.0C603.5 698.1 603.4 697.0 603.2 696.1C603.0 695.1 602.6 694.1 602.2 693.2C601.7 692.3 601.2 691.4 600.5 690.6C599.9 689.8 599.2 689.0 598.3 688.3C597.5 687.7 596.6 687.0 595.5 686.5C594.4 686.1 593.0 684.9 591.8 685.6C590.6 686.2 588.6 689.1 588.2 690.4Z"/></g><g filter="url(#e2)"><path d="M489.0 684.0C490.8 686.2 495.5 693.2 500.0 697.0C504.5 700.8 509.7 704.5 516.0 707.0C522.3 709.5 531.0 711.7 538.0 712.0C545.0 712.3 552.0 711.2 558.0 709.0C564.0 706.8 570.0 703.3 574.0 699.0C578.0 694.7 581.0 688.3 582.0 683.0C583.0 677.7 582.0 671.3 580.0 667.0C578.0 662.7 574.0 659.3 570.0 657.0C566.0 654.7 560.5 653.0 556.0 653.0C551.5 653.0 546.3 654.5 543.0 657.0C539.7 659.5 537.0 664.0 536.0 668.0C535.0 672.0 535.5 677.5 537.0 681.0C538.5 684.5 541.8 687.7 545.0 689.0C548.2 690.3 553.3 690.3 556.0 689.0C558.7 687.7 560.2 682.3 561.0 681.0" fill="none" stroke="#000" stroke-width="15.4" stroke-linecap="round" stroke-linejoin="round"/></g><g filter="url(#e2)"><circle cx="552.5" cy="679" r="11"/></g><g filter="url(#e2)"><circle cx="532.5" cy="654" r="8.5"/><circle cx="572.5" cy="716" r="8.5"/></g><g filter="url(#e1)"><path d="M523.0 661.8C523.0 660.6 521.5 659.8 520.6 659.1C519.6 658.3 518.6 657.9 517.5 657.4C516.5 656.9 515.4 656.6 514.3 656.3C513.2 656.0 512.1 655.8 510.9 655.7C509.8 655.6 508.6 655.5 507.5 655.5C506.3 655.5 505.2 655.6 504.0 655.7C502.8 655.8 501.7 656.0 500.5 656.2C499.4 656.4 498.2 656.7 497.1 657.0C495.9 657.3 494.8 657.7 493.7 658.1C492.5 658.5 491.4 659.0 490.3 659.5C489.2 660.0 488.0 660.5 486.9 661.1C485.8 661.7 484.1 662.4 483.6 663.1C483.2 663.7 483.6 664.7 484.4 664.9C485.1 665.2 486.8 664.6 488.0 664.5C489.2 664.3 490.4 664.2 491.5 664.1C492.6 664.0 493.7 663.9 494.8 663.9C495.9 663.9 497.0 663.9 498.0 663.9C499.1 663.9 500.1 664.0 501.1 664.0C502.1 664.1 503.0 664.2 504.0 664.3C505.0 664.4 505.9 664.6 506.8 664.7C507.7 664.9 508.6 665.0 509.5 665.2C510.4 665.4 511.3 665.5 512.2 665.7C513.1 665.9 514.0 666.0 514.9 666.2C515.8 666.3 516.7 666.5 517.7 666.5C518.7 666.5 520.1 667.0 521.0 666.2C521.8 665.4 523.1 663.0 523.0 661.8Z"/></g><g filter="url(#e1)"><path d="M520.3 665.6C519.9 664.5 518.3 664.2 517.3 663.8C516.2 663.3 515.1 663.2 514.1 663.0C513.0 662.8 511.9 662.7 510.8 662.7C509.6 662.7 508.5 662.7 507.4 662.8C506.3 662.8 505.1 662.9 504.0 663.1C502.9 663.3 501.7 663.5 500.6 663.7C499.4 663.9 498.3 664.2 497.1 664.5C496.0 664.8 494.8 665.1 493.7 665.5C492.5 665.8 491.4 666.2 490.2 666.6C489.0 667.0 487.9 667.4 486.7 667.9C485.5 668.3 484.4 668.8 483.2 669.3C482.1 669.9 480.2 670.4 479.7 671.0C479.2 671.6 479.5 672.7 480.3 673.0C481.0 673.3 482.8 672.8 484.1 672.8C485.3 672.7 486.5 672.6 487.7 672.6C488.9 672.5 490.1 672.4 491.3 672.4C492.5 672.4 493.6 672.3 494.8 672.3C495.9 672.3 497.0 672.3 498.2 672.3C499.3 672.3 500.4 672.3 501.4 672.3C502.5 672.3 503.6 672.3 504.6 672.3C505.7 672.3 506.7 672.4 507.7 672.4C508.7 672.3 509.7 672.3 510.8 672.3C511.8 672.3 512.7 672.2 513.7 672.1C514.7 672.0 515.7 672.0 516.7 671.7C517.7 671.4 519.1 671.5 519.7 670.4C520.3 669.4 520.7 666.7 520.3 665.6Z"/></g><g filter="url(#e1)"><path d="M516.0 671.8C515.5 670.9 514.2 670.9 513.2 670.6C512.3 670.3 511.4 670.3 510.5 670.2C509.6 670.2 508.6 670.2 507.7 670.3C506.8 670.3 505.9 670.4 505.0 670.6C504.1 670.7 503.2 670.9 502.4 671.1C501.5 671.3 500.6 671.6 499.8 671.8C498.9 672.1 498.1 672.4 497.2 672.7C496.4 673.0 495.6 673.4 494.8 673.7C493.9 674.1 493.1 674.5 492.4 674.9C491.6 675.3 490.8 675.7 490.0 676.1C489.3 676.6 488.5 677.0 487.8 677.5C487.0 678.0 485.8 678.5 485.6 679.1C485.4 679.6 485.8 680.7 486.4 680.9C486.9 681.2 488.1 680.7 488.9 680.6C489.8 680.4 490.6 680.3 491.4 680.2C492.3 680.1 493.1 680.0 493.9 679.9C494.7 679.8 495.5 679.7 496.4 679.6C497.2 679.5 498.0 679.4 498.8 679.4C499.6 679.3 500.4 679.2 501.2 679.2C502.0 679.1 502.9 679.0 503.7 679.0C504.5 678.9 505.3 678.8 506.1 678.8C506.9 678.7 507.7 678.6 508.5 678.5C509.3 678.4 510.2 678.3 511.0 678.1C511.8 677.9 512.6 677.8 513.5 677.5C514.3 677.2 515.6 677.1 516.0 676.2C516.4 675.2 516.5 672.7 516.0 671.8Z"/></g><g filter="url(#e1)"><circle cx="521.5" cy="662.5" r="6.3"/></g><g filter="url(#e2)"><path d="M470.0 688.0C471.8 688.5 477.5 689.0 481.0 691.0C484.5 693.0 488.7 696.3 491.0 700.0C493.3 703.7 495.2 708.5 495.0 713.0C494.8 717.5 492.7 723.2 490.0 727.0C487.3 730.8 480.8 734.5 479.0 736.0" fill="none" stroke="#000" stroke-width="11.4" stroke-linecap="round" stroke-linejoin="round"/><circle cx="469" cy="687.5" r="8"/><path d="M468.0 740.0C470.3 740.3 477.3 742.8 482.0 742.0C486.7 741.2 491.5 738.2 496.0 735.0C500.5 731.8 505.3 726.2 509.0 723.0C512.7 719.8 516.5 717.2 518.0 716.0" fill="none" stroke="#000" stroke-width="11.4" stroke-linecap="round" stroke-linejoin="round"/><circle cx="468" cy="739.5" r="9"/><path d="M474.0 765.0C476.2 765.8 482.7 770.5 487.0 770.0C491.3 769.5 496.2 765.7 500.0 762.0C503.8 758.3 506.5 752.2 510.0 748.0C513.5 743.8 516.8 740.2 521.0 737.0C525.2 733.8 532.7 730.3 535.0 729.0" fill="none" stroke="#000" stroke-width="12.4" stroke-linecap="round" stroke-linejoin="round"/><circle cx="473" cy="764.5" r="10"/></g><g filter="url(#e2)"><path d="M508.7 769.1C510.4 768.9 510.9 767.1 511.7 766.0C512.6 765.0 513.2 763.9 513.9 762.8C514.6 761.7 515.2 760.6 515.9 759.5C516.5 758.4 517.2 757.2 517.8 756.1C518.5 754.9 519.2 753.7 519.9 752.5C520.6 751.3 521.4 750.1 522.2 748.9C522.9 747.7 523.8 746.4 524.6 745.2C525.5 743.9 526.4 742.7 527.4 741.4C528.3 740.1 529.3 738.9 530.4 737.6C531.4 736.3 532.5 735.0 533.7 733.7C534.8 732.4 536.1 731.1 537.3 729.7C538.6 728.4 540.9 726.9 541.2 725.6C541.4 724.4 540.1 722.5 538.8 722.4C537.6 722.3 535.3 724.1 533.7 725.0C532.0 725.9 530.4 726.9 528.8 727.9C527.2 728.9 525.7 729.9 524.3 730.9C522.8 732.0 521.4 733.0 520.0 734.1C518.6 735.2 517.3 736.4 516.0 737.5C514.7 738.7 513.5 739.9 512.3 741.1C511.2 742.3 510.1 743.6 509.0 744.9C508.0 746.2 507.0 747.5 506.2 748.8C505.3 750.2 504.5 751.6 503.7 753.0C503.0 754.4 502.4 755.9 501.9 757.4C501.4 758.9 501.0 760.4 500.9 762.0C500.8 763.6 500.0 765.7 501.3 766.9C502.6 768.1 507.0 769.2 508.7 769.1Z"/></g><g filter="url(#e2)"><path d="M539.7 728.9C540.6 729.9 541.5 729.1 542.3 729.1C543.0 729.1 543.6 729.0 544.2 729.0C544.7 728.9 545.2 728.8 545.7 728.8C546.2 728.7 546.6 728.6 547.0 728.6C547.4 728.5 547.7 728.5 548.1 728.5C548.5 728.4 548.8 728.4 549.2 728.4C549.5 728.4 549.9 728.4 550.3 728.4C550.7 728.5 551.2 728.5 551.6 728.7C552.1 728.8 552.6 729.0 553.1 729.2C553.6 729.4 554.1 729.7 554.7 730.1C555.2 730.5 555.8 730.9 556.4 731.4C557.0 731.9 557.4 733.1 558.3 733.0C559.2 732.9 561.3 731.8 561.7 731.0C562.2 730.2 561.2 729.1 560.8 728.3C560.5 727.4 560.1 726.6 559.6 725.8C559.2 725.0 558.7 724.2 558.2 723.5C557.6 722.8 557.0 722.2 556.4 721.5C555.7 720.9 555.0 720.4 554.3 719.9C553.5 719.4 552.7 719.0 551.8 718.6C551.0 718.3 550.1 718.0 549.2 717.8C548.3 717.7 547.3 717.6 546.4 717.6C545.4 717.6 544.5 717.8 543.5 718.0C542.6 718.2 541.7 718.5 540.8 718.9C540.0 719.4 539.1 719.8 538.3 720.5C537.6 721.2 536.1 721.7 536.3 723.1C536.6 724.5 538.7 727.9 539.7 728.9Z"/></g><g filter="url(#e1)"><circle cx="557.5" cy="735" r="7"/><path d="M520.0 770.0C521.3 767.3 524.7 758.5 528.0 754.0C531.3 749.5 538.0 744.8 540.0 743.0" fill="none" stroke="#000" stroke-width="6.9" stroke-linecap="round" stroke-linejoin="round"/></g><g filter="url(#e2)"><path d="M565.0 724.4C564.8 725.8 565.6 726.6 566.0 727.4C566.4 728.3 566.9 728.7 567.4 729.3C567.8 729.9 568.4 730.3 568.9 730.8C569.4 731.3 570.0 731.7 570.6 732.2C571.2 732.6 571.8 733.1 572.4 733.6C573.0 734.0 573.7 734.5 574.3 735.0C575.0 735.6 575.7 736.1 576.4 736.7C577.1 737.3 577.8 737.9 578.5 738.5C579.2 739.2 579.9 739.9 580.7 740.6C581.4 741.3 582.1 742.1 582.9 742.9C583.6 743.7 584.3 744.6 585.1 745.4C585.9 746.3 587.0 747.8 587.5 748.2C588.1 748.6 588.4 748.5 588.5 747.8C588.6 747.1 588.3 745.3 588.1 744.1C588.0 742.9 587.7 741.7 587.5 740.6C587.2 739.4 586.9 738.3 586.6 737.2C586.3 736.1 585.9 735.0 585.5 733.9C585.1 732.9 584.7 731.8 584.2 730.9C583.7 729.9 583.2 728.9 582.7 728.0C582.1 727.0 581.5 726.1 580.9 725.3C580.2 724.5 579.5 723.7 578.8 722.9C578.0 722.2 577.2 721.5 576.4 721.0C575.5 720.4 574.6 719.8 573.6 719.5C572.7 719.1 571.7 718.7 570.6 718.7C569.5 718.8 568.0 718.6 567.0 719.6C566.1 720.5 565.1 723.1 565.0 724.4Z"/></g><g filter="url(#e2)"><path d="M607.0 749.0C605.7 748.3 600.7 747.0 599.0 745.0C597.3 743.0 596.2 739.3 597.0 737.0C597.8 734.7 600.5 732.0 604.0 731.0C607.5 730.0 612.7 730.2 618.0 731.0C623.3 731.8 629.8 734.0 636.0 736.0C642.2 738.0 649.0 741.2 655.0 743.0C661.0 744.8 666.8 747.3 672.0 747.0C677.2 746.7 683.7 742.0 686.0 741.0" fill="none" stroke="#000" stroke-width="9.4" stroke-linecap="round" stroke-linejoin="round"/><circle cx="688" cy="739.5" r="6.8"/><path d="M701.0 749.0C700.0 748.0 695.5 745.2 695.0 743.0C694.5 740.8 695.5 737.4 698.0 736.0C700.5 734.6 705.0 734.0 710.0 734.5C715.0 735.0 721.7 737.2 728.0 739.0C734.3 740.8 741.7 743.5 748.0 745.0C754.3 746.5 761.8 747.8 766.0 748.0C770.2 748.2 771.8 746.3 773.0 746.0" fill="none" stroke="#000" stroke-width="8.9" stroke-linecap="round" stroke-linejoin="round"/><circle cx="774.5" cy="746" r="6.8"/><path d="M791.0 753.0C789.8 752.0 784.7 749.2 784.0 747.0C783.3 744.8 784.3 741.4 787.0 740.0C789.7 738.6 794.8 738.0 800.0 738.5C805.2 739.0 812.3 741.2 818.0 743.0C823.7 744.8 830.0 748.2 834.0 749.0C838.0 749.8 840.7 748.2 842.0 748.0" fill="none" stroke="#000" stroke-width="8.9" stroke-linecap="round" stroke-linejoin="round"/><circle cx="843" cy="747.5" r="6.2"/></g><g filter="url(#e1)"><circle cx="855" cy="756" r="5.3"/><circle cx="867.5" cy="755" r="5.3"/><circle cx="879.5" cy="752.5" r="5.5"/></g></g>
</g>
<path d="M963.0 300.0C961.8 300.2 958.3 300.3 956.0 301.5C953.7 302.7 950.7 304.8 949.0 307.0C947.3 309.2 946.4 312.3 946.0 315.0C945.6 317.7 947.0 321.2 946.5 323.0C946.0 324.8 944.6 326.2 943.0 326.0C941.4 325.8 939.0 322.6 937.0 321.5C935.0 320.4 931.8 318.8 931.0 319.5C930.2 320.2 933.2 324.1 932.5 326.0C931.8 327.9 929.1 330.1 927.0 331.0C924.9 331.9 923.7 331.2 920.0 331.5C916.3 331.8 909.7 332.0 905.0 333.0C900.3 334.0 895.3 335.3 892.0 337.5C888.7 339.7 887.0 342.9 885.0 346.0C883.0 349.1 882.5 353.5 880.0 356.0C877.5 358.5 873.8 359.6 870.0 361.0C866.2 362.4 858.0 363.1 857.0 364.5C856.0 365.9 864.3 368.2 864.0 369.5C863.7 370.8 859.5 371.4 855.0 372.5C850.5 373.6 841.3 374.6 837.0 376.0C832.7 377.4 832.7 379.7 829.0 381.0C825.3 382.3 818.5 383.5 815.0 384.0C811.5 384.5 809.5 384.8 808.0 384.0C806.5 383.2 807.5 380.2 806.0 379.0C804.5 377.8 801.3 376.4 799.0 376.5C796.7 376.6 793.6 377.9 792.0 379.5C790.4 381.1 789.7 383.8 789.5 386.0C789.3 388.2 791.8 390.7 791.0 393.0C790.2 395.3 788.5 397.6 785.0 400.0C781.5 402.4 775.8 404.2 770.0 407.5C764.2 410.8 756.3 415.8 750.0 420.0C743.7 424.2 737.0 428.8 732.0 432.5C727.0 436.2 722.8 439.9 720.0 442.0C717.2 444.1 716.2 444.7 715.0 445.0C713.8 445.3 715.0 443.8 712.5 444.0C710.0 444.2 704.2 445.0 700.0 446.0C695.8 447.0 690.3 448.5 687.0 450.0C683.7 451.5 682.0 453.9 680.0 455.0C678.0 456.1 677.0 455.9 675.0 456.5C673.0 457.1 670.2 457.8 668.0 458.5C665.8 459.2 664.0 461.2 662.0 460.5C660.0 459.8 658.3 455.4 656.0 454.0C653.7 452.6 650.7 451.8 648.0 452.0C645.3 452.2 642.0 453.3 640.0 455.0C638.0 456.7 637.5 460.5 636.0 462.0C634.5 463.5 633.3 463.8 631.0 464.0C628.7 464.2 625.2 463.0 622.0 463.5C618.8 464.0 614.7 465.8 612.0 467.0C609.3 468.2 608.2 470.5 606.0 471.0C603.8 471.5 601.7 469.3 599.0 470.0C596.3 470.7 592.3 473.2 590.0 475.0C587.7 476.8 586.7 479.3 585.0 481.0C583.3 482.7 582.9 483.7 580.0 485.0C577.1 486.3 571.7 486.9 567.5 489.0C563.3 491.1 558.4 494.9 555.0 497.5C551.6 500.1 546.7 502.2 547.0 504.5C547.3 506.8 556.5 509.2 557.0 511.0C557.5 512.8 553.2 512.8 550.0 515.0C546.8 517.2 541.2 520.2 537.5 524.0C533.8 527.8 531.7 534.0 527.5 537.5C523.3 541.0 518.3 541.4 512.5 545.0C506.7 548.6 497.2 555.8 492.5 559.0C487.8 562.2 486.9 560.5 484.0 564.0C481.1 567.5 477.8 574.4 475.0 580.0C472.2 585.6 469.3 591.7 467.5 597.5C465.7 603.3 464.4 608.8 464.0 615.0C463.6 621.2 464.8 628.3 465.0 635.0C465.2 641.7 465.7 649.2 465.0 655.0C464.3 660.8 461.2 666.2 461.0 670.0C460.8 673.8 463.8 674.6 464.0 677.5C464.2 680.4 461.4 684.4 462.0 687.5C462.6 690.6 464.9 693.5 467.5 696.0C470.1 698.5 475.3 699.8 477.5 702.5C479.7 705.2 480.9 708.8 480.5 712.5C480.1 716.2 477.6 721.7 475.0 725.0C472.4 728.3 467.5 730.0 465.0 732.5C462.5 735.0 460.2 737.2 460.0 740.0C459.8 742.8 461.2 746.7 463.5 749.0C465.8 751.3 473.8 752.2 474.0 754.0C474.2 755.8 466.8 757.7 465.0 760.0C463.2 762.3 463.2 765.2 463.5 768.0C463.8 770.8 465.1 774.9 467.0 777.0C468.9 779.1 473.7 779.9 475.0 780.5L1451.0 780.5C1452.3 779.9 1457.1 779.1 1459.0 777.0C1460.9 774.9 1462.2 770.8 1462.5 768.0C1462.8 765.2 1462.8 762.3 1461.0 760.0C1459.2 757.7 1451.8 755.8 1452.0 754.0C1452.2 752.2 1460.2 751.3 1462.5 749.0C1464.8 746.7 1466.2 742.8 1466.0 740.0C1465.8 737.2 1463.5 735.0 1461.0 732.5C1458.5 730.0 1453.6 728.3 1451.0 725.0C1448.4 721.7 1445.9 716.2 1445.5 712.5C1445.1 708.8 1446.3 705.2 1448.5 702.5C1450.7 699.8 1455.9 698.5 1458.5 696.0C1461.1 693.5 1463.4 690.6 1464.0 687.5C1464.6 684.4 1461.8 680.4 1462.0 677.5C1462.2 674.6 1465.2 673.8 1465.0 670.0C1464.8 666.2 1461.7 660.8 1461.0 655.0C1460.3 649.2 1460.8 641.7 1461.0 635.0C1461.2 628.3 1462.4 621.2 1462.0 615.0C1461.6 608.8 1460.3 603.3 1458.5 597.5C1456.7 591.7 1453.8 585.6 1451.0 580.0C1448.2 574.4 1444.9 567.5 1442.0 564.0C1439.1 560.5 1438.2 562.2 1433.5 559.0C1428.8 555.8 1419.3 548.6 1413.5 545.0C1407.7 541.4 1402.7 541.0 1398.5 537.5C1394.3 534.0 1392.2 527.8 1388.5 524.0C1384.8 520.2 1379.2 517.2 1376.0 515.0C1372.8 512.8 1368.5 512.8 1369.0 511.0C1369.5 509.2 1378.7 506.8 1379.0 504.5C1379.3 502.2 1374.4 500.1 1371.0 497.5C1367.6 494.9 1362.7 491.1 1358.5 489.0C1354.3 486.9 1348.9 486.3 1346.0 485.0C1343.1 483.7 1342.7 482.7 1341.0 481.0C1339.3 479.3 1338.3 476.8 1336.0 475.0C1333.7 473.2 1329.7 470.7 1327.0 470.0C1324.3 469.3 1322.2 471.5 1320.0 471.0C1317.8 470.5 1316.7 468.2 1314.0 467.0C1311.3 465.8 1307.2 464.0 1304.0 463.5C1300.8 463.0 1297.3 464.2 1295.0 464.0C1292.7 463.8 1291.5 463.5 1290.0 462.0C1288.5 460.5 1288.0 456.7 1286.0 455.0C1284.0 453.3 1280.7 452.2 1278.0 452.0C1275.3 451.8 1272.3 452.6 1270.0 454.0C1267.7 455.4 1266.0 459.8 1264.0 460.5C1262.0 461.2 1260.2 459.2 1258.0 458.5C1255.8 457.8 1253.0 457.1 1251.0 456.5C1249.0 455.9 1248.0 456.1 1246.0 455.0C1244.0 453.9 1242.3 451.5 1239.0 450.0C1235.7 448.5 1230.2 447.0 1226.0 446.0C1221.8 445.0 1216.0 444.2 1213.5 444.0C1211.0 443.8 1212.2 445.3 1211.0 445.0C1209.8 444.7 1208.8 444.1 1206.0 442.0C1203.2 439.9 1199.0 436.2 1194.0 432.5C1189.0 428.8 1182.3 424.2 1176.0 420.0C1169.7 415.8 1161.8 410.8 1156.0 407.5C1150.2 404.2 1144.5 402.4 1141.0 400.0C1137.5 397.6 1135.8 395.3 1135.0 393.0C1134.2 390.7 1136.7 388.2 1136.5 386.0C1136.3 383.8 1135.6 381.1 1134.0 379.5C1132.4 377.9 1129.3 376.6 1127.0 376.5C1124.7 376.4 1121.5 377.8 1120.0 379.0C1118.5 380.2 1119.5 383.2 1118.0 384.0C1116.5 384.8 1114.5 384.5 1111.0 384.0C1107.5 383.5 1100.7 382.3 1097.0 381.0C1093.3 379.7 1093.3 377.4 1089.0 376.0C1084.7 374.6 1075.5 373.6 1071.0 372.5C1066.5 371.4 1062.3 370.8 1062.0 369.5C1061.7 368.2 1070.0 365.9 1069.0 364.5C1068.0 363.1 1059.8 362.4 1056.0 361.0C1052.2 359.6 1048.5 358.5 1046.0 356.0C1043.5 353.5 1043.0 349.1 1041.0 346.0C1039.0 342.9 1037.3 339.7 1034.0 337.5C1030.7 335.3 1025.7 334.0 1021.0 333.0C1016.3 332.0 1009.7 331.8 1006.0 331.5C1002.3 331.2 1001.1 331.9 999.0 331.0C996.9 330.1 994.2 327.9 993.5 326.0C992.8 324.1 995.8 320.2 995.0 319.5C994.2 318.8 991.0 320.4 989.0 321.5C987.0 322.6 984.6 325.8 983.0 326.0C981.4 326.2 980.0 324.8 979.5 323.0C979.0 321.2 980.4 317.7 980.0 315.0C979.6 312.3 978.7 309.2 977.0 307.0C975.3 304.8 972.3 302.7 970.0 301.5C967.7 300.3 964.2 300.2 963.0 300.0Z" fill="none" stroke="#2a2a2a" stroke-width="0.9" stroke-opacity=".75"/>
<path d="M500.5 613.0C500.8 610.2 503.6 600.4 506.7 595.0C509.8 589.6 514.2 584.6 519.0 580.5C523.8 576.4 529.2 572.8 535.5 570.5C541.8 568.2 549.8 567.3 557.0 567.0C564.2 566.7 571.2 567.5 578.5 568.8C585.8 570.1 592.7 572.0 600.5 575.0C608.3 578.0 617.1 582.1 625.4 586.5C633.6 590.9 641.4 595.8 650.0 601.5C658.6 607.2 669.8 615.7 677.0 621.0C684.2 626.3 692.2 630.8 693.5 633.5C694.8 636.2 689.6 638.8 685.0 637.5C680.4 636.2 672.7 630.5 666.0 626.0C659.3 621.5 652.0 615.4 645.0 610.7C638.0 606.0 631.6 601.8 624.0 597.7C616.4 593.6 607.1 589.0 599.5 586.2C591.9 583.4 585.6 581.8 578.5 580.7C571.4 579.6 564.0 579.0 557.0 579.7C550.0 580.4 542.2 582.5 536.5 584.7C530.8 586.9 527.0 589.7 523.0 592.7C519.0 595.7 515.5 599.3 512.5 602.5C509.5 605.7 507.0 610.2 505.0 612.0C503.0 613.8 500.2 615.8 500.5 613.0ZM703.5 649.0C705.8 648.8 714.6 651.6 720.5 654.5C726.4 657.4 733.0 662.7 739.0 666.5C745.0 670.3 750.8 673.8 756.6 677.5C762.4 681.2 768.2 685.5 774.0 688.5C779.8 691.5 784.6 693.2 791.5 695.5C798.4 697.8 813.2 700.5 815.5 702.5C817.8 704.5 809.2 706.8 805.0 707.5C800.8 708.2 796.0 707.6 790.5 706.7C785.0 705.8 778.0 704.5 772.0 702.0C766.0 699.5 760.4 695.5 754.6 691.7C748.8 687.9 742.9 683.2 737.0 679.0C731.1 674.8 724.0 670.4 719.0 666.5C714.0 662.6 709.6 658.4 707.0 655.5C704.4 652.6 701.2 649.2 703.5 649.0ZM1425.5 613.0C1425.2 610.2 1422.4 600.4 1419.3 595.0C1416.2 589.6 1411.8 584.6 1407.0 580.5C1402.2 576.4 1396.8 572.8 1390.5 570.5C1384.2 568.2 1376.2 567.3 1369.0 567.0C1361.8 566.7 1354.8 567.5 1347.5 568.8C1340.2 570.1 1333.3 572.0 1325.5 575.0C1317.7 578.0 1308.8 582.1 1300.6 586.5C1292.3 590.9 1284.6 595.8 1276.0 601.5C1267.4 607.2 1256.2 615.7 1249.0 621.0C1241.8 626.3 1233.8 630.8 1232.5 633.5C1231.2 636.2 1236.4 638.8 1241.0 637.5C1245.6 636.2 1253.3 630.5 1260.0 626.0C1266.7 621.5 1274.0 615.4 1281.0 610.7C1288.0 606.0 1294.4 601.8 1302.0 597.7C1309.6 593.6 1318.9 589.0 1326.5 586.2C1334.1 583.4 1340.4 581.8 1347.5 580.7C1354.6 579.6 1362.0 579.0 1369.0 579.7C1376.0 580.4 1383.8 582.5 1389.5 584.7C1395.2 586.9 1399.0 589.7 1403.0 592.7C1407.0 595.7 1410.5 599.3 1413.5 602.5C1416.5 605.7 1419.0 610.2 1421.0 612.0C1423.0 613.8 1425.8 615.8 1425.5 613.0ZM1222.5 649.0C1220.2 648.8 1211.4 651.6 1205.5 654.5C1199.6 657.4 1193.0 662.7 1187.0 666.5C1181.0 670.3 1175.2 673.8 1169.4 677.5C1163.6 681.2 1157.8 685.5 1152.0 688.5C1146.2 691.5 1141.4 693.2 1134.5 695.5C1127.6 697.8 1112.8 700.5 1110.5 702.5C1108.2 704.5 1116.8 706.8 1121.0 707.5C1125.2 708.2 1130.0 707.6 1135.5 706.7C1141.0 705.8 1148.0 704.5 1154.0 702.0C1160.0 699.5 1165.6 695.5 1171.4 691.7C1177.2 687.9 1183.1 683.2 1189.0 679.0C1194.9 674.8 1202.0 670.4 1207.0 666.5C1212.0 662.6 1216.4 658.4 1219.0 655.5C1221.6 652.6 1224.8 649.2 1222.5 649.0Z" fill="none" stroke="#333" stroke-width="0.8" stroke-opacity=".6"/>
</svg>
</body></html>
